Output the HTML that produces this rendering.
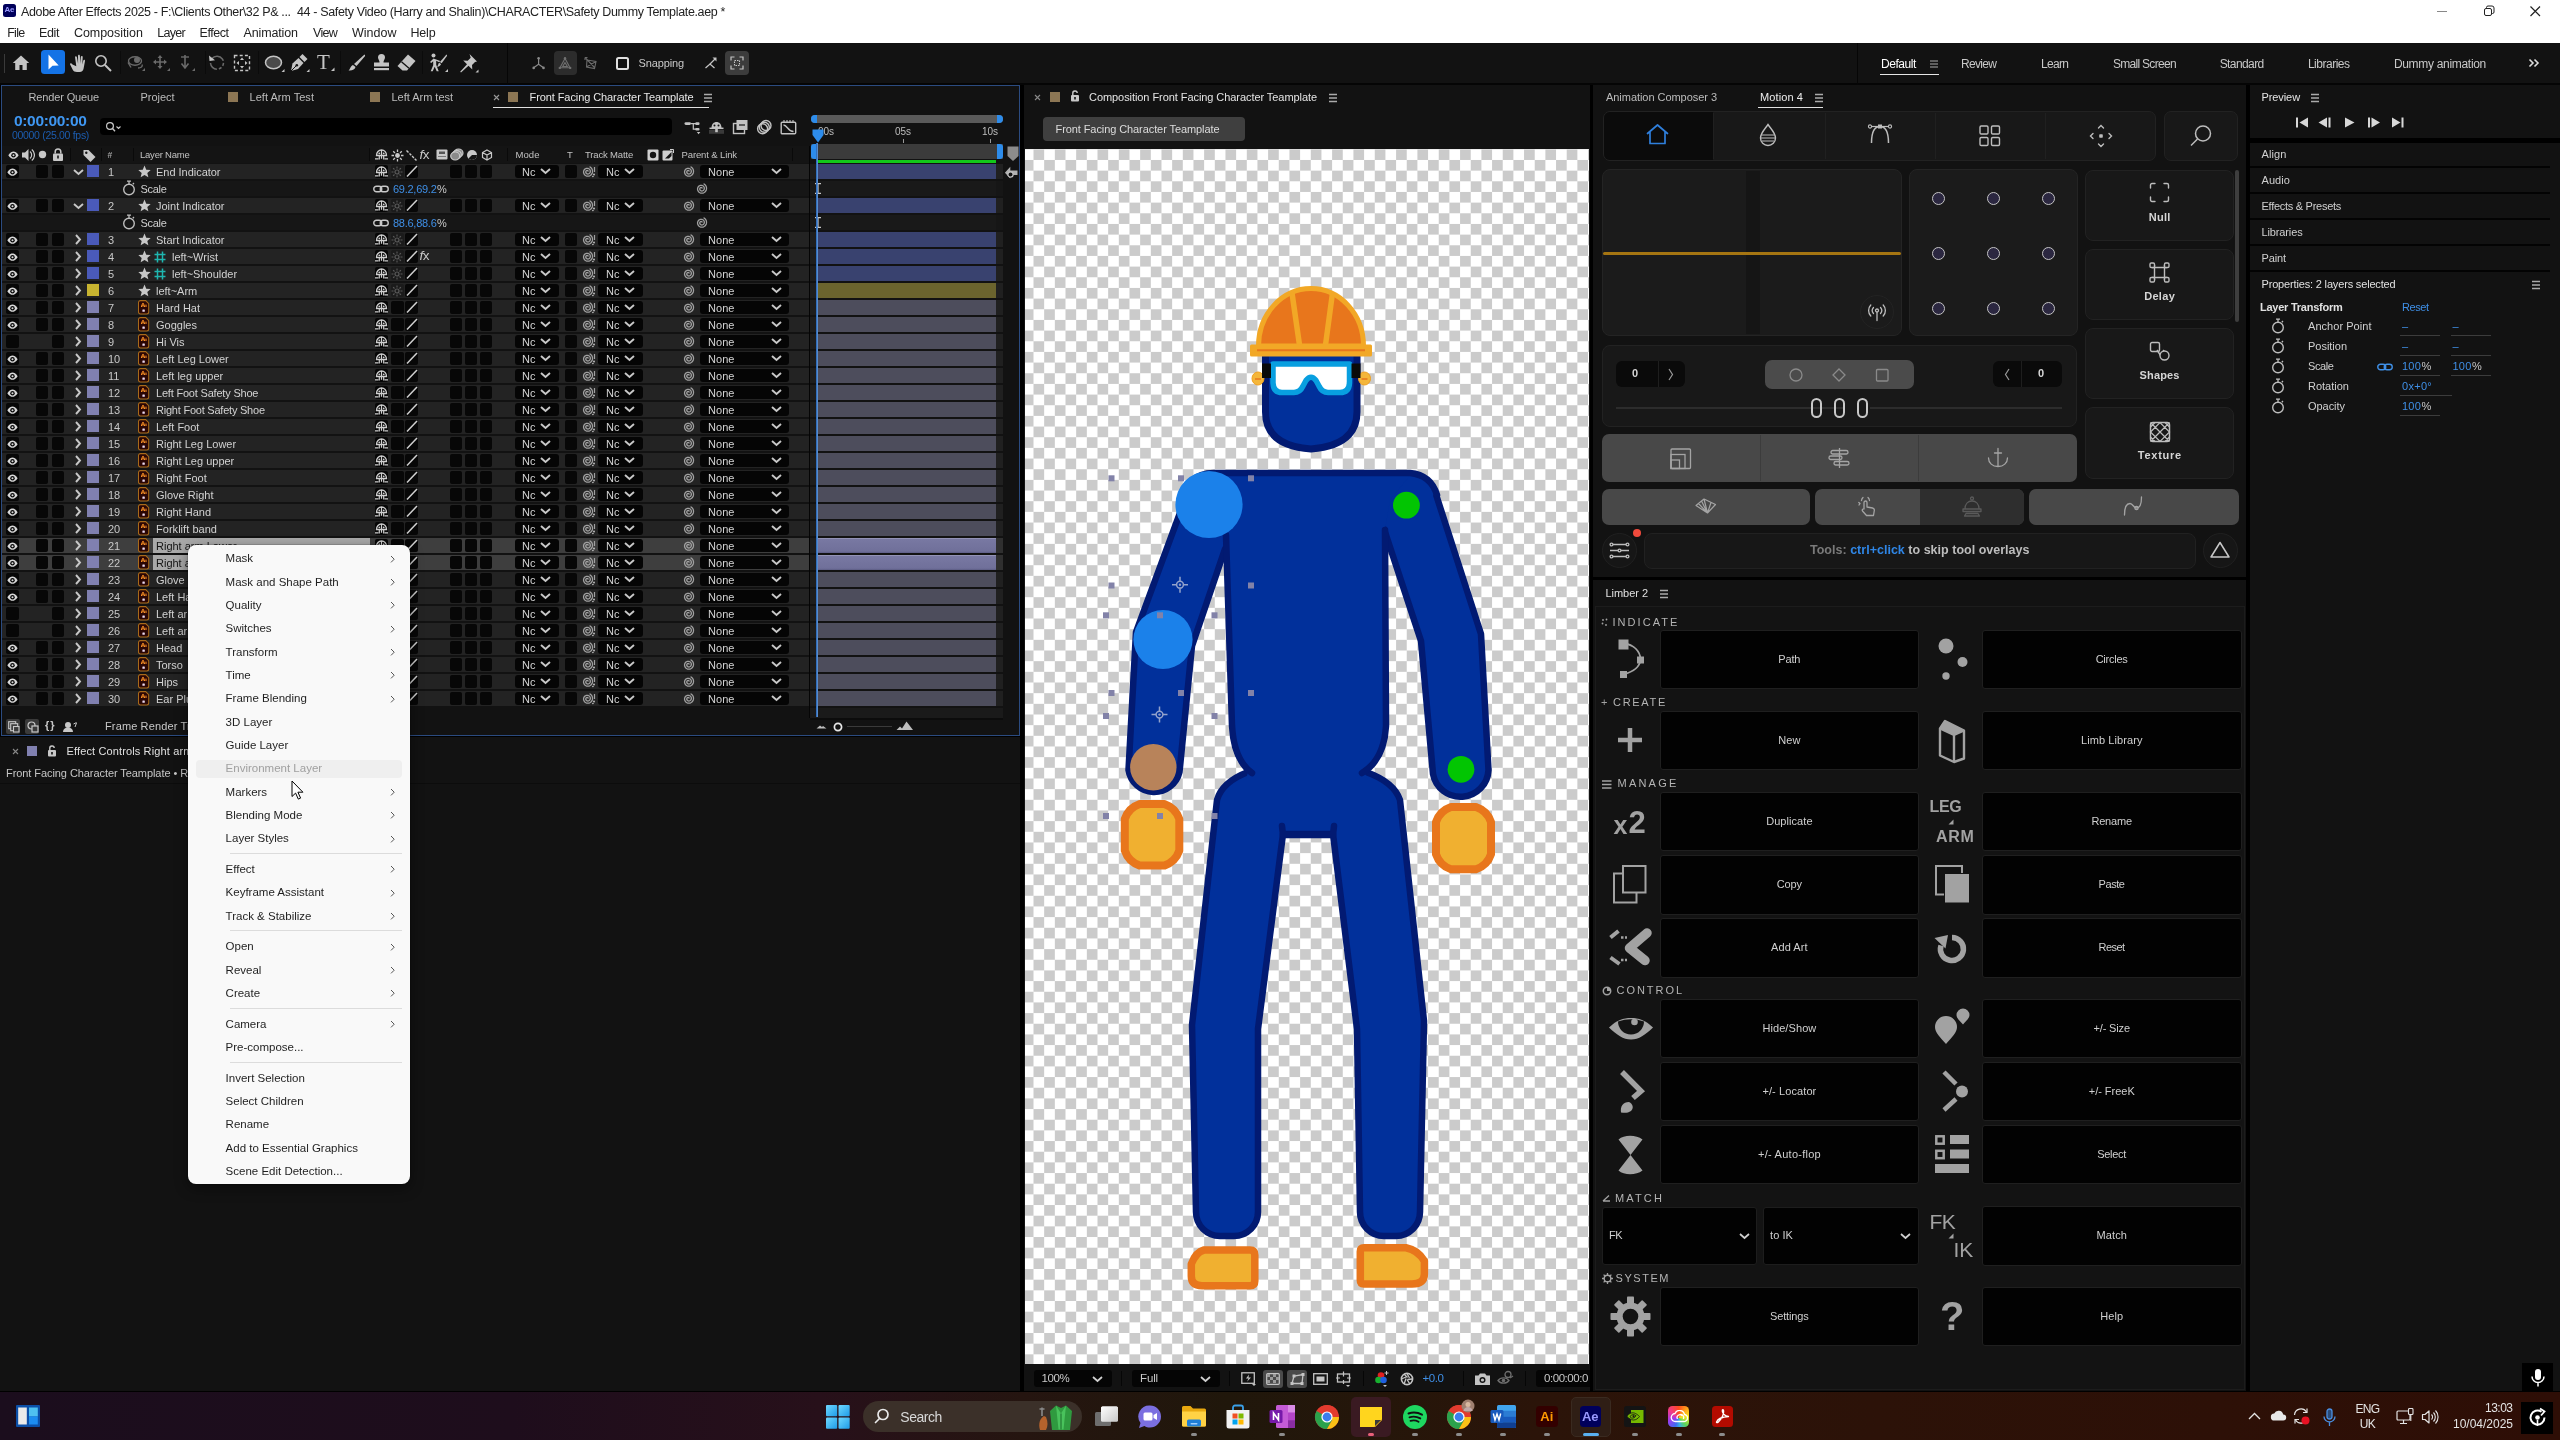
<!DOCTYPE html><html><head><meta charset="utf-8"><title>After Effects</title><style>html,body{margin:0;padding:0;background:#000;overflow:hidden}body{width:2560px;height:1440px;position:relative;font-family:"Liberation Sans",sans-serif}.t{position:absolute;white-space:pre;font-family:"Liberation Sans",sans-serif}.b{position:absolute;display:block}</style></head><body><div id="root" style="position:absolute;left:0;top:0;width:2560px;height:1440px;will-change:transform"><!-- sec_top --><div class="b" style="left:0.00px;top:0.00px;width:2560.00px;height:43.00px;background:#ffffff;"></div><div class="b" style="left:3.00px;top:4.00px;width:13.00px;height:13.00px;background:#00005b;border-radius:2.5px;"><span style="position:absolute;left:1.6px;top:2.2px;font:700 8px/8px 'Liberation Sans',sans-serif;color:#9999ff;letter-spacing:-0.3px">Ae</span></div><span class="t" style="top:5.74px;font-size:12.5px;line-height:12.5px;color:#222;letter-spacing:-0.348px;left:21.00px;">Adobe After Effects 2025 - F:\Clients Other\32 P&amp; ...  44 - Safety Video (Harry and Shalin)\CHARACTER\Safety Dummy Template.aep *</span><span class="t" style="top:26.74px;font-size:12.5px;line-height:12.5px;color:#222;letter-spacing:-0.700px;left:7.20px;">File</span><span class="t" style="top:26.74px;font-size:12.5px;line-height:12.5px;color:#222;letter-spacing:-0.387px;left:39.00px;">Edit</span><span class="t" style="top:26.74px;font-size:12.5px;line-height:12.5px;color:#222;letter-spacing:-0.062px;left:74.00px;">Composition</span><span class="t" style="top:26.74px;font-size:12.5px;line-height:12.5px;color:#222;letter-spacing:-0.700px;left:157.30px;">Layer</span><span class="t" style="top:26.74px;font-size:12.5px;line-height:12.5px;color:#222;letter-spacing:-0.456px;left:199.60px;">Effect</span><span class="t" style="top:26.74px;font-size:12.5px;line-height:12.5px;color:#222;letter-spacing:-0.144px;left:243.50px;">Animation</span><span class="t" style="top:26.74px;font-size:12.5px;line-height:12.5px;color:#222;letter-spacing:-0.700px;left:313.00px;">View</span><span class="t" style="top:26.74px;font-size:12.5px;line-height:12.5px;color:#222;letter-spacing:-0.011px;left:352.00px;">Window</span><span class="t" style="top:26.74px;font-size:12.5px;line-height:12.5px;color:#222;letter-spacing:-0.205px;left:410.50px;">Help</span><svg class="b" style="left:2432.00px;top:0.00px;" width="120" height="22" viewBox="0 0 120 22"><path d="M5 11.5h10" stroke="#888" stroke-width="1"/><rect x="52.5" y="8.5" width="7" height="7" rx="1.5" fill="none" stroke="#222" stroke-width="1"/><path d="M54.5 8.5v-1a1.5 1.5 0 0 1 1.5-1.5h4a2 2 0 0 1 2 2v4a1.5 1.5 0 0 1-1.5 1.5h-1" fill="none" stroke="#222" stroke-width="1"/><path d="M98.5 6.5l9.5 9.5m0-9.5l-9.5 9.5" stroke="#222" stroke-width="1.2"/></svg><div class="b" style="left:0.00px;top:43.00px;width:2560.00px;height:40.00px;background:#121212;"></div><div class="b" style="left:0.00px;top:83.00px;width:2560.00px;height:2.00px;background:#050505;"></div><div class="b" style="left:507.00px;top:43.00px;width:1.00px;height:42.00px;background:#060606;"></div><div class="b" style="left:1857.00px;top:43.00px;width:1.00px;height:42.00px;background:#060606;"></div><div class="b" style="left:3.50px;top:54.00px;width:1.50px;height:19.00px;background:#3a3a3a;"></div><svg class="b" style="left:12.00px;top:54.00px;" width="18" height="18" viewBox="0 0 18 18"><path d="M9 1.5L0.8 9h2.4v7h4.3v-5h3v5h4.3V9h2.4z" fill="#c4c4c4"/></svg><div class="b" style="left:40.90px;top:50.40px;width:24.00px;height:24.00px;background:#1473e6;border-radius:3.5px;"></div><svg class="b" style="left:40.90px;top:50.40px;" width="24" height="24" viewBox="0 0 24 24"><path d="M7.5 4.5v15l4-3.8 6.2-.3z" fill="#fff"/></svg><svg class="b" style="left:69.00px;top:54.00px;" width="18" height="18" viewBox="0 0 18 18"><path d="M3.5 10.5c-1-1.5-2.6-1.6-2.5-.2l2.6 5.2c1 1.8 2.2 2.5 4.4 2.5h2.6c2.4 0 3.6-1.4 4-3.4l1.4-7.7c.2-1.3-1.3-1.6-1.7-.3l-1 3.8.4-7.4c0-1.4-1.8-1.4-1.9 0l-.5 6.8-.4-8c0-1.5-1.9-1.5-1.9 0l.1 8-1.2-6.6c-.3-1.4-2-1.1-1.8.3l1.2 8.800z" fill="#c4c4c4"/></svg><svg class="b" style="left:94.00px;top:54.00px;" width="18" height="18" viewBox="0 0 18 18"><circle cx="7" cy="7" r="5.2" fill="none" stroke="#c4c4c4" stroke-width="1.6"/><path d="M11 11l6 6" stroke="#c4c4c4" stroke-width="2"/></svg><div class="b" style="left:119.50px;top:51.00px;width:1.00px;height:23.00px;background:#0b0b0b;"></div><div class="b" style="left:205.00px;top:51.00px;width:1.00px;height:23.00px;background:#0b0b0b;"></div><div class="b" style="left:258.00px;top:51.00px;width:1.00px;height:23.00px;background:#0b0b0b;"></div><div class="b" style="left:340.00px;top:51.00px;width:1.00px;height:23.00px;background:#0b0b0b;"></div><div class="b" style="left:422.00px;top:51.00px;width:1.00px;height:23.00px;background:#0b0b0b;"></div><svg class="b" style="left:126.00px;top:54.00px;" width="20" height="20" viewBox="0 0 20 20"><ellipse cx="9" cy="7" rx="6.5" ry="4.2" fill="none" stroke="#6a6a6a" stroke-width="1.4"/><circle cx="11" cy="6" r="3" fill="#6a6a6a"/><path d="M2 8.500l3 5M12 14c3 0 5-1.500 4-3.500" fill="none" stroke="#6a6a6a" stroke-width="1.4"/><path d="M16 17l3-3v3z" fill="#6a6a6a"/></svg><svg class="b" style="left:151.00px;top:54.00px;" width="20" height="20" viewBox="0 0 20 20"><path d="M9 1l2.500 3h-1.700v3.200h3.200V5.500l3 2.500-3 2.500V8.800H9.800v3.200h1.700L9 15l-2.500-3h1.700V8.800H5v1.700L2 8l3-2.500v1.700h3.200V4H6.500z" fill="#6a6a6a"/><path d="M16 17l3-3v3z" fill="#6a6a6a"/></svg><svg class="b" style="left:176.00px;top:54.00px;" width="20" height="20" viewBox="0 0 20 20"><path d="M9 1v12M5.500 9.500L9 14l3.500-4.500" fill="none" stroke="#6a6a6a" stroke-width="1.6"/><path d="M5 3h8" stroke="#6a6a6a" stroke-width="1.4"/><path d="M16 17l3-3v3z" fill="#6a6a6a"/></svg><svg class="b" style="left:208.00px;top:54.00px;" width="18" height="18" viewBox="0 0 18 18"><path d="M4 4.500A6.500 6.500 0 1 1 2.500 9" fill="none" stroke="#6a6a6a" stroke-width="1.5" stroke-dasharray="14 2 3 2 3 2 20"/><path d="M1 1.500l.5 5.500 5.500-.8z" fill="#c4c4c4"/></svg><svg class="b" style="left:233.00px;top:54.00px;" width="18" height="18" viewBox="0 0 18 18"><rect x="1.500" y="1.500" width="15" height="15" fill="none" stroke="#c4c4c4" stroke-width="1.400" stroke-dasharray="3 2.200"/><path d="M9 3.500l2 2.500H7zM9 14.500l2-2.500H7zM3.500 9l2.500-2v4zM14.500 9l-2.500-2v4z" fill="#c4c4c4"/></svg><svg class="b" style="left:264.00px;top:54.00px;" width="22" height="20" viewBox="0 0 22 20"><ellipse cx="9.500" cy="8.500" rx="8" ry="6.300" fill="#4a4a4a" stroke="#c4c4c4" stroke-width="1.500"/><path d="M17.500 18l3-3v3z" fill="#c4c4c4"/></svg><svg class="b" style="left:289.00px;top:53.00px;" width="22" height="21" viewBox="0 0 22 21"><path d="M2 18l1.500-7.500 6-5.500 5 5-5.500 6z" fill="#c4c4c4"/><path d="M10.500 4l3-3 5 5-3 3z" fill="#c4c4c4"/><path d="M2 18l5-5" stroke="#121212" stroke-width="1"/><circle cx="7.800" cy="12.200" r="1.300" fill="#121212"/><path d="M17.500 19l3-3v3z" fill="#c4c4c4"/></svg><span class="t" style="top:52.35px;font-size:21px;line-height:21px;color:#c4c4c4;font-family:'Liberation Serif',serif;left:317.00px;">T</span><svg class="b" style="left:330.00px;top:66.00px;" width="6" height="6" viewBox="0 0 6 6"><path d="M1 5l3.500-3.500v3.500z" fill="#c4c4c4"/></svg><svg class="b" style="left:347.00px;top:53.00px;" width="20" height="20" viewBox="0 0 20 20"><path d="M17.500 1.500c.8.600.7 1.300.2 2L9.500 13 7 11z" fill="#c4c4c4"/><path d="M6 12l2.500 2c-.5 2.500-3.500 4-7 3.500 2-1 1.500-4.500 4.500-5.500z" fill="#c4c4c4"/></svg><svg class="b" style="left:372.00px;top:53.00px;" width="20" height="20" viewBox="0 0 20 20"><path d="M7.500 9.500c.3-2-1.500-3-1.500-5a3.500 3.500 0 0 1 7 0c0 2-1.800 3-1.500 5h5.500v4H2v-4z" fill="#c4c4c4"/><rect x="2" y="15" width="15" height="2.200" fill="#c4c4c4"/></svg><svg class="b" style="left:396.00px;top:53.00px;" width="21" height="20" viewBox="0 0 21 20"><path d="M12 1.500l7.500 6.500-8.500 9.500H6.500L1.500 13z" fill="#c4c4c4"/><path d="M5.500 8.800l7.500 6.500" stroke="#121212" stroke-width="1.300"/></svg><svg class="b" style="left:427.00px;top:52.00px;" width="22" height="22" viewBox="0 0 22 22"><circle cx="6.500" cy="3.500" r="2" fill="#c4c4c4"/><path d="M6.500 6.500l-3.500 3.500 1.200 1 2-1.800v4l-2.500 6h2l2-4.500 2 4.500h2l-2.500-6.500v-4l3 1.500 1-1.300z" fill="#c4c4c4"/><path d="M19.500 2.500c.8.500.600 1.200.2 1.800l-5 7-1.800-1.300z" fill="#c4c4c4"/><path d="M12.200 10.800l1.800 1.300c-.300 1.800-2 2.800-4 2.500 1.300-.800 1-3 2.200-3.800z" fill="#c4c4c4"/><path d="M18 20l3-3v3z" fill="#c4c4c4"/></svg><svg class="b" style="left:458.00px;top:53.00px;" width="22" height="21" viewBox="0 0 22 21"><path d="M11.500 1l7.500 7.500-2 .5-3 3 .3 4.500-3.800-3.800L3 19.500l-.8-.8 6.800-7.500L5.200 7.400l4.500.300 3-3z" fill="#c4c4c4"/><path d="M17.500 19.500l3-3v3z" fill="#c4c4c4"/></svg><svg class="b" style="left:530.00px;top:54.00px;" width="18" height="18" viewBox="0 0 18 18"><path d="M8.600 4.500v5.800l-4.600 3.300M8.600 10.300l4.600 3.300" fill="none" stroke="#8a8a8a" stroke-width="1.200"/><circle cx="8.600" cy="4.300" r="1.300" fill="#8a8a8a"/><circle cx="3.700" cy="13.900" r="1.300" fill="#8a8a8a"/><circle cx="13.500" cy="13.900" r="1.300" fill="#8a8a8a"/></svg><div class="b" style="left:554.00px;top:50.50px;width:23.00px;height:24.00px;background:#2c2c2c;border-radius:4px;"></div><svg class="b" style="left:556.00px;top:54.00px;" width="18" height="18" viewBox="0 0 18 18"><path d="M9 4.500L4 13.700h10zM9 8.500l-2.300 4h4.600z" fill="none" stroke="#707070" stroke-width="1.100"/><circle cx="9" cy="4.300" r="1.200" fill="#707070"/><circle cx="3.800" cy="13.900" r="1.200" fill="#707070"/><circle cx="14.200" cy="13.900" r="1.200" fill="#707070"/></svg><svg class="b" style="left:582.00px;top:54.00px;" width="18" height="18" viewBox="0 0 18 18"><path d="M5 6l9 1.500-1.500 7-8-1.500zM3.500 4l9.500 10M14 7.500l-9.500 5.500" fill="none" stroke="#6a6a6a" stroke-width="1.100"/><path d="M3 3.500h2.500M3 3.500v2.500" stroke="#6a6a6a" stroke-width="1.100"/></svg><div class="b" style="left:616.00px;top:56.50px;width:13.00px;height:13.00px;border-radius:2.5px;border:2px solid #e0e0e0;box-sizing:border-box;"></div><span class="t" style="top:57.52px;font-size:11.0px;line-height:11.0px;color:#c8c8c8;letter-spacing:-0.125px;left:638.60px;">Snapping</span><svg class="b" style="left:702.00px;top:54.00px;" width="18" height="18" viewBox="0 0 18 18"><path d="M3.500 14l4.500-4 4.500 4" fill="none" stroke="#c4c4c4" stroke-width="1.300"/><path d="M8 10l5.500-5.500" stroke="#c4c4c4" stroke-width="1.300"/><path d="M10.500 3.500h4v4z" fill="#c4c4c4"/></svg><div class="b" style="left:725.00px;top:50.50px;width:24.00px;height:24.00px;background:#3c3c3c;border-radius:4px;"></div><svg class="b" style="left:728.00px;top:53.50px;" width="18" height="18" viewBox="0 0 18 18"><path d="M3 6.500V3h3.500M11.500 3H15v3.500M15 11.500V15h-3.500M6.500 15H3v-3.500" fill="none" stroke="#c4c4c4" stroke-width="1.200"/><rect x="6.500" y="6.500" width="5" height="5" fill="none" stroke="#c4c4c4" stroke-width="1.100" stroke-dasharray="1.500 1"/></svg><span class="t" style="top:57.60px;font-size:12.0px;line-height:12.0px;color:#fff;letter-spacing:-0.433px;left:1881.00px;">Default</span><span class="t" style="top:57.60px;font-size:12.0px;line-height:12.0px;color:#c8c8c8;letter-spacing:-0.700px;left:1961.00px;">Review</span><span class="t" style="top:57.60px;font-size:12.0px;line-height:12.0px;color:#c8c8c8;letter-spacing:-0.700px;left:2041.00px;">Learn</span><span class="t" style="top:57.60px;font-size:12.0px;line-height:12.0px;color:#c8c8c8;letter-spacing:-0.700px;left:2112.90px;">Small Screen</span><span class="t" style="top:57.60px;font-size:12.0px;line-height:12.0px;color:#c8c8c8;letter-spacing:-0.588px;left:2219.70px;">Standard</span><span class="t" style="top:57.60px;font-size:12.0px;line-height:12.0px;color:#c8c8c8;letter-spacing:-0.481px;left:2307.90px;">Libraries</span><span class="t" style="top:57.60px;font-size:12.0px;line-height:12.0px;color:#c8c8c8;letter-spacing:-0.307px;left:2393.90px;">Dummy animation</span><svg class="b" style="left:1929.00px;top:59.00px;" width="10" height="10" viewBox="0 0 10 10"><path d="M1 2h8M1 5h8M1 8h8" stroke="#aaa" stroke-width="1.200"/></svg><div class="b" style="left:1880.00px;top:73.50px;width:59.00px;height:1.50px;background:#e6e6e6;"></div><svg class="b" style="left:2528.00px;top:58.00px;" width="12" height="10" viewBox="0 0 12 10"><path d="M1.500 1.500l3.500 3.500-3.500 3.500M6.500 1.500l3.500 3.500-3.500 3.500" fill="none" stroke="#ddd" stroke-width="1.600"/></svg>
<!-- sec_timeline --><div class="b" style="left:1.00px;top:85.00px;width:1019.00px;height:651.00px;background:#121212;border:1px solid #2b4b80;box-sizing:border-box;"></div><span class="t" style="top:91.62px;font-size:11.0px;line-height:11.0px;color:#bcbcbc;letter-spacing:-0.139px;left:28.50px;">Render Queue</span><span class="t" style="top:91.62px;font-size:11.0px;line-height:11.0px;color:#bcbcbc;letter-spacing:-0.036px;left:140.50px;">Project</span><div class="b" style="left:228.00px;top:91.50px;width:10.00px;height:10.00px;background:#8c7654;"></div><span class="t" style="top:91.62px;font-size:11.0px;line-height:11.0px;color:#bcbcbc;letter-spacing:0.038px;left:249.50px;">Left Arm Test</span><div class="b" style="left:370.00px;top:91.50px;width:10.00px;height:10.00px;background:#8c7654;"></div><span class="t" style="top:91.62px;font-size:11.0px;line-height:11.0px;color:#bcbcbc;letter-spacing:-0.019px;left:391.50px;">Left Arm test</span><svg class="b" style="left:493.00px;top:94.00px;" width="7" height="7" viewBox="0 0 7 7"><path d="M1 1l5 5M6 1L1 6" stroke="#999" stroke-width="1.100"/></svg><div class="b" style="left:508.00px;top:91.50px;width:10.00px;height:10.00px;background:#8c7654;"></div><span class="t" style="top:91.62px;font-size:11.0px;line-height:11.0px;color:#e8e8e8;letter-spacing:-0.085px;left:529.50px;">Front Facing Character Teamplate</span><svg class="b" style="left:703.00px;top:92.50px;" width="10" height="10" viewBox="0 0 10 10"><path d="M1 1.500h8M1 5h8M1 8.500h8" stroke="#aaa" stroke-width="1.300"/></svg><div class="b" style="left:493.00px;top:106.50px;width:216.00px;height:1.50px;background:#e0e0e0;"></div><span class="t" style="top:112.99px;font-size:15.5px;line-height:15.5px;color:#3f97f2;font-weight:700;letter-spacing:-0.333px;left:14.00px;">0:00:00:00</span><span class="t" style="top:129.88px;font-size:10.5px;line-height:10.5px;color:#1c5cae;letter-spacing:-0.312px;left:12.00px;">00000 (25.00 fps)</span><div class="b" style="left:100.00px;top:117.50px;width:572.00px;height:17.00px;background:#000;border-radius:4px;"></div><svg class="b" style="left:105.00px;top:120.50px;" width="18" height="12" viewBox="0 0 18 12"><circle cx="5" cy="5" r="3.400" fill="none" stroke="#c8c8c8" stroke-width="1.200"/><path d="M7.500 7.500l2.500 2.800" stroke="#c8c8c8" stroke-width="1.300"/><path d="M11.500 5.500l2 2 2-2" fill="none" stroke="#c8c8c8" stroke-width="1.100"/></svg><svg class="b" style="left:684.00px;top:119.50px;" width="17" height="16" viewBox="0 0 17 16"><rect x="0.500" y="2.300" width="6.500" height="2.600" rx="1.300" fill="#c2c2c2"/><path d="M7 3.600h5M9.300 3.600v5.600h3" fill="none" stroke="#c2c2c2" stroke-width="1.200"/><rect x="11.300" y="2.300" width="4.200" height="2.600" rx="1" fill="#c2c2c2"/><rect x="11.300" y="7.900" width="4.200" height="2.600" rx="1" fill="#c2c2c2"/><path d="M12.800 12h3.600l-1.800 2.200z" fill="#c2c2c2"/></svg><svg class="b" style="left:708.00px;top:119.50px;" width="17" height="15" viewBox="0 0 17 15"><rect x="1" y="9.800" width="15" height="4" fill="#3a3a3a"/><path d="M3.500 8C3.500 4 5.800 2 8.500 2S13.500 4 13.500 8z" fill="#c2c2c2"/><circle cx="6.500" cy="5.600" r="1" fill="#121212"/><circle cx="10.500" cy="5.600" r="1" fill="#121212"/><path d="M1.500 8.300h14" stroke="#c2c2c2" stroke-width="1.500"/><rect x="7.200" y="8" width="2.600" height="4.200" fill="#c2c2c2"/></svg><svg class="b" style="left:732.00px;top:119.00px;" width="17" height="16" viewBox="0 0 17 16"><rect x="4.500" y="1" width="11" height="10" fill="#c2c2c2"/><rect x="1.500" y="4.500" width="11" height="10" fill="none" stroke="#c2c2c2" stroke-width="1.400"/><path d="M7 6h6" stroke="#222" stroke-width="1.300"/></svg><svg class="b" style="left:756.00px;top:119.00px;" width="17" height="16" viewBox="0 0 17 16"><circle cx="10" cy="6.500" r="5" fill="none" stroke="#c2c2c2" stroke-width="1.400"/><circle cx="8.300" cy="8.200" r="5" fill="none" stroke="#c2c2c2" stroke-width="1.400"/><circle cx="6.600" cy="9.800" r="5" fill="none" stroke="#c2c2c2" stroke-width="1.400"/></svg><svg class="b" style="left:780.00px;top:118.50px;" width="17" height="16" viewBox="0 0 17 16"><rect x="1.200" y="3.200" width="14.500" height="11.500" rx="1" fill="none" stroke="#c2c2c2" stroke-width="1.400"/><path d="M3.500 6c4 0 4 6.500 10 6.500" fill="none" stroke="#c2c2c2" stroke-width="1.300"/><path d="M4 1v2M7 1v2M10 1v2M13 1v2" stroke="#c2c2c2" stroke-width="1.100"/></svg><div class="b" style="left:811.00px;top:114.80px;width:191.50px;height:8.00px;background:#5a5a5a;border-radius:4px;"></div><div class="b" style="left:811.00px;top:114.80px;width:6.00px;height:8.00px;background:#2d8ceb;border-radius:4px 0 0 4px;"></div><div class="b" style="left:996.50px;top:114.80px;width:6.00px;height:8.00px;background:#2d8ceb;border-radius:0 4px 4px 0;"></div><span class="t" style="top:127.03px;font-size:10px;line-height:10px;color:#bdbdbd;left:826.00px;transform:translateX(-50%);">00s</span><span class="t" style="top:127.03px;font-size:10px;line-height:10px;color:#bdbdbd;left:903.00px;transform:translateX(-50%);">05s</span><span class="t" style="top:127.03px;font-size:10px;line-height:10px;color:#bdbdbd;left:990.00px;transform:translateX(-50%);">10s</span><div class="b" style="left:903.00px;top:139.00px;width:1.00px;height:4.00px;background:#999;"></div><div class="b" style="left:990.00px;top:139.00px;width:1.00px;height:4.00px;background:#999;"></div><div class="b" style="left:2.00px;top:146.00px;width:807.00px;height:17.00px;background:#141414;"></div><svg class="b" style="left:6.50px;top:149.70px;" width="13" height="10"><g transform="translate(0.9 0.9) scale(0.86)"><path d="M0.500 5C2.500 1.800 4.800 0.800 6.500 0.800S10.500 1.800 12.500 5C10.500 8.200 8.200 9.200 6.500 9.200S2.500 8.200 0.500 5z" fill="#d8d8d8"/><circle cx="6.500" cy="5" r="2.600" fill="#070707"/><circle cx="6.500" cy="5" r="1.200" fill="#d8d8d8"/></g></svg><svg class="b" style="left:21.00px;top:148.00px;" width="14" height="14" viewBox="0 0 14 14"><path d="M1 4.500h3l3.500-3.500v12L4 9.500H1z" fill="#c8c8c8"/><path d="M9 3.500a4.500 4.500 0 0 1 0 7M10.800 1.500a7 7 0 0 1 0 11" fill="none" stroke="#c8c8c8" stroke-width="1.200"/></svg><svg class="b" style="left:38.00px;top:150.00px;" width="9" height="9" viewBox="0 0 9 9"><circle cx="4.500" cy="4.500" r="3.700" fill="#c8c8c8"/></svg><svg class="b" style="left:52.00px;top:147.50px;" width="12" height="14" viewBox="0 0 12 14"><rect x="1" y="5.500" width="10" height="7.500" rx="1" fill="#c8c8c8"/><path d="M3.200 5.500V3.800a2.800 2.800 0 0 1 5.600 0v1.700" fill="none" stroke="#c8c8c8" stroke-width="1.500"/><rect x="5.200" y="7.500" width="1.600" height="3" fill="#141414"/></svg><div class="b" style="left:70.00px;top:148.00px;width:1.00px;height:13.00px;background:#0a0a0a;"></div><svg class="b" style="left:82.00px;top:147.50px;" width="15" height="15" viewBox="0 0 15 15"><path d="M1.500 2v5l7 7 5-5-7-7z" fill="#c8c8c8"/><circle cx="4.300" cy="4.800" r="1.200" fill="#141414"/></svg><div class="b" style="left:101.00px;top:148.00px;width:1.00px;height:13.00px;background:#0a0a0a;"></div><span class="t" style="top:150.91px;font-size:8.5px;line-height:8.5px;color:#a0a0a0;font-weight:700;left:107.50px;">#</span><div class="b" style="left:133.00px;top:148.00px;width:1.00px;height:13.00px;background:#0a0a0a;"></div><span class="t" style="top:150.49px;font-size:9.5px;line-height:9.5px;color:#c2c2c2;letter-spacing:-0.225px;left:140.00px;">Layer Name</span><div class="b" style="left:369.00px;top:148.00px;width:1.00px;height:13.00px;background:#0a0a0a;"></div><svg class="b" style="left:374.50px;top:149.00px;" width="13" height="11"><g><path d="M1.500 6.500C1.500 3 3.800 1 6.500 1s5 2 5 5.500z" fill="none" stroke="#d0d0d0" stroke-width="1.300"/><path d="M0 9.800h3M10 9.800h3M4.300 6.500v3.300h-1M8.700 6.500v3.300h1M6.500 1v8.800" stroke="#d0d0d0" stroke-width="1.200" fill="none"/><circle cx="4.300" cy="4.300" r="0.900" fill="#d0d0d0"/><circle cx="8.700" cy="4.300" r="0.900" fill="#d0d0d0"/></g></svg><svg class="b" style="left:390.50px;top:148.50px;" width="13" height="13" viewBox="0 0 13 13"><circle cx="6.500" cy="6.500" r="2.400" fill="#c8c8c8"/><path d="M6.500 0.500v2.500M6.500 10v2.500M0.500 6.500H3M10 6.500h2.500M2.200 2.200l1.800 1.800M9 9l1.800 1.800M10.800 2.200L9 4M4 9l-1.800 1.800" stroke="#c8c8c8" stroke-width="1.300"/></svg><svg class="b" style="left:405.00px;top:148.50px;" width="13" height="13" viewBox="0 0 13 13"><path d="M1.500 1.500l2 2" stroke="#c8c8c8" stroke-width="1.500"/><path d="M4.500 4.500l7 7" stroke="#c8c8c8" stroke-width="1.400" stroke-dasharray="2.500 1.200"/></svg><span class="t" style="top:147.53px;font-size:13.5px;line-height:13.5px;color:#c8c8c8;letter-spacing:-0.500px;left:419.50px;"><i>f</i>x</span><svg class="b" style="left:435.50px;top:149.00px;" width="12" height="11" viewBox="0 0 12 11"><rect x="0.500" y="0.500" width="11" height="10" rx="1" fill="#c8c8c8"/><rect x="3" y="2.500" width="6" height="2.500" fill="#555"/><path d="M2 7.500h8" stroke="#777" stroke-width="1"/></svg><svg class="b" style="left:450.00px;top:148.00px;" width="14" height="13" viewBox="0 0 14 13"><ellipse cx="8.500" cy="5" rx="4.500" ry="4" fill="#8a8a8a" stroke="#c8c8c8" stroke-width="1.200"/><ellipse cx="6.800" cy="6.600" rx="4.500" ry="4" fill="#8a8a8a" stroke="#c8c8c8" stroke-width="1.200"/><ellipse cx="5.200" cy="8" rx="4.500" ry="4" fill="#8a8a8a" stroke="#c8c8c8" stroke-width="1.200"/></svg><svg class="b" style="left:466.00px;top:148.50px;" width="12" height="12" viewBox="0 0 12 12"><circle cx="6" cy="6" r="5" fill="#c8c8c8"/><path d="M6 6L9.500 2.500A5 5 0 0 1 6 11z" fill="#141414" transform="rotate(45 6 6)"/></svg><svg class="b" style="left:481.00px;top:148.50px;" width="12" height="12" viewBox="0 0 12 12"><path d="M6 1l4.500 2.500v5L6 11 1.500 8.500v-5z M1.500 3.500L6 6l4.500-2.500M6 6v5" fill="none" stroke="#c8c8c8" stroke-width="1.200"/></svg><div class="b" style="left:507.00px;top:148.00px;width:1.00px;height:13.00px;background:#0a0a0a;"></div><span class="t" style="top:149.89px;font-size:9.5px;line-height:9.5px;color:#c2c2c2;letter-spacing:0.059px;left:515.50px;">Mode</span><span class="t" style="top:149.89px;font-size:9.5px;line-height:9.5px;color:#c2c2c2;left:567.00px;">T</span><span class="t" style="top:149.89px;font-size:9.5px;line-height:9.5px;color:#c2c2c2;letter-spacing:-0.163px;left:585.00px;">Track Matte</span><svg class="b" style="left:647.00px;top:148.50px;" width="12" height="12" viewBox="0 0 12 12"><rect x="0.500" y="0.500" width="11" height="11" rx="1" fill="#d0d0d0"/><circle cx="6" cy="6" r="3.200" fill="#141414"/></svg><svg class="b" style="left:662.00px;top:148.50px;" width="12" height="12" viewBox="0 0 12 12"><rect x="0.500" y="1.500" width="10" height="10" rx="1" fill="#d0d0d0"/><path d="M3 9.500L9.500 3v4l-2.500 2.500z" fill="#141414"/><path d="M8 0.500h3.500v3.500" fill="none" stroke="#d0d0d0" stroke-width="1"/></svg><span class="t" style="top:149.89px;font-size:9.5px;line-height:9.5px;color:#c2c2c2;letter-spacing:-0.119px;left:681.50px;">Parent &amp; Link</span><div class="b" style="left:792.00px;top:148.00px;width:1.00px;height:13.00px;background:#0a0a0a;"></div><div class="b" style="left:2.00px;top:164.10px;width:807.00px;height:14.70px;background:#232323;"></div><div class="b" style="left:810.00px;top:164.10px;width:8.00px;height:14.70px;background:#1e1e1e;"></div><div class="b" style="left:6.00px;top:165.20px;width:13.00px;height:12.40px;background:#070707;border-radius:2px;"></div><svg class="b" style="left:6.00px;top:166.50px;" width="13" height="10"><g transform="translate(0.9 0.9) scale(0.86)"><path d="M0.500 5C2.500 1.800 4.800 0.800 6.500 0.800S10.500 1.800 12.500 5C10.500 8.200 8.200 9.200 6.500 9.200S2.500 8.200 0.500 5z" fill="#d8d8d8"/><circle cx="6.500" cy="5" r="2.600" fill="#070707"/><circle cx="6.500" cy="5" r="1.200" fill="#d8d8d8"/></g></svg><div class="b" style="left:36.40px;top:165.20px;width:11.80px;height:12.40px;background:#070707;border-radius:2px;"></div><div class="b" style="left:51.60px;top:165.20px;width:12.20px;height:12.40px;background:#070707;border-radius:2px;"></div><svg class="b" style="left:72.50px;top:168.50px;" width="11" height="7"><g><path d="M1 1l4.500 4L10 1" fill="none" stroke="#c8c8c8" stroke-width="1.900"/></g></svg><div class="b" style="left:87.00px;top:165.40px;width:12.00px;height:12.00px;background:#4a5ab9;"></div><span class="t" style="top:166.72px;font-size:11px;line-height:11px;color:#c8c8c8;left:108.00px;">1</span><svg class="b" style="left:137.50px;top:164.50px;" width="13" height="13"><g><path d="M6.500 0.500l1.750 4.200 4.450.35-3.400 2.900 1.050 4.350L6.500 9.950 2.650 12.300 3.700 7.950.3 5.050l4.450-.35z" fill="#c8c8c8"/></g></svg><span class="t" style="top:166.72px;font-size:11.0px;line-height:11.0px;color:#d2d2d2;letter-spacing:-0.025px;left:156.00px;">End Indicator</span><div class="b" style="left:374.50px;top:165.20px;width:13.00px;height:12.40px;background:#070707;border-radius:2px;"></div><svg class="b" style="left:374.50px;top:165.50px;" width="13" height="11"><g><path d="M1.500 6.500C1.500 3 3.800 1 6.500 1s5 2 5 5.500z" fill="none" stroke="#d0d0d0" stroke-width="1.300"/><path d="M0 9.800h3M10 9.800h3M4.300 6.500v3.300h-1M8.700 6.500v3.300h1M6.500 1v8.800" stroke="#d0d0d0" stroke-width="1.200" fill="none"/><circle cx="4.300" cy="4.300" r="0.900" fill="#d0d0d0"/><circle cx="8.700" cy="4.300" r="0.900" fill="#d0d0d0"/></g></svg><div class="b" style="left:390.50px;top:165.20px;width:13.00px;height:12.40px;background:#1b1b1b;border-radius:2px;"></div><svg class="b" style="left:391.00px;top:165.50px;" width="12" height="12"><g><circle cx="6" cy="6" r="2" fill="none" stroke="#5a5a5a" stroke-width="1.200"/><path d="M6 0.500v2M6 9.500v2M0.500 6h2M9.500 6h2M2.100 2.100l1.400 1.400M8.500 8.500l1.400 1.400M9.900 2.100L8.500 3.500M3.500 8.500L2.100 9.900" stroke="#5a5a5a" stroke-width="1.100"/></g></svg><div class="b" style="left:405.00px;top:165.20px;width:13.00px;height:12.40px;background:#070707;border-radius:2px;"></div><svg class="b" style="left:405.50px;top:165.00px;" width="12" height="13"><g><path d="M1 11.500L11 1" stroke="#d0d0d0" stroke-width="1.500"/></g></svg><div class="b" style="left:450.00px;top:165.20px;width:12.20px;height:12.40px;background:#070707;border-radius:2px;"></div><div class="b" style="left:465.00px;top:165.20px;width:12.20px;height:12.40px;background:#070707;border-radius:2px;"></div><div class="b" style="left:480.00px;top:165.20px;width:12.20px;height:12.40px;background:#070707;border-radius:2px;"></div><div class="b" style="left:514.50px;top:165.20px;width:44.00px;height:12.40px;background:#050505;border-radius:3px;"></div><span class="t" style="top:166.72px;font-size:11px;line-height:11px;color:#d4d4d4;left:522.00px;">Nc</span><svg class="b" style="left:540.00px;top:168.30px;" width="11" height="7"><g><path d="M1 1l4.500 4L10 1" fill="none" stroke="#c8c8c8" stroke-width="1.900"/></g></svg><div class="b" style="left:564.50px;top:165.20px;width:12.20px;height:12.40px;background:#070707;border-radius:2px;"></div><svg class="b" style="left:580.50px;top:164.80px;" width="13" height="13"><g><path d="M7.15 6.07 L7.04 5.89 L6.88 5.72 L6.68 5.59 L6.43 5.50 L6.16 5.47 L5.87 5.51 L5.58 5.61 L5.31 5.78 L5.08 6.03 L4.89 6.33 L4.78 6.68 L4.74 7.06 L4.79 7.46 L4.93 7.85 L5.16 8.22 L5.48 8.53 L5.87 8.78 L6.32 8.94 L6.81 9.00 L7.32 8.96 L7.82 8.79 L8.29 8.52 L8.70 8.13 L9.02 7.66 L9.24 7.11 L9.34 6.51 L9.31 5.89 L9.14 5.27 L8.83 4.69 L8.40 4.18 L7.85 3.77 L7.21 3.48 L6.51 3.33 L5.77 3.33 L5.04 3.49 L4.34 3.82 L3.72 4.29 L3.21 4.90 L2.83 5.63 L2.61 6.43 L2.57 7.27 L2.71 8.12 L3.04 8.94 L3.54 9.68 L4.20 10.31 L5.00 10.78 L5.89 11.08 L6.85 11.19 L7.81 11.08 L8.75 10.77 L9.62 10.25 L10.36 9.55 L10.95 8.69 L11.35 7.71 L11.52 6.66 L11.47 5.57 L11.19 4.50 L10.67 3.51 L9.94 2.64 L9.04 1.93" fill="none" stroke="#a0a0a0" stroke-width="1.300" stroke-linecap="round" stroke-linejoin="round"/></g></svg><svg class="b" style="left:592.00px;top:165.50px;" width="5" height="13" viewBox="0 0 5 13"><path d="M2.500 1v5" stroke="#a0a0a0" stroke-width="1.200"/><circle cx="2" cy="8.500" r="0.900" fill="#c8c8c8"/><circle cx="0.900" cy="10.500" r="0.800" fill="#c8c8c8"/></svg><div class="b" style="left:598.00px;top:165.20px;width:44.50px;height:12.40px;background:#050505;border-radius:3px;"></div><span class="t" style="top:166.72px;font-size:11px;line-height:11px;color:#d4d4d4;left:606.00px;">Nc</span><svg class="b" style="left:624.00px;top:168.30px;" width="11" height="7"><g><path d="M1 1l4.500 4L10 1" fill="none" stroke="#c8c8c8" stroke-width="1.900"/></g></svg><svg class="b" style="left:681.50px;top:165.00px;" width="13" height="13"><g><path d="M7.15 6.07 L7.04 5.89 L6.88 5.72 L6.68 5.59 L6.43 5.50 L6.16 5.47 L5.87 5.51 L5.58 5.61 L5.31 5.78 L5.08 6.03 L4.89 6.33 L4.78 6.68 L4.74 7.06 L4.79 7.46 L4.93 7.85 L5.16 8.22 L5.48 8.53 L5.87 8.78 L6.32 8.94 L6.81 9.00 L7.32 8.96 L7.82 8.79 L8.29 8.52 L8.70 8.13 L9.02 7.66 L9.24 7.11 L9.34 6.51 L9.31 5.89 L9.14 5.27 L8.83 4.69 L8.40 4.18 L7.85 3.77 L7.21 3.48 L6.51 3.33 L5.77 3.33 L5.04 3.49 L4.34 3.82 L3.72 4.29 L3.21 4.90 L2.83 5.63 L2.61 6.43 L2.57 7.27 L2.71 8.12 L3.04 8.94 L3.54 9.68 L4.20 10.31 L5.00 10.78 L5.89 11.08 L6.85 11.19 L7.81 11.08 L8.75 10.77 L9.62 10.25 L10.36 9.55 L10.95 8.69 L11.35 7.71 L11.52 6.66 L11.47 5.57 L11.19 4.50 L10.67 3.51 L9.94 2.64 L9.04 1.93" fill="none" stroke="#a0a0a0" stroke-width="1.300" stroke-linecap="round" stroke-linejoin="round"/></g></svg><div class="b" style="left:700.00px;top:165.20px;width:88.50px;height:12.40px;background:#050505;border-radius:3px;"></div><span class="t" style="top:166.72px;font-size:11.0px;line-height:11.0px;color:#d4d4d4;letter-spacing:0.051px;left:708.00px;">None</span><svg class="b" style="left:770.50px;top:168.30px;" width="11" height="7"><g><path d="M1 1l4.500 4L10 1" fill="none" stroke="#c8c8c8" stroke-width="1.900"/></g></svg><div class="b" style="left:818.00px;top:164.10px;width:178.00px;height:14.70px;background:#39426f;"></div><div class="b" style="left:996.00px;top:164.10px;width:7.00px;height:14.70px;background:#202020;"></div><div class="b" style="left:2.00px;top:181.10px;width:807.00px;height:14.70px;background:#161616;"></div><div class="b" style="left:810.00px;top:181.10px;width:186.00px;height:14.70px;background:#191919;"></div><div class="b" style="left:996.00px;top:181.10px;width:7.00px;height:14.70px;background:#161616;"></div><svg class="b" style="left:121.50px;top:180.30px;" width="14" height="16" viewBox="0 0 14 16"><circle cx="7" cy="9.500" r="5.300" fill="none" stroke="#bdbdbd" stroke-width="1.400"/><path d="M5 1.200h4M7 1.200v2.800M10.800 4.200l1.200-1.200" stroke="#bdbdbd" stroke-width="1.300" fill="none"/></svg><span class="t" style="top:184.22px;font-size:11.0px;line-height:11.0px;color:#cfcfcf;letter-spacing:-0.306px;left:140.50px;">Scale</span><svg class="b" style="left:373.00px;top:184.80px;" width="16" height="8" viewBox="0 0 16 8"><rect x="0.750" y="1.250" width="8" height="5.500" rx="2.750" fill="none" stroke="#c8c8c8" stroke-width="1.400"/><rect x="7.250" y="1.250" width="8" height="5.500" rx="2.750" fill="none" stroke="#c8c8c8" stroke-width="1.400"/></svg><span class="t" style="top:184.02px;font-size:11.0px;line-height:11.0px;color:#3f8fe6;letter-spacing:-0.264px;left:393.00px;">69.2,69.2</span><span class="t" style="top:184.02px;font-size:11px;line-height:11px;color:#c8c8c8;left:437.00px;">%</span><svg class="b" style="left:694.50px;top:182.00px;" width="13" height="13"><g><path d="M7.15 6.07 L7.04 5.89 L6.88 5.72 L6.68 5.59 L6.43 5.50 L6.16 5.47 L5.87 5.51 L5.58 5.61 L5.31 5.78 L5.08 6.03 L4.89 6.33 L4.78 6.68 L4.74 7.06 L4.79 7.46 L4.93 7.85 L5.16 8.22 L5.48 8.53 L5.87 8.78 L6.32 8.94 L6.81 9.00 L7.32 8.96 L7.82 8.79 L8.29 8.52 L8.70 8.13 L9.02 7.66 L9.24 7.11 L9.34 6.51 L9.31 5.89 L9.14 5.27 L8.83 4.69 L8.40 4.18 L7.85 3.77 L7.21 3.48 L6.51 3.33 L5.77 3.33 L5.04 3.49 L4.34 3.82 L3.72 4.29 L3.21 4.90 L2.83 5.63 L2.61 6.43 L2.57 7.27 L2.71 8.12 L3.04 8.94 L3.54 9.68 L4.20 10.31 L5.00 10.78 L5.89 11.08 L6.85 11.19 L7.81 11.08 L8.75 10.77 L9.62 10.25 L10.36 9.55 L10.95 8.69 L11.35 7.71 L11.52 6.66 L11.47 5.57 L11.19 4.50 L10.67 3.51 L9.94 2.64 L9.04 1.93" fill="none" stroke="#a0a0a0" stroke-width="1.300" stroke-linecap="round" stroke-linejoin="round"/></g></svg><svg class="b" style="left:813.50px;top:183.00px;" width="8" height="11" viewBox="0 0 8 11"><path d="M1 0.700h6M1 10.300h6M4 0.700v9.600" stroke="#c8c8c8" stroke-width="1.200"/></svg><div class="b" style="left:2.00px;top:198.10px;width:807.00px;height:14.70px;background:#232323;"></div><div class="b" style="left:810.00px;top:198.10px;width:8.00px;height:14.70px;background:#1e1e1e;"></div><div class="b" style="left:6.00px;top:199.20px;width:13.00px;height:12.40px;background:#070707;border-radius:2px;"></div><svg class="b" style="left:6.00px;top:200.50px;" width="13" height="10"><g transform="translate(0.9 0.9) scale(0.86)"><path d="M0.500 5C2.500 1.800 4.800 0.800 6.500 0.800S10.500 1.800 12.500 5C10.500 8.200 8.200 9.200 6.500 9.200S2.500 8.200 0.500 5z" fill="#d8d8d8"/><circle cx="6.500" cy="5" r="2.600" fill="#070707"/><circle cx="6.500" cy="5" r="1.200" fill="#d8d8d8"/></g></svg><div class="b" style="left:36.40px;top:199.20px;width:11.80px;height:12.40px;background:#070707;border-radius:2px;"></div><div class="b" style="left:51.60px;top:199.20px;width:12.20px;height:12.40px;background:#070707;border-radius:2px;"></div><svg class="b" style="left:72.50px;top:202.50px;" width="11" height="7"><g><path d="M1 1l4.500 4L10 1" fill="none" stroke="#c8c8c8" stroke-width="1.900"/></g></svg><div class="b" style="left:87.00px;top:199.40px;width:12.00px;height:12.00px;background:#4a5ab9;"></div><span class="t" style="top:200.72px;font-size:11px;line-height:11px;color:#c8c8c8;left:108.00px;">2</span><svg class="b" style="left:137.50px;top:198.50px;" width="13" height="13"><g><path d="M6.500 0.500l1.750 4.200 4.450.35-3.400 2.900 1.050 4.350L6.500 9.950 2.650 12.300 3.700 7.950.3 5.050l4.450-.35z" fill="#c8c8c8"/></g></svg><span class="t" style="top:200.72px;font-size:11px;line-height:11px;color:#d2d2d2;left:156.00px;">Joint Indicator</span><div class="b" style="left:374.50px;top:199.20px;width:13.00px;height:12.40px;background:#070707;border-radius:2px;"></div><svg class="b" style="left:374.50px;top:199.50px;" width="13" height="11"><g><path d="M1.500 6.500C1.500 3 3.800 1 6.500 1s5 2 5 5.500z" fill="none" stroke="#d0d0d0" stroke-width="1.300"/><path d="M0 9.800h3M10 9.800h3M4.300 6.500v3.300h-1M8.700 6.500v3.300h1M6.500 1v8.800" stroke="#d0d0d0" stroke-width="1.200" fill="none"/><circle cx="4.300" cy="4.300" r="0.900" fill="#d0d0d0"/><circle cx="8.700" cy="4.300" r="0.900" fill="#d0d0d0"/></g></svg><div class="b" style="left:390.50px;top:199.20px;width:13.00px;height:12.40px;background:#1b1b1b;border-radius:2px;"></div><svg class="b" style="left:391.00px;top:199.50px;" width="12" height="12"><g><circle cx="6" cy="6" r="2" fill="none" stroke="#5a5a5a" stroke-width="1.200"/><path d="M6 0.500v2M6 9.500v2M0.500 6h2M9.500 6h2M2.100 2.100l1.400 1.400M8.500 8.500l1.400 1.400M9.900 2.100L8.500 3.500M3.500 8.500L2.100 9.900" stroke="#5a5a5a" stroke-width="1.100"/></g></svg><div class="b" style="left:405.00px;top:199.20px;width:13.00px;height:12.40px;background:#070707;border-radius:2px;"></div><svg class="b" style="left:405.50px;top:199.00px;" width="12" height="13"><g><path d="M1 11.500L11 1" stroke="#d0d0d0" stroke-width="1.500"/></g></svg><div class="b" style="left:450.00px;top:199.20px;width:12.20px;height:12.40px;background:#070707;border-radius:2px;"></div><div class="b" style="left:465.00px;top:199.20px;width:12.20px;height:12.40px;background:#070707;border-radius:2px;"></div><div class="b" style="left:480.00px;top:199.20px;width:12.20px;height:12.40px;background:#070707;border-radius:2px;"></div><div class="b" style="left:514.50px;top:199.20px;width:44.00px;height:12.40px;background:#050505;border-radius:3px;"></div><span class="t" style="top:200.72px;font-size:11px;line-height:11px;color:#d4d4d4;left:522.00px;">Nc</span><svg class="b" style="left:540.00px;top:202.30px;" width="11" height="7"><g><path d="M1 1l4.500 4L10 1" fill="none" stroke="#c8c8c8" stroke-width="1.900"/></g></svg><div class="b" style="left:564.50px;top:199.20px;width:12.20px;height:12.40px;background:#070707;border-radius:2px;"></div><svg class="b" style="left:580.50px;top:198.80px;" width="13" height="13"><g><path d="M7.15 6.07 L7.04 5.89 L6.88 5.72 L6.68 5.59 L6.43 5.50 L6.16 5.47 L5.87 5.51 L5.58 5.61 L5.31 5.78 L5.08 6.03 L4.89 6.33 L4.78 6.68 L4.74 7.06 L4.79 7.46 L4.93 7.85 L5.16 8.22 L5.48 8.53 L5.87 8.78 L6.32 8.94 L6.81 9.00 L7.32 8.96 L7.82 8.79 L8.29 8.52 L8.70 8.13 L9.02 7.66 L9.24 7.11 L9.34 6.51 L9.31 5.89 L9.14 5.27 L8.83 4.69 L8.40 4.18 L7.85 3.77 L7.21 3.48 L6.51 3.33 L5.77 3.33 L5.04 3.49 L4.34 3.82 L3.72 4.29 L3.21 4.90 L2.83 5.63 L2.61 6.43 L2.57 7.27 L2.71 8.12 L3.04 8.94 L3.54 9.68 L4.20 10.31 L5.00 10.78 L5.89 11.08 L6.85 11.19 L7.81 11.08 L8.75 10.77 L9.62 10.25 L10.36 9.55 L10.95 8.69 L11.35 7.71 L11.52 6.66 L11.47 5.57 L11.19 4.50 L10.67 3.51 L9.94 2.64 L9.04 1.93" fill="none" stroke="#a0a0a0" stroke-width="1.300" stroke-linecap="round" stroke-linejoin="round"/></g></svg><svg class="b" style="left:592.00px;top:199.50px;" width="5" height="13" viewBox="0 0 5 13"><path d="M2.500 1v5" stroke="#a0a0a0" stroke-width="1.200"/><circle cx="2" cy="8.500" r="0.900" fill="#c8c8c8"/><circle cx="0.900" cy="10.500" r="0.800" fill="#c8c8c8"/></svg><div class="b" style="left:598.00px;top:199.20px;width:44.50px;height:12.40px;background:#050505;border-radius:3px;"></div><span class="t" style="top:200.72px;font-size:11px;line-height:11px;color:#d4d4d4;left:606.00px;">Nc</span><svg class="b" style="left:624.00px;top:202.30px;" width="11" height="7"><g><path d="M1 1l4.500 4L10 1" fill="none" stroke="#c8c8c8" stroke-width="1.900"/></g></svg><svg class="b" style="left:681.50px;top:199.00px;" width="13" height="13"><g><path d="M7.15 6.07 L7.04 5.89 L6.88 5.72 L6.68 5.59 L6.43 5.50 L6.16 5.47 L5.87 5.51 L5.58 5.61 L5.31 5.78 L5.08 6.03 L4.89 6.33 L4.78 6.68 L4.74 7.06 L4.79 7.46 L4.93 7.85 L5.16 8.22 L5.48 8.53 L5.87 8.78 L6.32 8.94 L6.81 9.00 L7.32 8.96 L7.82 8.79 L8.29 8.52 L8.70 8.13 L9.02 7.66 L9.24 7.11 L9.34 6.51 L9.31 5.89 L9.14 5.27 L8.83 4.69 L8.40 4.18 L7.85 3.77 L7.21 3.48 L6.51 3.33 L5.77 3.33 L5.04 3.49 L4.34 3.82 L3.72 4.29 L3.21 4.90 L2.83 5.63 L2.61 6.43 L2.57 7.27 L2.71 8.12 L3.04 8.94 L3.54 9.68 L4.20 10.31 L5.00 10.78 L5.89 11.08 L6.85 11.19 L7.81 11.08 L8.75 10.77 L9.62 10.25 L10.36 9.55 L10.95 8.69 L11.35 7.71 L11.52 6.66 L11.47 5.57 L11.19 4.50 L10.67 3.51 L9.94 2.64 L9.04 1.93" fill="none" stroke="#a0a0a0" stroke-width="1.300" stroke-linecap="round" stroke-linejoin="round"/></g></svg><div class="b" style="left:700.00px;top:199.20px;width:88.50px;height:12.40px;background:#050505;border-radius:3px;"></div><span class="t" style="top:200.72px;font-size:11.0px;line-height:11.0px;color:#d4d4d4;letter-spacing:0.051px;left:708.00px;">None</span><svg class="b" style="left:770.50px;top:202.30px;" width="11" height="7"><g><path d="M1 1l4.500 4L10 1" fill="none" stroke="#c8c8c8" stroke-width="1.900"/></g></svg><div class="b" style="left:818.00px;top:198.10px;width:178.00px;height:14.70px;background:#39426f;"></div><div class="b" style="left:996.00px;top:198.10px;width:7.00px;height:14.70px;background:#202020;"></div><div class="b" style="left:2.00px;top:215.10px;width:807.00px;height:14.70px;background:#161616;"></div><div class="b" style="left:810.00px;top:215.10px;width:186.00px;height:14.70px;background:#191919;"></div><div class="b" style="left:996.00px;top:215.10px;width:7.00px;height:14.70px;background:#161616;"></div><svg class="b" style="left:121.50px;top:214.30px;" width="14" height="16" viewBox="0 0 14 16"><circle cx="7" cy="9.500" r="5.300" fill="none" stroke="#bdbdbd" stroke-width="1.400"/><path d="M5 1.200h4M7 1.200v2.800M10.800 4.200l1.200-1.200" stroke="#bdbdbd" stroke-width="1.300" fill="none"/></svg><span class="t" style="top:218.22px;font-size:11.0px;line-height:11.0px;color:#cfcfcf;letter-spacing:-0.306px;left:140.50px;">Scale</span><svg class="b" style="left:373.00px;top:218.80px;" width="16" height="8" viewBox="0 0 16 8"><rect x="0.750" y="1.250" width="8" height="5.500" rx="2.750" fill="none" stroke="#c8c8c8" stroke-width="1.400"/><rect x="7.250" y="1.250" width="8" height="5.500" rx="2.750" fill="none" stroke="#c8c8c8" stroke-width="1.400"/></svg><span class="t" style="top:218.02px;font-size:11.0px;line-height:11.0px;color:#3f8fe6;letter-spacing:-0.264px;left:393.00px;">88.6,88.6</span><span class="t" style="top:218.02px;font-size:11px;line-height:11px;color:#c8c8c8;left:437.00px;">%</span><svg class="b" style="left:694.50px;top:216.00px;" width="13" height="13"><g><path d="M7.15 6.07 L7.04 5.89 L6.88 5.72 L6.68 5.59 L6.43 5.50 L6.16 5.47 L5.87 5.51 L5.58 5.61 L5.31 5.78 L5.08 6.03 L4.89 6.33 L4.78 6.68 L4.74 7.06 L4.79 7.46 L4.93 7.85 L5.16 8.22 L5.48 8.53 L5.87 8.78 L6.32 8.94 L6.81 9.00 L7.32 8.96 L7.82 8.79 L8.29 8.52 L8.70 8.13 L9.02 7.66 L9.24 7.11 L9.34 6.51 L9.31 5.89 L9.14 5.27 L8.83 4.69 L8.40 4.18 L7.85 3.77 L7.21 3.48 L6.51 3.33 L5.77 3.33 L5.04 3.49 L4.34 3.82 L3.72 4.29 L3.21 4.90 L2.83 5.63 L2.61 6.43 L2.57 7.27 L2.71 8.12 L3.04 8.94 L3.54 9.68 L4.20 10.31 L5.00 10.78 L5.89 11.08 L6.85 11.19 L7.81 11.08 L8.75 10.77 L9.62 10.25 L10.36 9.55 L10.95 8.69 L11.35 7.71 L11.52 6.66 L11.47 5.57 L11.19 4.50 L10.67 3.51 L9.94 2.64 L9.04 1.93" fill="none" stroke="#a0a0a0" stroke-width="1.300" stroke-linecap="round" stroke-linejoin="round"/></g></svg><svg class="b" style="left:813.50px;top:217.00px;" width="8" height="11" viewBox="0 0 8 11"><path d="M1 0.700h6M1 10.300h6M4 0.700v9.600" stroke="#c8c8c8" stroke-width="1.200"/></svg><div class="b" style="left:2.00px;top:232.10px;width:807.00px;height:14.70px;background:#232323;"></div><div class="b" style="left:810.00px;top:232.10px;width:8.00px;height:14.70px;background:#1e1e1e;"></div><div class="b" style="left:6.00px;top:233.20px;width:13.00px;height:12.40px;background:#070707;border-radius:2px;"></div><svg class="b" style="left:6.00px;top:234.50px;" width="13" height="10"><g transform="translate(0.9 0.9) scale(0.86)"><path d="M0.500 5C2.500 1.800 4.800 0.800 6.500 0.800S10.500 1.800 12.500 5C10.500 8.200 8.200 9.200 6.500 9.200S2.500 8.200 0.500 5z" fill="#d8d8d8"/><circle cx="6.500" cy="5" r="2.600" fill="#070707"/><circle cx="6.500" cy="5" r="1.200" fill="#d8d8d8"/></g></svg><div class="b" style="left:36.40px;top:233.20px;width:11.80px;height:12.40px;background:#070707;border-radius:2px;"></div><div class="b" style="left:51.60px;top:233.20px;width:12.20px;height:12.40px;background:#070707;border-radius:2px;"></div><svg class="b" style="left:75.00px;top:234.00px;" width="7" height="11"><g><path d="M1 1l4 4.500L1 10" fill="none" stroke="#c8c8c8" stroke-width="1.900"/></g></svg><div class="b" style="left:87.00px;top:233.40px;width:12.00px;height:12.00px;background:#4a5ab9;"></div><span class="t" style="top:234.72px;font-size:11px;line-height:11px;color:#c8c8c8;left:108.00px;">3</span><svg class="b" style="left:137.50px;top:232.50px;" width="13" height="13"><g><path d="M6.500 0.500l1.750 4.200 4.450.35-3.400 2.900 1.050 4.350L6.500 9.950 2.650 12.300 3.700 7.950.3 5.050l4.450-.35z" fill="#c8c8c8"/></g></svg><span class="t" style="top:234.72px;font-size:11px;line-height:11px;color:#d2d2d2;left:156.00px;">Start Indicator</span><div class="b" style="left:374.50px;top:233.20px;width:13.00px;height:12.40px;background:#070707;border-radius:2px;"></div><svg class="b" style="left:374.50px;top:233.50px;" width="13" height="11"><g><path d="M1.500 6.500C1.500 3 3.800 1 6.500 1s5 2 5 5.500z" fill="none" stroke="#d0d0d0" stroke-width="1.300"/><path d="M0 9.800h3M10 9.800h3M4.300 6.500v3.300h-1M8.700 6.500v3.300h1M6.500 1v8.800" stroke="#d0d0d0" stroke-width="1.200" fill="none"/><circle cx="4.300" cy="4.300" r="0.900" fill="#d0d0d0"/><circle cx="8.700" cy="4.300" r="0.900" fill="#d0d0d0"/></g></svg><div class="b" style="left:390.50px;top:233.20px;width:13.00px;height:12.40px;background:#1b1b1b;border-radius:2px;"></div><svg class="b" style="left:391.00px;top:233.50px;" width="12" height="12"><g><circle cx="6" cy="6" r="2" fill="none" stroke="#5a5a5a" stroke-width="1.200"/><path d="M6 0.500v2M6 9.500v2M0.500 6h2M9.500 6h2M2.100 2.100l1.400 1.400M8.500 8.500l1.400 1.400M9.900 2.100L8.500 3.500M3.500 8.500L2.100 9.900" stroke="#5a5a5a" stroke-width="1.100"/></g></svg><div class="b" style="left:405.00px;top:233.20px;width:13.00px;height:12.40px;background:#070707;border-radius:2px;"></div><svg class="b" style="left:405.50px;top:233.00px;" width="12" height="13"><g><path d="M1 11.500L11 1" stroke="#d0d0d0" stroke-width="1.500"/></g></svg><div class="b" style="left:450.00px;top:233.20px;width:12.20px;height:12.40px;background:#070707;border-radius:2px;"></div><div class="b" style="left:465.00px;top:233.20px;width:12.20px;height:12.40px;background:#070707;border-radius:2px;"></div><div class="b" style="left:480.00px;top:233.20px;width:12.20px;height:12.40px;background:#070707;border-radius:2px;"></div><div class="b" style="left:514.50px;top:233.20px;width:44.00px;height:12.40px;background:#050505;border-radius:3px;"></div><span class="t" style="top:234.72px;font-size:11px;line-height:11px;color:#d4d4d4;left:522.00px;">Nc</span><svg class="b" style="left:540.00px;top:236.30px;" width="11" height="7"><g><path d="M1 1l4.500 4L10 1" fill="none" stroke="#c8c8c8" stroke-width="1.900"/></g></svg><div class="b" style="left:564.50px;top:233.20px;width:12.20px;height:12.40px;background:#070707;border-radius:2px;"></div><svg class="b" style="left:580.50px;top:232.80px;" width="13" height="13"><g><path d="M7.15 6.07 L7.04 5.89 L6.88 5.72 L6.68 5.59 L6.43 5.50 L6.16 5.47 L5.87 5.51 L5.58 5.61 L5.31 5.78 L5.08 6.03 L4.89 6.33 L4.78 6.68 L4.74 7.06 L4.79 7.46 L4.93 7.85 L5.16 8.22 L5.48 8.53 L5.87 8.78 L6.32 8.94 L6.81 9.00 L7.32 8.96 L7.82 8.79 L8.29 8.52 L8.70 8.13 L9.02 7.66 L9.24 7.11 L9.34 6.51 L9.31 5.89 L9.14 5.27 L8.83 4.69 L8.40 4.18 L7.85 3.77 L7.21 3.48 L6.51 3.33 L5.77 3.33 L5.04 3.49 L4.34 3.82 L3.72 4.29 L3.21 4.90 L2.83 5.63 L2.61 6.43 L2.57 7.27 L2.71 8.12 L3.04 8.94 L3.54 9.68 L4.20 10.31 L5.00 10.78 L5.89 11.08 L6.85 11.19 L7.81 11.08 L8.75 10.77 L9.62 10.25 L10.36 9.55 L10.95 8.69 L11.35 7.71 L11.52 6.66 L11.47 5.57 L11.19 4.50 L10.67 3.51 L9.94 2.64 L9.04 1.93" fill="none" stroke="#a0a0a0" stroke-width="1.300" stroke-linecap="round" stroke-linejoin="round"/></g></svg><svg class="b" style="left:592.00px;top:233.50px;" width="5" height="13" viewBox="0 0 5 13"><path d="M2.500 1v5" stroke="#a0a0a0" stroke-width="1.200"/><circle cx="2" cy="8.500" r="0.900" fill="#c8c8c8"/><circle cx="0.900" cy="10.500" r="0.800" fill="#c8c8c8"/></svg><div class="b" style="left:598.00px;top:233.20px;width:44.50px;height:12.40px;background:#050505;border-radius:3px;"></div><span class="t" style="top:234.72px;font-size:11px;line-height:11px;color:#d4d4d4;left:606.00px;">Nc</span><svg class="b" style="left:624.00px;top:236.30px;" width="11" height="7"><g><path d="M1 1l4.500 4L10 1" fill="none" stroke="#c8c8c8" stroke-width="1.900"/></g></svg><svg class="b" style="left:681.50px;top:233.00px;" width="13" height="13"><g><path d="M7.15 6.07 L7.04 5.89 L6.88 5.72 L6.68 5.59 L6.43 5.50 L6.16 5.47 L5.87 5.51 L5.58 5.61 L5.31 5.78 L5.08 6.03 L4.89 6.33 L4.78 6.68 L4.74 7.06 L4.79 7.46 L4.93 7.85 L5.16 8.22 L5.48 8.53 L5.87 8.78 L6.32 8.94 L6.81 9.00 L7.32 8.96 L7.82 8.79 L8.29 8.52 L8.70 8.13 L9.02 7.66 L9.24 7.11 L9.34 6.51 L9.31 5.89 L9.14 5.27 L8.83 4.69 L8.40 4.18 L7.85 3.77 L7.21 3.48 L6.51 3.33 L5.77 3.33 L5.04 3.49 L4.34 3.82 L3.72 4.29 L3.21 4.90 L2.83 5.63 L2.61 6.43 L2.57 7.27 L2.71 8.12 L3.04 8.94 L3.54 9.68 L4.20 10.31 L5.00 10.78 L5.89 11.08 L6.85 11.19 L7.81 11.08 L8.75 10.77 L9.62 10.25 L10.36 9.55 L10.95 8.69 L11.35 7.71 L11.52 6.66 L11.47 5.57 L11.19 4.50 L10.67 3.51 L9.94 2.64 L9.04 1.93" fill="none" stroke="#a0a0a0" stroke-width="1.300" stroke-linecap="round" stroke-linejoin="round"/></g></svg><div class="b" style="left:700.00px;top:233.20px;width:88.50px;height:12.40px;background:#050505;border-radius:3px;"></div><span class="t" style="top:234.72px;font-size:11.0px;line-height:11.0px;color:#d4d4d4;letter-spacing:0.051px;left:708.00px;">None</span><svg class="b" style="left:770.50px;top:236.30px;" width="11" height="7"><g><path d="M1 1l4.500 4L10 1" fill="none" stroke="#c8c8c8" stroke-width="1.900"/></g></svg><div class="b" style="left:818.00px;top:232.10px;width:178.00px;height:14.70px;background:#39426f;"></div><div class="b" style="left:996.00px;top:232.10px;width:7.00px;height:14.70px;background:#202020;"></div><div class="b" style="left:2.00px;top:249.10px;width:807.00px;height:14.70px;background:#232323;"></div><div class="b" style="left:810.00px;top:249.10px;width:8.00px;height:14.70px;background:#1e1e1e;"></div><div class="b" style="left:6.00px;top:250.20px;width:13.00px;height:12.40px;background:#070707;border-radius:2px;"></div><svg class="b" style="left:6.00px;top:251.50px;" width="13" height="10"><g transform="translate(0.9 0.9) scale(0.86)"><path d="M0.500 5C2.500 1.800 4.800 0.800 6.500 0.800S10.500 1.800 12.500 5C10.500 8.200 8.200 9.200 6.500 9.200S2.500 8.200 0.500 5z" fill="#d8d8d8"/><circle cx="6.500" cy="5" r="2.600" fill="#070707"/><circle cx="6.500" cy="5" r="1.200" fill="#d8d8d8"/></g></svg><div class="b" style="left:36.40px;top:250.20px;width:11.80px;height:12.40px;background:#070707;border-radius:2px;"></div><div class="b" style="left:51.60px;top:250.20px;width:12.20px;height:12.40px;background:#070707;border-radius:2px;"></div><svg class="b" style="left:75.00px;top:251.00px;" width="7" height="11"><g><path d="M1 1l4 4.500L1 10" fill="none" stroke="#c8c8c8" stroke-width="1.900"/></g></svg><div class="b" style="left:87.00px;top:250.40px;width:12.00px;height:12.00px;background:#4a5ab9;"></div><span class="t" style="top:251.72px;font-size:11px;line-height:11px;color:#c8c8c8;left:108.00px;">4</span><svg class="b" style="left:137.50px;top:249.50px;" width="13" height="13"><g><path d="M6.500 0.500l1.750 4.200 4.450.35-3.400 2.900 1.050 4.350L6.500 9.950 2.650 12.300 3.700 7.950.3 5.050l4.450-.35z" fill="#c8c8c8"/></g></svg><svg class="b" style="left:154.00px;top:250.50px;" width="12" height="12"><g><path d="M3.500 0.500v11M8.500 0.500v11M0.500 3.500h11M0.500 8.500h11" stroke="#1fb6b0" stroke-width="1.500" fill="none"/></g></svg><span class="t" style="top:251.72px;font-size:11px;line-height:11px;color:#d2d2d2;left:172.00px;">left~Wrist</span><div class="b" style="left:374.50px;top:250.20px;width:13.00px;height:12.40px;background:#070707;border-radius:2px;"></div><svg class="b" style="left:374.50px;top:250.50px;" width="13" height="11"><g><path d="M1.500 6.500C1.500 3 3.800 1 6.500 1s5 2 5 5.500z" fill="none" stroke="#d0d0d0" stroke-width="1.300"/><path d="M0 9.800h3M10 9.800h3M4.300 6.500v3.300h-1M8.700 6.500v3.300h1M6.500 1v8.800" stroke="#d0d0d0" stroke-width="1.200" fill="none"/><circle cx="4.300" cy="4.300" r="0.900" fill="#d0d0d0"/><circle cx="8.700" cy="4.300" r="0.900" fill="#d0d0d0"/></g></svg><div class="b" style="left:390.50px;top:250.20px;width:13.00px;height:12.40px;background:#1b1b1b;border-radius:2px;"></div><svg class="b" style="left:391.00px;top:250.50px;" width="12" height="12"><g><circle cx="6" cy="6" r="2" fill="none" stroke="#5a5a5a" stroke-width="1.200"/><path d="M6 0.500v2M6 9.500v2M0.500 6h2M9.500 6h2M2.100 2.100l1.400 1.400M8.500 8.500l1.400 1.400M9.900 2.100L8.500 3.500M3.500 8.500L2.100 9.900" stroke="#5a5a5a" stroke-width="1.100"/></g></svg><div class="b" style="left:405.00px;top:250.20px;width:13.00px;height:12.40px;background:#070707;border-radius:2px;"></div><svg class="b" style="left:405.50px;top:250.00px;" width="12" height="13"><g><path d="M1 11.500L11 1" stroke="#d0d0d0" stroke-width="1.500"/></g></svg><span class="t" style="top:249.03px;font-size:13.5px;line-height:13.5px;color:#c8c8c8;letter-spacing:-0.500px;left:419.50px;"><i>f</i>x</span><div class="b" style="left:450.00px;top:250.20px;width:12.20px;height:12.40px;background:#070707;border-radius:2px;"></div><div class="b" style="left:465.00px;top:250.20px;width:12.20px;height:12.40px;background:#070707;border-radius:2px;"></div><div class="b" style="left:480.00px;top:250.20px;width:12.20px;height:12.40px;background:#070707;border-radius:2px;"></div><div class="b" style="left:514.50px;top:250.20px;width:44.00px;height:12.40px;background:#050505;border-radius:3px;"></div><span class="t" style="top:251.72px;font-size:11px;line-height:11px;color:#d4d4d4;left:522.00px;">Nc</span><svg class="b" style="left:540.00px;top:253.30px;" width="11" height="7"><g><path d="M1 1l4.500 4L10 1" fill="none" stroke="#c8c8c8" stroke-width="1.900"/></g></svg><div class="b" style="left:564.50px;top:250.20px;width:12.20px;height:12.40px;background:#070707;border-radius:2px;"></div><svg class="b" style="left:580.50px;top:249.80px;" width="13" height="13"><g><path d="M7.15 6.07 L7.04 5.89 L6.88 5.72 L6.68 5.59 L6.43 5.50 L6.16 5.47 L5.87 5.51 L5.58 5.61 L5.31 5.78 L5.08 6.03 L4.89 6.33 L4.78 6.68 L4.74 7.06 L4.79 7.46 L4.93 7.85 L5.16 8.22 L5.48 8.53 L5.87 8.78 L6.32 8.94 L6.81 9.00 L7.32 8.96 L7.82 8.79 L8.29 8.52 L8.70 8.13 L9.02 7.66 L9.24 7.11 L9.34 6.51 L9.31 5.89 L9.14 5.27 L8.83 4.69 L8.40 4.18 L7.85 3.77 L7.21 3.48 L6.51 3.33 L5.77 3.33 L5.04 3.49 L4.34 3.82 L3.72 4.29 L3.21 4.90 L2.83 5.63 L2.61 6.43 L2.57 7.27 L2.71 8.12 L3.04 8.94 L3.54 9.68 L4.20 10.31 L5.00 10.78 L5.89 11.08 L6.85 11.19 L7.81 11.08 L8.75 10.77 L9.62 10.25 L10.36 9.55 L10.95 8.69 L11.35 7.71 L11.52 6.66 L11.47 5.57 L11.19 4.50 L10.67 3.51 L9.94 2.64 L9.04 1.93" fill="none" stroke="#a0a0a0" stroke-width="1.300" stroke-linecap="round" stroke-linejoin="round"/></g></svg><svg class="b" style="left:592.00px;top:250.50px;" width="5" height="13" viewBox="0 0 5 13"><path d="M2.500 1v5" stroke="#a0a0a0" stroke-width="1.200"/><circle cx="2" cy="8.500" r="0.900" fill="#c8c8c8"/><circle cx="0.900" cy="10.500" r="0.800" fill="#c8c8c8"/></svg><div class="b" style="left:598.00px;top:250.20px;width:44.50px;height:12.40px;background:#050505;border-radius:3px;"></div><span class="t" style="top:251.72px;font-size:11px;line-height:11px;color:#d4d4d4;left:606.00px;">Nc</span><svg class="b" style="left:624.00px;top:253.30px;" width="11" height="7"><g><path d="M1 1l4.500 4L10 1" fill="none" stroke="#c8c8c8" stroke-width="1.900"/></g></svg><svg class="b" style="left:681.50px;top:250.00px;" width="13" height="13"><g><path d="M7.15 6.07 L7.04 5.89 L6.88 5.72 L6.68 5.59 L6.43 5.50 L6.16 5.47 L5.87 5.51 L5.58 5.61 L5.31 5.78 L5.08 6.03 L4.89 6.33 L4.78 6.68 L4.74 7.06 L4.79 7.46 L4.93 7.85 L5.16 8.22 L5.48 8.53 L5.87 8.78 L6.32 8.94 L6.81 9.00 L7.32 8.96 L7.82 8.79 L8.29 8.52 L8.70 8.13 L9.02 7.66 L9.24 7.11 L9.34 6.51 L9.31 5.89 L9.14 5.27 L8.83 4.69 L8.40 4.18 L7.85 3.77 L7.21 3.48 L6.51 3.33 L5.77 3.33 L5.04 3.49 L4.34 3.82 L3.72 4.29 L3.21 4.90 L2.83 5.63 L2.61 6.43 L2.57 7.27 L2.71 8.12 L3.04 8.94 L3.54 9.68 L4.20 10.31 L5.00 10.78 L5.89 11.08 L6.85 11.19 L7.81 11.08 L8.75 10.77 L9.62 10.25 L10.36 9.55 L10.95 8.69 L11.35 7.71 L11.52 6.66 L11.47 5.57 L11.19 4.50 L10.67 3.51 L9.94 2.64 L9.04 1.93" fill="none" stroke="#a0a0a0" stroke-width="1.300" stroke-linecap="round" stroke-linejoin="round"/></g></svg><div class="b" style="left:700.00px;top:250.20px;width:88.50px;height:12.40px;background:#050505;border-radius:3px;"></div><span class="t" style="top:251.72px;font-size:11.0px;line-height:11.0px;color:#d4d4d4;letter-spacing:0.051px;left:708.00px;">None</span><svg class="b" style="left:770.50px;top:253.30px;" width="11" height="7"><g><path d="M1 1l4.500 4L10 1" fill="none" stroke="#c8c8c8" stroke-width="1.900"/></g></svg><div class="b" style="left:818.00px;top:249.10px;width:178.00px;height:14.70px;background:#39426f;"></div><div class="b" style="left:996.00px;top:249.10px;width:7.00px;height:14.70px;background:#202020;"></div><div class="b" style="left:2.00px;top:266.10px;width:807.00px;height:14.70px;background:#232323;"></div><div class="b" style="left:810.00px;top:266.10px;width:8.00px;height:14.70px;background:#1e1e1e;"></div><div class="b" style="left:6.00px;top:267.20px;width:13.00px;height:12.40px;background:#070707;border-radius:2px;"></div><svg class="b" style="left:6.00px;top:268.50px;" width="13" height="10"><g transform="translate(0.9 0.9) scale(0.86)"><path d="M0.500 5C2.500 1.800 4.800 0.800 6.500 0.800S10.500 1.800 12.500 5C10.500 8.200 8.200 9.200 6.500 9.200S2.500 8.200 0.500 5z" fill="#d8d8d8"/><circle cx="6.500" cy="5" r="2.600" fill="#070707"/><circle cx="6.500" cy="5" r="1.200" fill="#d8d8d8"/></g></svg><div class="b" style="left:36.40px;top:267.20px;width:11.80px;height:12.40px;background:#070707;border-radius:2px;"></div><div class="b" style="left:51.60px;top:267.20px;width:12.20px;height:12.40px;background:#070707;border-radius:2px;"></div><svg class="b" style="left:75.00px;top:268.00px;" width="7" height="11"><g><path d="M1 1l4 4.500L1 10" fill="none" stroke="#c8c8c8" stroke-width="1.900"/></g></svg><div class="b" style="left:87.00px;top:267.40px;width:12.00px;height:12.00px;background:#4a5ab9;"></div><span class="t" style="top:268.72px;font-size:11px;line-height:11px;color:#c8c8c8;left:108.00px;">5</span><svg class="b" style="left:137.50px;top:266.50px;" width="13" height="13"><g><path d="M6.500 0.500l1.750 4.200 4.450.35-3.400 2.900 1.050 4.350L6.500 9.950 2.650 12.300 3.700 7.950.3 5.050l4.450-.35z" fill="#c8c8c8"/></g></svg><svg class="b" style="left:154.00px;top:267.50px;" width="12" height="12"><g><path d="M3.500 0.500v11M8.500 0.500v11M0.500 3.500h11M0.500 8.500h11" stroke="#1fb6b0" stroke-width="1.500" fill="none"/></g></svg><span class="t" style="top:268.72px;font-size:11px;line-height:11px;color:#d2d2d2;left:172.00px;">left~Shoulder</span><div class="b" style="left:374.50px;top:267.20px;width:13.00px;height:12.40px;background:#070707;border-radius:2px;"></div><svg class="b" style="left:374.50px;top:267.50px;" width="13" height="11"><g><path d="M1.500 6.500C1.500 3 3.800 1 6.500 1s5 2 5 5.500z" fill="none" stroke="#d0d0d0" stroke-width="1.300"/><path d="M0 9.800h3M10 9.800h3M4.300 6.500v3.300h-1M8.700 6.500v3.300h1M6.500 1v8.800" stroke="#d0d0d0" stroke-width="1.200" fill="none"/><circle cx="4.300" cy="4.300" r="0.900" fill="#d0d0d0"/><circle cx="8.700" cy="4.300" r="0.900" fill="#d0d0d0"/></g></svg><div class="b" style="left:390.50px;top:267.20px;width:13.00px;height:12.40px;background:#1b1b1b;border-radius:2px;"></div><svg class="b" style="left:391.00px;top:267.50px;" width="12" height="12"><g><circle cx="6" cy="6" r="2" fill="none" stroke="#5a5a5a" stroke-width="1.200"/><path d="M6 0.500v2M6 9.500v2M0.500 6h2M9.500 6h2M2.100 2.100l1.400 1.400M8.500 8.500l1.400 1.400M9.900 2.100L8.500 3.500M3.500 8.500L2.100 9.900" stroke="#5a5a5a" stroke-width="1.100"/></g></svg><div class="b" style="left:405.00px;top:267.20px;width:13.00px;height:12.40px;background:#070707;border-radius:2px;"></div><svg class="b" style="left:405.50px;top:267.00px;" width="12" height="13"><g><path d="M1 11.500L11 1" stroke="#d0d0d0" stroke-width="1.500"/></g></svg><div class="b" style="left:450.00px;top:267.20px;width:12.20px;height:12.40px;background:#070707;border-radius:2px;"></div><div class="b" style="left:465.00px;top:267.20px;width:12.20px;height:12.40px;background:#070707;border-radius:2px;"></div><div class="b" style="left:480.00px;top:267.20px;width:12.20px;height:12.40px;background:#070707;border-radius:2px;"></div><div class="b" style="left:514.50px;top:267.20px;width:44.00px;height:12.40px;background:#050505;border-radius:3px;"></div><span class="t" style="top:268.72px;font-size:11px;line-height:11px;color:#d4d4d4;left:522.00px;">Nc</span><svg class="b" style="left:540.00px;top:270.30px;" width="11" height="7"><g><path d="M1 1l4.500 4L10 1" fill="none" stroke="#c8c8c8" stroke-width="1.900"/></g></svg><div class="b" style="left:564.50px;top:267.20px;width:12.20px;height:12.40px;background:#070707;border-radius:2px;"></div><svg class="b" style="left:580.50px;top:266.80px;" width="13" height="13"><g><path d="M7.15 6.07 L7.04 5.89 L6.88 5.72 L6.68 5.59 L6.43 5.50 L6.16 5.47 L5.87 5.51 L5.58 5.61 L5.31 5.78 L5.08 6.03 L4.89 6.33 L4.78 6.68 L4.74 7.06 L4.79 7.46 L4.93 7.85 L5.16 8.22 L5.48 8.53 L5.87 8.78 L6.32 8.94 L6.81 9.00 L7.32 8.96 L7.82 8.79 L8.29 8.52 L8.70 8.13 L9.02 7.66 L9.24 7.11 L9.34 6.51 L9.31 5.89 L9.14 5.27 L8.83 4.69 L8.40 4.18 L7.85 3.77 L7.21 3.48 L6.51 3.33 L5.77 3.33 L5.04 3.49 L4.34 3.82 L3.72 4.29 L3.21 4.90 L2.83 5.63 L2.61 6.43 L2.57 7.27 L2.71 8.12 L3.04 8.94 L3.54 9.68 L4.20 10.31 L5.00 10.78 L5.89 11.08 L6.85 11.19 L7.81 11.08 L8.75 10.77 L9.62 10.25 L10.36 9.55 L10.95 8.69 L11.35 7.71 L11.52 6.66 L11.47 5.57 L11.19 4.50 L10.67 3.51 L9.94 2.64 L9.04 1.93" fill="none" stroke="#a0a0a0" stroke-width="1.300" stroke-linecap="round" stroke-linejoin="round"/></g></svg><svg class="b" style="left:592.00px;top:267.50px;" width="5" height="13" viewBox="0 0 5 13"><path d="M2.500 1v5" stroke="#a0a0a0" stroke-width="1.200"/><circle cx="2" cy="8.500" r="0.900" fill="#c8c8c8"/><circle cx="0.900" cy="10.500" r="0.800" fill="#c8c8c8"/></svg><div class="b" style="left:598.00px;top:267.20px;width:44.50px;height:12.40px;background:#050505;border-radius:3px;"></div><span class="t" style="top:268.72px;font-size:11px;line-height:11px;color:#d4d4d4;left:606.00px;">Nc</span><svg class="b" style="left:624.00px;top:270.30px;" width="11" height="7"><g><path d="M1 1l4.500 4L10 1" fill="none" stroke="#c8c8c8" stroke-width="1.900"/></g></svg><svg class="b" style="left:681.50px;top:267.00px;" width="13" height="13"><g><path d="M7.15 6.07 L7.04 5.89 L6.88 5.72 L6.68 5.59 L6.43 5.50 L6.16 5.47 L5.87 5.51 L5.58 5.61 L5.31 5.78 L5.08 6.03 L4.89 6.33 L4.78 6.68 L4.74 7.06 L4.79 7.46 L4.93 7.85 L5.16 8.22 L5.48 8.53 L5.87 8.78 L6.32 8.94 L6.81 9.00 L7.32 8.96 L7.82 8.79 L8.29 8.52 L8.70 8.13 L9.02 7.66 L9.24 7.11 L9.34 6.51 L9.31 5.89 L9.14 5.27 L8.83 4.69 L8.40 4.18 L7.85 3.77 L7.21 3.48 L6.51 3.33 L5.77 3.33 L5.04 3.49 L4.34 3.82 L3.72 4.29 L3.21 4.90 L2.83 5.63 L2.61 6.43 L2.57 7.27 L2.71 8.12 L3.04 8.94 L3.54 9.68 L4.20 10.31 L5.00 10.78 L5.89 11.08 L6.85 11.19 L7.81 11.08 L8.75 10.77 L9.62 10.25 L10.36 9.55 L10.95 8.69 L11.35 7.71 L11.52 6.66 L11.47 5.57 L11.19 4.50 L10.67 3.51 L9.94 2.64 L9.04 1.93" fill="none" stroke="#a0a0a0" stroke-width="1.300" stroke-linecap="round" stroke-linejoin="round"/></g></svg><div class="b" style="left:700.00px;top:267.20px;width:88.50px;height:12.40px;background:#050505;border-radius:3px;"></div><span class="t" style="top:268.72px;font-size:11.0px;line-height:11.0px;color:#d4d4d4;letter-spacing:0.051px;left:708.00px;">None</span><svg class="b" style="left:770.50px;top:270.30px;" width="11" height="7"><g><path d="M1 1l4.500 4L10 1" fill="none" stroke="#c8c8c8" stroke-width="1.900"/></g></svg><div class="b" style="left:818.00px;top:266.10px;width:178.00px;height:14.70px;background:#39426f;"></div><div class="b" style="left:996.00px;top:266.10px;width:7.00px;height:14.70px;background:#202020;"></div><div class="b" style="left:2.00px;top:283.10px;width:807.00px;height:14.70px;background:#232323;"></div><div class="b" style="left:810.00px;top:283.10px;width:8.00px;height:14.70px;background:#1e1e1e;"></div><div class="b" style="left:6.00px;top:284.20px;width:13.00px;height:12.40px;background:#070707;border-radius:2px;"></div><svg class="b" style="left:6.00px;top:285.50px;" width="13" height="10"><g transform="translate(0.9 0.9) scale(0.86)"><path d="M0.500 5C2.500 1.800 4.800 0.800 6.500 0.800S10.500 1.800 12.500 5C10.500 8.200 8.200 9.200 6.500 9.200S2.500 8.200 0.500 5z" fill="#d8d8d8"/><circle cx="6.500" cy="5" r="2.600" fill="#070707"/><circle cx="6.500" cy="5" r="1.200" fill="#d8d8d8"/></g></svg><div class="b" style="left:36.40px;top:284.20px;width:11.80px;height:12.40px;background:#070707;border-radius:2px;"></div><div class="b" style="left:51.60px;top:284.20px;width:12.20px;height:12.40px;background:#070707;border-radius:2px;"></div><svg class="b" style="left:75.00px;top:285.00px;" width="7" height="11"><g><path d="M1 1l4 4.500L1 10" fill="none" stroke="#c8c8c8" stroke-width="1.900"/></g></svg><div class="b" style="left:87.00px;top:284.40px;width:12.00px;height:12.00px;background:#c8b430;"></div><span class="t" style="top:285.72px;font-size:11px;line-height:11px;color:#c8c8c8;left:108.00px;">6</span><svg class="b" style="left:137.50px;top:283.50px;" width="13" height="13"><g><path d="M6.500 0.500l1.750 4.200 4.450.35-3.400 2.900 1.050 4.350L6.500 9.950 2.650 12.300 3.700 7.950.3 5.050l4.450-.35z" fill="#c8c8c8"/></g></svg><span class="t" style="top:285.72px;font-size:11px;line-height:11px;color:#d2d2d2;left:156.00px;">left~Arm</span><div class="b" style="left:374.50px;top:284.20px;width:13.00px;height:12.40px;background:#070707;border-radius:2px;"></div><svg class="b" style="left:374.50px;top:284.50px;" width="13" height="11"><g><path d="M1.500 6.500C1.500 3 3.800 1 6.500 1s5 2 5 5.500z" fill="none" stroke="#d0d0d0" stroke-width="1.300"/><path d="M0 9.800h3M10 9.800h3M4.300 6.500v3.300h-1M8.700 6.500v3.300h1M6.500 1v8.800" stroke="#d0d0d0" stroke-width="1.200" fill="none"/><circle cx="4.300" cy="4.300" r="0.900" fill="#d0d0d0"/><circle cx="8.700" cy="4.300" r="0.900" fill="#d0d0d0"/></g></svg><div class="b" style="left:390.50px;top:284.20px;width:13.00px;height:12.40px;background:#1b1b1b;border-radius:2px;"></div><svg class="b" style="left:391.00px;top:284.50px;" width="12" height="12"><g><circle cx="6" cy="6" r="2" fill="none" stroke="#5a5a5a" stroke-width="1.200"/><path d="M6 0.500v2M6 9.500v2M0.500 6h2M9.500 6h2M2.100 2.100l1.400 1.400M8.500 8.500l1.400 1.400M9.900 2.100L8.500 3.500M3.500 8.500L2.100 9.900" stroke="#5a5a5a" stroke-width="1.100"/></g></svg><div class="b" style="left:405.00px;top:284.20px;width:13.00px;height:12.40px;background:#070707;border-radius:2px;"></div><svg class="b" style="left:405.50px;top:284.00px;" width="12" height="13"><g><path d="M1 11.500L11 1" stroke="#d0d0d0" stroke-width="1.500"/></g></svg><div class="b" style="left:450.00px;top:284.20px;width:12.20px;height:12.40px;background:#070707;border-radius:2px;"></div><div class="b" style="left:465.00px;top:284.20px;width:12.20px;height:12.40px;background:#070707;border-radius:2px;"></div><div class="b" style="left:480.00px;top:284.20px;width:12.20px;height:12.40px;background:#070707;border-radius:2px;"></div><div class="b" style="left:514.50px;top:284.20px;width:44.00px;height:12.40px;background:#050505;border-radius:3px;"></div><span class="t" style="top:285.72px;font-size:11px;line-height:11px;color:#d4d4d4;left:522.00px;">Nc</span><svg class="b" style="left:540.00px;top:287.30px;" width="11" height="7"><g><path d="M1 1l4.500 4L10 1" fill="none" stroke="#c8c8c8" stroke-width="1.900"/></g></svg><div class="b" style="left:564.50px;top:284.20px;width:12.20px;height:12.40px;background:#070707;border-radius:2px;"></div><svg class="b" style="left:580.50px;top:283.80px;" width="13" height="13"><g><path d="M7.15 6.07 L7.04 5.89 L6.88 5.72 L6.68 5.59 L6.43 5.50 L6.16 5.47 L5.87 5.51 L5.58 5.61 L5.31 5.78 L5.08 6.03 L4.89 6.33 L4.78 6.68 L4.74 7.06 L4.79 7.46 L4.93 7.85 L5.16 8.22 L5.48 8.53 L5.87 8.78 L6.32 8.94 L6.81 9.00 L7.32 8.96 L7.82 8.79 L8.29 8.52 L8.70 8.13 L9.02 7.66 L9.24 7.11 L9.34 6.51 L9.31 5.89 L9.14 5.27 L8.83 4.69 L8.40 4.18 L7.85 3.77 L7.21 3.48 L6.51 3.33 L5.77 3.33 L5.04 3.49 L4.34 3.82 L3.72 4.29 L3.21 4.90 L2.83 5.63 L2.61 6.43 L2.57 7.27 L2.71 8.12 L3.04 8.94 L3.54 9.68 L4.20 10.31 L5.00 10.78 L5.89 11.08 L6.85 11.19 L7.81 11.08 L8.75 10.77 L9.62 10.25 L10.36 9.55 L10.95 8.69 L11.35 7.71 L11.52 6.66 L11.47 5.57 L11.19 4.50 L10.67 3.51 L9.94 2.64 L9.04 1.93" fill="none" stroke="#a0a0a0" stroke-width="1.300" stroke-linecap="round" stroke-linejoin="round"/></g></svg><svg class="b" style="left:592.00px;top:284.50px;" width="5" height="13" viewBox="0 0 5 13"><path d="M2.500 1v5" stroke="#a0a0a0" stroke-width="1.200"/><circle cx="2" cy="8.500" r="0.900" fill="#c8c8c8"/><circle cx="0.900" cy="10.500" r="0.800" fill="#c8c8c8"/></svg><div class="b" style="left:598.00px;top:284.20px;width:44.50px;height:12.40px;background:#050505;border-radius:3px;"></div><span class="t" style="top:285.72px;font-size:11px;line-height:11px;color:#d4d4d4;left:606.00px;">Nc</span><svg class="b" style="left:624.00px;top:287.30px;" width="11" height="7"><g><path d="M1 1l4.500 4L10 1" fill="none" stroke="#c8c8c8" stroke-width="1.900"/></g></svg><svg class="b" style="left:681.50px;top:284.00px;" width="13" height="13"><g><path d="M7.15 6.07 L7.04 5.89 L6.88 5.72 L6.68 5.59 L6.43 5.50 L6.16 5.47 L5.87 5.51 L5.58 5.61 L5.31 5.78 L5.08 6.03 L4.89 6.33 L4.78 6.68 L4.74 7.06 L4.79 7.46 L4.93 7.85 L5.16 8.22 L5.48 8.53 L5.87 8.78 L6.32 8.94 L6.81 9.00 L7.32 8.96 L7.82 8.79 L8.29 8.52 L8.70 8.13 L9.02 7.66 L9.24 7.11 L9.34 6.51 L9.31 5.89 L9.14 5.27 L8.83 4.69 L8.40 4.18 L7.85 3.77 L7.21 3.48 L6.51 3.33 L5.77 3.33 L5.04 3.49 L4.34 3.82 L3.72 4.29 L3.21 4.90 L2.83 5.63 L2.61 6.43 L2.57 7.27 L2.71 8.12 L3.04 8.94 L3.54 9.68 L4.20 10.31 L5.00 10.78 L5.89 11.08 L6.85 11.19 L7.81 11.08 L8.75 10.77 L9.62 10.25 L10.36 9.55 L10.95 8.69 L11.35 7.71 L11.52 6.66 L11.47 5.57 L11.19 4.50 L10.67 3.51 L9.94 2.64 L9.04 1.93" fill="none" stroke="#a0a0a0" stroke-width="1.300" stroke-linecap="round" stroke-linejoin="round"/></g></svg><div class="b" style="left:700.00px;top:284.20px;width:88.50px;height:12.40px;background:#050505;border-radius:3px;"></div><span class="t" style="top:285.72px;font-size:11.0px;line-height:11.0px;color:#d4d4d4;letter-spacing:0.051px;left:708.00px;">None</span><svg class="b" style="left:770.50px;top:287.30px;" width="11" height="7"><g><path d="M1 1l4.500 4L10 1" fill="none" stroke="#c8c8c8" stroke-width="1.900"/></g></svg><div class="b" style="left:818.00px;top:283.10px;width:178.00px;height:14.70px;background:#6b642e;"></div><div class="b" style="left:996.00px;top:283.10px;width:7.00px;height:14.70px;background:#202020;"></div><div class="b" style="left:2.00px;top:300.10px;width:807.00px;height:14.70px;background:#232323;"></div><div class="b" style="left:810.00px;top:300.10px;width:8.00px;height:14.70px;background:#1e1e1e;"></div><div class="b" style="left:6.00px;top:301.20px;width:13.00px;height:12.40px;background:#070707;border-radius:2px;"></div><svg class="b" style="left:6.00px;top:302.50px;" width="13" height="10"><g transform="translate(0.9 0.9) scale(0.86)"><path d="M0.500 5C2.500 1.800 4.800 0.800 6.500 0.800S10.500 1.800 12.500 5C10.500 8.200 8.200 9.200 6.500 9.200S2.500 8.200 0.500 5z" fill="#d8d8d8"/><circle cx="6.500" cy="5" r="2.600" fill="#070707"/><circle cx="6.500" cy="5" r="1.200" fill="#d8d8d8"/></g></svg><div class="b" style="left:36.40px;top:301.20px;width:11.80px;height:12.40px;background:#070707;border-radius:2px;"></div><div class="b" style="left:51.60px;top:301.20px;width:12.20px;height:12.40px;background:#070707;border-radius:2px;"></div><svg class="b" style="left:75.00px;top:302.00px;" width="7" height="11"><g><path d="M1 1l4 4.500L1 10" fill="none" stroke="#c8c8c8" stroke-width="1.900"/></g></svg><div class="b" style="left:87.00px;top:301.40px;width:12.00px;height:12.00px;background:#8080b0;"></div><span class="t" style="top:302.72px;font-size:11px;line-height:11px;color:#c8c8c8;left:108.00px;">7</span><svg class="b" style="left:138.20px;top:300.20px;" width="12" height="15"><g><path d="M2.500 0.600h5.200l3 3v8.400a2 2 0 0 1-2 2H2.500a2 2 0 0 1-2-2V2.600a2 2 0 0 1 2-2z" fill="#2a0604" stroke="#a86a1a" stroke-width="1.050"/><path d="M3.300 7l1.300-3.600h.8L6.700 7M3.800 5.900h2.400M8 4.600V7" stroke="#ff9426" stroke-width="1" fill="none"/><rect x="4.400" y="9.600" width="2.400" height="2.200" rx="0.500" fill="#ead8ee"/></g></svg><span class="t" style="top:302.72px;font-size:11px;line-height:11px;color:#d2d2d2;left:156.00px;">Hard Hat</span><div class="b" style="left:374.50px;top:301.20px;width:13.00px;height:12.40px;background:#070707;border-radius:2px;"></div><svg class="b" style="left:374.50px;top:301.50px;" width="13" height="11"><g><path d="M1.500 6.500C1.500 3 3.800 1 6.500 1s5 2 5 5.500z" fill="none" stroke="#d0d0d0" stroke-width="1.300"/><path d="M0 9.800h3M10 9.800h3M4.300 6.500v3.300h-1M8.700 6.500v3.300h1M6.500 1v8.800" stroke="#d0d0d0" stroke-width="1.200" fill="none"/><circle cx="4.300" cy="4.300" r="0.900" fill="#d0d0d0"/><circle cx="8.700" cy="4.300" r="0.900" fill="#d0d0d0"/></g></svg><div class="b" style="left:390.50px;top:301.20px;width:13.00px;height:12.40px;background:#070707;border-radius:2px;"></div><div class="b" style="left:405.00px;top:301.20px;width:13.00px;height:12.40px;background:#070707;border-radius:2px;"></div><svg class="b" style="left:405.50px;top:301.00px;" width="12" height="13"><g><path d="M1 11.500L11 1" stroke="#d0d0d0" stroke-width="1.500"/></g></svg><div class="b" style="left:450.00px;top:301.20px;width:12.20px;height:12.40px;background:#070707;border-radius:2px;"></div><div class="b" style="left:465.00px;top:301.20px;width:12.20px;height:12.40px;background:#070707;border-radius:2px;"></div><div class="b" style="left:480.00px;top:301.20px;width:12.20px;height:12.40px;background:#070707;border-radius:2px;"></div><div class="b" style="left:514.50px;top:301.20px;width:44.00px;height:12.40px;background:#050505;border-radius:3px;"></div><span class="t" style="top:302.72px;font-size:11px;line-height:11px;color:#d4d4d4;left:522.00px;">Nc</span><svg class="b" style="left:540.00px;top:304.30px;" width="11" height="7"><g><path d="M1 1l4.500 4L10 1" fill="none" stroke="#c8c8c8" stroke-width="1.900"/></g></svg><div class="b" style="left:564.50px;top:301.20px;width:12.20px;height:12.40px;background:#070707;border-radius:2px;"></div><svg class="b" style="left:580.50px;top:300.80px;" width="13" height="13"><g><path d="M7.15 6.07 L7.04 5.89 L6.88 5.72 L6.68 5.59 L6.43 5.50 L6.16 5.47 L5.87 5.51 L5.58 5.61 L5.31 5.78 L5.08 6.03 L4.89 6.33 L4.78 6.68 L4.74 7.06 L4.79 7.46 L4.93 7.85 L5.16 8.22 L5.48 8.53 L5.87 8.78 L6.32 8.94 L6.81 9.00 L7.32 8.96 L7.82 8.79 L8.29 8.52 L8.70 8.13 L9.02 7.66 L9.24 7.11 L9.34 6.51 L9.31 5.89 L9.14 5.27 L8.83 4.69 L8.40 4.18 L7.85 3.77 L7.21 3.48 L6.51 3.33 L5.77 3.33 L5.04 3.49 L4.34 3.82 L3.72 4.29 L3.21 4.90 L2.83 5.63 L2.61 6.43 L2.57 7.27 L2.71 8.12 L3.04 8.94 L3.54 9.68 L4.20 10.31 L5.00 10.78 L5.89 11.08 L6.85 11.19 L7.81 11.08 L8.75 10.77 L9.62 10.25 L10.36 9.55 L10.95 8.69 L11.35 7.71 L11.52 6.66 L11.47 5.57 L11.19 4.50 L10.67 3.51 L9.94 2.64 L9.04 1.93" fill="none" stroke="#a0a0a0" stroke-width="1.300" stroke-linecap="round" stroke-linejoin="round"/></g></svg><svg class="b" style="left:592.00px;top:301.50px;" width="5" height="13" viewBox="0 0 5 13"><path d="M2.500 1v5" stroke="#a0a0a0" stroke-width="1.200"/><circle cx="2" cy="8.500" r="0.900" fill="#c8c8c8"/><circle cx="0.900" cy="10.500" r="0.800" fill="#c8c8c8"/></svg><div class="b" style="left:598.00px;top:301.20px;width:44.50px;height:12.40px;background:#050505;border-radius:3px;"></div><span class="t" style="top:302.72px;font-size:11px;line-height:11px;color:#d4d4d4;left:606.00px;">Nc</span><svg class="b" style="left:624.00px;top:304.30px;" width="11" height="7"><g><path d="M1 1l4.500 4L10 1" fill="none" stroke="#c8c8c8" stroke-width="1.900"/></g></svg><svg class="b" style="left:681.50px;top:301.00px;" width="13" height="13"><g><path d="M7.15 6.07 L7.04 5.89 L6.88 5.72 L6.68 5.59 L6.43 5.50 L6.16 5.47 L5.87 5.51 L5.58 5.61 L5.31 5.78 L5.08 6.03 L4.89 6.33 L4.78 6.68 L4.74 7.06 L4.79 7.46 L4.93 7.85 L5.16 8.22 L5.48 8.53 L5.87 8.78 L6.32 8.94 L6.81 9.00 L7.32 8.96 L7.82 8.79 L8.29 8.52 L8.70 8.13 L9.02 7.66 L9.24 7.11 L9.34 6.51 L9.31 5.89 L9.14 5.27 L8.83 4.69 L8.40 4.18 L7.85 3.77 L7.21 3.48 L6.51 3.33 L5.77 3.33 L5.04 3.49 L4.34 3.82 L3.72 4.29 L3.21 4.90 L2.83 5.63 L2.61 6.43 L2.57 7.27 L2.71 8.12 L3.04 8.94 L3.54 9.68 L4.20 10.31 L5.00 10.78 L5.89 11.08 L6.85 11.19 L7.81 11.08 L8.75 10.77 L9.62 10.25 L10.36 9.55 L10.95 8.69 L11.35 7.71 L11.52 6.66 L11.47 5.57 L11.19 4.50 L10.67 3.51 L9.94 2.64 L9.04 1.93" fill="none" stroke="#a0a0a0" stroke-width="1.300" stroke-linecap="round" stroke-linejoin="round"/></g></svg><div class="b" style="left:700.00px;top:301.20px;width:88.50px;height:12.40px;background:#050505;border-radius:3px;"></div><span class="t" style="top:302.72px;font-size:11.0px;line-height:11.0px;color:#d4d4d4;letter-spacing:0.051px;left:708.00px;">None</span><svg class="b" style="left:770.50px;top:304.30px;" width="11" height="7"><g><path d="M1 1l4.500 4L10 1" fill="none" stroke="#c8c8c8" stroke-width="1.900"/></g></svg><div class="b" style="left:818.00px;top:300.10px;width:178.00px;height:14.70px;background:#4d4d5c;"></div><div class="b" style="left:996.00px;top:300.10px;width:7.00px;height:14.70px;background:#202020;"></div><div class="b" style="left:2.00px;top:317.10px;width:807.00px;height:14.70px;background:#232323;"></div><div class="b" style="left:810.00px;top:317.10px;width:8.00px;height:14.70px;background:#1e1e1e;"></div><div class="b" style="left:6.00px;top:318.20px;width:13.00px;height:12.40px;background:#070707;border-radius:2px;"></div><svg class="b" style="left:6.00px;top:319.50px;" width="13" height="10"><g transform="translate(0.9 0.9) scale(0.86)"><path d="M0.500 5C2.500 1.800 4.800 0.800 6.500 0.800S10.500 1.800 12.500 5C10.500 8.200 8.200 9.200 6.500 9.200S2.500 8.200 0.500 5z" fill="#d8d8d8"/><circle cx="6.500" cy="5" r="2.600" fill="#070707"/><circle cx="6.500" cy="5" r="1.200" fill="#d8d8d8"/></g></svg><div class="b" style="left:36.40px;top:318.20px;width:11.80px;height:12.40px;background:#070707;border-radius:2px;"></div><div class="b" style="left:51.60px;top:318.20px;width:12.20px;height:12.40px;background:#070707;border-radius:2px;"></div><svg class="b" style="left:75.00px;top:319.00px;" width="7" height="11"><g><path d="M1 1l4 4.500L1 10" fill="none" stroke="#c8c8c8" stroke-width="1.900"/></g></svg><div class="b" style="left:87.00px;top:318.40px;width:12.00px;height:12.00px;background:#8080b0;"></div><span class="t" style="top:319.72px;font-size:11px;line-height:11px;color:#c8c8c8;left:108.00px;">8</span><svg class="b" style="left:138.20px;top:317.20px;" width="12" height="15"><g><path d="M2.500 0.600h5.200l3 3v8.400a2 2 0 0 1-2 2H2.500a2 2 0 0 1-2-2V2.600a2 2 0 0 1 2-2z" fill="#2a0604" stroke="#a86a1a" stroke-width="1.050"/><path d="M3.300 7l1.300-3.600h.8L6.700 7M3.800 5.900h2.400M8 4.600V7" stroke="#ff9426" stroke-width="1" fill="none"/><rect x="4.400" y="9.600" width="2.400" height="2.200" rx="0.500" fill="#ead8ee"/></g></svg><span class="t" style="top:319.72px;font-size:11px;line-height:11px;color:#d2d2d2;left:156.00px;">Goggles</span><div class="b" style="left:374.50px;top:318.20px;width:13.00px;height:12.40px;background:#070707;border-radius:2px;"></div><svg class="b" style="left:374.50px;top:318.50px;" width="13" height="11"><g><path d="M1.500 6.500C1.500 3 3.800 1 6.500 1s5 2 5 5.500z" fill="none" stroke="#d0d0d0" stroke-width="1.300"/><path d="M0 9.800h3M10 9.800h3M4.300 6.500v3.300h-1M8.700 6.500v3.300h1M6.500 1v8.800" stroke="#d0d0d0" stroke-width="1.200" fill="none"/><circle cx="4.300" cy="4.300" r="0.900" fill="#d0d0d0"/><circle cx="8.700" cy="4.300" r="0.900" fill="#d0d0d0"/></g></svg><div class="b" style="left:390.50px;top:318.20px;width:13.00px;height:12.40px;background:#070707;border-radius:2px;"></div><div class="b" style="left:405.00px;top:318.20px;width:13.00px;height:12.40px;background:#070707;border-radius:2px;"></div><svg class="b" style="left:405.50px;top:318.00px;" width="12" height="13"><g><path d="M1 11.500L11 1" stroke="#d0d0d0" stroke-width="1.500"/></g></svg><div class="b" style="left:450.00px;top:318.20px;width:12.20px;height:12.40px;background:#070707;border-radius:2px;"></div><div class="b" style="left:465.00px;top:318.20px;width:12.20px;height:12.40px;background:#070707;border-radius:2px;"></div><div class="b" style="left:480.00px;top:318.20px;width:12.20px;height:12.40px;background:#070707;border-radius:2px;"></div><div class="b" style="left:514.50px;top:318.20px;width:44.00px;height:12.40px;background:#050505;border-radius:3px;"></div><span class="t" style="top:319.72px;font-size:11px;line-height:11px;color:#d4d4d4;left:522.00px;">Nc</span><svg class="b" style="left:540.00px;top:321.30px;" width="11" height="7"><g><path d="M1 1l4.500 4L10 1" fill="none" stroke="#c8c8c8" stroke-width="1.900"/></g></svg><div class="b" style="left:564.50px;top:318.20px;width:12.20px;height:12.40px;background:#070707;border-radius:2px;"></div><svg class="b" style="left:580.50px;top:317.80px;" width="13" height="13"><g><path d="M7.15 6.07 L7.04 5.89 L6.88 5.72 L6.68 5.59 L6.43 5.50 L6.16 5.47 L5.87 5.51 L5.58 5.61 L5.31 5.78 L5.08 6.03 L4.89 6.33 L4.78 6.68 L4.74 7.06 L4.79 7.46 L4.93 7.85 L5.16 8.22 L5.48 8.53 L5.87 8.78 L6.32 8.94 L6.81 9.00 L7.32 8.96 L7.82 8.79 L8.29 8.52 L8.70 8.13 L9.02 7.66 L9.24 7.11 L9.34 6.51 L9.31 5.89 L9.14 5.27 L8.83 4.69 L8.40 4.18 L7.85 3.77 L7.21 3.48 L6.51 3.33 L5.77 3.33 L5.04 3.49 L4.34 3.82 L3.72 4.29 L3.21 4.90 L2.83 5.63 L2.61 6.43 L2.57 7.27 L2.71 8.12 L3.04 8.94 L3.54 9.68 L4.20 10.31 L5.00 10.78 L5.89 11.08 L6.85 11.19 L7.81 11.08 L8.75 10.77 L9.62 10.25 L10.36 9.55 L10.95 8.69 L11.35 7.71 L11.52 6.66 L11.47 5.57 L11.19 4.50 L10.67 3.51 L9.94 2.64 L9.04 1.93" fill="none" stroke="#a0a0a0" stroke-width="1.300" stroke-linecap="round" stroke-linejoin="round"/></g></svg><svg class="b" style="left:592.00px;top:318.50px;" width="5" height="13" viewBox="0 0 5 13"><path d="M2.500 1v5" stroke="#a0a0a0" stroke-width="1.200"/><circle cx="2" cy="8.500" r="0.900" fill="#c8c8c8"/><circle cx="0.900" cy="10.500" r="0.800" fill="#c8c8c8"/></svg><div class="b" style="left:598.00px;top:318.20px;width:44.50px;height:12.40px;background:#050505;border-radius:3px;"></div><span class="t" style="top:319.72px;font-size:11px;line-height:11px;color:#d4d4d4;left:606.00px;">Nc</span><svg class="b" style="left:624.00px;top:321.30px;" width="11" height="7"><g><path d="M1 1l4.500 4L10 1" fill="none" stroke="#c8c8c8" stroke-width="1.900"/></g></svg><svg class="b" style="left:681.50px;top:318.00px;" width="13" height="13"><g><path d="M7.15 6.07 L7.04 5.89 L6.88 5.72 L6.68 5.59 L6.43 5.50 L6.16 5.47 L5.87 5.51 L5.58 5.61 L5.31 5.78 L5.08 6.03 L4.89 6.33 L4.78 6.68 L4.74 7.06 L4.79 7.46 L4.93 7.85 L5.16 8.22 L5.48 8.53 L5.87 8.78 L6.32 8.94 L6.81 9.00 L7.32 8.96 L7.82 8.79 L8.29 8.52 L8.70 8.13 L9.02 7.66 L9.24 7.11 L9.34 6.51 L9.31 5.89 L9.14 5.27 L8.83 4.69 L8.40 4.18 L7.85 3.77 L7.21 3.48 L6.51 3.33 L5.77 3.33 L5.04 3.49 L4.34 3.82 L3.72 4.29 L3.21 4.90 L2.83 5.63 L2.61 6.43 L2.57 7.27 L2.71 8.12 L3.04 8.94 L3.54 9.68 L4.20 10.31 L5.00 10.78 L5.89 11.08 L6.85 11.19 L7.81 11.08 L8.75 10.77 L9.62 10.25 L10.36 9.55 L10.95 8.69 L11.35 7.71 L11.52 6.66 L11.47 5.57 L11.19 4.50 L10.67 3.51 L9.94 2.64 L9.04 1.93" fill="none" stroke="#a0a0a0" stroke-width="1.300" stroke-linecap="round" stroke-linejoin="round"/></g></svg><div class="b" style="left:700.00px;top:318.20px;width:88.50px;height:12.40px;background:#050505;border-radius:3px;"></div><span class="t" style="top:319.72px;font-size:11.0px;line-height:11.0px;color:#d4d4d4;letter-spacing:0.051px;left:708.00px;">None</span><svg class="b" style="left:770.50px;top:321.30px;" width="11" height="7"><g><path d="M1 1l4.500 4L10 1" fill="none" stroke="#c8c8c8" stroke-width="1.900"/></g></svg><div class="b" style="left:818.00px;top:317.10px;width:178.00px;height:14.70px;background:#4d4d5c;"></div><div class="b" style="left:996.00px;top:317.10px;width:7.00px;height:14.70px;background:#202020;"></div><div class="b" style="left:2.00px;top:334.10px;width:807.00px;height:14.70px;background:#232323;"></div><div class="b" style="left:810.00px;top:334.10px;width:8.00px;height:14.70px;background:#1e1e1e;"></div><div class="b" style="left:6.00px;top:335.20px;width:13.00px;height:12.40px;background:#070707;border-radius:2px;"></div><div class="b" style="left:51.60px;top:335.20px;width:12.20px;height:12.40px;background:#070707;border-radius:2px;"></div><svg class="b" style="left:75.00px;top:336.00px;" width="7" height="11"><g><path d="M1 1l4 4.500L1 10" fill="none" stroke="#c8c8c8" stroke-width="1.900"/></g></svg><div class="b" style="left:87.00px;top:335.40px;width:12.00px;height:12.00px;background:#8080b0;"></div><span class="t" style="top:336.72px;font-size:11px;line-height:11px;color:#c8c8c8;left:108.00px;">9</span><svg class="b" style="left:138.20px;top:334.20px;" width="12" height="15"><g><path d="M2.500 0.600h5.200l3 3v8.400a2 2 0 0 1-2 2H2.500a2 2 0 0 1-2-2V2.600a2 2 0 0 1 2-2z" fill="#2a0604" stroke="#a86a1a" stroke-width="1.050"/><path d="M3.300 7l1.300-3.600h.8L6.700 7M3.800 5.900h2.400M8 4.600V7" stroke="#ff9426" stroke-width="1" fill="none"/><rect x="4.400" y="9.600" width="2.400" height="2.200" rx="0.500" fill="#ead8ee"/></g></svg><span class="t" style="top:336.72px;font-size:11px;line-height:11px;color:#d2d2d2;left:156.00px;">Hi Vis</span><div class="b" style="left:374.50px;top:335.20px;width:13.00px;height:12.40px;background:#070707;border-radius:2px;"></div><svg class="b" style="left:374.50px;top:335.50px;" width="13" height="11"><g><path d="M1.500 6.500C1.500 3 3.800 1 6.500 1s5 2 5 5.500z" fill="none" stroke="#d0d0d0" stroke-width="1.300"/><path d="M0 9.800h3M10 9.800h3M4.300 6.500v3.300h-1M8.700 6.500v3.300h1M6.500 1v8.800" stroke="#d0d0d0" stroke-width="1.200" fill="none"/><circle cx="4.300" cy="4.300" r="0.900" fill="#d0d0d0"/><circle cx="8.700" cy="4.300" r="0.900" fill="#d0d0d0"/></g></svg><div class="b" style="left:390.50px;top:335.20px;width:13.00px;height:12.40px;background:#070707;border-radius:2px;"></div><div class="b" style="left:405.00px;top:335.20px;width:13.00px;height:12.40px;background:#070707;border-radius:2px;"></div><svg class="b" style="left:405.50px;top:335.00px;" width="12" height="13"><g><path d="M1 11.500L11 1" stroke="#d0d0d0" stroke-width="1.500"/></g></svg><div class="b" style="left:450.00px;top:335.20px;width:12.20px;height:12.40px;background:#070707;border-radius:2px;"></div><div class="b" style="left:465.00px;top:335.20px;width:12.20px;height:12.40px;background:#070707;border-radius:2px;"></div><div class="b" style="left:480.00px;top:335.20px;width:12.20px;height:12.40px;background:#070707;border-radius:2px;"></div><div class="b" style="left:514.50px;top:335.20px;width:44.00px;height:12.40px;background:#050505;border-radius:3px;"></div><span class="t" style="top:336.72px;font-size:11px;line-height:11px;color:#d4d4d4;left:522.00px;">Nc</span><svg class="b" style="left:540.00px;top:338.30px;" width="11" height="7"><g><path d="M1 1l4.500 4L10 1" fill="none" stroke="#c8c8c8" stroke-width="1.900"/></g></svg><div class="b" style="left:564.50px;top:335.20px;width:12.20px;height:12.40px;background:#070707;border-radius:2px;"></div><svg class="b" style="left:580.50px;top:334.80px;" width="13" height="13"><g><path d="M7.15 6.07 L7.04 5.89 L6.88 5.72 L6.68 5.59 L6.43 5.50 L6.16 5.47 L5.87 5.51 L5.58 5.61 L5.31 5.78 L5.08 6.03 L4.89 6.33 L4.78 6.68 L4.74 7.06 L4.79 7.46 L4.93 7.85 L5.16 8.22 L5.48 8.53 L5.87 8.78 L6.32 8.94 L6.81 9.00 L7.32 8.96 L7.82 8.79 L8.29 8.52 L8.70 8.13 L9.02 7.66 L9.24 7.11 L9.34 6.51 L9.31 5.89 L9.14 5.27 L8.83 4.69 L8.40 4.18 L7.85 3.77 L7.21 3.48 L6.51 3.33 L5.77 3.33 L5.04 3.49 L4.34 3.82 L3.72 4.29 L3.21 4.90 L2.83 5.63 L2.61 6.43 L2.57 7.27 L2.71 8.12 L3.04 8.94 L3.54 9.68 L4.20 10.31 L5.00 10.78 L5.89 11.08 L6.85 11.19 L7.81 11.08 L8.75 10.77 L9.62 10.25 L10.36 9.55 L10.95 8.69 L11.35 7.71 L11.52 6.66 L11.47 5.57 L11.19 4.50 L10.67 3.51 L9.94 2.64 L9.04 1.93" fill="none" stroke="#a0a0a0" stroke-width="1.300" stroke-linecap="round" stroke-linejoin="round"/></g></svg><svg class="b" style="left:592.00px;top:335.50px;" width="5" height="13" viewBox="0 0 5 13"><path d="M2.500 1v5" stroke="#a0a0a0" stroke-width="1.200"/><circle cx="2" cy="8.500" r="0.900" fill="#c8c8c8"/><circle cx="0.900" cy="10.500" r="0.800" fill="#c8c8c8"/></svg><div class="b" style="left:598.00px;top:335.20px;width:44.50px;height:12.40px;background:#050505;border-radius:3px;"></div><span class="t" style="top:336.72px;font-size:11px;line-height:11px;color:#d4d4d4;left:606.00px;">Nc</span><svg class="b" style="left:624.00px;top:338.30px;" width="11" height="7"><g><path d="M1 1l4.500 4L10 1" fill="none" stroke="#c8c8c8" stroke-width="1.900"/></g></svg><svg class="b" style="left:681.50px;top:335.00px;" width="13" height="13"><g><path d="M7.15 6.07 L7.04 5.89 L6.88 5.72 L6.68 5.59 L6.43 5.50 L6.16 5.47 L5.87 5.51 L5.58 5.61 L5.31 5.78 L5.08 6.03 L4.89 6.33 L4.78 6.68 L4.74 7.06 L4.79 7.46 L4.93 7.85 L5.16 8.22 L5.48 8.53 L5.87 8.78 L6.32 8.94 L6.81 9.00 L7.32 8.96 L7.82 8.79 L8.29 8.52 L8.70 8.13 L9.02 7.66 L9.24 7.11 L9.34 6.51 L9.31 5.89 L9.14 5.27 L8.83 4.69 L8.40 4.18 L7.85 3.77 L7.21 3.48 L6.51 3.33 L5.77 3.33 L5.04 3.49 L4.34 3.82 L3.72 4.29 L3.21 4.90 L2.83 5.63 L2.61 6.43 L2.57 7.27 L2.71 8.12 L3.04 8.94 L3.54 9.68 L4.20 10.31 L5.00 10.78 L5.89 11.08 L6.85 11.19 L7.81 11.08 L8.75 10.77 L9.62 10.25 L10.36 9.55 L10.95 8.69 L11.35 7.71 L11.52 6.66 L11.47 5.57 L11.19 4.50 L10.67 3.51 L9.94 2.64 L9.04 1.93" fill="none" stroke="#a0a0a0" stroke-width="1.300" stroke-linecap="round" stroke-linejoin="round"/></g></svg><div class="b" style="left:700.00px;top:335.20px;width:88.50px;height:12.40px;background:#050505;border-radius:3px;"></div><span class="t" style="top:336.72px;font-size:11.0px;line-height:11.0px;color:#d4d4d4;letter-spacing:0.051px;left:708.00px;">None</span><svg class="b" style="left:770.50px;top:338.30px;" width="11" height="7"><g><path d="M1 1l4.500 4L10 1" fill="none" stroke="#c8c8c8" stroke-width="1.900"/></g></svg><div class="b" style="left:818.00px;top:334.10px;width:178.00px;height:14.70px;background:#4d4d5c;"></div><div class="b" style="left:996.00px;top:334.10px;width:7.00px;height:14.70px;background:#202020;"></div><div class="b" style="left:2.00px;top:351.10px;width:807.00px;height:14.70px;background:#232323;"></div><div class="b" style="left:810.00px;top:351.10px;width:8.00px;height:14.70px;background:#1e1e1e;"></div><div class="b" style="left:6.00px;top:352.20px;width:13.00px;height:12.40px;background:#070707;border-radius:2px;"></div><svg class="b" style="left:6.00px;top:353.50px;" width="13" height="10"><g transform="translate(0.9 0.9) scale(0.86)"><path d="M0.500 5C2.500 1.800 4.800 0.800 6.500 0.800S10.500 1.800 12.500 5C10.500 8.200 8.200 9.200 6.500 9.200S2.500 8.200 0.500 5z" fill="#d8d8d8"/><circle cx="6.500" cy="5" r="2.600" fill="#070707"/><circle cx="6.500" cy="5" r="1.200" fill="#d8d8d8"/></g></svg><div class="b" style="left:36.40px;top:352.20px;width:11.80px;height:12.40px;background:#070707;border-radius:2px;"></div><div class="b" style="left:51.60px;top:352.20px;width:12.20px;height:12.40px;background:#070707;border-radius:2px;"></div><svg class="b" style="left:75.00px;top:353.00px;" width="7" height="11"><g><path d="M1 1l4 4.500L1 10" fill="none" stroke="#c8c8c8" stroke-width="1.900"/></g></svg><div class="b" style="left:87.00px;top:352.40px;width:12.00px;height:12.00px;background:#8080b0;"></div><span class="t" style="top:353.72px;font-size:11px;line-height:11px;color:#c8c8c8;left:108.00px;">10</span><svg class="b" style="left:138.20px;top:351.20px;" width="12" height="15"><g><path d="M2.500 0.600h5.200l3 3v8.400a2 2 0 0 1-2 2H2.500a2 2 0 0 1-2-2V2.600a2 2 0 0 1 2-2z" fill="#2a0604" stroke="#a86a1a" stroke-width="1.050"/><path d="M3.300 7l1.300-3.600h.8L6.700 7M3.800 5.900h2.400M8 4.600V7" stroke="#ff9426" stroke-width="1" fill="none"/><rect x="4.400" y="9.600" width="2.400" height="2.200" rx="0.500" fill="#ead8ee"/></g></svg><span class="t" style="top:353.72px;font-size:11px;line-height:11px;color:#d2d2d2;left:156.00px;">Left Leg Lower</span><div class="b" style="left:374.50px;top:352.20px;width:13.00px;height:12.40px;background:#070707;border-radius:2px;"></div><svg class="b" style="left:374.50px;top:352.50px;" width="13" height="11"><g><path d="M1.500 6.500C1.500 3 3.800 1 6.500 1s5 2 5 5.500z" fill="none" stroke="#d0d0d0" stroke-width="1.300"/><path d="M0 9.800h3M10 9.800h3M4.300 6.500v3.300h-1M8.700 6.500v3.300h1M6.500 1v8.800" stroke="#d0d0d0" stroke-width="1.200" fill="none"/><circle cx="4.300" cy="4.300" r="0.900" fill="#d0d0d0"/><circle cx="8.700" cy="4.300" r="0.900" fill="#d0d0d0"/></g></svg><div class="b" style="left:390.50px;top:352.20px;width:13.00px;height:12.40px;background:#070707;border-radius:2px;"></div><div class="b" style="left:405.00px;top:352.20px;width:13.00px;height:12.40px;background:#070707;border-radius:2px;"></div><svg class="b" style="left:405.50px;top:352.00px;" width="12" height="13"><g><path d="M1 11.500L11 1" stroke="#d0d0d0" stroke-width="1.500"/></g></svg><div class="b" style="left:450.00px;top:352.20px;width:12.20px;height:12.40px;background:#070707;border-radius:2px;"></div><div class="b" style="left:465.00px;top:352.20px;width:12.20px;height:12.40px;background:#070707;border-radius:2px;"></div><div class="b" style="left:480.00px;top:352.20px;width:12.20px;height:12.40px;background:#070707;border-radius:2px;"></div><div class="b" style="left:514.50px;top:352.20px;width:44.00px;height:12.40px;background:#050505;border-radius:3px;"></div><span class="t" style="top:353.72px;font-size:11px;line-height:11px;color:#d4d4d4;left:522.00px;">Nc</span><svg class="b" style="left:540.00px;top:355.30px;" width="11" height="7"><g><path d="M1 1l4.500 4L10 1" fill="none" stroke="#c8c8c8" stroke-width="1.900"/></g></svg><div class="b" style="left:564.50px;top:352.20px;width:12.20px;height:12.40px;background:#070707;border-radius:2px;"></div><svg class="b" style="left:580.50px;top:351.80px;" width="13" height="13"><g><path d="M7.15 6.07 L7.04 5.89 L6.88 5.72 L6.68 5.59 L6.43 5.50 L6.16 5.47 L5.87 5.51 L5.58 5.61 L5.31 5.78 L5.08 6.03 L4.89 6.33 L4.78 6.68 L4.74 7.06 L4.79 7.46 L4.93 7.85 L5.16 8.22 L5.48 8.53 L5.87 8.78 L6.32 8.94 L6.81 9.00 L7.32 8.96 L7.82 8.79 L8.29 8.52 L8.70 8.13 L9.02 7.66 L9.24 7.11 L9.34 6.51 L9.31 5.89 L9.14 5.27 L8.83 4.69 L8.40 4.18 L7.85 3.77 L7.21 3.48 L6.51 3.33 L5.77 3.33 L5.04 3.49 L4.34 3.82 L3.72 4.29 L3.21 4.90 L2.83 5.63 L2.61 6.43 L2.57 7.27 L2.71 8.12 L3.04 8.94 L3.54 9.68 L4.20 10.31 L5.00 10.78 L5.89 11.08 L6.85 11.19 L7.81 11.08 L8.75 10.77 L9.62 10.25 L10.36 9.55 L10.95 8.69 L11.35 7.71 L11.52 6.66 L11.47 5.57 L11.19 4.50 L10.67 3.51 L9.94 2.64 L9.04 1.93" fill="none" stroke="#a0a0a0" stroke-width="1.300" stroke-linecap="round" stroke-linejoin="round"/></g></svg><svg class="b" style="left:592.00px;top:352.50px;" width="5" height="13" viewBox="0 0 5 13"><path d="M2.500 1v5" stroke="#a0a0a0" stroke-width="1.200"/><circle cx="2" cy="8.500" r="0.900" fill="#c8c8c8"/><circle cx="0.900" cy="10.500" r="0.800" fill="#c8c8c8"/></svg><div class="b" style="left:598.00px;top:352.20px;width:44.50px;height:12.40px;background:#050505;border-radius:3px;"></div><span class="t" style="top:353.72px;font-size:11px;line-height:11px;color:#d4d4d4;left:606.00px;">Nc</span><svg class="b" style="left:624.00px;top:355.30px;" width="11" height="7"><g><path d="M1 1l4.500 4L10 1" fill="none" stroke="#c8c8c8" stroke-width="1.900"/></g></svg><svg class="b" style="left:681.50px;top:352.00px;" width="13" height="13"><g><path d="M7.15 6.07 L7.04 5.89 L6.88 5.72 L6.68 5.59 L6.43 5.50 L6.16 5.47 L5.87 5.51 L5.58 5.61 L5.31 5.78 L5.08 6.03 L4.89 6.33 L4.78 6.68 L4.74 7.06 L4.79 7.46 L4.93 7.85 L5.16 8.22 L5.48 8.53 L5.87 8.78 L6.32 8.94 L6.81 9.00 L7.32 8.96 L7.82 8.79 L8.29 8.52 L8.70 8.13 L9.02 7.66 L9.24 7.11 L9.34 6.51 L9.31 5.89 L9.14 5.27 L8.83 4.69 L8.40 4.18 L7.85 3.77 L7.21 3.48 L6.51 3.33 L5.77 3.33 L5.04 3.49 L4.34 3.82 L3.72 4.29 L3.21 4.90 L2.83 5.63 L2.61 6.43 L2.57 7.27 L2.71 8.12 L3.04 8.94 L3.54 9.68 L4.20 10.31 L5.00 10.78 L5.89 11.08 L6.85 11.19 L7.81 11.08 L8.75 10.77 L9.62 10.25 L10.36 9.55 L10.95 8.69 L11.35 7.71 L11.52 6.66 L11.47 5.57 L11.19 4.50 L10.67 3.51 L9.94 2.64 L9.04 1.93" fill="none" stroke="#a0a0a0" stroke-width="1.300" stroke-linecap="round" stroke-linejoin="round"/></g></svg><div class="b" style="left:700.00px;top:352.20px;width:88.50px;height:12.40px;background:#050505;border-radius:3px;"></div><span class="t" style="top:353.72px;font-size:11.0px;line-height:11.0px;color:#d4d4d4;letter-spacing:0.051px;left:708.00px;">None</span><svg class="b" style="left:770.50px;top:355.30px;" width="11" height="7"><g><path d="M1 1l4.500 4L10 1" fill="none" stroke="#c8c8c8" stroke-width="1.900"/></g></svg><div class="b" style="left:818.00px;top:351.10px;width:178.00px;height:14.70px;background:#4d4d5c;"></div><div class="b" style="left:996.00px;top:351.10px;width:7.00px;height:14.70px;background:#202020;"></div><div class="b" style="left:2.00px;top:368.10px;width:807.00px;height:14.70px;background:#232323;"></div><div class="b" style="left:810.00px;top:368.10px;width:8.00px;height:14.70px;background:#1e1e1e;"></div><div class="b" style="left:6.00px;top:369.20px;width:13.00px;height:12.40px;background:#070707;border-radius:2px;"></div><svg class="b" style="left:6.00px;top:370.50px;" width="13" height="10"><g transform="translate(0.9 0.9) scale(0.86)"><path d="M0.500 5C2.500 1.800 4.800 0.800 6.500 0.800S10.500 1.800 12.500 5C10.500 8.200 8.200 9.200 6.500 9.200S2.500 8.200 0.500 5z" fill="#d8d8d8"/><circle cx="6.500" cy="5" r="2.600" fill="#070707"/><circle cx="6.500" cy="5" r="1.200" fill="#d8d8d8"/></g></svg><div class="b" style="left:36.40px;top:369.20px;width:11.80px;height:12.40px;background:#070707;border-radius:2px;"></div><div class="b" style="left:51.60px;top:369.20px;width:12.20px;height:12.40px;background:#070707;border-radius:2px;"></div><svg class="b" style="left:75.00px;top:370.00px;" width="7" height="11"><g><path d="M1 1l4 4.500L1 10" fill="none" stroke="#c8c8c8" stroke-width="1.900"/></g></svg><div class="b" style="left:87.00px;top:369.40px;width:12.00px;height:12.00px;background:#8080b0;"></div><span class="t" style="top:370.72px;font-size:11px;line-height:11px;color:#c8c8c8;left:108.00px;">11</span><svg class="b" style="left:138.20px;top:368.20px;" width="12" height="15"><g><path d="M2.500 0.600h5.200l3 3v8.400a2 2 0 0 1-2 2H2.500a2 2 0 0 1-2-2V2.600a2 2 0 0 1 2-2z" fill="#2a0604" stroke="#a86a1a" stroke-width="1.050"/><path d="M3.300 7l1.300-3.600h.8L6.700 7M3.800 5.900h2.400M8 4.600V7" stroke="#ff9426" stroke-width="1" fill="none"/><rect x="4.400" y="9.600" width="2.400" height="2.200" rx="0.500" fill="#ead8ee"/></g></svg><span class="t" style="top:370.72px;font-size:11px;line-height:11px;color:#d2d2d2;left:156.00px;">Left leg upper</span><div class="b" style="left:374.50px;top:369.20px;width:13.00px;height:12.40px;background:#070707;border-radius:2px;"></div><svg class="b" style="left:374.50px;top:369.50px;" width="13" height="11"><g><path d="M1.500 6.500C1.500 3 3.800 1 6.500 1s5 2 5 5.500z" fill="none" stroke="#d0d0d0" stroke-width="1.300"/><path d="M0 9.800h3M10 9.800h3M4.300 6.500v3.300h-1M8.700 6.500v3.300h1M6.500 1v8.800" stroke="#d0d0d0" stroke-width="1.200" fill="none"/><circle cx="4.300" cy="4.300" r="0.900" fill="#d0d0d0"/><circle cx="8.700" cy="4.300" r="0.900" fill="#d0d0d0"/></g></svg><div class="b" style="left:390.50px;top:369.20px;width:13.00px;height:12.40px;background:#070707;border-radius:2px;"></div><div class="b" style="left:405.00px;top:369.20px;width:13.00px;height:12.40px;background:#070707;border-radius:2px;"></div><svg class="b" style="left:405.50px;top:369.00px;" width="12" height="13"><g><path d="M1 11.500L11 1" stroke="#d0d0d0" stroke-width="1.500"/></g></svg><div class="b" style="left:450.00px;top:369.20px;width:12.20px;height:12.40px;background:#070707;border-radius:2px;"></div><div class="b" style="left:465.00px;top:369.20px;width:12.20px;height:12.40px;background:#070707;border-radius:2px;"></div><div class="b" style="left:480.00px;top:369.20px;width:12.20px;height:12.40px;background:#070707;border-radius:2px;"></div><div class="b" style="left:514.50px;top:369.20px;width:44.00px;height:12.40px;background:#050505;border-radius:3px;"></div><span class="t" style="top:370.72px;font-size:11px;line-height:11px;color:#d4d4d4;left:522.00px;">Nc</span><svg class="b" style="left:540.00px;top:372.30px;" width="11" height="7"><g><path d="M1 1l4.500 4L10 1" fill="none" stroke="#c8c8c8" stroke-width="1.900"/></g></svg><div class="b" style="left:564.50px;top:369.20px;width:12.20px;height:12.40px;background:#070707;border-radius:2px;"></div><svg class="b" style="left:580.50px;top:368.80px;" width="13" height="13"><g><path d="M7.15 6.07 L7.04 5.89 L6.88 5.72 L6.68 5.59 L6.43 5.50 L6.16 5.47 L5.87 5.51 L5.58 5.61 L5.31 5.78 L5.08 6.03 L4.89 6.33 L4.78 6.68 L4.74 7.06 L4.79 7.46 L4.93 7.85 L5.16 8.22 L5.48 8.53 L5.87 8.78 L6.32 8.94 L6.81 9.00 L7.32 8.96 L7.82 8.79 L8.29 8.52 L8.70 8.13 L9.02 7.66 L9.24 7.11 L9.34 6.51 L9.31 5.89 L9.14 5.27 L8.83 4.69 L8.40 4.18 L7.85 3.77 L7.21 3.48 L6.51 3.33 L5.77 3.33 L5.04 3.49 L4.34 3.82 L3.72 4.29 L3.21 4.90 L2.83 5.63 L2.61 6.43 L2.57 7.27 L2.71 8.12 L3.04 8.94 L3.54 9.68 L4.20 10.31 L5.00 10.78 L5.89 11.08 L6.85 11.19 L7.81 11.08 L8.75 10.77 L9.62 10.25 L10.36 9.55 L10.95 8.69 L11.35 7.71 L11.52 6.66 L11.47 5.57 L11.19 4.50 L10.67 3.51 L9.94 2.64 L9.04 1.93" fill="none" stroke="#a0a0a0" stroke-width="1.300" stroke-linecap="round" stroke-linejoin="round"/></g></svg><svg class="b" style="left:592.00px;top:369.50px;" width="5" height="13" viewBox="0 0 5 13"><path d="M2.500 1v5" stroke="#a0a0a0" stroke-width="1.200"/><circle cx="2" cy="8.500" r="0.900" fill="#c8c8c8"/><circle cx="0.900" cy="10.500" r="0.800" fill="#c8c8c8"/></svg><div class="b" style="left:598.00px;top:369.20px;width:44.50px;height:12.40px;background:#050505;border-radius:3px;"></div><span class="t" style="top:370.72px;font-size:11px;line-height:11px;color:#d4d4d4;left:606.00px;">Nc</span><svg class="b" style="left:624.00px;top:372.30px;" width="11" height="7"><g><path d="M1 1l4.500 4L10 1" fill="none" stroke="#c8c8c8" stroke-width="1.900"/></g></svg><svg class="b" style="left:681.50px;top:369.00px;" width="13" height="13"><g><path d="M7.15 6.07 L7.04 5.89 L6.88 5.72 L6.68 5.59 L6.43 5.50 L6.16 5.47 L5.87 5.51 L5.58 5.61 L5.31 5.78 L5.08 6.03 L4.89 6.33 L4.78 6.68 L4.74 7.06 L4.79 7.46 L4.93 7.85 L5.16 8.22 L5.48 8.53 L5.87 8.78 L6.32 8.94 L6.81 9.00 L7.32 8.96 L7.82 8.79 L8.29 8.52 L8.70 8.13 L9.02 7.66 L9.24 7.11 L9.34 6.51 L9.31 5.89 L9.14 5.27 L8.83 4.69 L8.40 4.18 L7.85 3.77 L7.21 3.48 L6.51 3.33 L5.77 3.33 L5.04 3.49 L4.34 3.82 L3.72 4.29 L3.21 4.90 L2.83 5.63 L2.61 6.43 L2.57 7.27 L2.71 8.12 L3.04 8.94 L3.54 9.68 L4.20 10.31 L5.00 10.78 L5.89 11.08 L6.85 11.19 L7.81 11.08 L8.75 10.77 L9.62 10.25 L10.36 9.55 L10.95 8.69 L11.35 7.71 L11.52 6.66 L11.47 5.57 L11.19 4.50 L10.67 3.51 L9.94 2.64 L9.04 1.93" fill="none" stroke="#a0a0a0" stroke-width="1.300" stroke-linecap="round" stroke-linejoin="round"/></g></svg><div class="b" style="left:700.00px;top:369.20px;width:88.50px;height:12.40px;background:#050505;border-radius:3px;"></div><span class="t" style="top:370.72px;font-size:11.0px;line-height:11.0px;color:#d4d4d4;letter-spacing:0.051px;left:708.00px;">None</span><svg class="b" style="left:770.50px;top:372.30px;" width="11" height="7"><g><path d="M1 1l4.500 4L10 1" fill="none" stroke="#c8c8c8" stroke-width="1.900"/></g></svg><div class="b" style="left:818.00px;top:368.10px;width:178.00px;height:14.70px;background:#4d4d5c;"></div><div class="b" style="left:996.00px;top:368.10px;width:7.00px;height:14.70px;background:#202020;"></div><div class="b" style="left:2.00px;top:385.10px;width:807.00px;height:14.70px;background:#232323;"></div><div class="b" style="left:810.00px;top:385.10px;width:8.00px;height:14.70px;background:#1e1e1e;"></div><div class="b" style="left:6.00px;top:386.20px;width:13.00px;height:12.40px;background:#070707;border-radius:2px;"></div><svg class="b" style="left:6.00px;top:387.50px;" width="13" height="10"><g transform="translate(0.9 0.9) scale(0.86)"><path d="M0.500 5C2.500 1.800 4.800 0.800 6.500 0.800S10.500 1.800 12.500 5C10.500 8.200 8.200 9.200 6.500 9.200S2.500 8.200 0.500 5z" fill="#d8d8d8"/><circle cx="6.500" cy="5" r="2.600" fill="#070707"/><circle cx="6.500" cy="5" r="1.200" fill="#d8d8d8"/></g></svg><div class="b" style="left:36.40px;top:386.20px;width:11.80px;height:12.40px;background:#070707;border-radius:2px;"></div><div class="b" style="left:51.60px;top:386.20px;width:12.20px;height:12.40px;background:#070707;border-radius:2px;"></div><svg class="b" style="left:75.00px;top:387.00px;" width="7" height="11"><g><path d="M1 1l4 4.500L1 10" fill="none" stroke="#c8c8c8" stroke-width="1.900"/></g></svg><div class="b" style="left:87.00px;top:386.40px;width:12.00px;height:12.00px;background:#8080b0;"></div><span class="t" style="top:387.72px;font-size:11px;line-height:11px;color:#c8c8c8;left:108.00px;">12</span><svg class="b" style="left:138.20px;top:385.20px;" width="12" height="15"><g><path d="M2.500 0.600h5.200l3 3v8.400a2 2 0 0 1-2 2H2.500a2 2 0 0 1-2-2V2.600a2 2 0 0 1 2-2z" fill="#2a0604" stroke="#a86a1a" stroke-width="1.050"/><path d="M3.300 7l1.300-3.600h.8L6.700 7M3.800 5.900h2.400M8 4.600V7" stroke="#ff9426" stroke-width="1" fill="none"/><rect x="4.400" y="9.600" width="2.400" height="2.200" rx="0.500" fill="#ead8ee"/></g></svg><span class="t" style="top:387.72px;font-size:11.0px;line-height:11.0px;color:#d2d2d2;letter-spacing:-0.196px;left:156.00px;">Left Foot Safety Shoe</span><div class="b" style="left:374.50px;top:386.20px;width:13.00px;height:12.40px;background:#070707;border-radius:2px;"></div><svg class="b" style="left:374.50px;top:386.50px;" width="13" height="11"><g><path d="M1.500 6.500C1.500 3 3.800 1 6.500 1s5 2 5 5.500z" fill="none" stroke="#d0d0d0" stroke-width="1.300"/><path d="M0 9.800h3M10 9.800h3M4.300 6.500v3.300h-1M8.700 6.500v3.300h1M6.500 1v8.800" stroke="#d0d0d0" stroke-width="1.200" fill="none"/><circle cx="4.300" cy="4.300" r="0.900" fill="#d0d0d0"/><circle cx="8.700" cy="4.300" r="0.900" fill="#d0d0d0"/></g></svg><div class="b" style="left:390.50px;top:386.20px;width:13.00px;height:12.40px;background:#070707;border-radius:2px;"></div><div class="b" style="left:405.00px;top:386.20px;width:13.00px;height:12.40px;background:#070707;border-radius:2px;"></div><svg class="b" style="left:405.50px;top:386.00px;" width="12" height="13"><g><path d="M1 11.500L11 1" stroke="#d0d0d0" stroke-width="1.500"/></g></svg><div class="b" style="left:450.00px;top:386.20px;width:12.20px;height:12.40px;background:#070707;border-radius:2px;"></div><div class="b" style="left:465.00px;top:386.20px;width:12.20px;height:12.40px;background:#070707;border-radius:2px;"></div><div class="b" style="left:480.00px;top:386.20px;width:12.20px;height:12.40px;background:#070707;border-radius:2px;"></div><div class="b" style="left:514.50px;top:386.20px;width:44.00px;height:12.40px;background:#050505;border-radius:3px;"></div><span class="t" style="top:387.72px;font-size:11px;line-height:11px;color:#d4d4d4;left:522.00px;">Nc</span><svg class="b" style="left:540.00px;top:389.30px;" width="11" height="7"><g><path d="M1 1l4.500 4L10 1" fill="none" stroke="#c8c8c8" stroke-width="1.900"/></g></svg><div class="b" style="left:564.50px;top:386.20px;width:12.20px;height:12.40px;background:#070707;border-radius:2px;"></div><svg class="b" style="left:580.50px;top:385.80px;" width="13" height="13"><g><path d="M7.15 6.07 L7.04 5.89 L6.88 5.72 L6.68 5.59 L6.43 5.50 L6.16 5.47 L5.87 5.51 L5.58 5.61 L5.31 5.78 L5.08 6.03 L4.89 6.33 L4.78 6.68 L4.74 7.06 L4.79 7.46 L4.93 7.85 L5.16 8.22 L5.48 8.53 L5.87 8.78 L6.32 8.94 L6.81 9.00 L7.32 8.96 L7.82 8.79 L8.29 8.52 L8.70 8.13 L9.02 7.66 L9.24 7.11 L9.34 6.51 L9.31 5.89 L9.14 5.27 L8.83 4.69 L8.40 4.18 L7.85 3.77 L7.21 3.48 L6.51 3.33 L5.77 3.33 L5.04 3.49 L4.34 3.82 L3.72 4.29 L3.21 4.90 L2.83 5.63 L2.61 6.43 L2.57 7.27 L2.71 8.12 L3.04 8.94 L3.54 9.68 L4.20 10.31 L5.00 10.78 L5.89 11.08 L6.85 11.19 L7.81 11.08 L8.75 10.77 L9.62 10.25 L10.36 9.55 L10.95 8.69 L11.35 7.71 L11.52 6.66 L11.47 5.57 L11.19 4.50 L10.67 3.51 L9.94 2.64 L9.04 1.93" fill="none" stroke="#a0a0a0" stroke-width="1.300" stroke-linecap="round" stroke-linejoin="round"/></g></svg><svg class="b" style="left:592.00px;top:386.50px;" width="5" height="13" viewBox="0 0 5 13"><path d="M2.500 1v5" stroke="#a0a0a0" stroke-width="1.200"/><circle cx="2" cy="8.500" r="0.900" fill="#c8c8c8"/><circle cx="0.900" cy="10.500" r="0.800" fill="#c8c8c8"/></svg><div class="b" style="left:598.00px;top:386.20px;width:44.50px;height:12.40px;background:#050505;border-radius:3px;"></div><span class="t" style="top:387.72px;font-size:11px;line-height:11px;color:#d4d4d4;left:606.00px;">Nc</span><svg class="b" style="left:624.00px;top:389.30px;" width="11" height="7"><g><path d="M1 1l4.500 4L10 1" fill="none" stroke="#c8c8c8" stroke-width="1.900"/></g></svg><svg class="b" style="left:681.50px;top:386.00px;" width="13" height="13"><g><path d="M7.15 6.07 L7.04 5.89 L6.88 5.72 L6.68 5.59 L6.43 5.50 L6.16 5.47 L5.87 5.51 L5.58 5.61 L5.31 5.78 L5.08 6.03 L4.89 6.33 L4.78 6.68 L4.74 7.06 L4.79 7.46 L4.93 7.85 L5.16 8.22 L5.48 8.53 L5.87 8.78 L6.32 8.94 L6.81 9.00 L7.32 8.96 L7.82 8.79 L8.29 8.52 L8.70 8.13 L9.02 7.66 L9.24 7.11 L9.34 6.51 L9.31 5.89 L9.14 5.27 L8.83 4.69 L8.40 4.18 L7.85 3.77 L7.21 3.48 L6.51 3.33 L5.77 3.33 L5.04 3.49 L4.34 3.82 L3.72 4.29 L3.21 4.90 L2.83 5.63 L2.61 6.43 L2.57 7.27 L2.71 8.12 L3.04 8.94 L3.54 9.68 L4.20 10.31 L5.00 10.78 L5.89 11.08 L6.85 11.19 L7.81 11.08 L8.75 10.77 L9.62 10.25 L10.36 9.55 L10.95 8.69 L11.35 7.71 L11.52 6.66 L11.47 5.57 L11.19 4.50 L10.67 3.51 L9.94 2.64 L9.04 1.93" fill="none" stroke="#a0a0a0" stroke-width="1.300" stroke-linecap="round" stroke-linejoin="round"/></g></svg><div class="b" style="left:700.00px;top:386.20px;width:88.50px;height:12.40px;background:#050505;border-radius:3px;"></div><span class="t" style="top:387.72px;font-size:11.0px;line-height:11.0px;color:#d4d4d4;letter-spacing:0.051px;left:708.00px;">None</span><svg class="b" style="left:770.50px;top:389.30px;" width="11" height="7"><g><path d="M1 1l4.500 4L10 1" fill="none" stroke="#c8c8c8" stroke-width="1.900"/></g></svg><div class="b" style="left:818.00px;top:385.10px;width:178.00px;height:14.70px;background:#4d4d5c;"></div><div class="b" style="left:996.00px;top:385.10px;width:7.00px;height:14.70px;background:#202020;"></div><div class="b" style="left:2.00px;top:402.10px;width:807.00px;height:14.70px;background:#232323;"></div><div class="b" style="left:810.00px;top:402.10px;width:8.00px;height:14.70px;background:#1e1e1e;"></div><div class="b" style="left:6.00px;top:403.20px;width:13.00px;height:12.40px;background:#070707;border-radius:2px;"></div><svg class="b" style="left:6.00px;top:404.50px;" width="13" height="10"><g transform="translate(0.9 0.9) scale(0.86)"><path d="M0.500 5C2.500 1.800 4.800 0.800 6.500 0.800S10.500 1.800 12.500 5C10.500 8.200 8.200 9.200 6.500 9.200S2.500 8.200 0.500 5z" fill="#d8d8d8"/><circle cx="6.500" cy="5" r="2.600" fill="#070707"/><circle cx="6.500" cy="5" r="1.200" fill="#d8d8d8"/></g></svg><div class="b" style="left:36.40px;top:403.20px;width:11.80px;height:12.40px;background:#070707;border-radius:2px;"></div><div class="b" style="left:51.60px;top:403.20px;width:12.20px;height:12.40px;background:#070707;border-radius:2px;"></div><svg class="b" style="left:75.00px;top:404.00px;" width="7" height="11"><g><path d="M1 1l4 4.500L1 10" fill="none" stroke="#c8c8c8" stroke-width="1.900"/></g></svg><div class="b" style="left:87.00px;top:403.40px;width:12.00px;height:12.00px;background:#8080b0;"></div><span class="t" style="top:404.72px;font-size:11px;line-height:11px;color:#c8c8c8;left:108.00px;">13</span><svg class="b" style="left:138.20px;top:402.20px;" width="12" height="15"><g><path d="M2.500 0.600h5.200l3 3v8.400a2 2 0 0 1-2 2H2.500a2 2 0 0 1-2-2V2.600a2 2 0 0 1 2-2z" fill="#2a0604" stroke="#a86a1a" stroke-width="1.050"/><path d="M3.300 7l1.300-3.600h.8L6.700 7M3.800 5.900h2.400M8 4.600V7" stroke="#ff9426" stroke-width="1" fill="none"/><rect x="4.400" y="9.600" width="2.400" height="2.200" rx="0.500" fill="#ead8ee"/></g></svg><span class="t" style="top:404.72px;font-size:11.0px;line-height:11.0px;color:#d2d2d2;letter-spacing:-0.224px;left:156.00px;">Right Foot Safety Shoe</span><div class="b" style="left:374.50px;top:403.20px;width:13.00px;height:12.40px;background:#070707;border-radius:2px;"></div><svg class="b" style="left:374.50px;top:403.50px;" width="13" height="11"><g><path d="M1.500 6.500C1.500 3 3.800 1 6.500 1s5 2 5 5.500z" fill="none" stroke="#d0d0d0" stroke-width="1.300"/><path d="M0 9.800h3M10 9.800h3M4.300 6.500v3.300h-1M8.700 6.500v3.300h1M6.500 1v8.800" stroke="#d0d0d0" stroke-width="1.200" fill="none"/><circle cx="4.300" cy="4.300" r="0.900" fill="#d0d0d0"/><circle cx="8.700" cy="4.300" r="0.900" fill="#d0d0d0"/></g></svg><div class="b" style="left:390.50px;top:403.20px;width:13.00px;height:12.40px;background:#070707;border-radius:2px;"></div><div class="b" style="left:405.00px;top:403.20px;width:13.00px;height:12.40px;background:#070707;border-radius:2px;"></div><svg class="b" style="left:405.50px;top:403.00px;" width="12" height="13"><g><path d="M1 11.500L11 1" stroke="#d0d0d0" stroke-width="1.500"/></g></svg><div class="b" style="left:450.00px;top:403.20px;width:12.20px;height:12.40px;background:#070707;border-radius:2px;"></div><div class="b" style="left:465.00px;top:403.20px;width:12.20px;height:12.40px;background:#070707;border-radius:2px;"></div><div class="b" style="left:480.00px;top:403.20px;width:12.20px;height:12.40px;background:#070707;border-radius:2px;"></div><div class="b" style="left:514.50px;top:403.20px;width:44.00px;height:12.40px;background:#050505;border-radius:3px;"></div><span class="t" style="top:404.72px;font-size:11px;line-height:11px;color:#d4d4d4;left:522.00px;">Nc</span><svg class="b" style="left:540.00px;top:406.30px;" width="11" height="7"><g><path d="M1 1l4.500 4L10 1" fill="none" stroke="#c8c8c8" stroke-width="1.900"/></g></svg><div class="b" style="left:564.50px;top:403.20px;width:12.20px;height:12.40px;background:#070707;border-radius:2px;"></div><svg class="b" style="left:580.50px;top:402.80px;" width="13" height="13"><g><path d="M7.15 6.07 L7.04 5.89 L6.88 5.72 L6.68 5.59 L6.43 5.50 L6.16 5.47 L5.87 5.51 L5.58 5.61 L5.31 5.78 L5.08 6.03 L4.89 6.33 L4.78 6.68 L4.74 7.06 L4.79 7.46 L4.93 7.85 L5.16 8.22 L5.48 8.53 L5.87 8.78 L6.32 8.94 L6.81 9.00 L7.32 8.96 L7.82 8.79 L8.29 8.52 L8.70 8.13 L9.02 7.66 L9.24 7.11 L9.34 6.51 L9.31 5.89 L9.14 5.27 L8.83 4.69 L8.40 4.18 L7.85 3.77 L7.21 3.48 L6.51 3.33 L5.77 3.33 L5.04 3.49 L4.34 3.82 L3.72 4.29 L3.21 4.90 L2.83 5.63 L2.61 6.43 L2.57 7.27 L2.71 8.12 L3.04 8.94 L3.54 9.68 L4.20 10.31 L5.00 10.78 L5.89 11.08 L6.85 11.19 L7.81 11.08 L8.75 10.77 L9.62 10.25 L10.36 9.55 L10.95 8.69 L11.35 7.71 L11.52 6.66 L11.47 5.57 L11.19 4.50 L10.67 3.51 L9.94 2.64 L9.04 1.93" fill="none" stroke="#a0a0a0" stroke-width="1.300" stroke-linecap="round" stroke-linejoin="round"/></g></svg><svg class="b" style="left:592.00px;top:403.50px;" width="5" height="13" viewBox="0 0 5 13"><path d="M2.500 1v5" stroke="#a0a0a0" stroke-width="1.200"/><circle cx="2" cy="8.500" r="0.900" fill="#c8c8c8"/><circle cx="0.900" cy="10.500" r="0.800" fill="#c8c8c8"/></svg><div class="b" style="left:598.00px;top:403.20px;width:44.50px;height:12.40px;background:#050505;border-radius:3px;"></div><span class="t" style="top:404.72px;font-size:11px;line-height:11px;color:#d4d4d4;left:606.00px;">Nc</span><svg class="b" style="left:624.00px;top:406.30px;" width="11" height="7"><g><path d="M1 1l4.500 4L10 1" fill="none" stroke="#c8c8c8" stroke-width="1.900"/></g></svg><svg class="b" style="left:681.50px;top:403.00px;" width="13" height="13"><g><path d="M7.15 6.07 L7.04 5.89 L6.88 5.72 L6.68 5.59 L6.43 5.50 L6.16 5.47 L5.87 5.51 L5.58 5.61 L5.31 5.78 L5.08 6.03 L4.89 6.33 L4.78 6.68 L4.74 7.06 L4.79 7.46 L4.93 7.85 L5.16 8.22 L5.48 8.53 L5.87 8.78 L6.32 8.94 L6.81 9.00 L7.32 8.96 L7.82 8.79 L8.29 8.52 L8.70 8.13 L9.02 7.66 L9.24 7.11 L9.34 6.51 L9.31 5.89 L9.14 5.27 L8.83 4.69 L8.40 4.18 L7.85 3.77 L7.21 3.48 L6.51 3.33 L5.77 3.33 L5.04 3.49 L4.34 3.82 L3.72 4.29 L3.21 4.90 L2.83 5.63 L2.61 6.43 L2.57 7.27 L2.71 8.12 L3.04 8.94 L3.54 9.68 L4.20 10.31 L5.00 10.78 L5.89 11.08 L6.85 11.19 L7.81 11.08 L8.75 10.77 L9.62 10.25 L10.36 9.55 L10.95 8.69 L11.35 7.71 L11.52 6.66 L11.47 5.57 L11.19 4.50 L10.67 3.51 L9.94 2.64 L9.04 1.93" fill="none" stroke="#a0a0a0" stroke-width="1.300" stroke-linecap="round" stroke-linejoin="round"/></g></svg><div class="b" style="left:700.00px;top:403.20px;width:88.50px;height:12.40px;background:#050505;border-radius:3px;"></div><span class="t" style="top:404.72px;font-size:11.0px;line-height:11.0px;color:#d4d4d4;letter-spacing:0.051px;left:708.00px;">None</span><svg class="b" style="left:770.50px;top:406.30px;" width="11" height="7"><g><path d="M1 1l4.500 4L10 1" fill="none" stroke="#c8c8c8" stroke-width="1.900"/></g></svg><div class="b" style="left:818.00px;top:402.10px;width:178.00px;height:14.70px;background:#4d4d5c;"></div><div class="b" style="left:996.00px;top:402.10px;width:7.00px;height:14.70px;background:#202020;"></div><div class="b" style="left:2.00px;top:419.10px;width:807.00px;height:14.70px;background:#232323;"></div><div class="b" style="left:810.00px;top:419.10px;width:8.00px;height:14.70px;background:#1e1e1e;"></div><div class="b" style="left:6.00px;top:420.20px;width:13.00px;height:12.40px;background:#070707;border-radius:2px;"></div><svg class="b" style="left:6.00px;top:421.50px;" width="13" height="10"><g transform="translate(0.9 0.9) scale(0.86)"><path d="M0.500 5C2.500 1.800 4.800 0.800 6.500 0.800S10.500 1.800 12.500 5C10.500 8.200 8.200 9.200 6.500 9.200S2.500 8.200 0.500 5z" fill="#d8d8d8"/><circle cx="6.500" cy="5" r="2.600" fill="#070707"/><circle cx="6.500" cy="5" r="1.200" fill="#d8d8d8"/></g></svg><div class="b" style="left:36.40px;top:420.20px;width:11.80px;height:12.40px;background:#070707;border-radius:2px;"></div><div class="b" style="left:51.60px;top:420.20px;width:12.20px;height:12.40px;background:#070707;border-radius:2px;"></div><svg class="b" style="left:75.00px;top:421.00px;" width="7" height="11"><g><path d="M1 1l4 4.500L1 10" fill="none" stroke="#c8c8c8" stroke-width="1.900"/></g></svg><div class="b" style="left:87.00px;top:420.40px;width:12.00px;height:12.00px;background:#8080b0;"></div><span class="t" style="top:421.72px;font-size:11px;line-height:11px;color:#c8c8c8;left:108.00px;">14</span><svg class="b" style="left:138.20px;top:419.20px;" width="12" height="15"><g><path d="M2.500 0.600h5.200l3 3v8.400a2 2 0 0 1-2 2H2.500a2 2 0 0 1-2-2V2.600a2 2 0 0 1 2-2z" fill="#2a0604" stroke="#a86a1a" stroke-width="1.050"/><path d="M3.300 7l1.300-3.600h.8L6.700 7M3.800 5.900h2.400M8 4.600V7" stroke="#ff9426" stroke-width="1" fill="none"/><rect x="4.400" y="9.600" width="2.400" height="2.200" rx="0.500" fill="#ead8ee"/></g></svg><span class="t" style="top:421.72px;font-size:11px;line-height:11px;color:#d2d2d2;left:156.00px;">Left Foot</span><div class="b" style="left:374.50px;top:420.20px;width:13.00px;height:12.40px;background:#070707;border-radius:2px;"></div><svg class="b" style="left:374.50px;top:420.50px;" width="13" height="11"><g><path d="M1.500 6.500C1.500 3 3.800 1 6.500 1s5 2 5 5.500z" fill="none" stroke="#d0d0d0" stroke-width="1.300"/><path d="M0 9.800h3M10 9.800h3M4.300 6.500v3.300h-1M8.700 6.500v3.300h1M6.500 1v8.800" stroke="#d0d0d0" stroke-width="1.200" fill="none"/><circle cx="4.300" cy="4.300" r="0.900" fill="#d0d0d0"/><circle cx="8.700" cy="4.300" r="0.900" fill="#d0d0d0"/></g></svg><div class="b" style="left:390.50px;top:420.20px;width:13.00px;height:12.40px;background:#070707;border-radius:2px;"></div><div class="b" style="left:405.00px;top:420.20px;width:13.00px;height:12.40px;background:#070707;border-radius:2px;"></div><svg class="b" style="left:405.50px;top:420.00px;" width="12" height="13"><g><path d="M1 11.500L11 1" stroke="#d0d0d0" stroke-width="1.500"/></g></svg><div class="b" style="left:450.00px;top:420.20px;width:12.20px;height:12.40px;background:#070707;border-radius:2px;"></div><div class="b" style="left:465.00px;top:420.20px;width:12.20px;height:12.40px;background:#070707;border-radius:2px;"></div><div class="b" style="left:480.00px;top:420.20px;width:12.20px;height:12.40px;background:#070707;border-radius:2px;"></div><div class="b" style="left:514.50px;top:420.20px;width:44.00px;height:12.40px;background:#050505;border-radius:3px;"></div><span class="t" style="top:421.72px;font-size:11px;line-height:11px;color:#d4d4d4;left:522.00px;">Nc</span><svg class="b" style="left:540.00px;top:423.30px;" width="11" height="7"><g><path d="M1 1l4.500 4L10 1" fill="none" stroke="#c8c8c8" stroke-width="1.900"/></g></svg><div class="b" style="left:564.50px;top:420.20px;width:12.20px;height:12.40px;background:#070707;border-radius:2px;"></div><svg class="b" style="left:580.50px;top:419.80px;" width="13" height="13"><g><path d="M7.15 6.07 L7.04 5.89 L6.88 5.72 L6.68 5.59 L6.43 5.50 L6.16 5.47 L5.87 5.51 L5.58 5.61 L5.31 5.78 L5.08 6.03 L4.89 6.33 L4.78 6.68 L4.74 7.06 L4.79 7.46 L4.93 7.85 L5.16 8.22 L5.48 8.53 L5.87 8.78 L6.32 8.94 L6.81 9.00 L7.32 8.96 L7.82 8.79 L8.29 8.52 L8.70 8.13 L9.02 7.66 L9.24 7.11 L9.34 6.51 L9.31 5.89 L9.14 5.27 L8.83 4.69 L8.40 4.18 L7.85 3.77 L7.21 3.48 L6.51 3.33 L5.77 3.33 L5.04 3.49 L4.34 3.82 L3.72 4.29 L3.21 4.90 L2.83 5.63 L2.61 6.43 L2.57 7.27 L2.71 8.12 L3.04 8.94 L3.54 9.68 L4.20 10.31 L5.00 10.78 L5.89 11.08 L6.85 11.19 L7.81 11.08 L8.75 10.77 L9.62 10.25 L10.36 9.55 L10.95 8.69 L11.35 7.71 L11.52 6.66 L11.47 5.57 L11.19 4.50 L10.67 3.51 L9.94 2.64 L9.04 1.93" fill="none" stroke="#a0a0a0" stroke-width="1.300" stroke-linecap="round" stroke-linejoin="round"/></g></svg><svg class="b" style="left:592.00px;top:420.50px;" width="5" height="13" viewBox="0 0 5 13"><path d="M2.500 1v5" stroke="#a0a0a0" stroke-width="1.200"/><circle cx="2" cy="8.500" r="0.900" fill="#c8c8c8"/><circle cx="0.900" cy="10.500" r="0.800" fill="#c8c8c8"/></svg><div class="b" style="left:598.00px;top:420.20px;width:44.50px;height:12.40px;background:#050505;border-radius:3px;"></div><span class="t" style="top:421.72px;font-size:11px;line-height:11px;color:#d4d4d4;left:606.00px;">Nc</span><svg class="b" style="left:624.00px;top:423.30px;" width="11" height="7"><g><path d="M1 1l4.500 4L10 1" fill="none" stroke="#c8c8c8" stroke-width="1.900"/></g></svg><svg class="b" style="left:681.50px;top:420.00px;" width="13" height="13"><g><path d="M7.15 6.07 L7.04 5.89 L6.88 5.72 L6.68 5.59 L6.43 5.50 L6.16 5.47 L5.87 5.51 L5.58 5.61 L5.31 5.78 L5.08 6.03 L4.89 6.33 L4.78 6.68 L4.74 7.06 L4.79 7.46 L4.93 7.85 L5.16 8.22 L5.48 8.53 L5.87 8.78 L6.32 8.94 L6.81 9.00 L7.32 8.96 L7.82 8.79 L8.29 8.52 L8.70 8.13 L9.02 7.66 L9.24 7.11 L9.34 6.51 L9.31 5.89 L9.14 5.27 L8.83 4.69 L8.40 4.18 L7.85 3.77 L7.21 3.48 L6.51 3.33 L5.77 3.33 L5.04 3.49 L4.34 3.82 L3.72 4.29 L3.21 4.90 L2.83 5.63 L2.61 6.43 L2.57 7.27 L2.71 8.12 L3.04 8.94 L3.54 9.68 L4.20 10.31 L5.00 10.78 L5.89 11.08 L6.85 11.19 L7.81 11.08 L8.75 10.77 L9.62 10.25 L10.36 9.55 L10.95 8.69 L11.35 7.71 L11.52 6.66 L11.47 5.57 L11.19 4.50 L10.67 3.51 L9.94 2.64 L9.04 1.93" fill="none" stroke="#a0a0a0" stroke-width="1.300" stroke-linecap="round" stroke-linejoin="round"/></g></svg><div class="b" style="left:700.00px;top:420.20px;width:88.50px;height:12.40px;background:#050505;border-radius:3px;"></div><span class="t" style="top:421.72px;font-size:11.0px;line-height:11.0px;color:#d4d4d4;letter-spacing:0.051px;left:708.00px;">None</span><svg class="b" style="left:770.50px;top:423.30px;" width="11" height="7"><g><path d="M1 1l4.500 4L10 1" fill="none" stroke="#c8c8c8" stroke-width="1.900"/></g></svg><div class="b" style="left:818.00px;top:419.10px;width:178.00px;height:14.70px;background:#4d4d5c;"></div><div class="b" style="left:996.00px;top:419.10px;width:7.00px;height:14.70px;background:#202020;"></div><div class="b" style="left:2.00px;top:436.10px;width:807.00px;height:14.70px;background:#232323;"></div><div class="b" style="left:810.00px;top:436.10px;width:8.00px;height:14.70px;background:#1e1e1e;"></div><div class="b" style="left:6.00px;top:437.20px;width:13.00px;height:12.40px;background:#070707;border-radius:2px;"></div><svg class="b" style="left:6.00px;top:438.50px;" width="13" height="10"><g transform="translate(0.9 0.9) scale(0.86)"><path d="M0.500 5C2.500 1.800 4.800 0.800 6.500 0.800S10.500 1.800 12.500 5C10.500 8.200 8.200 9.200 6.500 9.200S2.500 8.200 0.500 5z" fill="#d8d8d8"/><circle cx="6.500" cy="5" r="2.600" fill="#070707"/><circle cx="6.500" cy="5" r="1.200" fill="#d8d8d8"/></g></svg><div class="b" style="left:36.40px;top:437.20px;width:11.80px;height:12.40px;background:#070707;border-radius:2px;"></div><div class="b" style="left:51.60px;top:437.20px;width:12.20px;height:12.40px;background:#070707;border-radius:2px;"></div><svg class="b" style="left:75.00px;top:438.00px;" width="7" height="11"><g><path d="M1 1l4 4.500L1 10" fill="none" stroke="#c8c8c8" stroke-width="1.900"/></g></svg><div class="b" style="left:87.00px;top:437.40px;width:12.00px;height:12.00px;background:#8080b0;"></div><span class="t" style="top:438.72px;font-size:11px;line-height:11px;color:#c8c8c8;left:108.00px;">15</span><svg class="b" style="left:138.20px;top:436.20px;" width="12" height="15"><g><path d="M2.500 0.600h5.200l3 3v8.400a2 2 0 0 1-2 2H2.500a2 2 0 0 1-2-2V2.600a2 2 0 0 1 2-2z" fill="#2a0604" stroke="#a86a1a" stroke-width="1.050"/><path d="M3.300 7l1.300-3.600h.8L6.700 7M3.800 5.900h2.400M8 4.600V7" stroke="#ff9426" stroke-width="1" fill="none"/><rect x="4.400" y="9.600" width="2.400" height="2.200" rx="0.500" fill="#ead8ee"/></g></svg><span class="t" style="top:438.72px;font-size:11px;line-height:11px;color:#d2d2d2;left:156.00px;">Right Leg Lower</span><div class="b" style="left:374.50px;top:437.20px;width:13.00px;height:12.40px;background:#070707;border-radius:2px;"></div><svg class="b" style="left:374.50px;top:437.50px;" width="13" height="11"><g><path d="M1.500 6.500C1.500 3 3.800 1 6.500 1s5 2 5 5.500z" fill="none" stroke="#d0d0d0" stroke-width="1.300"/><path d="M0 9.800h3M10 9.800h3M4.300 6.500v3.300h-1M8.700 6.500v3.300h1M6.500 1v8.800" stroke="#d0d0d0" stroke-width="1.200" fill="none"/><circle cx="4.300" cy="4.300" r="0.900" fill="#d0d0d0"/><circle cx="8.700" cy="4.300" r="0.900" fill="#d0d0d0"/></g></svg><div class="b" style="left:390.50px;top:437.20px;width:13.00px;height:12.40px;background:#070707;border-radius:2px;"></div><div class="b" style="left:405.00px;top:437.20px;width:13.00px;height:12.40px;background:#070707;border-radius:2px;"></div><svg class="b" style="left:405.50px;top:437.00px;" width="12" height="13"><g><path d="M1 11.500L11 1" stroke="#d0d0d0" stroke-width="1.500"/></g></svg><div class="b" style="left:450.00px;top:437.20px;width:12.20px;height:12.40px;background:#070707;border-radius:2px;"></div><div class="b" style="left:465.00px;top:437.20px;width:12.20px;height:12.40px;background:#070707;border-radius:2px;"></div><div class="b" style="left:480.00px;top:437.20px;width:12.20px;height:12.40px;background:#070707;border-radius:2px;"></div><div class="b" style="left:514.50px;top:437.20px;width:44.00px;height:12.40px;background:#050505;border-radius:3px;"></div><span class="t" style="top:438.72px;font-size:11px;line-height:11px;color:#d4d4d4;left:522.00px;">Nc</span><svg class="b" style="left:540.00px;top:440.30px;" width="11" height="7"><g><path d="M1 1l4.500 4L10 1" fill="none" stroke="#c8c8c8" stroke-width="1.900"/></g></svg><div class="b" style="left:564.50px;top:437.20px;width:12.20px;height:12.40px;background:#070707;border-radius:2px;"></div><svg class="b" style="left:580.50px;top:436.80px;" width="13" height="13"><g><path d="M7.15 6.07 L7.04 5.89 L6.88 5.72 L6.68 5.59 L6.43 5.50 L6.16 5.47 L5.87 5.51 L5.58 5.61 L5.31 5.78 L5.08 6.03 L4.89 6.33 L4.78 6.68 L4.74 7.06 L4.79 7.46 L4.93 7.85 L5.16 8.22 L5.48 8.53 L5.87 8.78 L6.32 8.94 L6.81 9.00 L7.32 8.96 L7.82 8.79 L8.29 8.52 L8.70 8.13 L9.02 7.66 L9.24 7.11 L9.34 6.51 L9.31 5.89 L9.14 5.27 L8.83 4.69 L8.40 4.18 L7.85 3.77 L7.21 3.48 L6.51 3.33 L5.77 3.33 L5.04 3.49 L4.34 3.82 L3.72 4.29 L3.21 4.90 L2.83 5.63 L2.61 6.43 L2.57 7.27 L2.71 8.12 L3.04 8.94 L3.54 9.68 L4.20 10.31 L5.00 10.78 L5.89 11.08 L6.85 11.19 L7.81 11.08 L8.75 10.77 L9.62 10.25 L10.36 9.55 L10.95 8.69 L11.35 7.71 L11.52 6.66 L11.47 5.57 L11.19 4.50 L10.67 3.51 L9.94 2.64 L9.04 1.93" fill="none" stroke="#a0a0a0" stroke-width="1.300" stroke-linecap="round" stroke-linejoin="round"/></g></svg><svg class="b" style="left:592.00px;top:437.50px;" width="5" height="13" viewBox="0 0 5 13"><path d="M2.500 1v5" stroke="#a0a0a0" stroke-width="1.200"/><circle cx="2" cy="8.500" r="0.900" fill="#c8c8c8"/><circle cx="0.900" cy="10.500" r="0.800" fill="#c8c8c8"/></svg><div class="b" style="left:598.00px;top:437.20px;width:44.50px;height:12.40px;background:#050505;border-radius:3px;"></div><span class="t" style="top:438.72px;font-size:11px;line-height:11px;color:#d4d4d4;left:606.00px;">Nc</span><svg class="b" style="left:624.00px;top:440.30px;" width="11" height="7"><g><path d="M1 1l4.500 4L10 1" fill="none" stroke="#c8c8c8" stroke-width="1.900"/></g></svg><svg class="b" style="left:681.50px;top:437.00px;" width="13" height="13"><g><path d="M7.15 6.07 L7.04 5.89 L6.88 5.72 L6.68 5.59 L6.43 5.50 L6.16 5.47 L5.87 5.51 L5.58 5.61 L5.31 5.78 L5.08 6.03 L4.89 6.33 L4.78 6.68 L4.74 7.06 L4.79 7.46 L4.93 7.85 L5.16 8.22 L5.48 8.53 L5.87 8.78 L6.32 8.94 L6.81 9.00 L7.32 8.96 L7.82 8.79 L8.29 8.52 L8.70 8.13 L9.02 7.66 L9.24 7.11 L9.34 6.51 L9.31 5.89 L9.14 5.27 L8.83 4.69 L8.40 4.18 L7.85 3.77 L7.21 3.48 L6.51 3.33 L5.77 3.33 L5.04 3.49 L4.34 3.82 L3.72 4.29 L3.21 4.90 L2.83 5.63 L2.61 6.43 L2.57 7.27 L2.71 8.12 L3.04 8.94 L3.54 9.68 L4.20 10.31 L5.00 10.78 L5.89 11.08 L6.85 11.19 L7.81 11.08 L8.75 10.77 L9.62 10.25 L10.36 9.55 L10.95 8.69 L11.35 7.71 L11.52 6.66 L11.47 5.57 L11.19 4.50 L10.67 3.51 L9.94 2.64 L9.04 1.93" fill="none" stroke="#a0a0a0" stroke-width="1.300" stroke-linecap="round" stroke-linejoin="round"/></g></svg><div class="b" style="left:700.00px;top:437.20px;width:88.50px;height:12.40px;background:#050505;border-radius:3px;"></div><span class="t" style="top:438.72px;font-size:11.0px;line-height:11.0px;color:#d4d4d4;letter-spacing:0.051px;left:708.00px;">None</span><svg class="b" style="left:770.50px;top:440.30px;" width="11" height="7"><g><path d="M1 1l4.500 4L10 1" fill="none" stroke="#c8c8c8" stroke-width="1.900"/></g></svg><div class="b" style="left:818.00px;top:436.10px;width:178.00px;height:14.70px;background:#4d4d5c;"></div><div class="b" style="left:996.00px;top:436.10px;width:7.00px;height:14.70px;background:#202020;"></div><div class="b" style="left:2.00px;top:453.10px;width:807.00px;height:14.70px;background:#232323;"></div><div class="b" style="left:810.00px;top:453.10px;width:8.00px;height:14.70px;background:#1e1e1e;"></div><div class="b" style="left:6.00px;top:454.20px;width:13.00px;height:12.40px;background:#070707;border-radius:2px;"></div><svg class="b" style="left:6.00px;top:455.50px;" width="13" height="10"><g transform="translate(0.9 0.9) scale(0.86)"><path d="M0.500 5C2.500 1.800 4.800 0.800 6.500 0.800S10.500 1.800 12.500 5C10.500 8.200 8.200 9.200 6.500 9.200S2.500 8.200 0.500 5z" fill="#d8d8d8"/><circle cx="6.500" cy="5" r="2.600" fill="#070707"/><circle cx="6.500" cy="5" r="1.200" fill="#d8d8d8"/></g></svg><div class="b" style="left:36.40px;top:454.20px;width:11.80px;height:12.40px;background:#070707;border-radius:2px;"></div><div class="b" style="left:51.60px;top:454.20px;width:12.20px;height:12.40px;background:#070707;border-radius:2px;"></div><svg class="b" style="left:75.00px;top:455.00px;" width="7" height="11"><g><path d="M1 1l4 4.500L1 10" fill="none" stroke="#c8c8c8" stroke-width="1.900"/></g></svg><div class="b" style="left:87.00px;top:454.40px;width:12.00px;height:12.00px;background:#8080b0;"></div><span class="t" style="top:455.72px;font-size:11px;line-height:11px;color:#c8c8c8;left:108.00px;">16</span><svg class="b" style="left:138.20px;top:453.20px;" width="12" height="15"><g><path d="M2.500 0.600h5.200l3 3v8.400a2 2 0 0 1-2 2H2.500a2 2 0 0 1-2-2V2.600a2 2 0 0 1 2-2z" fill="#2a0604" stroke="#a86a1a" stroke-width="1.050"/><path d="M3.300 7l1.300-3.600h.8L6.700 7M3.800 5.900h2.400M8 4.600V7" stroke="#ff9426" stroke-width="1" fill="none"/><rect x="4.400" y="9.600" width="2.400" height="2.200" rx="0.500" fill="#ead8ee"/></g></svg><span class="t" style="top:455.72px;font-size:11px;line-height:11px;color:#d2d2d2;left:156.00px;">Right Leg upper</span><div class="b" style="left:374.50px;top:454.20px;width:13.00px;height:12.40px;background:#070707;border-radius:2px;"></div><svg class="b" style="left:374.50px;top:454.50px;" width="13" height="11"><g><path d="M1.500 6.500C1.500 3 3.800 1 6.500 1s5 2 5 5.500z" fill="none" stroke="#d0d0d0" stroke-width="1.300"/><path d="M0 9.800h3M10 9.800h3M4.300 6.500v3.300h-1M8.700 6.500v3.300h1M6.500 1v8.800" stroke="#d0d0d0" stroke-width="1.200" fill="none"/><circle cx="4.300" cy="4.300" r="0.900" fill="#d0d0d0"/><circle cx="8.700" cy="4.300" r="0.900" fill="#d0d0d0"/></g></svg><div class="b" style="left:390.50px;top:454.20px;width:13.00px;height:12.40px;background:#070707;border-radius:2px;"></div><div class="b" style="left:405.00px;top:454.20px;width:13.00px;height:12.40px;background:#070707;border-radius:2px;"></div><svg class="b" style="left:405.50px;top:454.00px;" width="12" height="13"><g><path d="M1 11.500L11 1" stroke="#d0d0d0" stroke-width="1.500"/></g></svg><div class="b" style="left:450.00px;top:454.20px;width:12.20px;height:12.40px;background:#070707;border-radius:2px;"></div><div class="b" style="left:465.00px;top:454.20px;width:12.20px;height:12.40px;background:#070707;border-radius:2px;"></div><div class="b" style="left:480.00px;top:454.20px;width:12.20px;height:12.40px;background:#070707;border-radius:2px;"></div><div class="b" style="left:514.50px;top:454.20px;width:44.00px;height:12.40px;background:#050505;border-radius:3px;"></div><span class="t" style="top:455.72px;font-size:11px;line-height:11px;color:#d4d4d4;left:522.00px;">Nc</span><svg class="b" style="left:540.00px;top:457.30px;" width="11" height="7"><g><path d="M1 1l4.500 4L10 1" fill="none" stroke="#c8c8c8" stroke-width="1.900"/></g></svg><div class="b" style="left:564.50px;top:454.20px;width:12.20px;height:12.40px;background:#070707;border-radius:2px;"></div><svg class="b" style="left:580.50px;top:453.80px;" width="13" height="13"><g><path d="M7.15 6.07 L7.04 5.89 L6.88 5.72 L6.68 5.59 L6.43 5.50 L6.16 5.47 L5.87 5.51 L5.58 5.61 L5.31 5.78 L5.08 6.03 L4.89 6.33 L4.78 6.68 L4.74 7.06 L4.79 7.46 L4.93 7.85 L5.16 8.22 L5.48 8.53 L5.87 8.78 L6.32 8.94 L6.81 9.00 L7.32 8.96 L7.82 8.79 L8.29 8.52 L8.70 8.13 L9.02 7.66 L9.24 7.11 L9.34 6.51 L9.31 5.89 L9.14 5.27 L8.83 4.69 L8.40 4.18 L7.85 3.77 L7.21 3.48 L6.51 3.33 L5.77 3.33 L5.04 3.49 L4.34 3.82 L3.72 4.29 L3.21 4.90 L2.83 5.63 L2.61 6.43 L2.57 7.27 L2.71 8.12 L3.04 8.94 L3.54 9.68 L4.20 10.31 L5.00 10.78 L5.89 11.08 L6.85 11.19 L7.81 11.08 L8.75 10.77 L9.62 10.25 L10.36 9.55 L10.95 8.69 L11.35 7.71 L11.52 6.66 L11.47 5.57 L11.19 4.50 L10.67 3.51 L9.94 2.64 L9.04 1.93" fill="none" stroke="#a0a0a0" stroke-width="1.300" stroke-linecap="round" stroke-linejoin="round"/></g></svg><svg class="b" style="left:592.00px;top:454.50px;" width="5" height="13" viewBox="0 0 5 13"><path d="M2.500 1v5" stroke="#a0a0a0" stroke-width="1.200"/><circle cx="2" cy="8.500" r="0.900" fill="#c8c8c8"/><circle cx="0.900" cy="10.500" r="0.800" fill="#c8c8c8"/></svg><div class="b" style="left:598.00px;top:454.20px;width:44.50px;height:12.40px;background:#050505;border-radius:3px;"></div><span class="t" style="top:455.72px;font-size:11px;line-height:11px;color:#d4d4d4;left:606.00px;">Nc</span><svg class="b" style="left:624.00px;top:457.30px;" width="11" height="7"><g><path d="M1 1l4.500 4L10 1" fill="none" stroke="#c8c8c8" stroke-width="1.900"/></g></svg><svg class="b" style="left:681.50px;top:454.00px;" width="13" height="13"><g><path d="M7.15 6.07 L7.04 5.89 L6.88 5.72 L6.68 5.59 L6.43 5.50 L6.16 5.47 L5.87 5.51 L5.58 5.61 L5.31 5.78 L5.08 6.03 L4.89 6.33 L4.78 6.68 L4.74 7.06 L4.79 7.46 L4.93 7.85 L5.16 8.22 L5.48 8.53 L5.87 8.78 L6.32 8.94 L6.81 9.00 L7.32 8.96 L7.82 8.79 L8.29 8.52 L8.70 8.13 L9.02 7.66 L9.24 7.11 L9.34 6.51 L9.31 5.89 L9.14 5.27 L8.83 4.69 L8.40 4.18 L7.85 3.77 L7.21 3.48 L6.51 3.33 L5.77 3.33 L5.04 3.49 L4.34 3.82 L3.72 4.29 L3.21 4.90 L2.83 5.63 L2.61 6.43 L2.57 7.27 L2.71 8.12 L3.04 8.94 L3.54 9.68 L4.20 10.31 L5.00 10.78 L5.89 11.08 L6.85 11.19 L7.81 11.08 L8.75 10.77 L9.62 10.25 L10.36 9.55 L10.95 8.69 L11.35 7.71 L11.52 6.66 L11.47 5.57 L11.19 4.50 L10.67 3.51 L9.94 2.64 L9.04 1.93" fill="none" stroke="#a0a0a0" stroke-width="1.300" stroke-linecap="round" stroke-linejoin="round"/></g></svg><div class="b" style="left:700.00px;top:454.20px;width:88.50px;height:12.40px;background:#050505;border-radius:3px;"></div><span class="t" style="top:455.72px;font-size:11.0px;line-height:11.0px;color:#d4d4d4;letter-spacing:0.051px;left:708.00px;">None</span><svg class="b" style="left:770.50px;top:457.30px;" width="11" height="7"><g><path d="M1 1l4.500 4L10 1" fill="none" stroke="#c8c8c8" stroke-width="1.900"/></g></svg><div class="b" style="left:818.00px;top:453.10px;width:178.00px;height:14.70px;background:#4d4d5c;"></div><div class="b" style="left:996.00px;top:453.10px;width:7.00px;height:14.70px;background:#202020;"></div><div class="b" style="left:2.00px;top:470.10px;width:807.00px;height:14.70px;background:#232323;"></div><div class="b" style="left:810.00px;top:470.10px;width:8.00px;height:14.70px;background:#1e1e1e;"></div><div class="b" style="left:6.00px;top:471.20px;width:13.00px;height:12.40px;background:#070707;border-radius:2px;"></div><svg class="b" style="left:6.00px;top:472.50px;" width="13" height="10"><g transform="translate(0.9 0.9) scale(0.86)"><path d="M0.500 5C2.500 1.800 4.800 0.800 6.500 0.800S10.500 1.800 12.500 5C10.500 8.200 8.200 9.200 6.500 9.200S2.500 8.200 0.500 5z" fill="#d8d8d8"/><circle cx="6.500" cy="5" r="2.600" fill="#070707"/><circle cx="6.500" cy="5" r="1.200" fill="#d8d8d8"/></g></svg><div class="b" style="left:36.40px;top:471.20px;width:11.80px;height:12.40px;background:#070707;border-radius:2px;"></div><div class="b" style="left:51.60px;top:471.20px;width:12.20px;height:12.40px;background:#070707;border-radius:2px;"></div><svg class="b" style="left:75.00px;top:472.00px;" width="7" height="11"><g><path d="M1 1l4 4.500L1 10" fill="none" stroke="#c8c8c8" stroke-width="1.900"/></g></svg><div class="b" style="left:87.00px;top:471.40px;width:12.00px;height:12.00px;background:#8080b0;"></div><span class="t" style="top:472.72px;font-size:11px;line-height:11px;color:#c8c8c8;left:108.00px;">17</span><svg class="b" style="left:138.20px;top:470.20px;" width="12" height="15"><g><path d="M2.500 0.600h5.200l3 3v8.400a2 2 0 0 1-2 2H2.500a2 2 0 0 1-2-2V2.600a2 2 0 0 1 2-2z" fill="#2a0604" stroke="#a86a1a" stroke-width="1.050"/><path d="M3.300 7l1.300-3.600h.8L6.700 7M3.800 5.900h2.400M8 4.600V7" stroke="#ff9426" stroke-width="1" fill="none"/><rect x="4.400" y="9.600" width="2.400" height="2.200" rx="0.500" fill="#ead8ee"/></g></svg><span class="t" style="top:472.72px;font-size:11px;line-height:11px;color:#d2d2d2;left:156.00px;">Right Foot</span><div class="b" style="left:374.50px;top:471.20px;width:13.00px;height:12.40px;background:#070707;border-radius:2px;"></div><svg class="b" style="left:374.50px;top:471.50px;" width="13" height="11"><g><path d="M1.500 6.500C1.500 3 3.800 1 6.500 1s5 2 5 5.500z" fill="none" stroke="#d0d0d0" stroke-width="1.300"/><path d="M0 9.800h3M10 9.800h3M4.300 6.500v3.300h-1M8.700 6.500v3.300h1M6.500 1v8.800" stroke="#d0d0d0" stroke-width="1.200" fill="none"/><circle cx="4.300" cy="4.300" r="0.900" fill="#d0d0d0"/><circle cx="8.700" cy="4.300" r="0.900" fill="#d0d0d0"/></g></svg><div class="b" style="left:390.50px;top:471.20px;width:13.00px;height:12.40px;background:#070707;border-radius:2px;"></div><div class="b" style="left:405.00px;top:471.20px;width:13.00px;height:12.40px;background:#070707;border-radius:2px;"></div><svg class="b" style="left:405.50px;top:471.00px;" width="12" height="13"><g><path d="M1 11.500L11 1" stroke="#d0d0d0" stroke-width="1.500"/></g></svg><div class="b" style="left:450.00px;top:471.20px;width:12.20px;height:12.40px;background:#070707;border-radius:2px;"></div><div class="b" style="left:465.00px;top:471.20px;width:12.20px;height:12.40px;background:#070707;border-radius:2px;"></div><div class="b" style="left:480.00px;top:471.20px;width:12.20px;height:12.40px;background:#070707;border-radius:2px;"></div><div class="b" style="left:514.50px;top:471.20px;width:44.00px;height:12.40px;background:#050505;border-radius:3px;"></div><span class="t" style="top:472.72px;font-size:11px;line-height:11px;color:#d4d4d4;left:522.00px;">Nc</span><svg class="b" style="left:540.00px;top:474.30px;" width="11" height="7"><g><path d="M1 1l4.500 4L10 1" fill="none" stroke="#c8c8c8" stroke-width="1.900"/></g></svg><div class="b" style="left:564.50px;top:471.20px;width:12.20px;height:12.40px;background:#070707;border-radius:2px;"></div><svg class="b" style="left:580.50px;top:470.80px;" width="13" height="13"><g><path d="M7.15 6.07 L7.04 5.89 L6.88 5.72 L6.68 5.59 L6.43 5.50 L6.16 5.47 L5.87 5.51 L5.58 5.61 L5.31 5.78 L5.08 6.03 L4.89 6.33 L4.78 6.68 L4.74 7.06 L4.79 7.46 L4.93 7.85 L5.16 8.22 L5.48 8.53 L5.87 8.78 L6.32 8.94 L6.81 9.00 L7.32 8.96 L7.82 8.79 L8.29 8.52 L8.70 8.13 L9.02 7.66 L9.24 7.11 L9.34 6.51 L9.31 5.89 L9.14 5.27 L8.83 4.69 L8.40 4.18 L7.85 3.77 L7.21 3.48 L6.51 3.33 L5.77 3.33 L5.04 3.49 L4.34 3.82 L3.72 4.29 L3.21 4.90 L2.83 5.63 L2.61 6.43 L2.57 7.27 L2.71 8.12 L3.04 8.94 L3.54 9.68 L4.20 10.31 L5.00 10.78 L5.89 11.08 L6.85 11.19 L7.81 11.08 L8.75 10.77 L9.62 10.25 L10.36 9.55 L10.95 8.69 L11.35 7.71 L11.52 6.66 L11.47 5.57 L11.19 4.50 L10.67 3.51 L9.94 2.64 L9.04 1.93" fill="none" stroke="#a0a0a0" stroke-width="1.300" stroke-linecap="round" stroke-linejoin="round"/></g></svg><svg class="b" style="left:592.00px;top:471.50px;" width="5" height="13" viewBox="0 0 5 13"><path d="M2.500 1v5" stroke="#a0a0a0" stroke-width="1.200"/><circle cx="2" cy="8.500" r="0.900" fill="#c8c8c8"/><circle cx="0.900" cy="10.500" r="0.800" fill="#c8c8c8"/></svg><div class="b" style="left:598.00px;top:471.20px;width:44.50px;height:12.40px;background:#050505;border-radius:3px;"></div><span class="t" style="top:472.72px;font-size:11px;line-height:11px;color:#d4d4d4;left:606.00px;">Nc</span><svg class="b" style="left:624.00px;top:474.30px;" width="11" height="7"><g><path d="M1 1l4.500 4L10 1" fill="none" stroke="#c8c8c8" stroke-width="1.900"/></g></svg><svg class="b" style="left:681.50px;top:471.00px;" width="13" height="13"><g><path d="M7.15 6.07 L7.04 5.89 L6.88 5.72 L6.68 5.59 L6.43 5.50 L6.16 5.47 L5.87 5.51 L5.58 5.61 L5.31 5.78 L5.08 6.03 L4.89 6.33 L4.78 6.68 L4.74 7.06 L4.79 7.46 L4.93 7.85 L5.16 8.22 L5.48 8.53 L5.87 8.78 L6.32 8.94 L6.81 9.00 L7.32 8.96 L7.82 8.79 L8.29 8.52 L8.70 8.13 L9.02 7.66 L9.24 7.11 L9.34 6.51 L9.31 5.89 L9.14 5.27 L8.83 4.69 L8.40 4.18 L7.85 3.77 L7.21 3.48 L6.51 3.33 L5.77 3.33 L5.04 3.49 L4.34 3.82 L3.72 4.29 L3.21 4.90 L2.83 5.63 L2.61 6.43 L2.57 7.27 L2.71 8.12 L3.04 8.94 L3.54 9.68 L4.20 10.31 L5.00 10.78 L5.89 11.08 L6.85 11.19 L7.81 11.08 L8.75 10.77 L9.62 10.25 L10.36 9.55 L10.95 8.69 L11.35 7.71 L11.52 6.66 L11.47 5.57 L11.19 4.50 L10.67 3.51 L9.94 2.64 L9.04 1.93" fill="none" stroke="#a0a0a0" stroke-width="1.300" stroke-linecap="round" stroke-linejoin="round"/></g></svg><div class="b" style="left:700.00px;top:471.20px;width:88.50px;height:12.40px;background:#050505;border-radius:3px;"></div><span class="t" style="top:472.72px;font-size:11.0px;line-height:11.0px;color:#d4d4d4;letter-spacing:0.051px;left:708.00px;">None</span><svg class="b" style="left:770.50px;top:474.30px;" width="11" height="7"><g><path d="M1 1l4.500 4L10 1" fill="none" stroke="#c8c8c8" stroke-width="1.900"/></g></svg><div class="b" style="left:818.00px;top:470.10px;width:178.00px;height:14.70px;background:#4d4d5c;"></div><div class="b" style="left:996.00px;top:470.10px;width:7.00px;height:14.70px;background:#202020;"></div><div class="b" style="left:2.00px;top:487.10px;width:807.00px;height:14.70px;background:#232323;"></div><div class="b" style="left:810.00px;top:487.10px;width:8.00px;height:14.70px;background:#1e1e1e;"></div><div class="b" style="left:6.00px;top:488.20px;width:13.00px;height:12.40px;background:#070707;border-radius:2px;"></div><svg class="b" style="left:6.00px;top:489.50px;" width="13" height="10"><g transform="translate(0.9 0.9) scale(0.86)"><path d="M0.500 5C2.500 1.800 4.800 0.800 6.500 0.800S10.500 1.800 12.500 5C10.500 8.200 8.200 9.200 6.500 9.200S2.500 8.200 0.500 5z" fill="#d8d8d8"/><circle cx="6.500" cy="5" r="2.600" fill="#070707"/><circle cx="6.500" cy="5" r="1.200" fill="#d8d8d8"/></g></svg><div class="b" style="left:36.40px;top:488.20px;width:11.80px;height:12.40px;background:#070707;border-radius:2px;"></div><div class="b" style="left:51.60px;top:488.20px;width:12.20px;height:12.40px;background:#070707;border-radius:2px;"></div><svg class="b" style="left:75.00px;top:489.00px;" width="7" height="11"><g><path d="M1 1l4 4.500L1 10" fill="none" stroke="#c8c8c8" stroke-width="1.900"/></g></svg><div class="b" style="left:87.00px;top:488.40px;width:12.00px;height:12.00px;background:#8080b0;"></div><span class="t" style="top:489.72px;font-size:11px;line-height:11px;color:#c8c8c8;left:108.00px;">18</span><svg class="b" style="left:138.20px;top:487.20px;" width="12" height="15"><g><path d="M2.500 0.600h5.200l3 3v8.400a2 2 0 0 1-2 2H2.500a2 2 0 0 1-2-2V2.600a2 2 0 0 1 2-2z" fill="#2a0604" stroke="#a86a1a" stroke-width="1.050"/><path d="M3.300 7l1.300-3.600h.8L6.700 7M3.800 5.900h2.400M8 4.600V7" stroke="#ff9426" stroke-width="1" fill="none"/><rect x="4.400" y="9.600" width="2.400" height="2.200" rx="0.500" fill="#ead8ee"/></g></svg><span class="t" style="top:489.72px;font-size:11px;line-height:11px;color:#d2d2d2;left:156.00px;">Glove Right</span><div class="b" style="left:374.50px;top:488.20px;width:13.00px;height:12.40px;background:#070707;border-radius:2px;"></div><svg class="b" style="left:374.50px;top:488.50px;" width="13" height="11"><g><path d="M1.500 6.500C1.500 3 3.800 1 6.500 1s5 2 5 5.500z" fill="none" stroke="#d0d0d0" stroke-width="1.300"/><path d="M0 9.800h3M10 9.800h3M4.300 6.500v3.300h-1M8.700 6.500v3.300h1M6.500 1v8.800" stroke="#d0d0d0" stroke-width="1.200" fill="none"/><circle cx="4.300" cy="4.300" r="0.900" fill="#d0d0d0"/><circle cx="8.700" cy="4.300" r="0.900" fill="#d0d0d0"/></g></svg><div class="b" style="left:390.50px;top:488.20px;width:13.00px;height:12.40px;background:#070707;border-radius:2px;"></div><div class="b" style="left:405.00px;top:488.20px;width:13.00px;height:12.40px;background:#070707;border-radius:2px;"></div><svg class="b" style="left:405.50px;top:488.00px;" width="12" height="13"><g><path d="M1 11.500L11 1" stroke="#d0d0d0" stroke-width="1.500"/></g></svg><div class="b" style="left:450.00px;top:488.20px;width:12.20px;height:12.40px;background:#070707;border-radius:2px;"></div><div class="b" style="left:465.00px;top:488.20px;width:12.20px;height:12.40px;background:#070707;border-radius:2px;"></div><div class="b" style="left:480.00px;top:488.20px;width:12.20px;height:12.40px;background:#070707;border-radius:2px;"></div><div class="b" style="left:514.50px;top:488.20px;width:44.00px;height:12.40px;background:#050505;border-radius:3px;"></div><span class="t" style="top:489.72px;font-size:11px;line-height:11px;color:#d4d4d4;left:522.00px;">Nc</span><svg class="b" style="left:540.00px;top:491.30px;" width="11" height="7"><g><path d="M1 1l4.500 4L10 1" fill="none" stroke="#c8c8c8" stroke-width="1.900"/></g></svg><div class="b" style="left:564.50px;top:488.20px;width:12.20px;height:12.40px;background:#070707;border-radius:2px;"></div><svg class="b" style="left:580.50px;top:487.80px;" width="13" height="13"><g><path d="M7.15 6.07 L7.04 5.89 L6.88 5.72 L6.68 5.59 L6.43 5.50 L6.16 5.47 L5.87 5.51 L5.58 5.61 L5.31 5.78 L5.08 6.03 L4.89 6.33 L4.78 6.68 L4.74 7.06 L4.79 7.46 L4.93 7.85 L5.16 8.22 L5.48 8.53 L5.87 8.78 L6.32 8.94 L6.81 9.00 L7.32 8.96 L7.82 8.79 L8.29 8.52 L8.70 8.13 L9.02 7.66 L9.24 7.11 L9.34 6.51 L9.31 5.89 L9.14 5.27 L8.83 4.69 L8.40 4.18 L7.85 3.77 L7.21 3.48 L6.51 3.33 L5.77 3.33 L5.04 3.49 L4.34 3.82 L3.72 4.29 L3.21 4.90 L2.83 5.63 L2.61 6.43 L2.57 7.27 L2.71 8.12 L3.04 8.94 L3.54 9.68 L4.20 10.31 L5.00 10.78 L5.89 11.08 L6.85 11.19 L7.81 11.08 L8.75 10.77 L9.62 10.25 L10.36 9.55 L10.95 8.69 L11.35 7.71 L11.52 6.66 L11.47 5.57 L11.19 4.50 L10.67 3.51 L9.94 2.64 L9.04 1.93" fill="none" stroke="#a0a0a0" stroke-width="1.300" stroke-linecap="round" stroke-linejoin="round"/></g></svg><svg class="b" style="left:592.00px;top:488.50px;" width="5" height="13" viewBox="0 0 5 13"><path d="M2.500 1v5" stroke="#a0a0a0" stroke-width="1.200"/><circle cx="2" cy="8.500" r="0.900" fill="#c8c8c8"/><circle cx="0.900" cy="10.500" r="0.800" fill="#c8c8c8"/></svg><div class="b" style="left:598.00px;top:488.20px;width:44.50px;height:12.40px;background:#050505;border-radius:3px;"></div><span class="t" style="top:489.72px;font-size:11px;line-height:11px;color:#d4d4d4;left:606.00px;">Nc</span><svg class="b" style="left:624.00px;top:491.30px;" width="11" height="7"><g><path d="M1 1l4.500 4L10 1" fill="none" stroke="#c8c8c8" stroke-width="1.900"/></g></svg><svg class="b" style="left:681.50px;top:488.00px;" width="13" height="13"><g><path d="M7.15 6.07 L7.04 5.89 L6.88 5.72 L6.68 5.59 L6.43 5.50 L6.16 5.47 L5.87 5.51 L5.58 5.61 L5.31 5.78 L5.08 6.03 L4.89 6.33 L4.78 6.68 L4.74 7.06 L4.79 7.46 L4.93 7.85 L5.16 8.22 L5.48 8.53 L5.87 8.78 L6.32 8.94 L6.81 9.00 L7.32 8.96 L7.82 8.79 L8.29 8.52 L8.70 8.13 L9.02 7.66 L9.24 7.11 L9.34 6.51 L9.31 5.89 L9.14 5.27 L8.83 4.69 L8.40 4.18 L7.85 3.77 L7.21 3.48 L6.51 3.33 L5.77 3.33 L5.04 3.49 L4.34 3.82 L3.72 4.29 L3.21 4.90 L2.83 5.63 L2.61 6.43 L2.57 7.27 L2.71 8.12 L3.04 8.94 L3.54 9.68 L4.20 10.31 L5.00 10.78 L5.89 11.08 L6.85 11.19 L7.81 11.08 L8.75 10.77 L9.62 10.25 L10.36 9.55 L10.95 8.69 L11.35 7.71 L11.52 6.66 L11.47 5.57 L11.19 4.50 L10.67 3.51 L9.94 2.64 L9.04 1.93" fill="none" stroke="#a0a0a0" stroke-width="1.300" stroke-linecap="round" stroke-linejoin="round"/></g></svg><div class="b" style="left:700.00px;top:488.20px;width:88.50px;height:12.40px;background:#050505;border-radius:3px;"></div><span class="t" style="top:489.72px;font-size:11.0px;line-height:11.0px;color:#d4d4d4;letter-spacing:0.051px;left:708.00px;">None</span><svg class="b" style="left:770.50px;top:491.30px;" width="11" height="7"><g><path d="M1 1l4.500 4L10 1" fill="none" stroke="#c8c8c8" stroke-width="1.900"/></g></svg><div class="b" style="left:818.00px;top:487.10px;width:178.00px;height:14.70px;background:#4d4d5c;"></div><div class="b" style="left:996.00px;top:487.10px;width:7.00px;height:14.70px;background:#202020;"></div><div class="b" style="left:2.00px;top:504.10px;width:807.00px;height:14.70px;background:#232323;"></div><div class="b" style="left:810.00px;top:504.10px;width:8.00px;height:14.70px;background:#1e1e1e;"></div><div class="b" style="left:6.00px;top:505.20px;width:13.00px;height:12.40px;background:#070707;border-radius:2px;"></div><svg class="b" style="left:6.00px;top:506.50px;" width="13" height="10"><g transform="translate(0.9 0.9) scale(0.86)"><path d="M0.500 5C2.500 1.800 4.800 0.800 6.500 0.800S10.500 1.800 12.500 5C10.500 8.200 8.200 9.200 6.500 9.200S2.500 8.200 0.500 5z" fill="#d8d8d8"/><circle cx="6.500" cy="5" r="2.600" fill="#070707"/><circle cx="6.500" cy="5" r="1.200" fill="#d8d8d8"/></g></svg><div class="b" style="left:36.40px;top:505.20px;width:11.80px;height:12.40px;background:#070707;border-radius:2px;"></div><div class="b" style="left:51.60px;top:505.20px;width:12.20px;height:12.40px;background:#070707;border-radius:2px;"></div><svg class="b" style="left:75.00px;top:506.00px;" width="7" height="11"><g><path d="M1 1l4 4.500L1 10" fill="none" stroke="#c8c8c8" stroke-width="1.900"/></g></svg><div class="b" style="left:87.00px;top:505.40px;width:12.00px;height:12.00px;background:#8080b0;"></div><span class="t" style="top:506.72px;font-size:11px;line-height:11px;color:#c8c8c8;left:108.00px;">19</span><svg class="b" style="left:138.20px;top:504.20px;" width="12" height="15"><g><path d="M2.500 0.600h5.200l3 3v8.400a2 2 0 0 1-2 2H2.500a2 2 0 0 1-2-2V2.600a2 2 0 0 1 2-2z" fill="#2a0604" stroke="#a86a1a" stroke-width="1.050"/><path d="M3.300 7l1.300-3.600h.8L6.700 7M3.800 5.900h2.400M8 4.600V7" stroke="#ff9426" stroke-width="1" fill="none"/><rect x="4.400" y="9.600" width="2.400" height="2.200" rx="0.500" fill="#ead8ee"/></g></svg><span class="t" style="top:506.72px;font-size:11px;line-height:11px;color:#d2d2d2;left:156.00px;">Right Hand</span><div class="b" style="left:374.50px;top:505.20px;width:13.00px;height:12.40px;background:#070707;border-radius:2px;"></div><svg class="b" style="left:374.50px;top:505.50px;" width="13" height="11"><g><path d="M1.500 6.500C1.500 3 3.800 1 6.500 1s5 2 5 5.500z" fill="none" stroke="#d0d0d0" stroke-width="1.300"/><path d="M0 9.800h3M10 9.800h3M4.300 6.500v3.300h-1M8.700 6.500v3.300h1M6.500 1v8.800" stroke="#d0d0d0" stroke-width="1.200" fill="none"/><circle cx="4.300" cy="4.300" r="0.900" fill="#d0d0d0"/><circle cx="8.700" cy="4.300" r="0.900" fill="#d0d0d0"/></g></svg><div class="b" style="left:390.50px;top:505.20px;width:13.00px;height:12.40px;background:#070707;border-radius:2px;"></div><div class="b" style="left:405.00px;top:505.20px;width:13.00px;height:12.40px;background:#070707;border-radius:2px;"></div><svg class="b" style="left:405.50px;top:505.00px;" width="12" height="13"><g><path d="M1 11.500L11 1" stroke="#d0d0d0" stroke-width="1.500"/></g></svg><div class="b" style="left:450.00px;top:505.20px;width:12.20px;height:12.40px;background:#070707;border-radius:2px;"></div><div class="b" style="left:465.00px;top:505.20px;width:12.20px;height:12.40px;background:#070707;border-radius:2px;"></div><div class="b" style="left:480.00px;top:505.20px;width:12.20px;height:12.40px;background:#070707;border-radius:2px;"></div><div class="b" style="left:514.50px;top:505.20px;width:44.00px;height:12.40px;background:#050505;border-radius:3px;"></div><span class="t" style="top:506.72px;font-size:11px;line-height:11px;color:#d4d4d4;left:522.00px;">Nc</span><svg class="b" style="left:540.00px;top:508.30px;" width="11" height="7"><g><path d="M1 1l4.500 4L10 1" fill="none" stroke="#c8c8c8" stroke-width="1.900"/></g></svg><div class="b" style="left:564.50px;top:505.20px;width:12.20px;height:12.40px;background:#070707;border-radius:2px;"></div><svg class="b" style="left:580.50px;top:504.80px;" width="13" height="13"><g><path d="M7.15 6.07 L7.04 5.89 L6.88 5.72 L6.68 5.59 L6.43 5.50 L6.16 5.47 L5.87 5.51 L5.58 5.61 L5.31 5.78 L5.08 6.03 L4.89 6.33 L4.78 6.68 L4.74 7.06 L4.79 7.46 L4.93 7.85 L5.16 8.22 L5.48 8.53 L5.87 8.78 L6.32 8.94 L6.81 9.00 L7.32 8.96 L7.82 8.79 L8.29 8.52 L8.70 8.13 L9.02 7.66 L9.24 7.11 L9.34 6.51 L9.31 5.89 L9.14 5.27 L8.83 4.69 L8.40 4.18 L7.85 3.77 L7.21 3.48 L6.51 3.33 L5.77 3.33 L5.04 3.49 L4.34 3.82 L3.72 4.29 L3.21 4.90 L2.83 5.63 L2.61 6.43 L2.57 7.27 L2.71 8.12 L3.04 8.94 L3.54 9.68 L4.20 10.31 L5.00 10.78 L5.89 11.08 L6.85 11.19 L7.81 11.08 L8.75 10.77 L9.62 10.25 L10.36 9.55 L10.95 8.69 L11.35 7.71 L11.52 6.66 L11.47 5.57 L11.19 4.50 L10.67 3.51 L9.94 2.64 L9.04 1.93" fill="none" stroke="#a0a0a0" stroke-width="1.300" stroke-linecap="round" stroke-linejoin="round"/></g></svg><svg class="b" style="left:592.00px;top:505.50px;" width="5" height="13" viewBox="0 0 5 13"><path d="M2.500 1v5" stroke="#a0a0a0" stroke-width="1.200"/><circle cx="2" cy="8.500" r="0.900" fill="#c8c8c8"/><circle cx="0.900" cy="10.500" r="0.800" fill="#c8c8c8"/></svg><div class="b" style="left:598.00px;top:505.20px;width:44.50px;height:12.40px;background:#050505;border-radius:3px;"></div><span class="t" style="top:506.72px;font-size:11px;line-height:11px;color:#d4d4d4;left:606.00px;">Nc</span><svg class="b" style="left:624.00px;top:508.30px;" width="11" height="7"><g><path d="M1 1l4.500 4L10 1" fill="none" stroke="#c8c8c8" stroke-width="1.900"/></g></svg><svg class="b" style="left:681.50px;top:505.00px;" width="13" height="13"><g><path d="M7.15 6.07 L7.04 5.89 L6.88 5.72 L6.68 5.59 L6.43 5.50 L6.16 5.47 L5.87 5.51 L5.58 5.61 L5.31 5.78 L5.08 6.03 L4.89 6.33 L4.78 6.68 L4.74 7.06 L4.79 7.46 L4.93 7.85 L5.16 8.22 L5.48 8.53 L5.87 8.78 L6.32 8.94 L6.81 9.00 L7.32 8.96 L7.82 8.79 L8.29 8.52 L8.70 8.13 L9.02 7.66 L9.24 7.11 L9.34 6.51 L9.31 5.89 L9.14 5.27 L8.83 4.69 L8.40 4.18 L7.85 3.77 L7.21 3.48 L6.51 3.33 L5.77 3.33 L5.04 3.49 L4.34 3.82 L3.72 4.29 L3.21 4.90 L2.83 5.63 L2.61 6.43 L2.57 7.27 L2.71 8.12 L3.04 8.94 L3.54 9.68 L4.20 10.31 L5.00 10.78 L5.89 11.08 L6.85 11.19 L7.81 11.08 L8.75 10.77 L9.62 10.25 L10.36 9.55 L10.95 8.69 L11.35 7.71 L11.52 6.66 L11.47 5.57 L11.19 4.50 L10.67 3.51 L9.94 2.64 L9.04 1.93" fill="none" stroke="#a0a0a0" stroke-width="1.300" stroke-linecap="round" stroke-linejoin="round"/></g></svg><div class="b" style="left:700.00px;top:505.20px;width:88.50px;height:12.40px;background:#050505;border-radius:3px;"></div><span class="t" style="top:506.72px;font-size:11.0px;line-height:11.0px;color:#d4d4d4;letter-spacing:0.051px;left:708.00px;">None</span><svg class="b" style="left:770.50px;top:508.30px;" width="11" height="7"><g><path d="M1 1l4.500 4L10 1" fill="none" stroke="#c8c8c8" stroke-width="1.900"/></g></svg><div class="b" style="left:818.00px;top:504.10px;width:178.00px;height:14.70px;background:#4d4d5c;"></div><div class="b" style="left:996.00px;top:504.10px;width:7.00px;height:14.70px;background:#202020;"></div><div class="b" style="left:2.00px;top:521.10px;width:807.00px;height:14.70px;background:#232323;"></div><div class="b" style="left:810.00px;top:521.10px;width:8.00px;height:14.70px;background:#1e1e1e;"></div><div class="b" style="left:6.00px;top:522.20px;width:13.00px;height:12.40px;background:#070707;border-radius:2px;"></div><svg class="b" style="left:6.00px;top:523.50px;" width="13" height="10"><g transform="translate(0.9 0.9) scale(0.86)"><path d="M0.500 5C2.500 1.800 4.800 0.800 6.500 0.800S10.500 1.800 12.500 5C10.500 8.200 8.200 9.200 6.500 9.200S2.500 8.200 0.500 5z" fill="#d8d8d8"/><circle cx="6.500" cy="5" r="2.600" fill="#070707"/><circle cx="6.500" cy="5" r="1.200" fill="#d8d8d8"/></g></svg><div class="b" style="left:36.40px;top:522.20px;width:11.80px;height:12.40px;background:#070707;border-radius:2px;"></div><div class="b" style="left:51.60px;top:522.20px;width:12.20px;height:12.40px;background:#070707;border-radius:2px;"></div><svg class="b" style="left:75.00px;top:523.00px;" width="7" height="11"><g><path d="M1 1l4 4.500L1 10" fill="none" stroke="#c8c8c8" stroke-width="1.900"/></g></svg><div class="b" style="left:87.00px;top:522.40px;width:12.00px;height:12.00px;background:#8080b0;"></div><span class="t" style="top:523.72px;font-size:11px;line-height:11px;color:#c8c8c8;left:108.00px;">20</span><svg class="b" style="left:138.20px;top:521.20px;" width="12" height="15"><g><path d="M2.500 0.600h5.200l3 3v8.400a2 2 0 0 1-2 2H2.500a2 2 0 0 1-2-2V2.600a2 2 0 0 1 2-2z" fill="#2a0604" stroke="#a86a1a" stroke-width="1.050"/><path d="M3.300 7l1.300-3.600h.8L6.700 7M3.800 5.900h2.400M8 4.600V7" stroke="#ff9426" stroke-width="1" fill="none"/><rect x="4.400" y="9.600" width="2.400" height="2.200" rx="0.500" fill="#ead8ee"/></g></svg><span class="t" style="top:523.72px;font-size:11.0px;line-height:11.0px;color:#d2d2d2;letter-spacing:0.036px;left:156.00px;">Forklift band</span><div class="b" style="left:374.50px;top:522.20px;width:13.00px;height:12.40px;background:#070707;border-radius:2px;"></div><svg class="b" style="left:374.50px;top:522.50px;" width="13" height="11"><g><path d="M1.500 6.500C1.500 3 3.800 1 6.500 1s5 2 5 5.500z" fill="none" stroke="#d0d0d0" stroke-width="1.300"/><path d="M0 9.800h3M10 9.800h3M4.300 6.500v3.300h-1M8.700 6.500v3.300h1M6.500 1v8.800" stroke="#d0d0d0" stroke-width="1.200" fill="none"/><circle cx="4.300" cy="4.300" r="0.900" fill="#d0d0d0"/><circle cx="8.700" cy="4.300" r="0.900" fill="#d0d0d0"/></g></svg><div class="b" style="left:390.50px;top:522.20px;width:13.00px;height:12.40px;background:#070707;border-radius:2px;"></div><div class="b" style="left:405.00px;top:522.20px;width:13.00px;height:12.40px;background:#070707;border-radius:2px;"></div><svg class="b" style="left:405.50px;top:522.00px;" width="12" height="13"><g><path d="M1 11.500L11 1" stroke="#d0d0d0" stroke-width="1.500"/></g></svg><div class="b" style="left:450.00px;top:522.20px;width:12.20px;height:12.40px;background:#070707;border-radius:2px;"></div><div class="b" style="left:465.00px;top:522.20px;width:12.20px;height:12.40px;background:#070707;border-radius:2px;"></div><div class="b" style="left:480.00px;top:522.20px;width:12.20px;height:12.40px;background:#070707;border-radius:2px;"></div><div class="b" style="left:514.50px;top:522.20px;width:44.00px;height:12.40px;background:#050505;border-radius:3px;"></div><span class="t" style="top:523.72px;font-size:11px;line-height:11px;color:#d4d4d4;left:522.00px;">Nc</span><svg class="b" style="left:540.00px;top:525.30px;" width="11" height="7"><g><path d="M1 1l4.500 4L10 1" fill="none" stroke="#c8c8c8" stroke-width="1.900"/></g></svg><div class="b" style="left:564.50px;top:522.20px;width:12.20px;height:12.40px;background:#070707;border-radius:2px;"></div><svg class="b" style="left:580.50px;top:521.80px;" width="13" height="13"><g><path d="M7.15 6.07 L7.04 5.89 L6.88 5.72 L6.68 5.59 L6.43 5.50 L6.16 5.47 L5.87 5.51 L5.58 5.61 L5.31 5.78 L5.08 6.03 L4.89 6.33 L4.78 6.68 L4.74 7.06 L4.79 7.46 L4.93 7.85 L5.16 8.22 L5.48 8.53 L5.87 8.78 L6.32 8.94 L6.81 9.00 L7.32 8.96 L7.82 8.79 L8.29 8.52 L8.70 8.13 L9.02 7.66 L9.24 7.11 L9.34 6.51 L9.31 5.89 L9.14 5.27 L8.83 4.69 L8.40 4.18 L7.85 3.77 L7.21 3.48 L6.51 3.33 L5.77 3.33 L5.04 3.49 L4.34 3.82 L3.72 4.29 L3.21 4.90 L2.83 5.63 L2.61 6.43 L2.57 7.27 L2.71 8.12 L3.04 8.94 L3.54 9.68 L4.20 10.31 L5.00 10.78 L5.89 11.08 L6.85 11.19 L7.81 11.08 L8.75 10.77 L9.62 10.25 L10.36 9.55 L10.95 8.69 L11.35 7.71 L11.52 6.66 L11.47 5.57 L11.19 4.50 L10.67 3.51 L9.94 2.64 L9.04 1.93" fill="none" stroke="#a0a0a0" stroke-width="1.300" stroke-linecap="round" stroke-linejoin="round"/></g></svg><svg class="b" style="left:592.00px;top:522.50px;" width="5" height="13" viewBox="0 0 5 13"><path d="M2.500 1v5" stroke="#a0a0a0" stroke-width="1.200"/><circle cx="2" cy="8.500" r="0.900" fill="#c8c8c8"/><circle cx="0.900" cy="10.500" r="0.800" fill="#c8c8c8"/></svg><div class="b" style="left:598.00px;top:522.20px;width:44.50px;height:12.40px;background:#050505;border-radius:3px;"></div><span class="t" style="top:523.72px;font-size:11px;line-height:11px;color:#d4d4d4;left:606.00px;">Nc</span><svg class="b" style="left:624.00px;top:525.30px;" width="11" height="7"><g><path d="M1 1l4.500 4L10 1" fill="none" stroke="#c8c8c8" stroke-width="1.900"/></g></svg><svg class="b" style="left:681.50px;top:522.00px;" width="13" height="13"><g><path d="M7.15 6.07 L7.04 5.89 L6.88 5.72 L6.68 5.59 L6.43 5.50 L6.16 5.47 L5.87 5.51 L5.58 5.61 L5.31 5.78 L5.08 6.03 L4.89 6.33 L4.78 6.68 L4.74 7.06 L4.79 7.46 L4.93 7.85 L5.16 8.22 L5.48 8.53 L5.87 8.78 L6.32 8.94 L6.81 9.00 L7.32 8.96 L7.82 8.79 L8.29 8.52 L8.70 8.13 L9.02 7.66 L9.24 7.11 L9.34 6.51 L9.31 5.89 L9.14 5.27 L8.83 4.69 L8.40 4.18 L7.85 3.77 L7.21 3.48 L6.51 3.33 L5.77 3.33 L5.04 3.49 L4.34 3.82 L3.72 4.29 L3.21 4.90 L2.83 5.63 L2.61 6.43 L2.57 7.27 L2.71 8.12 L3.04 8.94 L3.54 9.68 L4.20 10.31 L5.00 10.78 L5.89 11.08 L6.85 11.19 L7.81 11.08 L8.75 10.77 L9.62 10.25 L10.36 9.55 L10.95 8.69 L11.35 7.71 L11.52 6.66 L11.47 5.57 L11.19 4.50 L10.67 3.51 L9.94 2.64 L9.04 1.93" fill="none" stroke="#a0a0a0" stroke-width="1.300" stroke-linecap="round" stroke-linejoin="round"/></g></svg><div class="b" style="left:700.00px;top:522.20px;width:88.50px;height:12.40px;background:#050505;border-radius:3px;"></div><span class="t" style="top:523.72px;font-size:11.0px;line-height:11.0px;color:#d4d4d4;letter-spacing:0.051px;left:708.00px;">None</span><svg class="b" style="left:770.50px;top:525.30px;" width="11" height="7"><g><path d="M1 1l4.500 4L10 1" fill="none" stroke="#c8c8c8" stroke-width="1.900"/></g></svg><div class="b" style="left:818.00px;top:521.10px;width:178.00px;height:14.70px;background:#4d4d5c;"></div><div class="b" style="left:996.00px;top:521.10px;width:7.00px;height:14.70px;background:#202020;"></div><div class="b" style="left:2.00px;top:538.10px;width:807.00px;height:14.70px;background:#464646;"></div><div class="b" style="left:810.00px;top:538.10px;width:8.00px;height:14.70px;background:#1e1e1e;"></div><div class="b" style="left:2.00px;top:538.10px;width:807.00px;height:14.70px;background:#3e3e3e;"></div><div class="b" style="left:6.00px;top:539.20px;width:13.00px;height:12.40px;background:#070707;border-radius:2px;"></div><svg class="b" style="left:6.00px;top:540.50px;" width="13" height="10"><g transform="translate(0.9 0.9) scale(0.86)"><path d="M0.500 5C2.500 1.800 4.800 0.800 6.500 0.800S10.500 1.800 12.500 5C10.500 8.200 8.200 9.200 6.500 9.200S2.500 8.200 0.500 5z" fill="#d8d8d8"/><circle cx="6.500" cy="5" r="2.600" fill="#070707"/><circle cx="6.500" cy="5" r="1.200" fill="#d8d8d8"/></g></svg><div class="b" style="left:36.40px;top:539.20px;width:11.80px;height:12.40px;background:#070707;border-radius:2px;"></div><div class="b" style="left:51.60px;top:539.20px;width:12.20px;height:12.40px;background:#070707;border-radius:2px;"></div><svg class="b" style="left:75.00px;top:540.00px;" width="7" height="11"><g><path d="M1 1l4 4.500L1 10" fill="none" stroke="#c8c8c8" stroke-width="1.900"/></g></svg><div class="b" style="left:87.00px;top:539.40px;width:12.00px;height:12.00px;background:#8080b0;"></div><span class="t" style="top:540.72px;font-size:11px;line-height:11px;color:#c8c8c8;left:108.00px;">21</span><svg class="b" style="left:138.20px;top:538.20px;" width="12" height="15"><g><path d="M2.500 0.600h5.200l3 3v8.400a2 2 0 0 1-2 2H2.500a2 2 0 0 1-2-2V2.600a2 2 0 0 1 2-2z" fill="#2a0604" stroke="#a86a1a" stroke-width="1.050"/><path d="M3.300 7l1.300-3.600h.8L6.700 7M3.800 5.900h2.400M8 4.600V7" stroke="#ff9426" stroke-width="1" fill="none"/><rect x="4.400" y="9.600" width="2.400" height="2.200" rx="0.500" fill="#ead8ee"/></g></svg><div class="b" style="left:152.50px;top:538.10px;width:217.50px;height:14.70px;background:#a9a9a9;"></div><span class="t" style="top:540.72px;font-size:11px;line-height:11px;color:#141414;left:156.00px;">Right arm Lower</span><div class="b" style="left:374.50px;top:539.20px;width:13.00px;height:12.40px;background:#070707;border-radius:2px;"></div><svg class="b" style="left:374.50px;top:539.50px;" width="13" height="11"><g><path d="M1.500 6.500C1.500 3 3.800 1 6.500 1s5 2 5 5.500z" fill="none" stroke="#d0d0d0" stroke-width="1.300"/><path d="M0 9.800h3M10 9.800h3M4.300 6.500v3.300h-1M8.700 6.500v3.300h1M6.500 1v8.800" stroke="#d0d0d0" stroke-width="1.200" fill="none"/><circle cx="4.300" cy="4.300" r="0.900" fill="#d0d0d0"/><circle cx="8.700" cy="4.300" r="0.900" fill="#d0d0d0"/></g></svg><div class="b" style="left:390.50px;top:539.20px;width:13.00px;height:12.40px;background:#070707;border-radius:2px;"></div><div class="b" style="left:405.00px;top:539.20px;width:13.00px;height:12.40px;background:#070707;border-radius:2px;"></div><svg class="b" style="left:405.50px;top:539.00px;" width="12" height="13"><g><path d="M1 11.500L11 1" stroke="#d0d0d0" stroke-width="1.500"/></g></svg><div class="b" style="left:450.00px;top:539.20px;width:12.20px;height:12.40px;background:#070707;border-radius:2px;"></div><div class="b" style="left:465.00px;top:539.20px;width:12.20px;height:12.40px;background:#070707;border-radius:2px;"></div><div class="b" style="left:480.00px;top:539.20px;width:12.20px;height:12.40px;background:#070707;border-radius:2px;"></div><div class="b" style="left:514.50px;top:539.20px;width:44.00px;height:12.40px;background:#050505;border-radius:3px;"></div><span class="t" style="top:540.72px;font-size:11px;line-height:11px;color:#d4d4d4;left:522.00px;">Nc</span><svg class="b" style="left:540.00px;top:542.30px;" width="11" height="7"><g><path d="M1 1l4.500 4L10 1" fill="none" stroke="#c8c8c8" stroke-width="1.900"/></g></svg><div class="b" style="left:564.50px;top:539.20px;width:12.20px;height:12.40px;background:#070707;border-radius:2px;"></div><svg class="b" style="left:580.50px;top:538.80px;" width="13" height="13"><g><path d="M7.15 6.07 L7.04 5.89 L6.88 5.72 L6.68 5.59 L6.43 5.50 L6.16 5.47 L5.87 5.51 L5.58 5.61 L5.31 5.78 L5.08 6.03 L4.89 6.33 L4.78 6.68 L4.74 7.06 L4.79 7.46 L4.93 7.85 L5.16 8.22 L5.48 8.53 L5.87 8.78 L6.32 8.94 L6.81 9.00 L7.32 8.96 L7.82 8.79 L8.29 8.52 L8.70 8.13 L9.02 7.66 L9.24 7.11 L9.34 6.51 L9.31 5.89 L9.14 5.27 L8.83 4.69 L8.40 4.18 L7.85 3.77 L7.21 3.48 L6.51 3.33 L5.77 3.33 L5.04 3.49 L4.34 3.82 L3.72 4.29 L3.21 4.90 L2.83 5.63 L2.61 6.43 L2.57 7.27 L2.71 8.12 L3.04 8.94 L3.54 9.68 L4.20 10.31 L5.00 10.78 L5.89 11.08 L6.85 11.19 L7.81 11.08 L8.75 10.77 L9.62 10.25 L10.36 9.55 L10.95 8.69 L11.35 7.71 L11.52 6.66 L11.47 5.57 L11.19 4.50 L10.67 3.51 L9.94 2.64 L9.04 1.93" fill="none" stroke="#a0a0a0" stroke-width="1.300" stroke-linecap="round" stroke-linejoin="round"/></g></svg><svg class="b" style="left:592.00px;top:539.50px;" width="5" height="13" viewBox="0 0 5 13"><path d="M2.500 1v5" stroke="#a0a0a0" stroke-width="1.200"/><circle cx="2" cy="8.500" r="0.900" fill="#c8c8c8"/><circle cx="0.900" cy="10.500" r="0.800" fill="#c8c8c8"/></svg><div class="b" style="left:598.00px;top:539.20px;width:44.50px;height:12.40px;background:#050505;border-radius:3px;"></div><span class="t" style="top:540.72px;font-size:11px;line-height:11px;color:#d4d4d4;left:606.00px;">Nc</span><svg class="b" style="left:624.00px;top:542.30px;" width="11" height="7"><g><path d="M1 1l4.500 4L10 1" fill="none" stroke="#c8c8c8" stroke-width="1.900"/></g></svg><svg class="b" style="left:681.50px;top:539.00px;" width="13" height="13"><g><path d="M7.15 6.07 L7.04 5.89 L6.88 5.72 L6.68 5.59 L6.43 5.50 L6.16 5.47 L5.87 5.51 L5.58 5.61 L5.31 5.78 L5.08 6.03 L4.89 6.33 L4.78 6.68 L4.74 7.06 L4.79 7.46 L4.93 7.85 L5.16 8.22 L5.48 8.53 L5.87 8.78 L6.32 8.94 L6.81 9.00 L7.32 8.96 L7.82 8.79 L8.29 8.52 L8.70 8.13 L9.02 7.66 L9.24 7.11 L9.34 6.51 L9.31 5.89 L9.14 5.27 L8.83 4.69 L8.40 4.18 L7.85 3.77 L7.21 3.48 L6.51 3.33 L5.77 3.33 L5.04 3.49 L4.34 3.82 L3.72 4.29 L3.21 4.90 L2.83 5.63 L2.61 6.43 L2.57 7.27 L2.71 8.12 L3.04 8.94 L3.54 9.68 L4.20 10.31 L5.00 10.78 L5.89 11.08 L6.85 11.19 L7.81 11.08 L8.75 10.77 L9.62 10.25 L10.36 9.55 L10.95 8.69 L11.35 7.71 L11.52 6.66 L11.47 5.57 L11.19 4.50 L10.67 3.51 L9.94 2.64 L9.04 1.93" fill="none" stroke="#a0a0a0" stroke-width="1.300" stroke-linecap="round" stroke-linejoin="round"/></g></svg><div class="b" style="left:700.00px;top:539.20px;width:88.50px;height:12.40px;background:#050505;border-radius:3px;"></div><span class="t" style="top:540.72px;font-size:11.0px;line-height:11.0px;color:#d4d4d4;letter-spacing:0.051px;left:708.00px;">None</span><svg class="b" style="left:770.50px;top:542.30px;" width="11" height="7"><g><path d="M1 1l4.500 4L10 1" fill="none" stroke="#c8c8c8" stroke-width="1.900"/></g></svg><div class="b" style="left:818.00px;top:538.10px;width:178.00px;height:14.70px;background:linear-gradient(#a0a0c0 0,#7878a2 10%,#70709a 88%,#5c5c84 100%);"></div><div class="b" style="left:996.00px;top:538.10px;width:7.00px;height:14.70px;background:#2f2f2f;"></div><div class="b" style="left:2.00px;top:555.10px;width:807.00px;height:14.70px;background:#464646;"></div><div class="b" style="left:810.00px;top:555.10px;width:8.00px;height:14.70px;background:#1e1e1e;"></div><div class="b" style="left:2.00px;top:555.10px;width:807.00px;height:14.70px;background:#3e3e3e;"></div><div class="b" style="left:6.00px;top:556.20px;width:13.00px;height:12.40px;background:#070707;border-radius:2px;"></div><svg class="b" style="left:6.00px;top:557.50px;" width="13" height="10"><g transform="translate(0.9 0.9) scale(0.86)"><path d="M0.500 5C2.500 1.800 4.800 0.800 6.500 0.800S10.500 1.800 12.500 5C10.500 8.200 8.200 9.200 6.500 9.200S2.500 8.200 0.500 5z" fill="#d8d8d8"/><circle cx="6.500" cy="5" r="2.600" fill="#070707"/><circle cx="6.500" cy="5" r="1.200" fill="#d8d8d8"/></g></svg><div class="b" style="left:36.40px;top:556.20px;width:11.80px;height:12.40px;background:#070707;border-radius:2px;"></div><div class="b" style="left:51.60px;top:556.20px;width:12.20px;height:12.40px;background:#070707;border-radius:2px;"></div><svg class="b" style="left:75.00px;top:557.00px;" width="7" height="11"><g><path d="M1 1l4 4.500L1 10" fill="none" stroke="#c8c8c8" stroke-width="1.900"/></g></svg><div class="b" style="left:87.00px;top:556.40px;width:12.00px;height:12.00px;background:#8080b0;"></div><span class="t" style="top:557.72px;font-size:11px;line-height:11px;color:#c8c8c8;left:108.00px;">22</span><svg class="b" style="left:138.20px;top:555.20px;" width="12" height="15"><g><path d="M2.500 0.600h5.200l3 3v8.400a2 2 0 0 1-2 2H2.500a2 2 0 0 1-2-2V2.600a2 2 0 0 1 2-2z" fill="#2a0604" stroke="#a86a1a" stroke-width="1.050"/><path d="M3.300 7l1.300-3.600h.8L6.700 7M3.800 5.900h2.400M8 4.600V7" stroke="#ff9426" stroke-width="1" fill="none"/><rect x="4.400" y="9.600" width="2.400" height="2.200" rx="0.500" fill="#ead8ee"/></g></svg><div class="b" style="left:152.50px;top:555.10px;width:217.50px;height:14.70px;background:#a9a9a9;"></div><span class="t" style="top:557.72px;font-size:11px;line-height:11px;color:#141414;left:156.00px;">Right arm upper</span><div class="b" style="left:374.50px;top:556.20px;width:13.00px;height:12.40px;background:#070707;border-radius:2px;"></div><svg class="b" style="left:374.50px;top:556.50px;" width="13" height="11"><g><path d="M1.500 6.500C1.500 3 3.800 1 6.500 1s5 2 5 5.500z" fill="none" stroke="#d0d0d0" stroke-width="1.300"/><path d="M0 9.800h3M10 9.800h3M4.300 6.500v3.300h-1M8.700 6.500v3.300h1M6.500 1v8.800" stroke="#d0d0d0" stroke-width="1.200" fill="none"/><circle cx="4.300" cy="4.300" r="0.900" fill="#d0d0d0"/><circle cx="8.700" cy="4.300" r="0.900" fill="#d0d0d0"/></g></svg><div class="b" style="left:390.50px;top:556.20px;width:13.00px;height:12.40px;background:#070707;border-radius:2px;"></div><div class="b" style="left:405.00px;top:556.20px;width:13.00px;height:12.40px;background:#070707;border-radius:2px;"></div><svg class="b" style="left:405.50px;top:556.00px;" width="12" height="13"><g><path d="M1 11.500L11 1" stroke="#d0d0d0" stroke-width="1.500"/></g></svg><div class="b" style="left:450.00px;top:556.20px;width:12.20px;height:12.40px;background:#070707;border-radius:2px;"></div><div class="b" style="left:465.00px;top:556.20px;width:12.20px;height:12.40px;background:#070707;border-radius:2px;"></div><div class="b" style="left:480.00px;top:556.20px;width:12.20px;height:12.40px;background:#070707;border-radius:2px;"></div><div class="b" style="left:514.50px;top:556.20px;width:44.00px;height:12.40px;background:#050505;border-radius:3px;"></div><span class="t" style="top:557.72px;font-size:11px;line-height:11px;color:#d4d4d4;left:522.00px;">Nc</span><svg class="b" style="left:540.00px;top:559.30px;" width="11" height="7"><g><path d="M1 1l4.500 4L10 1" fill="none" stroke="#c8c8c8" stroke-width="1.900"/></g></svg><div class="b" style="left:564.50px;top:556.20px;width:12.20px;height:12.40px;background:#070707;border-radius:2px;"></div><svg class="b" style="left:580.50px;top:555.80px;" width="13" height="13"><g><path d="M7.15 6.07 L7.04 5.89 L6.88 5.72 L6.68 5.59 L6.43 5.50 L6.16 5.47 L5.87 5.51 L5.58 5.61 L5.31 5.78 L5.08 6.03 L4.89 6.33 L4.78 6.68 L4.74 7.06 L4.79 7.46 L4.93 7.85 L5.16 8.22 L5.48 8.53 L5.87 8.78 L6.32 8.94 L6.81 9.00 L7.32 8.96 L7.82 8.79 L8.29 8.52 L8.70 8.13 L9.02 7.66 L9.24 7.11 L9.34 6.51 L9.31 5.89 L9.14 5.27 L8.83 4.69 L8.40 4.18 L7.85 3.77 L7.21 3.48 L6.51 3.33 L5.77 3.33 L5.04 3.49 L4.34 3.82 L3.72 4.29 L3.21 4.90 L2.83 5.63 L2.61 6.43 L2.57 7.27 L2.71 8.12 L3.04 8.94 L3.54 9.68 L4.20 10.31 L5.00 10.78 L5.89 11.08 L6.85 11.19 L7.81 11.08 L8.75 10.77 L9.62 10.25 L10.36 9.55 L10.95 8.69 L11.35 7.71 L11.52 6.66 L11.47 5.57 L11.19 4.50 L10.67 3.51 L9.94 2.64 L9.04 1.93" fill="none" stroke="#a0a0a0" stroke-width="1.300" stroke-linecap="round" stroke-linejoin="round"/></g></svg><svg class="b" style="left:592.00px;top:556.50px;" width="5" height="13" viewBox="0 0 5 13"><path d="M2.500 1v5" stroke="#a0a0a0" stroke-width="1.200"/><circle cx="2" cy="8.500" r="0.900" fill="#c8c8c8"/><circle cx="0.900" cy="10.500" r="0.800" fill="#c8c8c8"/></svg><div class="b" style="left:598.00px;top:556.20px;width:44.50px;height:12.40px;background:#050505;border-radius:3px;"></div><span class="t" style="top:557.72px;font-size:11px;line-height:11px;color:#d4d4d4;left:606.00px;">Nc</span><svg class="b" style="left:624.00px;top:559.30px;" width="11" height="7"><g><path d="M1 1l4.500 4L10 1" fill="none" stroke="#c8c8c8" stroke-width="1.900"/></g></svg><svg class="b" style="left:681.50px;top:556.00px;" width="13" height="13"><g><path d="M7.15 6.07 L7.04 5.89 L6.88 5.72 L6.68 5.59 L6.43 5.50 L6.16 5.47 L5.87 5.51 L5.58 5.61 L5.31 5.78 L5.08 6.03 L4.89 6.33 L4.78 6.68 L4.74 7.06 L4.79 7.46 L4.93 7.85 L5.16 8.22 L5.48 8.53 L5.87 8.78 L6.32 8.94 L6.81 9.00 L7.32 8.96 L7.82 8.79 L8.29 8.52 L8.70 8.13 L9.02 7.66 L9.24 7.11 L9.34 6.51 L9.31 5.89 L9.14 5.27 L8.83 4.69 L8.40 4.18 L7.85 3.77 L7.21 3.48 L6.51 3.33 L5.77 3.33 L5.04 3.49 L4.34 3.82 L3.72 4.29 L3.21 4.90 L2.83 5.63 L2.61 6.43 L2.57 7.27 L2.71 8.12 L3.04 8.94 L3.54 9.68 L4.20 10.31 L5.00 10.78 L5.89 11.08 L6.85 11.19 L7.81 11.08 L8.75 10.77 L9.62 10.25 L10.36 9.55 L10.95 8.69 L11.35 7.71 L11.52 6.66 L11.47 5.57 L11.19 4.50 L10.67 3.51 L9.94 2.64 L9.04 1.93" fill="none" stroke="#a0a0a0" stroke-width="1.300" stroke-linecap="round" stroke-linejoin="round"/></g></svg><div class="b" style="left:700.00px;top:556.20px;width:88.50px;height:12.40px;background:#050505;border-radius:3px;"></div><span class="t" style="top:557.72px;font-size:11.0px;line-height:11.0px;color:#d4d4d4;letter-spacing:0.051px;left:708.00px;">None</span><svg class="b" style="left:770.50px;top:559.30px;" width="11" height="7"><g><path d="M1 1l4.500 4L10 1" fill="none" stroke="#c8c8c8" stroke-width="1.900"/></g></svg><div class="b" style="left:818.00px;top:555.10px;width:178.00px;height:14.70px;background:linear-gradient(#a0a0c0 0,#7878a2 10%,#70709a 88%,#5c5c84 100%);"></div><div class="b" style="left:996.00px;top:555.10px;width:7.00px;height:14.70px;background:#2f2f2f;"></div><div class="b" style="left:2.00px;top:572.10px;width:807.00px;height:14.70px;background:#232323;"></div><div class="b" style="left:810.00px;top:572.10px;width:8.00px;height:14.70px;background:#1e1e1e;"></div><div class="b" style="left:6.00px;top:573.20px;width:13.00px;height:12.40px;background:#070707;border-radius:2px;"></div><svg class="b" style="left:6.00px;top:574.50px;" width="13" height="10"><g transform="translate(0.9 0.9) scale(0.86)"><path d="M0.500 5C2.500 1.800 4.800 0.800 6.500 0.800S10.500 1.800 12.500 5C10.500 8.200 8.200 9.200 6.500 9.200S2.500 8.200 0.500 5z" fill="#d8d8d8"/><circle cx="6.500" cy="5" r="2.600" fill="#070707"/><circle cx="6.500" cy="5" r="1.200" fill="#d8d8d8"/></g></svg><div class="b" style="left:36.40px;top:573.20px;width:11.80px;height:12.40px;background:#070707;border-radius:2px;"></div><div class="b" style="left:51.60px;top:573.20px;width:12.20px;height:12.40px;background:#070707;border-radius:2px;"></div><svg class="b" style="left:75.00px;top:574.00px;" width="7" height="11"><g><path d="M1 1l4 4.500L1 10" fill="none" stroke="#c8c8c8" stroke-width="1.900"/></g></svg><div class="b" style="left:87.00px;top:573.40px;width:12.00px;height:12.00px;background:#8080b0;"></div><span class="t" style="top:574.72px;font-size:11px;line-height:11px;color:#c8c8c8;left:108.00px;">23</span><svg class="b" style="left:138.20px;top:572.20px;" width="12" height="15"><g><path d="M2.500 0.600h5.200l3 3v8.400a2 2 0 0 1-2 2H2.500a2 2 0 0 1-2-2V2.600a2 2 0 0 1 2-2z" fill="#2a0604" stroke="#a86a1a" stroke-width="1.050"/><path d="M3.300 7l1.300-3.600h.8L6.700 7M3.800 5.900h2.400M8 4.600V7" stroke="#ff9426" stroke-width="1" fill="none"/><rect x="4.400" y="9.600" width="2.400" height="2.200" rx="0.500" fill="#ead8ee"/></g></svg><span class="t" style="top:574.72px;font-size:11px;line-height:11px;color:#d2d2d2;left:156.00px;">Glove Left</span><div class="b" style="left:374.50px;top:573.20px;width:13.00px;height:12.40px;background:#070707;border-radius:2px;"></div><svg class="b" style="left:374.50px;top:573.50px;" width="13" height="11"><g><path d="M1.500 6.500C1.500 3 3.800 1 6.500 1s5 2 5 5.500z" fill="none" stroke="#d0d0d0" stroke-width="1.300"/><path d="M0 9.800h3M10 9.800h3M4.300 6.500v3.300h-1M8.700 6.500v3.300h1M6.500 1v8.800" stroke="#d0d0d0" stroke-width="1.200" fill="none"/><circle cx="4.300" cy="4.300" r="0.900" fill="#d0d0d0"/><circle cx="8.700" cy="4.300" r="0.900" fill="#d0d0d0"/></g></svg><div class="b" style="left:390.50px;top:573.20px;width:13.00px;height:12.40px;background:#070707;border-radius:2px;"></div><div class="b" style="left:405.00px;top:573.20px;width:13.00px;height:12.40px;background:#070707;border-radius:2px;"></div><svg class="b" style="left:405.50px;top:573.00px;" width="12" height="13"><g><path d="M1 11.500L11 1" stroke="#d0d0d0" stroke-width="1.500"/></g></svg><div class="b" style="left:450.00px;top:573.20px;width:12.20px;height:12.40px;background:#070707;border-radius:2px;"></div><div class="b" style="left:465.00px;top:573.20px;width:12.20px;height:12.40px;background:#070707;border-radius:2px;"></div><div class="b" style="left:480.00px;top:573.20px;width:12.20px;height:12.40px;background:#070707;border-radius:2px;"></div><div class="b" style="left:514.50px;top:573.20px;width:44.00px;height:12.40px;background:#050505;border-radius:3px;"></div><span class="t" style="top:574.72px;font-size:11px;line-height:11px;color:#d4d4d4;left:522.00px;">Nc</span><svg class="b" style="left:540.00px;top:576.30px;" width="11" height="7"><g><path d="M1 1l4.500 4L10 1" fill="none" stroke="#c8c8c8" stroke-width="1.900"/></g></svg><div class="b" style="left:564.50px;top:573.20px;width:12.20px;height:12.40px;background:#070707;border-radius:2px;"></div><svg class="b" style="left:580.50px;top:572.80px;" width="13" height="13"><g><path d="M7.15 6.07 L7.04 5.89 L6.88 5.72 L6.68 5.59 L6.43 5.50 L6.16 5.47 L5.87 5.51 L5.58 5.61 L5.31 5.78 L5.08 6.03 L4.89 6.33 L4.78 6.68 L4.74 7.06 L4.79 7.46 L4.93 7.85 L5.16 8.22 L5.48 8.53 L5.87 8.78 L6.32 8.94 L6.81 9.00 L7.32 8.96 L7.82 8.79 L8.29 8.52 L8.70 8.13 L9.02 7.66 L9.24 7.11 L9.34 6.51 L9.31 5.89 L9.14 5.27 L8.83 4.69 L8.40 4.18 L7.85 3.77 L7.21 3.48 L6.51 3.33 L5.77 3.33 L5.04 3.49 L4.34 3.82 L3.72 4.29 L3.21 4.90 L2.83 5.63 L2.61 6.43 L2.57 7.27 L2.71 8.12 L3.04 8.94 L3.54 9.68 L4.20 10.31 L5.00 10.78 L5.89 11.08 L6.85 11.19 L7.81 11.08 L8.75 10.77 L9.62 10.25 L10.36 9.55 L10.95 8.69 L11.35 7.71 L11.52 6.66 L11.47 5.57 L11.19 4.50 L10.67 3.51 L9.94 2.64 L9.04 1.93" fill="none" stroke="#a0a0a0" stroke-width="1.300" stroke-linecap="round" stroke-linejoin="round"/></g></svg><svg class="b" style="left:592.00px;top:573.50px;" width="5" height="13" viewBox="0 0 5 13"><path d="M2.500 1v5" stroke="#a0a0a0" stroke-width="1.200"/><circle cx="2" cy="8.500" r="0.900" fill="#c8c8c8"/><circle cx="0.900" cy="10.500" r="0.800" fill="#c8c8c8"/></svg><div class="b" style="left:598.00px;top:573.20px;width:44.50px;height:12.40px;background:#050505;border-radius:3px;"></div><span class="t" style="top:574.72px;font-size:11px;line-height:11px;color:#d4d4d4;left:606.00px;">Nc</span><svg class="b" style="left:624.00px;top:576.30px;" width="11" height="7"><g><path d="M1 1l4.500 4L10 1" fill="none" stroke="#c8c8c8" stroke-width="1.900"/></g></svg><svg class="b" style="left:681.50px;top:573.00px;" width="13" height="13"><g><path d="M7.15 6.07 L7.04 5.89 L6.88 5.72 L6.68 5.59 L6.43 5.50 L6.16 5.47 L5.87 5.51 L5.58 5.61 L5.31 5.78 L5.08 6.03 L4.89 6.33 L4.78 6.68 L4.74 7.06 L4.79 7.46 L4.93 7.85 L5.16 8.22 L5.48 8.53 L5.87 8.78 L6.32 8.94 L6.81 9.00 L7.32 8.96 L7.82 8.79 L8.29 8.52 L8.70 8.13 L9.02 7.66 L9.24 7.11 L9.34 6.51 L9.31 5.89 L9.14 5.27 L8.83 4.69 L8.40 4.18 L7.85 3.77 L7.21 3.48 L6.51 3.33 L5.77 3.33 L5.04 3.49 L4.34 3.82 L3.72 4.29 L3.21 4.90 L2.83 5.63 L2.61 6.43 L2.57 7.27 L2.71 8.12 L3.04 8.94 L3.54 9.68 L4.20 10.31 L5.00 10.78 L5.89 11.08 L6.85 11.19 L7.81 11.08 L8.75 10.77 L9.62 10.25 L10.36 9.55 L10.95 8.69 L11.35 7.71 L11.52 6.66 L11.47 5.57 L11.19 4.50 L10.67 3.51 L9.94 2.64 L9.04 1.93" fill="none" stroke="#a0a0a0" stroke-width="1.300" stroke-linecap="round" stroke-linejoin="round"/></g></svg><div class="b" style="left:700.00px;top:573.20px;width:88.50px;height:12.40px;background:#050505;border-radius:3px;"></div><span class="t" style="top:574.72px;font-size:11.0px;line-height:11.0px;color:#d4d4d4;letter-spacing:0.051px;left:708.00px;">None</span><svg class="b" style="left:770.50px;top:576.30px;" width="11" height="7"><g><path d="M1 1l4.500 4L10 1" fill="none" stroke="#c8c8c8" stroke-width="1.900"/></g></svg><div class="b" style="left:818.00px;top:572.10px;width:178.00px;height:14.70px;background:#4d4d5c;"></div><div class="b" style="left:996.00px;top:572.10px;width:7.00px;height:14.70px;background:#202020;"></div><div class="b" style="left:2.00px;top:589.10px;width:807.00px;height:14.70px;background:#232323;"></div><div class="b" style="left:810.00px;top:589.10px;width:8.00px;height:14.70px;background:#1e1e1e;"></div><div class="b" style="left:6.00px;top:590.20px;width:13.00px;height:12.40px;background:#070707;border-radius:2px;"></div><svg class="b" style="left:6.00px;top:591.50px;" width="13" height="10"><g transform="translate(0.9 0.9) scale(0.86)"><path d="M0.500 5C2.500 1.800 4.800 0.800 6.500 0.800S10.500 1.800 12.500 5C10.500 8.200 8.200 9.200 6.500 9.200S2.500 8.200 0.500 5z" fill="#d8d8d8"/><circle cx="6.500" cy="5" r="2.600" fill="#070707"/><circle cx="6.500" cy="5" r="1.200" fill="#d8d8d8"/></g></svg><div class="b" style="left:36.40px;top:590.20px;width:11.80px;height:12.40px;background:#070707;border-radius:2px;"></div><div class="b" style="left:51.60px;top:590.20px;width:12.20px;height:12.40px;background:#070707;border-radius:2px;"></div><svg class="b" style="left:75.00px;top:591.00px;" width="7" height="11"><g><path d="M1 1l4 4.500L1 10" fill="none" stroke="#c8c8c8" stroke-width="1.900"/></g></svg><div class="b" style="left:87.00px;top:590.40px;width:12.00px;height:12.00px;background:#8080b0;"></div><span class="t" style="top:591.72px;font-size:11px;line-height:11px;color:#c8c8c8;left:108.00px;">24</span><svg class="b" style="left:138.20px;top:589.20px;" width="12" height="15"><g><path d="M2.500 0.600h5.200l3 3v8.400a2 2 0 0 1-2 2H2.500a2 2 0 0 1-2-2V2.600a2 2 0 0 1 2-2z" fill="#2a0604" stroke="#a86a1a" stroke-width="1.050"/><path d="M3.300 7l1.300-3.600h.8L6.700 7M3.800 5.900h2.400M8 4.600V7" stroke="#ff9426" stroke-width="1" fill="none"/><rect x="4.400" y="9.600" width="2.400" height="2.200" rx="0.500" fill="#ead8ee"/></g></svg><span class="t" style="top:591.72px;font-size:11px;line-height:11px;color:#d2d2d2;left:156.00px;">Left Hand</span><div class="b" style="left:374.50px;top:590.20px;width:13.00px;height:12.40px;background:#070707;border-radius:2px;"></div><svg class="b" style="left:374.50px;top:590.50px;" width="13" height="11"><g><path d="M1.500 6.500C1.500 3 3.800 1 6.500 1s5 2 5 5.500z" fill="none" stroke="#d0d0d0" stroke-width="1.300"/><path d="M0 9.800h3M10 9.800h3M4.300 6.500v3.300h-1M8.700 6.500v3.300h1M6.500 1v8.800" stroke="#d0d0d0" stroke-width="1.200" fill="none"/><circle cx="4.300" cy="4.300" r="0.900" fill="#d0d0d0"/><circle cx="8.700" cy="4.300" r="0.900" fill="#d0d0d0"/></g></svg><div class="b" style="left:390.50px;top:590.20px;width:13.00px;height:12.40px;background:#070707;border-radius:2px;"></div><div class="b" style="left:405.00px;top:590.20px;width:13.00px;height:12.40px;background:#070707;border-radius:2px;"></div><svg class="b" style="left:405.50px;top:590.00px;" width="12" height="13"><g><path d="M1 11.500L11 1" stroke="#d0d0d0" stroke-width="1.500"/></g></svg><div class="b" style="left:450.00px;top:590.20px;width:12.20px;height:12.40px;background:#070707;border-radius:2px;"></div><div class="b" style="left:465.00px;top:590.20px;width:12.20px;height:12.40px;background:#070707;border-radius:2px;"></div><div class="b" style="left:480.00px;top:590.20px;width:12.20px;height:12.40px;background:#070707;border-radius:2px;"></div><div class="b" style="left:514.50px;top:590.20px;width:44.00px;height:12.40px;background:#050505;border-radius:3px;"></div><span class="t" style="top:591.72px;font-size:11px;line-height:11px;color:#d4d4d4;left:522.00px;">Nc</span><svg class="b" style="left:540.00px;top:593.30px;" width="11" height="7"><g><path d="M1 1l4.500 4L10 1" fill="none" stroke="#c8c8c8" stroke-width="1.900"/></g></svg><div class="b" style="left:564.50px;top:590.20px;width:12.20px;height:12.40px;background:#070707;border-radius:2px;"></div><svg class="b" style="left:580.50px;top:589.80px;" width="13" height="13"><g><path d="M7.15 6.07 L7.04 5.89 L6.88 5.72 L6.68 5.59 L6.43 5.50 L6.16 5.47 L5.87 5.51 L5.58 5.61 L5.31 5.78 L5.08 6.03 L4.89 6.33 L4.78 6.68 L4.74 7.06 L4.79 7.46 L4.93 7.85 L5.16 8.22 L5.48 8.53 L5.87 8.78 L6.32 8.94 L6.81 9.00 L7.32 8.96 L7.82 8.79 L8.29 8.52 L8.70 8.13 L9.02 7.66 L9.24 7.11 L9.34 6.51 L9.31 5.89 L9.14 5.27 L8.83 4.69 L8.40 4.18 L7.85 3.77 L7.21 3.48 L6.51 3.33 L5.77 3.33 L5.04 3.49 L4.34 3.82 L3.72 4.29 L3.21 4.90 L2.83 5.63 L2.61 6.43 L2.57 7.27 L2.71 8.12 L3.04 8.94 L3.54 9.68 L4.20 10.31 L5.00 10.78 L5.89 11.08 L6.85 11.19 L7.81 11.08 L8.75 10.77 L9.62 10.25 L10.36 9.55 L10.95 8.69 L11.35 7.71 L11.52 6.66 L11.47 5.57 L11.19 4.50 L10.67 3.51 L9.94 2.64 L9.04 1.93" fill="none" stroke="#a0a0a0" stroke-width="1.300" stroke-linecap="round" stroke-linejoin="round"/></g></svg><svg class="b" style="left:592.00px;top:590.50px;" width="5" height="13" viewBox="0 0 5 13"><path d="M2.500 1v5" stroke="#a0a0a0" stroke-width="1.200"/><circle cx="2" cy="8.500" r="0.900" fill="#c8c8c8"/><circle cx="0.900" cy="10.500" r="0.800" fill="#c8c8c8"/></svg><div class="b" style="left:598.00px;top:590.20px;width:44.50px;height:12.40px;background:#050505;border-radius:3px;"></div><span class="t" style="top:591.72px;font-size:11px;line-height:11px;color:#d4d4d4;left:606.00px;">Nc</span><svg class="b" style="left:624.00px;top:593.30px;" width="11" height="7"><g><path d="M1 1l4.500 4L10 1" fill="none" stroke="#c8c8c8" stroke-width="1.900"/></g></svg><svg class="b" style="left:681.50px;top:590.00px;" width="13" height="13"><g><path d="M7.15 6.07 L7.04 5.89 L6.88 5.72 L6.68 5.59 L6.43 5.50 L6.16 5.47 L5.87 5.51 L5.58 5.61 L5.31 5.78 L5.08 6.03 L4.89 6.33 L4.78 6.68 L4.74 7.06 L4.79 7.46 L4.93 7.85 L5.16 8.22 L5.48 8.53 L5.87 8.78 L6.32 8.94 L6.81 9.00 L7.32 8.96 L7.82 8.79 L8.29 8.52 L8.70 8.13 L9.02 7.66 L9.24 7.11 L9.34 6.51 L9.31 5.89 L9.14 5.27 L8.83 4.69 L8.40 4.18 L7.85 3.77 L7.21 3.48 L6.51 3.33 L5.77 3.33 L5.04 3.49 L4.34 3.82 L3.72 4.29 L3.21 4.90 L2.83 5.63 L2.61 6.43 L2.57 7.27 L2.71 8.12 L3.04 8.94 L3.54 9.68 L4.20 10.31 L5.00 10.78 L5.89 11.08 L6.85 11.19 L7.81 11.08 L8.75 10.77 L9.62 10.25 L10.36 9.55 L10.95 8.69 L11.35 7.71 L11.52 6.66 L11.47 5.57 L11.19 4.50 L10.67 3.51 L9.94 2.64 L9.04 1.93" fill="none" stroke="#a0a0a0" stroke-width="1.300" stroke-linecap="round" stroke-linejoin="round"/></g></svg><div class="b" style="left:700.00px;top:590.20px;width:88.50px;height:12.40px;background:#050505;border-radius:3px;"></div><span class="t" style="top:591.72px;font-size:11.0px;line-height:11.0px;color:#d4d4d4;letter-spacing:0.051px;left:708.00px;">None</span><svg class="b" style="left:770.50px;top:593.30px;" width="11" height="7"><g><path d="M1 1l4.500 4L10 1" fill="none" stroke="#c8c8c8" stroke-width="1.900"/></g></svg><div class="b" style="left:818.00px;top:589.10px;width:178.00px;height:14.70px;background:#4d4d5c;"></div><div class="b" style="left:996.00px;top:589.10px;width:7.00px;height:14.70px;background:#202020;"></div><div class="b" style="left:2.00px;top:606.10px;width:807.00px;height:14.70px;background:#232323;"></div><div class="b" style="left:810.00px;top:606.10px;width:8.00px;height:14.70px;background:#1e1e1e;"></div><div class="b" style="left:6.00px;top:607.20px;width:13.00px;height:12.40px;background:#070707;border-radius:2px;"></div><div class="b" style="left:51.60px;top:607.20px;width:12.20px;height:12.40px;background:#070707;border-radius:2px;"></div><svg class="b" style="left:75.00px;top:608.00px;" width="7" height="11"><g><path d="M1 1l4 4.500L1 10" fill="none" stroke="#c8c8c8" stroke-width="1.900"/></g></svg><div class="b" style="left:87.00px;top:607.40px;width:12.00px;height:12.00px;background:#8080b0;"></div><span class="t" style="top:608.72px;font-size:11px;line-height:11px;color:#c8c8c8;left:108.00px;">25</span><svg class="b" style="left:138.20px;top:606.20px;" width="12" height="15"><g><path d="M2.500 0.600h5.200l3 3v8.400a2 2 0 0 1-2 2H2.500a2 2 0 0 1-2-2V2.600a2 2 0 0 1 2-2z" fill="#2a0604" stroke="#a86a1a" stroke-width="1.050"/><path d="M3.300 7l1.300-3.600h.8L6.700 7M3.800 5.900h2.400M8 4.600V7" stroke="#ff9426" stroke-width="1" fill="none"/><rect x="4.400" y="9.600" width="2.400" height="2.200" rx="0.500" fill="#ead8ee"/></g></svg><span class="t" style="top:608.72px;font-size:11px;line-height:11px;color:#d2d2d2;left:156.00px;">Left arm lower</span><div class="b" style="left:374.50px;top:607.20px;width:13.00px;height:12.40px;background:#070707;border-radius:2px;"></div><svg class="b" style="left:374.50px;top:607.50px;" width="13" height="11"><g><path d="M1.500 6.500C1.500 3 3.800 1 6.500 1s5 2 5 5.500z" fill="none" stroke="#d0d0d0" stroke-width="1.300"/><path d="M0 9.800h3M10 9.800h3M4.300 6.500v3.300h-1M8.700 6.500v3.300h1M6.500 1v8.800" stroke="#d0d0d0" stroke-width="1.200" fill="none"/><circle cx="4.300" cy="4.300" r="0.900" fill="#d0d0d0"/><circle cx="8.700" cy="4.300" r="0.900" fill="#d0d0d0"/></g></svg><div class="b" style="left:390.50px;top:607.20px;width:13.00px;height:12.40px;background:#070707;border-radius:2px;"></div><div class="b" style="left:405.00px;top:607.20px;width:13.00px;height:12.40px;background:#070707;border-radius:2px;"></div><svg class="b" style="left:405.50px;top:607.00px;" width="12" height="13"><g><path d="M1 11.500L11 1" stroke="#d0d0d0" stroke-width="1.500"/></g></svg><div class="b" style="left:450.00px;top:607.20px;width:12.20px;height:12.40px;background:#070707;border-radius:2px;"></div><div class="b" style="left:465.00px;top:607.20px;width:12.20px;height:12.40px;background:#070707;border-radius:2px;"></div><div class="b" style="left:480.00px;top:607.20px;width:12.20px;height:12.40px;background:#070707;border-radius:2px;"></div><div class="b" style="left:514.50px;top:607.20px;width:44.00px;height:12.40px;background:#050505;border-radius:3px;"></div><span class="t" style="top:608.72px;font-size:11px;line-height:11px;color:#d4d4d4;left:522.00px;">Nc</span><svg class="b" style="left:540.00px;top:610.30px;" width="11" height="7"><g><path d="M1 1l4.500 4L10 1" fill="none" stroke="#c8c8c8" stroke-width="1.900"/></g></svg><div class="b" style="left:564.50px;top:607.20px;width:12.20px;height:12.40px;background:#070707;border-radius:2px;"></div><svg class="b" style="left:580.50px;top:606.80px;" width="13" height="13"><g><path d="M7.15 6.07 L7.04 5.89 L6.88 5.72 L6.68 5.59 L6.43 5.50 L6.16 5.47 L5.87 5.51 L5.58 5.61 L5.31 5.78 L5.08 6.03 L4.89 6.33 L4.78 6.68 L4.74 7.06 L4.79 7.46 L4.93 7.85 L5.16 8.22 L5.48 8.53 L5.87 8.78 L6.32 8.94 L6.81 9.00 L7.32 8.96 L7.82 8.79 L8.29 8.52 L8.70 8.13 L9.02 7.66 L9.24 7.11 L9.34 6.51 L9.31 5.89 L9.14 5.27 L8.83 4.69 L8.40 4.18 L7.85 3.77 L7.21 3.48 L6.51 3.33 L5.77 3.33 L5.04 3.49 L4.34 3.82 L3.72 4.29 L3.21 4.90 L2.83 5.63 L2.61 6.43 L2.57 7.27 L2.71 8.12 L3.04 8.94 L3.54 9.68 L4.20 10.31 L5.00 10.78 L5.89 11.08 L6.85 11.19 L7.81 11.08 L8.75 10.77 L9.62 10.25 L10.36 9.55 L10.95 8.69 L11.35 7.71 L11.52 6.66 L11.47 5.57 L11.19 4.50 L10.67 3.51 L9.94 2.64 L9.04 1.93" fill="none" stroke="#a0a0a0" stroke-width="1.300" stroke-linecap="round" stroke-linejoin="round"/></g></svg><svg class="b" style="left:592.00px;top:607.50px;" width="5" height="13" viewBox="0 0 5 13"><path d="M2.500 1v5" stroke="#a0a0a0" stroke-width="1.200"/><circle cx="2" cy="8.500" r="0.900" fill="#c8c8c8"/><circle cx="0.900" cy="10.500" r="0.800" fill="#c8c8c8"/></svg><div class="b" style="left:598.00px;top:607.20px;width:44.50px;height:12.40px;background:#050505;border-radius:3px;"></div><span class="t" style="top:608.72px;font-size:11px;line-height:11px;color:#d4d4d4;left:606.00px;">Nc</span><svg class="b" style="left:624.00px;top:610.30px;" width="11" height="7"><g><path d="M1 1l4.500 4L10 1" fill="none" stroke="#c8c8c8" stroke-width="1.900"/></g></svg><svg class="b" style="left:681.50px;top:607.00px;" width="13" height="13"><g><path d="M7.15 6.07 L7.04 5.89 L6.88 5.72 L6.68 5.59 L6.43 5.50 L6.16 5.47 L5.87 5.51 L5.58 5.61 L5.31 5.78 L5.08 6.03 L4.89 6.33 L4.78 6.68 L4.74 7.06 L4.79 7.46 L4.93 7.85 L5.16 8.22 L5.48 8.53 L5.87 8.78 L6.32 8.94 L6.81 9.00 L7.32 8.96 L7.82 8.79 L8.29 8.52 L8.70 8.13 L9.02 7.66 L9.24 7.11 L9.34 6.51 L9.31 5.89 L9.14 5.27 L8.83 4.69 L8.40 4.18 L7.85 3.77 L7.21 3.48 L6.51 3.33 L5.77 3.33 L5.04 3.49 L4.34 3.82 L3.72 4.29 L3.21 4.90 L2.83 5.63 L2.61 6.43 L2.57 7.27 L2.71 8.12 L3.04 8.94 L3.54 9.68 L4.20 10.31 L5.00 10.78 L5.89 11.08 L6.85 11.19 L7.81 11.08 L8.75 10.77 L9.62 10.25 L10.36 9.55 L10.95 8.69 L11.35 7.71 L11.52 6.66 L11.47 5.57 L11.19 4.50 L10.67 3.51 L9.94 2.64 L9.04 1.93" fill="none" stroke="#a0a0a0" stroke-width="1.300" stroke-linecap="round" stroke-linejoin="round"/></g></svg><div class="b" style="left:700.00px;top:607.20px;width:88.50px;height:12.40px;background:#050505;border-radius:3px;"></div><span class="t" style="top:608.72px;font-size:11.0px;line-height:11.0px;color:#d4d4d4;letter-spacing:0.051px;left:708.00px;">None</span><svg class="b" style="left:770.50px;top:610.30px;" width="11" height="7"><g><path d="M1 1l4.500 4L10 1" fill="none" stroke="#c8c8c8" stroke-width="1.900"/></g></svg><div class="b" style="left:818.00px;top:606.10px;width:178.00px;height:14.70px;background:#4d4d5c;"></div><div class="b" style="left:996.00px;top:606.10px;width:7.00px;height:14.70px;background:#202020;"></div><div class="b" style="left:2.00px;top:623.10px;width:807.00px;height:14.70px;background:#232323;"></div><div class="b" style="left:810.00px;top:623.10px;width:8.00px;height:14.70px;background:#1e1e1e;"></div><div class="b" style="left:6.00px;top:624.20px;width:13.00px;height:12.40px;background:#070707;border-radius:2px;"></div><div class="b" style="left:51.60px;top:624.20px;width:12.20px;height:12.40px;background:#070707;border-radius:2px;"></div><svg class="b" style="left:75.00px;top:625.00px;" width="7" height="11"><g><path d="M1 1l4 4.500L1 10" fill="none" stroke="#c8c8c8" stroke-width="1.900"/></g></svg><div class="b" style="left:87.00px;top:624.40px;width:12.00px;height:12.00px;background:#8080b0;"></div><span class="t" style="top:625.72px;font-size:11px;line-height:11px;color:#c8c8c8;left:108.00px;">26</span><svg class="b" style="left:138.20px;top:623.20px;" width="12" height="15"><g><path d="M2.500 0.600h5.200l3 3v8.400a2 2 0 0 1-2 2H2.500a2 2 0 0 1-2-2V2.600a2 2 0 0 1 2-2z" fill="#2a0604" stroke="#a86a1a" stroke-width="1.050"/><path d="M3.300 7l1.300-3.600h.8L6.700 7M3.800 5.900h2.400M8 4.600V7" stroke="#ff9426" stroke-width="1" fill="none"/><rect x="4.400" y="9.600" width="2.400" height="2.200" rx="0.500" fill="#ead8ee"/></g></svg><span class="t" style="top:625.72px;font-size:11px;line-height:11px;color:#d2d2d2;left:156.00px;">Left arm upper</span><div class="b" style="left:374.50px;top:624.20px;width:13.00px;height:12.40px;background:#070707;border-radius:2px;"></div><svg class="b" style="left:374.50px;top:624.50px;" width="13" height="11"><g><path d="M1.500 6.500C1.500 3 3.800 1 6.500 1s5 2 5 5.500z" fill="none" stroke="#d0d0d0" stroke-width="1.300"/><path d="M0 9.800h3M10 9.800h3M4.300 6.500v3.300h-1M8.700 6.500v3.300h1M6.500 1v8.800" stroke="#d0d0d0" stroke-width="1.200" fill="none"/><circle cx="4.300" cy="4.300" r="0.900" fill="#d0d0d0"/><circle cx="8.700" cy="4.300" r="0.900" fill="#d0d0d0"/></g></svg><div class="b" style="left:390.50px;top:624.20px;width:13.00px;height:12.40px;background:#070707;border-radius:2px;"></div><div class="b" style="left:405.00px;top:624.20px;width:13.00px;height:12.40px;background:#070707;border-radius:2px;"></div><svg class="b" style="left:405.50px;top:624.00px;" width="12" height="13"><g><path d="M1 11.500L11 1" stroke="#d0d0d0" stroke-width="1.500"/></g></svg><div class="b" style="left:450.00px;top:624.20px;width:12.20px;height:12.40px;background:#070707;border-radius:2px;"></div><div class="b" style="left:465.00px;top:624.20px;width:12.20px;height:12.40px;background:#070707;border-radius:2px;"></div><div class="b" style="left:480.00px;top:624.20px;width:12.20px;height:12.40px;background:#070707;border-radius:2px;"></div><div class="b" style="left:514.50px;top:624.20px;width:44.00px;height:12.40px;background:#050505;border-radius:3px;"></div><span class="t" style="top:625.72px;font-size:11px;line-height:11px;color:#d4d4d4;left:522.00px;">Nc</span><svg class="b" style="left:540.00px;top:627.30px;" width="11" height="7"><g><path d="M1 1l4.500 4L10 1" fill="none" stroke="#c8c8c8" stroke-width="1.900"/></g></svg><div class="b" style="left:564.50px;top:624.20px;width:12.20px;height:12.40px;background:#070707;border-radius:2px;"></div><svg class="b" style="left:580.50px;top:623.80px;" width="13" height="13"><g><path d="M7.15 6.07 L7.04 5.89 L6.88 5.72 L6.68 5.59 L6.43 5.50 L6.16 5.47 L5.87 5.51 L5.58 5.61 L5.31 5.78 L5.08 6.03 L4.89 6.33 L4.78 6.68 L4.74 7.06 L4.79 7.46 L4.93 7.85 L5.16 8.22 L5.48 8.53 L5.87 8.78 L6.32 8.94 L6.81 9.00 L7.32 8.96 L7.82 8.79 L8.29 8.52 L8.70 8.13 L9.02 7.66 L9.24 7.11 L9.34 6.51 L9.31 5.89 L9.14 5.27 L8.83 4.69 L8.40 4.18 L7.85 3.77 L7.21 3.48 L6.51 3.33 L5.77 3.33 L5.04 3.49 L4.34 3.82 L3.72 4.29 L3.21 4.90 L2.83 5.63 L2.61 6.43 L2.57 7.27 L2.71 8.12 L3.04 8.94 L3.54 9.68 L4.20 10.31 L5.00 10.78 L5.89 11.08 L6.85 11.19 L7.81 11.08 L8.75 10.77 L9.62 10.25 L10.36 9.55 L10.95 8.69 L11.35 7.71 L11.52 6.66 L11.47 5.57 L11.19 4.50 L10.67 3.51 L9.94 2.64 L9.04 1.93" fill="none" stroke="#a0a0a0" stroke-width="1.300" stroke-linecap="round" stroke-linejoin="round"/></g></svg><svg class="b" style="left:592.00px;top:624.50px;" width="5" height="13" viewBox="0 0 5 13"><path d="M2.500 1v5" stroke="#a0a0a0" stroke-width="1.200"/><circle cx="2" cy="8.500" r="0.900" fill="#c8c8c8"/><circle cx="0.900" cy="10.500" r="0.800" fill="#c8c8c8"/></svg><div class="b" style="left:598.00px;top:624.20px;width:44.50px;height:12.40px;background:#050505;border-radius:3px;"></div><span class="t" style="top:625.72px;font-size:11px;line-height:11px;color:#d4d4d4;left:606.00px;">Nc</span><svg class="b" style="left:624.00px;top:627.30px;" width="11" height="7"><g><path d="M1 1l4.500 4L10 1" fill="none" stroke="#c8c8c8" stroke-width="1.900"/></g></svg><svg class="b" style="left:681.50px;top:624.00px;" width="13" height="13"><g><path d="M7.15 6.07 L7.04 5.89 L6.88 5.72 L6.68 5.59 L6.43 5.50 L6.16 5.47 L5.87 5.51 L5.58 5.61 L5.31 5.78 L5.08 6.03 L4.89 6.33 L4.78 6.68 L4.74 7.06 L4.79 7.46 L4.93 7.85 L5.16 8.22 L5.48 8.53 L5.87 8.78 L6.32 8.94 L6.81 9.00 L7.32 8.96 L7.82 8.79 L8.29 8.52 L8.70 8.13 L9.02 7.66 L9.24 7.11 L9.34 6.51 L9.31 5.89 L9.14 5.27 L8.83 4.69 L8.40 4.18 L7.85 3.77 L7.21 3.48 L6.51 3.33 L5.77 3.33 L5.04 3.49 L4.34 3.82 L3.72 4.29 L3.21 4.90 L2.83 5.63 L2.61 6.43 L2.57 7.27 L2.71 8.12 L3.04 8.94 L3.54 9.68 L4.20 10.31 L5.00 10.78 L5.89 11.08 L6.85 11.19 L7.81 11.08 L8.75 10.77 L9.62 10.25 L10.36 9.55 L10.95 8.69 L11.35 7.71 L11.52 6.66 L11.47 5.57 L11.19 4.50 L10.67 3.51 L9.94 2.64 L9.04 1.93" fill="none" stroke="#a0a0a0" stroke-width="1.300" stroke-linecap="round" stroke-linejoin="round"/></g></svg><div class="b" style="left:700.00px;top:624.20px;width:88.50px;height:12.40px;background:#050505;border-radius:3px;"></div><span class="t" style="top:625.72px;font-size:11.0px;line-height:11.0px;color:#d4d4d4;letter-spacing:0.051px;left:708.00px;">None</span><svg class="b" style="left:770.50px;top:627.30px;" width="11" height="7"><g><path d="M1 1l4.500 4L10 1" fill="none" stroke="#c8c8c8" stroke-width="1.900"/></g></svg><div class="b" style="left:818.00px;top:623.10px;width:178.00px;height:14.70px;background:#4d4d5c;"></div><div class="b" style="left:996.00px;top:623.10px;width:7.00px;height:14.70px;background:#202020;"></div><div class="b" style="left:2.00px;top:640.10px;width:807.00px;height:14.70px;background:#232323;"></div><div class="b" style="left:810.00px;top:640.10px;width:8.00px;height:14.70px;background:#1e1e1e;"></div><div class="b" style="left:6.00px;top:641.20px;width:13.00px;height:12.40px;background:#070707;border-radius:2px;"></div><svg class="b" style="left:6.00px;top:642.50px;" width="13" height="10"><g transform="translate(0.9 0.9) scale(0.86)"><path d="M0.500 5C2.500 1.800 4.800 0.800 6.500 0.800S10.500 1.800 12.500 5C10.500 8.200 8.200 9.200 6.500 9.200S2.500 8.200 0.500 5z" fill="#d8d8d8"/><circle cx="6.500" cy="5" r="2.600" fill="#070707"/><circle cx="6.500" cy="5" r="1.200" fill="#d8d8d8"/></g></svg><div class="b" style="left:36.40px;top:641.20px;width:11.80px;height:12.40px;background:#070707;border-radius:2px;"></div><div class="b" style="left:51.60px;top:641.20px;width:12.20px;height:12.40px;background:#070707;border-radius:2px;"></div><svg class="b" style="left:75.00px;top:642.00px;" width="7" height="11"><g><path d="M1 1l4 4.500L1 10" fill="none" stroke="#c8c8c8" stroke-width="1.900"/></g></svg><div class="b" style="left:87.00px;top:641.40px;width:12.00px;height:12.00px;background:#8080b0;"></div><span class="t" style="top:642.72px;font-size:11px;line-height:11px;color:#c8c8c8;left:108.00px;">27</span><svg class="b" style="left:138.20px;top:640.20px;" width="12" height="15"><g><path d="M2.500 0.600h5.200l3 3v8.400a2 2 0 0 1-2 2H2.500a2 2 0 0 1-2-2V2.600a2 2 0 0 1 2-2z" fill="#2a0604" stroke="#a86a1a" stroke-width="1.050"/><path d="M3.300 7l1.300-3.600h.8L6.700 7M3.800 5.900h2.400M8 4.600V7" stroke="#ff9426" stroke-width="1" fill="none"/><rect x="4.400" y="9.600" width="2.400" height="2.200" rx="0.500" fill="#ead8ee"/></g></svg><span class="t" style="top:642.72px;font-size:11px;line-height:11px;color:#d2d2d2;left:156.00px;">Head</span><div class="b" style="left:374.50px;top:641.20px;width:13.00px;height:12.40px;background:#070707;border-radius:2px;"></div><svg class="b" style="left:374.50px;top:641.50px;" width="13" height="11"><g><path d="M1.500 6.500C1.500 3 3.800 1 6.500 1s5 2 5 5.500z" fill="none" stroke="#d0d0d0" stroke-width="1.300"/><path d="M0 9.800h3M10 9.800h3M4.300 6.500v3.300h-1M8.700 6.500v3.300h1M6.500 1v8.800" stroke="#d0d0d0" stroke-width="1.200" fill="none"/><circle cx="4.300" cy="4.300" r="0.900" fill="#d0d0d0"/><circle cx="8.700" cy="4.300" r="0.900" fill="#d0d0d0"/></g></svg><div class="b" style="left:390.50px;top:641.20px;width:13.00px;height:12.40px;background:#070707;border-radius:2px;"></div><div class="b" style="left:405.00px;top:641.20px;width:13.00px;height:12.40px;background:#070707;border-radius:2px;"></div><svg class="b" style="left:405.50px;top:641.00px;" width="12" height="13"><g><path d="M1 11.500L11 1" stroke="#d0d0d0" stroke-width="1.500"/></g></svg><div class="b" style="left:450.00px;top:641.20px;width:12.20px;height:12.40px;background:#070707;border-radius:2px;"></div><div class="b" style="left:465.00px;top:641.20px;width:12.20px;height:12.40px;background:#070707;border-radius:2px;"></div><div class="b" style="left:480.00px;top:641.20px;width:12.20px;height:12.40px;background:#070707;border-radius:2px;"></div><div class="b" style="left:514.50px;top:641.20px;width:44.00px;height:12.40px;background:#050505;border-radius:3px;"></div><span class="t" style="top:642.72px;font-size:11px;line-height:11px;color:#d4d4d4;left:522.00px;">Nc</span><svg class="b" style="left:540.00px;top:644.30px;" width="11" height="7"><g><path d="M1 1l4.500 4L10 1" fill="none" stroke="#c8c8c8" stroke-width="1.900"/></g></svg><div class="b" style="left:564.50px;top:641.20px;width:12.20px;height:12.40px;background:#070707;border-radius:2px;"></div><svg class="b" style="left:580.50px;top:640.80px;" width="13" height="13"><g><path d="M7.15 6.07 L7.04 5.89 L6.88 5.72 L6.68 5.59 L6.43 5.50 L6.16 5.47 L5.87 5.51 L5.58 5.61 L5.31 5.78 L5.08 6.03 L4.89 6.33 L4.78 6.68 L4.74 7.06 L4.79 7.46 L4.93 7.85 L5.16 8.22 L5.48 8.53 L5.87 8.78 L6.32 8.94 L6.81 9.00 L7.32 8.96 L7.82 8.79 L8.29 8.52 L8.70 8.13 L9.02 7.66 L9.24 7.11 L9.34 6.51 L9.31 5.89 L9.14 5.27 L8.83 4.69 L8.40 4.18 L7.85 3.77 L7.21 3.48 L6.51 3.33 L5.77 3.33 L5.04 3.49 L4.34 3.82 L3.72 4.29 L3.21 4.90 L2.83 5.63 L2.61 6.43 L2.57 7.27 L2.71 8.12 L3.04 8.94 L3.54 9.68 L4.20 10.31 L5.00 10.78 L5.89 11.08 L6.85 11.19 L7.81 11.08 L8.75 10.77 L9.62 10.25 L10.36 9.55 L10.95 8.69 L11.35 7.71 L11.52 6.66 L11.47 5.57 L11.19 4.50 L10.67 3.51 L9.94 2.64 L9.04 1.93" fill="none" stroke="#a0a0a0" stroke-width="1.300" stroke-linecap="round" stroke-linejoin="round"/></g></svg><svg class="b" style="left:592.00px;top:641.50px;" width="5" height="13" viewBox="0 0 5 13"><path d="M2.500 1v5" stroke="#a0a0a0" stroke-width="1.200"/><circle cx="2" cy="8.500" r="0.900" fill="#c8c8c8"/><circle cx="0.900" cy="10.500" r="0.800" fill="#c8c8c8"/></svg><div class="b" style="left:598.00px;top:641.20px;width:44.50px;height:12.40px;background:#050505;border-radius:3px;"></div><span class="t" style="top:642.72px;font-size:11px;line-height:11px;color:#d4d4d4;left:606.00px;">Nc</span><svg class="b" style="left:624.00px;top:644.30px;" width="11" height="7"><g><path d="M1 1l4.500 4L10 1" fill="none" stroke="#c8c8c8" stroke-width="1.900"/></g></svg><svg class="b" style="left:681.50px;top:641.00px;" width="13" height="13"><g><path d="M7.15 6.07 L7.04 5.89 L6.88 5.72 L6.68 5.59 L6.43 5.50 L6.16 5.47 L5.87 5.51 L5.58 5.61 L5.31 5.78 L5.08 6.03 L4.89 6.33 L4.78 6.68 L4.74 7.06 L4.79 7.46 L4.93 7.85 L5.16 8.22 L5.48 8.53 L5.87 8.78 L6.32 8.94 L6.81 9.00 L7.32 8.96 L7.82 8.79 L8.29 8.52 L8.70 8.13 L9.02 7.66 L9.24 7.11 L9.34 6.51 L9.31 5.89 L9.14 5.27 L8.83 4.69 L8.40 4.18 L7.85 3.77 L7.21 3.48 L6.51 3.33 L5.77 3.33 L5.04 3.49 L4.34 3.82 L3.72 4.29 L3.21 4.90 L2.83 5.63 L2.61 6.43 L2.57 7.27 L2.71 8.12 L3.04 8.94 L3.54 9.68 L4.20 10.31 L5.00 10.78 L5.89 11.08 L6.85 11.19 L7.81 11.08 L8.75 10.77 L9.62 10.25 L10.36 9.55 L10.95 8.69 L11.35 7.71 L11.52 6.66 L11.47 5.57 L11.19 4.50 L10.67 3.51 L9.94 2.64 L9.04 1.93" fill="none" stroke="#a0a0a0" stroke-width="1.300" stroke-linecap="round" stroke-linejoin="round"/></g></svg><div class="b" style="left:700.00px;top:641.20px;width:88.50px;height:12.40px;background:#050505;border-radius:3px;"></div><span class="t" style="top:642.72px;font-size:11.0px;line-height:11.0px;color:#d4d4d4;letter-spacing:0.051px;left:708.00px;">None</span><svg class="b" style="left:770.50px;top:644.30px;" width="11" height="7"><g><path d="M1 1l4.500 4L10 1" fill="none" stroke="#c8c8c8" stroke-width="1.900"/></g></svg><div class="b" style="left:818.00px;top:640.10px;width:178.00px;height:14.70px;background:#4d4d5c;"></div><div class="b" style="left:996.00px;top:640.10px;width:7.00px;height:14.70px;background:#202020;"></div><div class="b" style="left:2.00px;top:657.10px;width:807.00px;height:14.70px;background:#232323;"></div><div class="b" style="left:810.00px;top:657.10px;width:8.00px;height:14.70px;background:#1e1e1e;"></div><div class="b" style="left:6.00px;top:658.20px;width:13.00px;height:12.40px;background:#070707;border-radius:2px;"></div><svg class="b" style="left:6.00px;top:659.50px;" width="13" height="10"><g transform="translate(0.9 0.9) scale(0.86)"><path d="M0.500 5C2.500 1.800 4.800 0.800 6.500 0.800S10.500 1.800 12.500 5C10.500 8.200 8.200 9.200 6.500 9.200S2.500 8.200 0.500 5z" fill="#d8d8d8"/><circle cx="6.500" cy="5" r="2.600" fill="#070707"/><circle cx="6.500" cy="5" r="1.200" fill="#d8d8d8"/></g></svg><div class="b" style="left:36.40px;top:658.20px;width:11.80px;height:12.40px;background:#070707;border-radius:2px;"></div><div class="b" style="left:51.60px;top:658.20px;width:12.20px;height:12.40px;background:#070707;border-radius:2px;"></div><svg class="b" style="left:75.00px;top:659.00px;" width="7" height="11"><g><path d="M1 1l4 4.500L1 10" fill="none" stroke="#c8c8c8" stroke-width="1.900"/></g></svg><div class="b" style="left:87.00px;top:658.40px;width:12.00px;height:12.00px;background:#8080b0;"></div><span class="t" style="top:659.72px;font-size:11px;line-height:11px;color:#c8c8c8;left:108.00px;">28</span><svg class="b" style="left:138.20px;top:657.20px;" width="12" height="15"><g><path d="M2.500 0.600h5.200l3 3v8.400a2 2 0 0 1-2 2H2.500a2 2 0 0 1-2-2V2.600a2 2 0 0 1 2-2z" fill="#2a0604" stroke="#a86a1a" stroke-width="1.050"/><path d="M3.300 7l1.300-3.600h.8L6.700 7M3.800 5.900h2.400M8 4.600V7" stroke="#ff9426" stroke-width="1" fill="none"/><rect x="4.400" y="9.600" width="2.400" height="2.200" rx="0.500" fill="#ead8ee"/></g></svg><span class="t" style="top:659.72px;font-size:11px;line-height:11px;color:#d2d2d2;left:156.00px;">Torso</span><div class="b" style="left:374.50px;top:658.20px;width:13.00px;height:12.40px;background:#070707;border-radius:2px;"></div><svg class="b" style="left:374.50px;top:658.50px;" width="13" height="11"><g><path d="M1.500 6.500C1.500 3 3.800 1 6.500 1s5 2 5 5.500z" fill="none" stroke="#d0d0d0" stroke-width="1.300"/><path d="M0 9.800h3M10 9.800h3M4.300 6.500v3.300h-1M8.700 6.500v3.300h1M6.500 1v8.800" stroke="#d0d0d0" stroke-width="1.200" fill="none"/><circle cx="4.300" cy="4.300" r="0.900" fill="#d0d0d0"/><circle cx="8.700" cy="4.300" r="0.900" fill="#d0d0d0"/></g></svg><div class="b" style="left:390.50px;top:658.20px;width:13.00px;height:12.40px;background:#070707;border-radius:2px;"></div><div class="b" style="left:405.00px;top:658.20px;width:13.00px;height:12.40px;background:#070707;border-radius:2px;"></div><svg class="b" style="left:405.50px;top:658.00px;" width="12" height="13"><g><path d="M1 11.500L11 1" stroke="#d0d0d0" stroke-width="1.500"/></g></svg><div class="b" style="left:450.00px;top:658.20px;width:12.20px;height:12.40px;background:#070707;border-radius:2px;"></div><div class="b" style="left:465.00px;top:658.20px;width:12.20px;height:12.40px;background:#070707;border-radius:2px;"></div><div class="b" style="left:480.00px;top:658.20px;width:12.20px;height:12.40px;background:#070707;border-radius:2px;"></div><div class="b" style="left:514.50px;top:658.20px;width:44.00px;height:12.40px;background:#050505;border-radius:3px;"></div><span class="t" style="top:659.72px;font-size:11px;line-height:11px;color:#d4d4d4;left:522.00px;">Nc</span><svg class="b" style="left:540.00px;top:661.30px;" width="11" height="7"><g><path d="M1 1l4.500 4L10 1" fill="none" stroke="#c8c8c8" stroke-width="1.900"/></g></svg><div class="b" style="left:564.50px;top:658.20px;width:12.20px;height:12.40px;background:#070707;border-radius:2px;"></div><svg class="b" style="left:580.50px;top:657.80px;" width="13" height="13"><g><path d="M7.15 6.07 L7.04 5.89 L6.88 5.72 L6.68 5.59 L6.43 5.50 L6.16 5.47 L5.87 5.51 L5.58 5.61 L5.31 5.78 L5.08 6.03 L4.89 6.33 L4.78 6.68 L4.74 7.06 L4.79 7.46 L4.93 7.85 L5.16 8.22 L5.48 8.53 L5.87 8.78 L6.32 8.94 L6.81 9.00 L7.32 8.96 L7.82 8.79 L8.29 8.52 L8.70 8.13 L9.02 7.66 L9.24 7.11 L9.34 6.51 L9.31 5.89 L9.14 5.27 L8.83 4.69 L8.40 4.18 L7.85 3.77 L7.21 3.48 L6.51 3.33 L5.77 3.33 L5.04 3.49 L4.34 3.82 L3.72 4.29 L3.21 4.90 L2.83 5.63 L2.61 6.43 L2.57 7.27 L2.71 8.12 L3.04 8.94 L3.54 9.68 L4.20 10.31 L5.00 10.78 L5.89 11.08 L6.85 11.19 L7.81 11.08 L8.75 10.77 L9.62 10.25 L10.36 9.55 L10.95 8.69 L11.35 7.71 L11.52 6.66 L11.47 5.57 L11.19 4.50 L10.67 3.51 L9.94 2.64 L9.04 1.93" fill="none" stroke="#a0a0a0" stroke-width="1.300" stroke-linecap="round" stroke-linejoin="round"/></g></svg><svg class="b" style="left:592.00px;top:658.50px;" width="5" height="13" viewBox="0 0 5 13"><path d="M2.500 1v5" stroke="#a0a0a0" stroke-width="1.200"/><circle cx="2" cy="8.500" r="0.900" fill="#c8c8c8"/><circle cx="0.900" cy="10.500" r="0.800" fill="#c8c8c8"/></svg><div class="b" style="left:598.00px;top:658.20px;width:44.50px;height:12.40px;background:#050505;border-radius:3px;"></div><span class="t" style="top:659.72px;font-size:11px;line-height:11px;color:#d4d4d4;left:606.00px;">Nc</span><svg class="b" style="left:624.00px;top:661.30px;" width="11" height="7"><g><path d="M1 1l4.500 4L10 1" fill="none" stroke="#c8c8c8" stroke-width="1.900"/></g></svg><svg class="b" style="left:681.50px;top:658.00px;" width="13" height="13"><g><path d="M7.15 6.07 L7.04 5.89 L6.88 5.72 L6.68 5.59 L6.43 5.50 L6.16 5.47 L5.87 5.51 L5.58 5.61 L5.31 5.78 L5.08 6.03 L4.89 6.33 L4.78 6.68 L4.74 7.06 L4.79 7.46 L4.93 7.85 L5.16 8.22 L5.48 8.53 L5.87 8.78 L6.32 8.94 L6.81 9.00 L7.32 8.96 L7.82 8.79 L8.29 8.52 L8.70 8.13 L9.02 7.66 L9.24 7.11 L9.34 6.51 L9.31 5.89 L9.14 5.27 L8.83 4.69 L8.40 4.18 L7.85 3.77 L7.21 3.48 L6.51 3.33 L5.77 3.33 L5.04 3.49 L4.34 3.82 L3.72 4.29 L3.21 4.90 L2.83 5.63 L2.61 6.43 L2.57 7.27 L2.71 8.12 L3.04 8.94 L3.54 9.68 L4.20 10.31 L5.00 10.78 L5.89 11.08 L6.85 11.19 L7.81 11.08 L8.75 10.77 L9.62 10.25 L10.36 9.55 L10.95 8.69 L11.35 7.71 L11.52 6.66 L11.47 5.57 L11.19 4.50 L10.67 3.51 L9.94 2.64 L9.04 1.93" fill="none" stroke="#a0a0a0" stroke-width="1.300" stroke-linecap="round" stroke-linejoin="round"/></g></svg><div class="b" style="left:700.00px;top:658.20px;width:88.50px;height:12.40px;background:#050505;border-radius:3px;"></div><span class="t" style="top:659.72px;font-size:11.0px;line-height:11.0px;color:#d4d4d4;letter-spacing:0.051px;left:708.00px;">None</span><svg class="b" style="left:770.50px;top:661.30px;" width="11" height="7"><g><path d="M1 1l4.500 4L10 1" fill="none" stroke="#c8c8c8" stroke-width="1.900"/></g></svg><div class="b" style="left:818.00px;top:657.10px;width:178.00px;height:14.70px;background:#4d4d5c;"></div><div class="b" style="left:996.00px;top:657.10px;width:7.00px;height:14.70px;background:#202020;"></div><div class="b" style="left:2.00px;top:674.10px;width:807.00px;height:14.70px;background:#232323;"></div><div class="b" style="left:810.00px;top:674.10px;width:8.00px;height:14.70px;background:#1e1e1e;"></div><div class="b" style="left:6.00px;top:675.20px;width:13.00px;height:12.40px;background:#070707;border-radius:2px;"></div><svg class="b" style="left:6.00px;top:676.50px;" width="13" height="10"><g transform="translate(0.9 0.9) scale(0.86)"><path d="M0.500 5C2.500 1.800 4.800 0.800 6.500 0.800S10.500 1.800 12.500 5C10.500 8.200 8.200 9.200 6.500 9.200S2.500 8.200 0.500 5z" fill="#d8d8d8"/><circle cx="6.500" cy="5" r="2.600" fill="#070707"/><circle cx="6.500" cy="5" r="1.200" fill="#d8d8d8"/></g></svg><div class="b" style="left:36.40px;top:675.20px;width:11.80px;height:12.40px;background:#070707;border-radius:2px;"></div><div class="b" style="left:51.60px;top:675.20px;width:12.20px;height:12.40px;background:#070707;border-radius:2px;"></div><svg class="b" style="left:75.00px;top:676.00px;" width="7" height="11"><g><path d="M1 1l4 4.500L1 10" fill="none" stroke="#c8c8c8" stroke-width="1.900"/></g></svg><div class="b" style="left:87.00px;top:675.40px;width:12.00px;height:12.00px;background:#8080b0;"></div><span class="t" style="top:676.72px;font-size:11px;line-height:11px;color:#c8c8c8;left:108.00px;">29</span><svg class="b" style="left:138.20px;top:674.20px;" width="12" height="15"><g><path d="M2.500 0.600h5.200l3 3v8.400a2 2 0 0 1-2 2H2.500a2 2 0 0 1-2-2V2.600a2 2 0 0 1 2-2z" fill="#2a0604" stroke="#a86a1a" stroke-width="1.050"/><path d="M3.300 7l1.300-3.600h.8L6.700 7M3.800 5.900h2.400M8 4.600V7" stroke="#ff9426" stroke-width="1" fill="none"/><rect x="4.400" y="9.600" width="2.400" height="2.200" rx="0.500" fill="#ead8ee"/></g></svg><span class="t" style="top:676.72px;font-size:11px;line-height:11px;color:#d2d2d2;left:156.00px;">Hips</span><div class="b" style="left:374.50px;top:675.20px;width:13.00px;height:12.40px;background:#070707;border-radius:2px;"></div><svg class="b" style="left:374.50px;top:675.50px;" width="13" height="11"><g><path d="M1.500 6.500C1.500 3 3.800 1 6.500 1s5 2 5 5.500z" fill="none" stroke="#d0d0d0" stroke-width="1.300"/><path d="M0 9.800h3M10 9.800h3M4.300 6.500v3.300h-1M8.700 6.500v3.300h1M6.500 1v8.800" stroke="#d0d0d0" stroke-width="1.200" fill="none"/><circle cx="4.300" cy="4.300" r="0.900" fill="#d0d0d0"/><circle cx="8.700" cy="4.300" r="0.900" fill="#d0d0d0"/></g></svg><div class="b" style="left:390.50px;top:675.20px;width:13.00px;height:12.40px;background:#070707;border-radius:2px;"></div><div class="b" style="left:405.00px;top:675.20px;width:13.00px;height:12.40px;background:#070707;border-radius:2px;"></div><svg class="b" style="left:405.50px;top:675.00px;" width="12" height="13"><g><path d="M1 11.500L11 1" stroke="#d0d0d0" stroke-width="1.500"/></g></svg><div class="b" style="left:450.00px;top:675.20px;width:12.20px;height:12.40px;background:#070707;border-radius:2px;"></div><div class="b" style="left:465.00px;top:675.20px;width:12.20px;height:12.40px;background:#070707;border-radius:2px;"></div><div class="b" style="left:480.00px;top:675.20px;width:12.20px;height:12.40px;background:#070707;border-radius:2px;"></div><div class="b" style="left:514.50px;top:675.20px;width:44.00px;height:12.40px;background:#050505;border-radius:3px;"></div><span class="t" style="top:676.72px;font-size:11px;line-height:11px;color:#d4d4d4;left:522.00px;">Nc</span><svg class="b" style="left:540.00px;top:678.30px;" width="11" height="7"><g><path d="M1 1l4.500 4L10 1" fill="none" stroke="#c8c8c8" stroke-width="1.900"/></g></svg><div class="b" style="left:564.50px;top:675.20px;width:12.20px;height:12.40px;background:#070707;border-radius:2px;"></div><svg class="b" style="left:580.50px;top:674.80px;" width="13" height="13"><g><path d="M7.15 6.07 L7.04 5.89 L6.88 5.72 L6.68 5.59 L6.43 5.50 L6.16 5.47 L5.87 5.51 L5.58 5.61 L5.31 5.78 L5.08 6.03 L4.89 6.33 L4.78 6.68 L4.74 7.06 L4.79 7.46 L4.93 7.85 L5.16 8.22 L5.48 8.53 L5.87 8.78 L6.32 8.94 L6.81 9.00 L7.32 8.96 L7.82 8.79 L8.29 8.52 L8.70 8.13 L9.02 7.66 L9.24 7.11 L9.34 6.51 L9.31 5.89 L9.14 5.27 L8.83 4.69 L8.40 4.18 L7.85 3.77 L7.21 3.48 L6.51 3.33 L5.77 3.33 L5.04 3.49 L4.34 3.82 L3.72 4.29 L3.21 4.90 L2.83 5.63 L2.61 6.43 L2.57 7.27 L2.71 8.12 L3.04 8.94 L3.54 9.68 L4.20 10.31 L5.00 10.78 L5.89 11.08 L6.85 11.19 L7.81 11.08 L8.75 10.77 L9.62 10.25 L10.36 9.55 L10.95 8.69 L11.35 7.71 L11.52 6.66 L11.47 5.57 L11.19 4.50 L10.67 3.51 L9.94 2.64 L9.04 1.93" fill="none" stroke="#a0a0a0" stroke-width="1.300" stroke-linecap="round" stroke-linejoin="round"/></g></svg><svg class="b" style="left:592.00px;top:675.50px;" width="5" height="13" viewBox="0 0 5 13"><path d="M2.500 1v5" stroke="#a0a0a0" stroke-width="1.200"/><circle cx="2" cy="8.500" r="0.900" fill="#c8c8c8"/><circle cx="0.900" cy="10.500" r="0.800" fill="#c8c8c8"/></svg><div class="b" style="left:598.00px;top:675.20px;width:44.50px;height:12.40px;background:#050505;border-radius:3px;"></div><span class="t" style="top:676.72px;font-size:11px;line-height:11px;color:#d4d4d4;left:606.00px;">Nc</span><svg class="b" style="left:624.00px;top:678.30px;" width="11" height="7"><g><path d="M1 1l4.500 4L10 1" fill="none" stroke="#c8c8c8" stroke-width="1.900"/></g></svg><svg class="b" style="left:681.50px;top:675.00px;" width="13" height="13"><g><path d="M7.15 6.07 L7.04 5.89 L6.88 5.72 L6.68 5.59 L6.43 5.50 L6.16 5.47 L5.87 5.51 L5.58 5.61 L5.31 5.78 L5.08 6.03 L4.89 6.33 L4.78 6.68 L4.74 7.06 L4.79 7.46 L4.93 7.85 L5.16 8.22 L5.48 8.53 L5.87 8.78 L6.32 8.94 L6.81 9.00 L7.32 8.96 L7.82 8.79 L8.29 8.52 L8.70 8.13 L9.02 7.66 L9.24 7.11 L9.34 6.51 L9.31 5.89 L9.14 5.27 L8.83 4.69 L8.40 4.18 L7.85 3.77 L7.21 3.48 L6.51 3.33 L5.77 3.33 L5.04 3.49 L4.34 3.82 L3.72 4.29 L3.21 4.90 L2.83 5.63 L2.61 6.43 L2.57 7.27 L2.71 8.12 L3.04 8.94 L3.54 9.68 L4.20 10.31 L5.00 10.78 L5.89 11.08 L6.85 11.19 L7.81 11.08 L8.75 10.77 L9.62 10.25 L10.36 9.55 L10.95 8.69 L11.35 7.71 L11.52 6.66 L11.47 5.57 L11.19 4.50 L10.67 3.51 L9.94 2.64 L9.04 1.93" fill="none" stroke="#a0a0a0" stroke-width="1.300" stroke-linecap="round" stroke-linejoin="round"/></g></svg><div class="b" style="left:700.00px;top:675.20px;width:88.50px;height:12.40px;background:#050505;border-radius:3px;"></div><span class="t" style="top:676.72px;font-size:11.0px;line-height:11.0px;color:#d4d4d4;letter-spacing:0.051px;left:708.00px;">None</span><svg class="b" style="left:770.50px;top:678.30px;" width="11" height="7"><g><path d="M1 1l4.500 4L10 1" fill="none" stroke="#c8c8c8" stroke-width="1.900"/></g></svg><div class="b" style="left:818.00px;top:674.10px;width:178.00px;height:14.70px;background:#4d4d5c;"></div><div class="b" style="left:996.00px;top:674.10px;width:7.00px;height:14.70px;background:#202020;"></div><div class="b" style="left:2.00px;top:691.10px;width:807.00px;height:14.70px;background:#232323;"></div><div class="b" style="left:810.00px;top:691.10px;width:8.00px;height:14.70px;background:#1e1e1e;"></div><div class="b" style="left:6.00px;top:692.20px;width:13.00px;height:12.40px;background:#070707;border-radius:2px;"></div><svg class="b" style="left:6.00px;top:693.50px;" width="13" height="10"><g transform="translate(0.9 0.9) scale(0.86)"><path d="M0.500 5C2.500 1.800 4.800 0.800 6.500 0.800S10.500 1.800 12.500 5C10.500 8.200 8.200 9.200 6.500 9.200S2.500 8.200 0.500 5z" fill="#d8d8d8"/><circle cx="6.500" cy="5" r="2.600" fill="#070707"/><circle cx="6.500" cy="5" r="1.200" fill="#d8d8d8"/></g></svg><div class="b" style="left:36.40px;top:692.20px;width:11.80px;height:12.40px;background:#070707;border-radius:2px;"></div><div class="b" style="left:51.60px;top:692.20px;width:12.20px;height:12.40px;background:#070707;border-radius:2px;"></div><svg class="b" style="left:75.00px;top:693.00px;" width="7" height="11"><g><path d="M1 1l4 4.500L1 10" fill="none" stroke="#c8c8c8" stroke-width="1.900"/></g></svg><div class="b" style="left:87.00px;top:692.40px;width:12.00px;height:12.00px;background:#8080b0;"></div><span class="t" style="top:693.72px;font-size:11px;line-height:11px;color:#c8c8c8;left:108.00px;">30</span><svg class="b" style="left:138.20px;top:691.20px;" width="12" height="15"><g><path d="M2.500 0.600h5.200l3 3v8.400a2 2 0 0 1-2 2H2.500a2 2 0 0 1-2-2V2.600a2 2 0 0 1 2-2z" fill="#2a0604" stroke="#a86a1a" stroke-width="1.050"/><path d="M3.300 7l1.300-3.600h.8L6.700 7M3.800 5.900h2.400M8 4.600V7" stroke="#ff9426" stroke-width="1" fill="none"/><rect x="4.400" y="9.600" width="2.400" height="2.200" rx="0.500" fill="#ead8ee"/></g></svg><span class="t" style="top:693.72px;font-size:11px;line-height:11px;color:#d2d2d2;left:156.00px;">Ear Plugs</span><div class="b" style="left:374.50px;top:692.20px;width:13.00px;height:12.40px;background:#070707;border-radius:2px;"></div><svg class="b" style="left:374.50px;top:692.50px;" width="13" height="11"><g><path d="M1.500 6.500C1.500 3 3.800 1 6.500 1s5 2 5 5.500z" fill="none" stroke="#d0d0d0" stroke-width="1.300"/><path d="M0 9.800h3M10 9.800h3M4.300 6.500v3.300h-1M8.700 6.500v3.300h1M6.500 1v8.800" stroke="#d0d0d0" stroke-width="1.200" fill="none"/><circle cx="4.300" cy="4.300" r="0.900" fill="#d0d0d0"/><circle cx="8.700" cy="4.300" r="0.900" fill="#d0d0d0"/></g></svg><div class="b" style="left:390.50px;top:692.20px;width:13.00px;height:12.40px;background:#070707;border-radius:2px;"></div><div class="b" style="left:405.00px;top:692.20px;width:13.00px;height:12.40px;background:#070707;border-radius:2px;"></div><svg class="b" style="left:405.50px;top:692.00px;" width="12" height="13"><g><path d="M1 11.500L11 1" stroke="#d0d0d0" stroke-width="1.500"/></g></svg><div class="b" style="left:450.00px;top:692.20px;width:12.20px;height:12.40px;background:#070707;border-radius:2px;"></div><div class="b" style="left:465.00px;top:692.20px;width:12.20px;height:12.40px;background:#070707;border-radius:2px;"></div><div class="b" style="left:480.00px;top:692.20px;width:12.20px;height:12.40px;background:#070707;border-radius:2px;"></div><div class="b" style="left:514.50px;top:692.20px;width:44.00px;height:12.40px;background:#050505;border-radius:3px;"></div><span class="t" style="top:693.72px;font-size:11px;line-height:11px;color:#d4d4d4;left:522.00px;">Nc</span><svg class="b" style="left:540.00px;top:695.30px;" width="11" height="7"><g><path d="M1 1l4.500 4L10 1" fill="none" stroke="#c8c8c8" stroke-width="1.900"/></g></svg><div class="b" style="left:564.50px;top:692.20px;width:12.20px;height:12.40px;background:#070707;border-radius:2px;"></div><svg class="b" style="left:580.50px;top:691.80px;" width="13" height="13"><g><path d="M7.15 6.07 L7.04 5.89 L6.88 5.72 L6.68 5.59 L6.43 5.50 L6.16 5.47 L5.87 5.51 L5.58 5.61 L5.31 5.78 L5.08 6.03 L4.89 6.33 L4.78 6.68 L4.74 7.06 L4.79 7.46 L4.93 7.85 L5.16 8.22 L5.48 8.53 L5.87 8.78 L6.32 8.94 L6.81 9.00 L7.32 8.96 L7.82 8.79 L8.29 8.52 L8.70 8.13 L9.02 7.66 L9.24 7.11 L9.34 6.51 L9.31 5.89 L9.14 5.27 L8.83 4.69 L8.40 4.18 L7.85 3.77 L7.21 3.48 L6.51 3.33 L5.77 3.33 L5.04 3.49 L4.34 3.82 L3.72 4.29 L3.21 4.90 L2.83 5.63 L2.61 6.43 L2.57 7.27 L2.71 8.12 L3.04 8.94 L3.54 9.68 L4.20 10.31 L5.00 10.78 L5.89 11.08 L6.85 11.19 L7.81 11.08 L8.75 10.77 L9.62 10.25 L10.36 9.55 L10.95 8.69 L11.35 7.71 L11.52 6.66 L11.47 5.57 L11.19 4.50 L10.67 3.51 L9.94 2.64 L9.04 1.93" fill="none" stroke="#a0a0a0" stroke-width="1.300" stroke-linecap="round" stroke-linejoin="round"/></g></svg><svg class="b" style="left:592.00px;top:692.50px;" width="5" height="13" viewBox="0 0 5 13"><path d="M2.500 1v5" stroke="#a0a0a0" stroke-width="1.200"/><circle cx="2" cy="8.500" r="0.900" fill="#c8c8c8"/><circle cx="0.900" cy="10.500" r="0.800" fill="#c8c8c8"/></svg><div class="b" style="left:598.00px;top:692.20px;width:44.50px;height:12.40px;background:#050505;border-radius:3px;"></div><span class="t" style="top:693.72px;font-size:11px;line-height:11px;color:#d4d4d4;left:606.00px;">Nc</span><svg class="b" style="left:624.00px;top:695.30px;" width="11" height="7"><g><path d="M1 1l4.500 4L10 1" fill="none" stroke="#c8c8c8" stroke-width="1.900"/></g></svg><svg class="b" style="left:681.50px;top:692.00px;" width="13" height="13"><g><path d="M7.15 6.07 L7.04 5.89 L6.88 5.72 L6.68 5.59 L6.43 5.50 L6.16 5.47 L5.87 5.51 L5.58 5.61 L5.31 5.78 L5.08 6.03 L4.89 6.33 L4.78 6.68 L4.74 7.06 L4.79 7.46 L4.93 7.85 L5.16 8.22 L5.48 8.53 L5.87 8.78 L6.32 8.94 L6.81 9.00 L7.32 8.96 L7.82 8.79 L8.29 8.52 L8.70 8.13 L9.02 7.66 L9.24 7.11 L9.34 6.51 L9.31 5.89 L9.14 5.27 L8.83 4.69 L8.40 4.18 L7.85 3.77 L7.21 3.48 L6.51 3.33 L5.77 3.33 L5.04 3.49 L4.34 3.82 L3.72 4.29 L3.21 4.90 L2.83 5.63 L2.61 6.43 L2.57 7.27 L2.71 8.12 L3.04 8.94 L3.54 9.68 L4.20 10.31 L5.00 10.78 L5.89 11.08 L6.85 11.19 L7.81 11.08 L8.75 10.77 L9.62 10.25 L10.36 9.55 L10.95 8.69 L11.35 7.71 L11.52 6.66 L11.47 5.57 L11.19 4.50 L10.67 3.51 L9.94 2.64 L9.04 1.93" fill="none" stroke="#a0a0a0" stroke-width="1.300" stroke-linecap="round" stroke-linejoin="round"/></g></svg><div class="b" style="left:700.00px;top:692.20px;width:88.50px;height:12.40px;background:#050505;border-radius:3px;"></div><span class="t" style="top:693.72px;font-size:11.0px;line-height:11.0px;color:#d4d4d4;letter-spacing:0.051px;left:708.00px;">None</span><svg class="b" style="left:770.50px;top:695.30px;" width="11" height="7"><g><path d="M1 1l4.500 4L10 1" fill="none" stroke="#c8c8c8" stroke-width="1.900"/></g></svg><div class="b" style="left:818.00px;top:691.10px;width:178.00px;height:14.70px;background:#4d4d5c;"></div><div class="b" style="left:996.00px;top:691.10px;width:7.00px;height:14.70px;background:#202020;"></div><div class="b" style="left:810.00px;top:708.10px;width:193.00px;height:10.00px;background:#1a1a1a;"></div><div class="b" style="left:810.00px;top:718.10px;width:193.00px;height:1.50px;background:#0c0c0c;"></div><div class="b" style="left:809.00px;top:146.00px;width:1.00px;height:572.00px;background:#050505;"></div><div class="b" style="left:811.00px;top:143.80px;width:191.50px;height:15.20px;background:#3b3b3b;"></div><div class="b" style="left:811.00px;top:143.80px;width:6.00px;height:15.20px;background:#2d8ceb;border-radius:3px 0 0 3px;"></div><div class="b" style="left:996.50px;top:143.80px;width:6.00px;height:15.20px;background:#2d8ceb;border-radius:0 3px 3px 0;"></div><div class="b" style="left:817.50px;top:160.00px;width:178.50px;height:2.50px;background:#12c81a;"></div><svg class="b" style="left:811.50px;top:129.30px;" width="12" height="14" viewBox="0 0 12 14"><path d="M0.500 0.500h11v5.500l-5.500 7.500-5.500-7.500z" fill="#2d8ceb"/></svg><div class="b" style="left:815.90px;top:143.00px;width:2.20px;height:574.00px;background:linear-gradient(90deg,#1f5fb4,#6a9bd4);"></div><svg class="b" style="left:1006.50px;top:145.50px;" width="12" height="16" viewBox="0 0 12 16"><path d="M0.500 0.500h11v9.500l-5.500 5-5.500-5z" fill="#8c8c8c"/></svg><svg class="b" style="left:1003.50px;top:164.50px;" width="16" height="14" viewBox="0 0 16 14"><path d="M1 8.500l6-6.500v4h8v5H7v4z" fill="#b0b0b0" transform="scale(0.900)"/><circle cx="6.500" cy="9.500" r="2.600" fill="#121212" stroke="#c0c0c0" stroke-width="1.200"/></svg><div class="b" style="left:6.00px;top:719.00px;width:14.00px;height:14.50px;background:#3a3a3a;border-radius:2px;"></div><svg class="b" style="left:7.50px;top:720.50px;" width="12" height="12" viewBox="0 0 12 12"><rect x="0.700" y="0.700" width="7" height="7" fill="none" stroke="#c8c8c8" stroke-width="1.100"/><rect x="2.700" y="2.700" width="7" height="7" fill="#3a3a3a" stroke="#c8c8c8" stroke-width="1.100"/><rect x="5.500" y="5.500" width="5.500" height="5.500" fill="#3a3a3a" stroke="#c8c8c8" stroke-width="1.100"/></svg><div class="b" style="left:25.00px;top:719.00px;width:14.00px;height:14.50px;background:#3a3a3a;border-radius:2px;"></div><svg class="b" style="left:26.50px;top:720.50px;" width="12" height="12" viewBox="0 0 12 12"><circle cx="4.500" cy="4.500" r="3.500" fill="none" stroke="#c8c8c8" stroke-width="1.200"/><rect x="5" y="5" width="6" height="6" fill="#3a3a3a" stroke="#c8c8c8" stroke-width="1.200"/></svg><span class="t" style="top:720.32px;font-size:11px;line-height:11px;color:#c8c8c8;font-weight:700;letter-spacing:-1.000px;left:45.00px;">{ }</span><svg class="b" style="left:63.00px;top:720.50px;" width="16" height="12" viewBox="0 0 16 12"><circle cx="5" cy="4" r="3" fill="#c8c8c8"/><path d="M0 11c0-3 2-4.500 5-4.500s5 1.500 5 4.500z" fill="#c8c8c8"/><path d="M10.500 3l3-1.500M12 6l1.500-4" stroke="#c8c8c8" stroke-width="1"/></svg><span class="t" style="top:720.62px;font-size:11.0px;line-height:11.0px;color:#c8c8c8;letter-spacing:0.129px;left:105.00px;">Frame Render Time</span><svg class="b" style="left:816.00px;top:722.00px;" width="12" height="8" viewBox="0 0 12 8"><path d="M0.500 6.500L4 3.500l2 1.500 1-1L10.500 6.500z" fill="#bdbdbd"/></svg><svg class="b" style="left:832.50px;top:721.50px;" width="10" height="10" viewBox="0 0 10 10"><circle cx="5" cy="5" r="3.600" fill="#121212" stroke="#e6e6e6" stroke-width="1.700"/></svg><div class="b" style="left:847.00px;top:726.00px;width:45.00px;height:1.00px;background:#3a3a3a;"></div><svg class="b" style="left:896.00px;top:720.00px;" width="18" height="11" viewBox="0 0 18 11"><path d="M0.500 10L4 6.500 6 8.500 10.500 1.500 17 10z" fill="#bdbdbd"/></svg>
<!-- sec_comp --><div class="b" style="left:0.00px;top:737.00px;width:1020.00px;height:654.00px;background:#121212;"></div><svg class="b" style="left:11.50px;top:748.00px;" width="7" height="7" viewBox="0 0 7 7"><path d="M1 1l5 5M6 1L1 6" stroke="#888" stroke-width="1.100"/></svg><div class="b" style="left:27.00px;top:746.00px;width:10.00px;height:10.00px;background:#8080b0;"></div><svg class="b" style="left:47.00px;top:744.50px;" width="10" height="12" viewBox="0 0 10 12"><rect x="1" y="5" width="8" height="6.500" rx="1" fill="#c8c8c8"/><path d="M2.800 5V3.300a2.200 2.200 0 0 1 4.400-.300" fill="none" stroke="#c8c8c8" stroke-width="1.400"/><rect x="4.200" y="7" width="1.600" height="2.500" fill="#121212"/></svg><span class="t" style="top:745.82px;font-size:11.0px;line-height:11.0px;color:#e0e0e0;letter-spacing:0.133px;left:66.50px;">Effect Controls Right arm upper</span><span class="t" style="top:767.62px;font-size:11.0px;line-height:11.0px;color:#c6c6c6;letter-spacing:-0.071px;left:6.00px;">Front Facing Character Teamplate • Right arm upper</span><div class="b" style="left:0.00px;top:783.00px;width:1020.00px;height:1.00px;background:#0c0c0c;"></div><div class="b" style="left:1024.00px;top:85.00px;width:566.00px;height:1306.00px;background:#121212;"></div><svg class="b" style="left:1034.00px;top:94.00px;" width="7" height="7" viewBox="0 0 7 7"><path d="M1 1l5 5M6 1L1 6" stroke="#888" stroke-width="1.100"/></svg><div class="b" style="left:1050.00px;top:91.50px;width:10.00px;height:10.00px;background:#8c7654;"></div><svg class="b" style="left:1070.00px;top:90.00px;" width="10" height="12" viewBox="0 0 10 12"><rect x="1" y="5" width="8" height="6.500" rx="1" fill="#c8c8c8"/><path d="M2.800 5V3.300a2.200 2.200 0 0 1 4.400-.300" fill="none" stroke="#c8c8c8" stroke-width="1.400"/><rect x="4.200" y="7" width="1.600" height="2.500" fill="#121212"/></svg><span class="t" style="top:91.62px;font-size:11.0px;line-height:11.0px;color:#e4e4e4;letter-spacing:-0.066px;left:1089.00px;">Composition Front Facing Character Teamplate</span><svg class="b" style="left:1328.00px;top:92.50px;" width="10" height="10" viewBox="0 0 10 10"><path d="M1 1.500h8M1 5h8M1 8.500h8" stroke="#aaa" stroke-width="1.300"/></svg><div class="b" style="left:1043.00px;top:117.00px;width:201.50px;height:23.50px;background:#3f3f3f;border-radius:4px;"></div><span class="t" style="top:123.52px;font-size:11.0px;line-height:11.0px;color:#dcdcdc;letter-spacing:-0.085px;left:1055.50px;">Front Facing Character Teamplate</span><div class="b" style="left:1024.50px;top:149.00px;width:564.50px;height:1215.00px;background-color:#fff;background-image:conic-gradient(#cbcbcb 25%,#fff 0 50%,#cbcbcb 0 75%,#fff 0);background-size:21.333px 21.333px;background-position:-2.170px 0.300px;"></div><svg class="b" style="left:1024px;top:149px" width="565" height="1215" viewBox="1024 149 565 1215"><path d="M1181 510 L1136 632 L1128.500 770 A26 26 0 0 0 1179.500 772 L1192 646 L1227 545 L1232 500 Z" fill="#01309b"/><path d="M1181 510 L1136 632 L1128.500 770 A26 26 0 0 0 1179.500 772 L1192 646 L1225 549" fill="none" stroke="#021a72" stroke-width="6.5" stroke-linejoin="round" stroke-linecap="round"/><path d="M1380 480 L1384 529 L1421 641 L1433 774 A28 28 0 0 0 1488.500 770 L1481 634 L1436 495 Q1430 476 1412 473 Z" fill="#01309b"/><path d="M1384 529 L1421 641 L1433 774 A28 28 0 0 0 1488.500 770 L1481 634 L1436.500 496" fill="none" stroke="#021a72" stroke-width="6.5" stroke-linejoin="round" stroke-linecap="round"/><path d="M1248 772 Q1222 782 1217 800 L1192 1025 L1196 1212 A24 24 0 0 0 1220 1236 L1234 1236 A24 24 0 0 0 1258 1212 L1258 1029 L1283 834 L1333 834 L1357 1029 L1360 1212 A24 24 0 0 0 1384 1236 L1396 1236 A24 24 0 0 0 1420 1212 L1424 1021 L1400 800 Q1394 782 1366 772 Z" fill="#01309b" stroke="#021a72" stroke-width="6.5" stroke-linejoin="round"/><path d="M1205 473 L1412 473 L1390 500 L1385 530 L1386 726 Q1383 760 1364 772 L1368 780 L1246 780 L1248 772 Q1231 760 1230 726 L1226 540 L1190 490 Q1193 476 1205 473 Z" fill="#01309b"/><path d="M1183 505 Q1186 473 1214 473 L1410 473 Q1431 475 1437 495" fill="none" stroke="#021a72" stroke-width="6.5" stroke-linecap="round"/><path d="M1226 535 L1232 726 Q1234 760 1252 773" fill="none" stroke="#021a72" stroke-width="6.5" stroke-linecap="round"/><path d="M1385 530 L1386 726 Q1384 760 1362 773" fill="none" stroke="#021a72" stroke-width="6.5" stroke-linecap="round"/><path d="M1282 826 L1283 835 L1333 835 L1334 826" fill="none" stroke="#021a72" stroke-width="6.5" stroke-linecap="round" stroke-linejoin="round"/><circle cx="1209" cy="504.500" r="33.600" fill="#1b81ea"/><circle cx="1163" cy="639.500" r="29.600" fill="#1b81ea"/><circle cx="1153.300" cy="767.200" r="23.200" fill="#b8835a"/><circle cx="1406.400" cy="505.200" r="13.400" fill="#02c502"/><circle cx="1461" cy="769.300" r="13.400" fill="#02c502"/><path d="M1139.8 804 H1164.3 Q1175.5 807.8 1179.3 819 V850.6 Q1175.5 861.9 1164.3 865.6 H1139.8 Q1128.5 861.9 1124.8 850.6 V819 Q1128.5 807.8 1139.8 804 Z" fill="#f0b030" stroke="#e8761c" stroke-width="8" stroke-linejoin="round"/><path d="M1451 807 H1476 Q1487.2 810.8 1491 822 V854.2 Q1487.2 865.5 1476 869.2 H1451 Q1439.8 865.5 1436 854.2 V822 Q1439.8 810.8 1451 807 Z" fill="#f0b030" stroke="#e8761c" stroke-width="8" stroke-linejoin="round"/><path d="M1204 1250 H1250 Q1254.800 1250 1254.800 1255 V1281 Q1254.800 1285.700 1250 1285.700 H1202 Q1191.300 1285.700 1191.300 1276 V1264 Q1196 1252 1204 1250 Z" fill="#f0b030" stroke="#e8761c" stroke-width="7.500" stroke-linejoin="round"/><path d="M1364 1247.700 H1406 Q1418 1250 1424.400 1261 V1274 Q1424.400 1284 1412 1284 H1364 Q1360.300 1284 1360.300 1280 V1251.500 Q1360.300 1247.700 1364 1247.700 Z" fill="#f0b030" stroke="#e8761c" stroke-width="7.500" stroke-linejoin="round"/><path d="M1265.500 352 L1357 352 L1357 412 C1357 426 1351 446 1311 449 C1271 446 1265.500 426 1265.500 412 Z" fill="#01309b" stroke="#021a72" stroke-width="7" stroke-linejoin="round"/><ellipse cx="1258" cy="378.500" rx="6" ry="6.500" fill="#f4b63a" stroke="#f0a020" stroke-width="1"/><path d="M1255 379h6" stroke="#e8761c" stroke-width="1.500"/><ellipse cx="1364.500" cy="378.500" rx="6" ry="6.500" fill="#f4b63a" stroke="#f0a020" stroke-width="1"/><path d="M1361.500 379h6" stroke="#e8761c" stroke-width="1.500"/><path d="M1273 364 L1349.500 364 L1349.500 383 Q1349 392.500 1340 392.500 L1328 392.500 Q1322 392.500 1319 386 L1316 380.500 Q1311 374 1306 380.500 L1303 386 Q1300 392.500 1294 392.500 L1282 392.500 Q1273.500 392.500 1273 383 Z" fill="#ffffff" stroke="#089fe0" stroke-width="5.500" stroke-linejoin="round"/><rect x="1262" y="363.500" width="9" height="14.500" fill="#0a0a0a"/><rect x="1351.500" y="363.500" width="9" height="14.500" fill="#0a0a0a"/><path d="M1258.500 346 A52.500 57.500 0 0 1 1363.500 346 Z" fill="#e8761c" stroke="#f2a826" stroke-width="5" stroke-linejoin="round"/><path d="M1292 293 L1299.500 345 M1332.500 293 L1325.500 345" stroke="#f2a826" stroke-width="5.500" fill="none"/><rect x="1250" y="344.500" width="122" height="12" rx="1.500" fill="#f2a826"/><path d="M1257 350.300 H1365" stroke="#e8761c" stroke-width="2"/><rect x="1108.5" y="475.3" width="6" height="6" fill="#8282a8"/><rect x="1178" y="475.3" width="6" height="6" fill="#8282a8"/><rect x="1248" y="475.3" width="6" height="6" fill="#8282a8"/><rect x="1108.5" y="582.5" width="6" height="6" fill="#8282a8"/><rect x="1248" y="582.5" width="6" height="6" fill="#8282a8"/><rect x="1108.5" y="690" width="6" height="6" fill="#8282a8"/><rect x="1178" y="690" width="6" height="6" fill="#8282a8"/><rect x="1248" y="690" width="6" height="6" fill="#8282a8"/><rect x="1103" y="612.3" width="6" height="6" fill="#8282a8"/><rect x="1157" y="612.3" width="6" height="6" fill="#8282a8"/><rect x="1211.5" y="612.3" width="6" height="6" fill="#8282a8"/><rect x="1103" y="713" width="6" height="6" fill="#8282a8"/><rect x="1211.5" y="713" width="6" height="6" fill="#8282a8"/><rect x="1103" y="813" width="6" height="6" fill="#8282a8"/><rect x="1157" y="813" width="6" height="6" fill="#8282a8"/><rect x="1211.5" y="813" width="6" height="6" fill="#8282a8"/><g stroke="#93a2cc" stroke-width="1.500" fill="none"><circle cx="1180" cy="584.7" r="3.400"/><path d="M1180 576.7v4.500M1180 592.7v-4.500M1172 584.7h4.500M1188 584.7h-4.500"/></g><circle cx="1180" cy="584.7" r="1.200" fill="#8e9cc8"/><g stroke="#93a2cc" stroke-width="1.500" fill="none"><circle cx="1159.5" cy="714.6" r="3.400"/><path d="M1159.5 706.6v4.500M1159.5 722.6v-4.500M1151.5 714.6h4.500M1167.5 714.6h-4.500"/></g><circle cx="1159.5" cy="714.6" r="1.200" fill="#8e9cc8"/></svg><div class="b" style="left:1033.50px;top:1370.40px;width:78.50px;height:17.00px;background:#050505;border-radius:3px;"></div><span class="t" style="top:1373.26px;font-size:11.5px;line-height:11.5px;color:#c8c8c8;letter-spacing:-0.355px;left:1041.50px;">100%</span><svg class="b" style="left:1092.00px;top:1375.70px;" width="11" height="7" viewBox="0 0 11 7"><path d="M1 1l4.500 4L10 1" fill="none" stroke="#d0d0d0" stroke-width="1.700"/></svg><div class="b" style="left:1121.00px;top:1371.40px;width:1.00px;height:15.00px;background:#060606;"></div><div class="b" style="left:1132.00px;top:1370.40px;width:87.50px;height:17.00px;background:#050505;border-radius:3px;"></div><span class="t" style="top:1373.26px;font-size:11.5px;line-height:11.5px;color:#c8c8c8;letter-spacing:-0.133px;left:1140.00px;">Full</span><svg class="b" style="left:1200.00px;top:1375.70px;" width="11" height="7" viewBox="0 0 11 7"><path d="M1 1l4.500 4L10 1" fill="none" stroke="#d0d0d0" stroke-width="1.700"/></svg><div class="b" style="left:1229.00px;top:1371.40px;width:1.00px;height:15.00px;background:#060606;"></div><svg class="b" style="left:1241.00px;top:1371.90px;" width="16" height="14" viewBox="0 0 16 14"><rect x="0.800" y="0.800" width="12.500" height="10.500" fill="none" stroke="#c4c4c4" stroke-width="1.300"/><path d="M8 2.500L5 6.500h2.500L6 9.800l4-4.300H7.500z" fill="#c4c4c4"/><path d="M11 12l2 2 2-2z" fill="#c4c4c4"/></svg><div class="b" style="left:1263.00px;top:1369.90px;width:19.50px;height:18.50px;background:#4a4a4a;border-radius:3px;"></div><svg class="b" style="left:1266.00px;top:1373.40px;" width="14" height="12" viewBox="0 0 14 12"><rect x="0.700" y="0.700" width="12.600" height="10.600" rx="1" fill="none" stroke="#c4c4c4" stroke-width="1.200"/><path d="M1 1h3v3H1zM7 1h3v3H7zM4 4h3v3H4zM10 4h3v3h-3zM1 7h3v3H1zM7 7h3v3H7z" fill="#9a9a9a"/></svg><div class="b" style="left:1287.00px;top:1369.90px;width:19.50px;height:18.50px;background:#4a4a4a;border-radius:3px;"></div><svg class="b" style="left:1289.50px;top:1372.90px;" width="15" height="13" viewBox="0 0 15 13"><path d="M2 10.500L4 3l9-1.500-1 9z" fill="none" stroke="#c4c4c4" stroke-width="1.300"/><rect x="0.500" y="9" width="3" height="3" fill="#c4c4c4"/><rect x="2.500" y="1.500" width="3" height="3" fill="#c4c4c4"/><rect x="11.500" y="0" width="3" height="3" fill="#c4c4c4"/><rect x="10.500" y="9" width="3" height="3" fill="#c4c4c4"/></svg><svg class="b" style="left:1313.00px;top:1372.90px;" width="15" height="12" viewBox="0 0 15 12"><rect x="0.700" y="0.700" width="13.600" height="10.600" fill="none" stroke="#c4c4c4" stroke-width="1.300"/><rect x="3.500" y="3.500" width="8" height="5" fill="#c4c4c4"/></svg><svg class="b" style="left:1336.00px;top:1370.90px;" width="16" height="17" viewBox="0 0 16 17"><rect x="1.500" y="3" width="12" height="8" fill="none" stroke="#c4c4c4" stroke-width="1.300"/><path d="M7.500 0.500v5M0 7h4M11 7h4M7.500 9v4" stroke="#c4c4c4" stroke-width="1.200"/><path d="M10 14l2 2 2-2z" fill="#c4c4c4"/></svg><div class="b" style="left:1363.00px;top:1371.40px;width:1.00px;height:15.00px;background:#060606;"></div><svg class="b" style="left:1374.00px;top:1369.90px;" width="18" height="18" viewBox="0 0 18 18"><circle cx="7" cy="5.500" r="3.300" fill="#e02020"/><circle cx="4.500" cy="10" r="3.300" fill="#18b030"/><circle cx="9.500" cy="10" r="3.300" fill="#2060e0"/><path d="M12.500 1v4M10.500 3h4" stroke="#c4c4c4" stroke-width="1"/><path d="M9 15l2 2 2-2z" fill="#c4c4c4"/></svg><svg class="b" style="left:1399.50px;top:1372.40px;" width="14" height="14" viewBox="0 0 14 14"><circle cx="7" cy="7" r="5.600" fill="none" stroke="#c4c4c4" stroke-width="1.600"/><path d="M7 1.500l2.500 4.500M12.500 7l-5 .5M9.800 11.800L7 7.500M4.200 11.800L6 6.500M1.500 7l4.500-2M4.200 2.200l3.300 3.300" stroke="#c4c4c4" stroke-width="1.300"/></svg><span class="t" style="top:1373.26px;font-size:11.5px;line-height:11.5px;color:#3f8fe6;letter-spacing:-0.426px;left:1422.50px;">+0.0</span><div class="b" style="left:1463.00px;top:1371.40px;width:1.00px;height:15.00px;background:#060606;"></div><svg class="b" style="left:1474.00px;top:1372.40px;" width="17" height="14" viewBox="0 0 17 14"><path d="M1 3.500h3.500l1.500-2h5l1.500 2H16v9.500H1z" fill="#c4c4c4"/><circle cx="8.500" cy="8" r="3" fill="#121212"/><circle cx="8.500" cy="8" r="1.600" fill="#c4c4c4"/></svg><svg class="b" style="left:1497.00px;top:1370.40px;" width="18" height="16" viewBox="0 0 18 16"><circle cx="11" cy="4.500" r="3" fill="none" stroke="#6e6e6e" stroke-width="1.300"/><path d="M1 10.500c2.500-3.500 8.500-3.500 11 0-2.500 3.500-8.500 3.500-11 0z" fill="none" stroke="#6e6e6e" stroke-width="1.300"/><circle cx="6.500" cy="10.500" r="1.800" fill="#6e6e6e"/><path d="M13 8l3-2" stroke="#6e6e6e" stroke-width="1.200"/></svg><div class="b" style="left:1525.00px;top:1371.40px;width:1.00px;height:15.00px;background:#060606;"></div><div class="b" style="left:1536.00px;top:1370.40px;width:54.00px;height:17.00px;background:#050505;border-radius:3px;border-radius:3px 0 0 3px;"></div><span class="t" style="top:1373.26px;font-size:11.5px;line-height:11.5px;color:#c8c8c8;letter-spacing:-0.441px;left:1544.00px;clip-path:inset(0 0 0 0);">0:00:00:0</span>
<!-- sec_motion --><div class="b" style="left:1593.00px;top:85.00px;width:653.00px;height:492.00px;background:#121212;"></div><span class="t" style="top:91.62px;font-size:11.0px;line-height:11.0px;color:#bcbcbc;letter-spacing:-0.045px;left:1606.00px;">Animation Composer 3</span><span class="t" style="top:91.62px;font-size:11.0px;line-height:11.0px;color:#ececec;letter-spacing:0.100px;left:1760.00px;">Motion 4</span><svg class="b" style="left:1813.50px;top:92.50px;" width="10" height="10" viewBox="0 0 10 10"><path d="M1 1.500h8M1 5h8M1 8.500h8" stroke="#aaa" stroke-width="1.300"/></svg><div class="b" style="left:1758.00px;top:106.50px;width:65.00px;height:1.50px;background:#e0e0e0;"></div><div class="b" style="left:1602.50px;top:110.50px;width:553.50px;height:50.50px;background:#181818;border-radius:7px;border:1px solid #222222;box-sizing:border-box;"></div><div class="b" style="left:1603.50px;top:111.50px;width:109.00px;height:48.50px;background:#0b0b0b;border-radius:6px 0 0 6px;"></div><div class="b" style="left:1713.00px;top:113.00px;width:1.00px;height:46.00px;background:#202020;"></div><div class="b" style="left:1824.50px;top:113.00px;width:1.00px;height:46.00px;background:#202020;"></div><div class="b" style="left:1934.80px;top:113.00px;width:1.00px;height:46.00px;background:#202020;"></div><div class="b" style="left:2045.00px;top:113.00px;width:1.00px;height:46.00px;background:#202020;"></div><div class="b" style="left:2163.50px;top:110.50px;width:74.00px;height:50.50px;background:#181818;border-radius:7px;border:1px solid #222222;box-sizing:border-box;"></div><svg class="b" style="left:1645.00px;top:123.00px;" width="26" height="24" viewBox="0 0 26 24"><path d="M2.500 10.500L12.500 2l10 8.500M5 9v11.500h15V9" fill="none" stroke="#2f7fdc" stroke-width="1.700" stroke-linejoin="round" stroke-linecap="round"/></svg><svg class="b" style="left:1758.00px;top:123.00px;" width="20" height="24" viewBox="0 0 20 24"><path d="M10 1.500C7 6 2.500 10 2.500 15a7.500 7.500 0 0 0 15 0C17.500 10 13 6 10 1.500z" fill="none" stroke="#bdbdbd" stroke-width="1.400"/><path d="M3.500 12h13M2.800 15h14.400M4 18h12" stroke="#bdbdbd" stroke-width="1.200"/></svg><svg class="b" style="left:1867.00px;top:123.00px;" width="26" height="22" viewBox="0 0 26 22"><path d="M4.500 20C4.500 9 8 3.500 13 3.500S21.500 9 21.500 20" fill="none" stroke="#bdbdbd" stroke-width="1.500"/><path d="M3 3.500h20" stroke="#bdbdbd" stroke-width="1.200"/><circle cx="3" cy="3.500" r="1.600" fill="#181818" stroke="#bdbdbd" stroke-width="1.100"/><circle cx="23" cy="3.500" r="1.600" fill="#181818" stroke="#bdbdbd" stroke-width="1.100"/><rect x="11" y="1.500" width="4" height="4" fill="#bdbdbd"/></svg><svg class="b" style="left:1979.00px;top:125.00px;" width="22" height="22" viewBox="0 0 22 22"><g fill="none" stroke="#bdbdbd" stroke-width="1.400"><rect x="1" y="1" width="8" height="8" rx="1.200"/><rect x="12.500" y="1" width="8" height="8" rx="1.200"/><rect x="1" y="12.500" width="8" height="8" rx="1.200"/><rect x="12.500" y="12.500" width="8" height="8" rx="1.200"/></g></svg><svg class="b" style="left:2089.00px;top:124.00px;" width="24" height="24" viewBox="0 0 24 24"><g fill="none" stroke="#bdbdbd" stroke-width="1.400" stroke-linecap="round"><path d="M9.500 4l2.500-2.500L14.500 4M9.500 20l2.500 2.500 2.500-2.500M4 9.500L1.500 12 4 14.500M20 9.500l2.500 2.500-2.500 2.500"/></g><rect x="10.200" y="10.200" width="3.600" height="3.600" rx="0.800" fill="#bdbdbd"/></svg><svg class="b" style="left:2188.00px;top:124.00px;" width="26" height="24" viewBox="0 0 26 24"><circle cx="15" cy="9.500" r="7.500" fill="none" stroke="#bdbdbd" stroke-width="1.500"/><path d="M9.500 15L3 21.500" stroke="#bdbdbd" stroke-width="1.500"/></svg><div class="b" style="left:1601.50px;top:169.00px;width:300.50px;height:167.00px;background:#1b1b1b;border-radius:8px;border:1px solid #242424;box-sizing:border-box;"></div><div class="b" style="left:1746.00px;top:171.00px;width:13.50px;height:163.00px;background:#151515;"></div><div class="b" style="left:1603.00px;top:251.50px;width:298.00px;height:3.20px;background:#a57512;border-radius:1.5px;"></div><div class="b" style="left:1859.50px;top:295.00px;width:34.00px;height:34.00px;background:#1b1b1b;border-radius:17px;border:1px solid #232323;box-sizing:border-box;"></div><svg class="b" style="left:1865.50px;top:301.00px;" width="22" height="22" viewBox="0 0 22 22"><g fill="none" stroke="#bdbdbd" stroke-width="1.300" stroke-linecap="round"><path d="M7.500 6.500a4.500 4.500 0 0 0 0 6M14.500 6.500a4.500 4.500 0 0 1 0 6M4.800 4a8 8 0 0 0 0 11M17.200 4a8 8 0 0 1 0 11M11 11v8.500"/><circle cx="11" cy="9.500" r="1.500"/></g></svg><div class="b" style="left:1909.00px;top:169.00px;width:168.50px;height:167.00px;background:#1b1b1b;border-radius:8px;border:1px solid #242424;box-sizing:border-box;"></div><div class="b" style="left:1931.50px;top:191.50px;width:13.00px;height:13.00px;background:#2b2740;border-radius:6.5px;border:1.700px solid #c4c4c4;box-sizing:border-box;"></div><div class="b" style="left:1986.90px;top:191.50px;width:13.00px;height:13.00px;background:#2b2740;border-radius:6.5px;border:1.700px solid #c4c4c4;box-sizing:border-box;"></div><div class="b" style="left:2042.30px;top:191.50px;width:13.00px;height:13.00px;background:#2b2740;border-radius:6.5px;border:1.700px solid #c4c4c4;box-sizing:border-box;"></div><div class="b" style="left:1931.50px;top:246.70px;width:13.00px;height:13.00px;background:#2b2740;border-radius:6.5px;border:1.700px solid #c4c4c4;box-sizing:border-box;"></div><div class="b" style="left:1986.90px;top:246.70px;width:13.00px;height:13.00px;background:#2b2740;border-radius:6.5px;border:1.700px solid #c4c4c4;box-sizing:border-box;"></div><div class="b" style="left:2042.30px;top:246.70px;width:13.00px;height:13.00px;background:#2b2740;border-radius:6.5px;border:1.700px solid #c4c4c4;box-sizing:border-box;"></div><div class="b" style="left:1931.50px;top:302.10px;width:13.00px;height:13.00px;background:#2b2740;border-radius:6.5px;border:1.700px solid #c4c4c4;box-sizing:border-box;"></div><div class="b" style="left:1986.90px;top:302.10px;width:13.00px;height:13.00px;background:#2b2740;border-radius:6.5px;border:1.700px solid #c4c4c4;box-sizing:border-box;"></div><div class="b" style="left:2042.30px;top:302.10px;width:13.00px;height:13.00px;background:#2b2740;border-radius:6.5px;border:1.700px solid #c4c4c4;box-sizing:border-box;"></div><div class="b" style="left:2084.50px;top:169.50px;width:149.50px;height:71.50px;background:#181818;border-radius:8px;border:1px solid #222;box-sizing:border-box;"></div><span class="t" style="top:212.32px;font-size:11.0px;line-height:11.0px;color:#d6d6d6;font-weight:700;letter-spacing:0.305px;left:2159.50px;transform:translateX(-50%);margin-left:0.15px;">Null</span><div class="b" style="left:2084.50px;top:248.50px;width:149.50px;height:71.50px;background:#181818;border-radius:8px;border:1px solid #222;box-sizing:border-box;"></div><span class="t" style="top:291.32px;font-size:11.0px;line-height:11.0px;color:#d6d6d6;font-weight:700;letter-spacing:0.328px;left:2159.50px;transform:translateX(-50%);margin-left:0.16px;">Delay</span><div class="b" style="left:2084.50px;top:327.50px;width:149.50px;height:71.50px;background:#181818;border-radius:8px;border:1px solid #222;box-sizing:border-box;"></div><span class="t" style="top:370.32px;font-size:11.0px;line-height:11.0px;color:#d6d6d6;font-weight:700;letter-spacing:0.143px;left:2159.50px;transform:translateX(-50%);margin-left:0.07px;">Shapes</span><div class="b" style="left:2084.50px;top:407.00px;width:149.50px;height:71.50px;background:#181818;border-radius:8px;border:1px solid #222;box-sizing:border-box;"></div><span class="t" style="top:449.82px;font-size:11.0px;line-height:11.0px;color:#d6d6d6;font-weight:700;letter-spacing:0.725px;left:2159.50px;transform:translateX(-50%);margin-left:0.36px;">Texture</span><svg class="b" style="left:2149.00px;top:182.00px;" width="22" height="22" viewBox="0 0 22 22"><g fill="none" stroke="#bdbdbd" stroke-width="1.400" stroke-linecap="round"><path d="M1.500 6V3a1.500 1.500 0 0 1 1.500-1.500h3M15 1.500h3A1.500 1.500 0 0 1 19.500 3v3M19.500 15v3a1.500 1.500 0 0 1-1.500 1.500h-3M6 19.500H3A1.500 1.500 0 0 1 1.500 18v-3"/></g></svg><svg class="b" style="left:2149.00px;top:261.50px;" width="22" height="22" viewBox="0 0 22 22"><g fill="none" stroke="#bdbdbd" stroke-width="1.400"><path d="M5.500 3v15M15.500 3v15M3 5.500h15M3 15.500h15"/><rect x="1" y="1" width="4.500" height="4.500" rx="1.200" fill="#181818"/><rect x="15.500" y="1" width="4.500" height="4.500" rx="1.200" fill="#181818"/><rect x="1" y="15.500" width="4.500" height="4.500" rx="1.200" fill="#181818"/><rect x="15.500" y="15.500" width="4.500" height="4.500" rx="1.200" fill="#181818"/></g></svg><svg class="b" style="left:2149.00px;top:341.00px;" width="22" height="22" viewBox="0 0 22 22"><g fill="none" stroke="#bdbdbd" stroke-width="1.400"><rect x="1.500" y="1.500" width="9" height="9" rx="1.500"/><path d="M8 9l3.500 5.500 3.500-5.500"/><circle cx="15.500" cy="14.500" r="4.500" fill="#181818"/></g></svg><svg class="b" style="left:2149.00px;top:420.50px;" width="22" height="22" viewBox="0 0 22 22"><g fill="none" stroke="#bdbdbd" stroke-width="1.200"><rect x="1.500" y="1.500" width="19" height="19" rx="2.500" stroke-width="1.500"/><path d="M1.500 11L11 1.500 20.500 11 11 20.500zM1.500 1.500l19 19M20.500 1.500l-19 19M6 1.500L1.500 6M16 1.500L20.500 6M1.500 16L6 20.500M20.500 16L16 20.500"/></g></svg><div class="b" style="left:2235.00px;top:170.00px;width:4.00px;height:152.00px;background:#3e3e3e;border-radius:2px;"></div><div class="b" style="left:1601.50px;top:345.00px;width:475.50px;height:81.50px;background:#181818;border-radius:8px;border:1px solid #222;box-sizing:border-box;"></div><div class="b" style="left:1616.00px;top:361.00px;width:69.00px;height:26.00px;background:#0a0a0a;border-radius:6px;"></div><div class="b" style="left:1657.50px;top:361.00px;width:1.00px;height:26.00px;background:#1e1e1e;"></div><span class="t" style="top:368.32px;font-size:11px;line-height:11px;color:#d6d6d6;font-weight:700;left:1635.00px;transform:translateX(-50%);">0</span><svg class="b" style="left:1667.00px;top:367.50px;" width="8" height="13" viewBox="0 0 8 13"><path d="M2 1l3.500 5.500L2 12" fill="none" stroke="#999" stroke-width="1.200"/></svg><div class="b" style="left:1764.50px;top:360.00px;width:149.50px;height:29.00px;background:#4b4b4b;border-radius:7px;"></div><svg class="b" style="left:1788.00px;top:366.50px;" width="110" height="16" viewBox="0 0 110 16"><g fill="none" stroke="#8a8a8a" stroke-width="1.300"><circle cx="8" cy="8" r="6"/><path d="M51 2l6 6-6 6-6-6z"/><rect x="88.500" y="2.500" width="11.500" height="11.500" rx="1"/></g></svg><div class="b" style="left:1993.00px;top:361.00px;width:69.00px;height:26.00px;background:#0a0a0a;border-radius:6px;"></div><div class="b" style="left:2021.00px;top:361.00px;width:1.00px;height:26.00px;background:#1e1e1e;"></div><span class="t" style="top:368.32px;font-size:11px;line-height:11px;color:#d6d6d6;font-weight:700;left:2041.00px;transform:translateX(-50%);">0</span><svg class="b" style="left:2003.00px;top:367.50px;" width="8" height="13" viewBox="0 0 8 13"><path d="M6 1L2.500 6.500 6 12" fill="none" stroke="#999" stroke-width="1.200"/></svg><div class="b" style="left:1616.00px;top:407.00px;width:227.00px;height:1.50px;background:#2c2c2c;"></div><div class="b" style="left:1870.00px;top:407.00px;width:192.00px;height:1.50px;background:#2c2c2c;"></div><div class="b" style="left:1811.00px;top:397.50px;width:11.00px;height:20.00px;border-radius:5.5px;border:2px solid #c8c8c8;box-sizing:border-box;"></div><div class="b" style="left:1834.00px;top:397.50px;width:11.00px;height:20.00px;border-radius:5.5px;border:2px solid #c8c8c8;box-sizing:border-box;"></div><div class="b" style="left:1857.00px;top:397.50px;width:11.00px;height:20.00px;border-radius:5.5px;border:2px solid #c8c8c8;box-sizing:border-box;"></div><div class="b" style="left:1601.50px;top:434.00px;width:475.50px;height:47.50px;background:#484848;border-radius:7px;"></div><div class="b" style="left:1760.00px;top:435.00px;width:1.00px;height:45.50px;background:#3c3c3c;"></div><div class="b" style="left:1918.00px;top:435.00px;width:1.00px;height:45.50px;background:#3c3c3c;"></div><svg class="b" style="left:1670.00px;top:447.50px;" width="22" height="22" viewBox="0 0 22 22"><g fill="none" stroke="#a4a4a4" stroke-width="1.300"><rect x="1" y="1" width="19.500" height="19.500" rx="1"/><rect x="1" y="6.500" width="14" height="14"/><rect x="1" y="12" width="8.500" height="8.500"/></g></svg><svg class="b" style="left:1828.00px;top:447.00px;" width="24" height="22" viewBox="0 0 24 22"><g fill="none" stroke="#a4a4a4" stroke-width="1.300"><path d="M11.500 1v20"/><rect x="3" y="3.500" width="17" height="3.500" rx="1.700"/><rect x="1" y="9" width="13" height="3.500" rx="1.700"/><rect x="6" y="14.500" width="15" height="3.500" rx="1.700"/></g></svg><svg class="b" style="left:1986.50px;top:446.50px;" width="22" height="22" viewBox="0 0 22 22"><g fill="none" stroke="#a4a4a4" stroke-width="1.300" stroke-linecap="round"><path d="M11 1.500v18M7.500 6h7M1.500 11c0 5 4 8.500 9.500 8.500s9.500-3.500 9.500-8.500"/></g></svg><div class="b" style="left:1601.50px;top:489.00px;width:208.50px;height:35.50px;background:#484848;border-radius:7px;"></div><div class="b" style="left:1815.00px;top:489.00px;width:208.50px;height:35.50px;background:#484848;border-radius:7px;"></div><div class="b" style="left:1920.00px;top:489.00px;width:103.50px;height:35.50px;background:#2e2e2e;border-radius:0 7px 7px 0;"></div><div class="b" style="left:2029.00px;top:489.00px;width:209.50px;height:35.50px;background:#484848;border-radius:7px;"></div><svg class="b" style="left:1694.50px;top:497.00px;" width="22" height="18" viewBox="0 0 22 18"><g fill="none" stroke="#a4a4a4" stroke-width="1.200" stroke-linejoin="round"><path d="M1 8.500L9 2l11.500 5.500-8 8.500zM12.500 16L9 2M12.500 16l-6-12M12.500 16L3.500 6.500M12.500 16l3.500-10.500"/></g></svg><svg class="b" style="left:1857.00px;top:495.50px;" width="20" height="22" viewBox="0 0 20 22"><g fill="none" stroke="#a4a4a4" stroke-width="1.300" stroke-linecap="round" stroke-linejoin="round"><path d="M7 13V6.500a1.500 1.500 0 0 1 3 0V11l5.500 1c1.500.3 2 1.200 1.800 2.500l-.8 5H9.500L5.500 15c-.8-1.200.5-2.500 1.500-2z"/><path d="M4.500 4.500a4.500 4.500 0 0 1 1.500-3M12.500 4.500a4.500 4.500 0 0 0-1.500-3M2 9l1-1.500M1.800 6.500l1.200 1"/></g></svg><svg class="b" style="left:1961.00px;top:495.50px;" width="22" height="22" viewBox="0 0 22 22"><g fill="none" stroke="#5a5a5a" stroke-width="1.300" stroke-linejoin="round"><circle cx="11" cy="2.500" r="1.500"/><path d="M4 13C4 8 7 5 11 5s7 3 7 8zM2 13h18v2.500H2zM5 17.500h12l1.500 2.500h-15z"/></g></svg><svg class="b" style="left:2122.00px;top:495.00px;" width="24" height="22" viewBox="0 0 24 22"><g fill="none" stroke="#a4a4a4" stroke-width="1.300" stroke-linecap="round"><path d="M2.500 20c0-8 2.500-11.500 5.500-11.500s3.500 4.500 6.500 4.500 5-4 5-11"/><circle cx="14.500" cy="13" r="1.600"/></g></svg><div class="b" style="left:1602.00px;top:533.00px;width:35.00px;height:35.00px;background:#161616;border-radius:17.5px;border:1px solid #202020;box-sizing:border-box;"></div><svg class="b" style="left:1608.50px;top:540.50px;" width="22" height="20" viewBox="0 0 22 20"><g stroke="#bdbdbd" stroke-width="1.300" fill="#161616"><path d="M1 3.500h19M1 9.500h19M1 15.500h19"/><circle cx="2.500" cy="3.500" r="1.400"/><circle cx="18.500" cy="3.500" r="1.400"/><circle cx="10.500" cy="9.500" r="1.400"/><circle cx="2.500" cy="15.500" r="1.400"/><circle cx="18.500" cy="15.500" r="1.400"/></g></svg><div class="b" style="left:1633.00px;top:529.00px;width:8.00px;height:8.00px;background:#f04a3c;border-radius:4px;"></div><div class="b" style="left:1644.00px;top:533.00px;width:551.50px;height:35.50px;background:#171717;border-radius:8px;border:1px solid #212121;box-sizing:border-box;"></div><span class="t" style="top:544.04px;font-size:12.5px;line-height:12.5px;color:#bdbdbd;font-weight:700;letter-spacing:0.014px;left:1810.00px;"><span style="color:#7a7a7a">Tools: </span><span style="color:#2f86e6">ctrl+click</span><span style="color:#bdbdbd"> to skip tool overlays</span></span><div class="b" style="left:2202.50px;top:533.00px;width:35.00px;height:35.00px;background:#161616;border-radius:17.5px;border:1px solid #202020;box-sizing:border-box;"></div><svg class="b" style="left:2209.00px;top:540.00px;" width="22" height="20" viewBox="0 0 22 20"><path d="M11 2.500l9 14.500H2z" fill="none" stroke="#c8c8c8" stroke-width="1.500" stroke-linejoin="round"/></svg>
<!-- sec_limber --><div class="b" style="left:1593.00px;top:580.00px;width:653.00px;height:811.00px;background:#121212;"></div><span class="t" style="top:587.82px;font-size:11.0px;line-height:11.0px;color:#e0e0e0;letter-spacing:-0.037px;left:1605.50px;">Limber 2</span><svg class="b" style="left:1658.50px;top:588.50px;" width="10" height="10" viewBox="0 0 10 10"><path d="M1 1.500h8M1 5h8M1 8.500h8" stroke="#aaa" stroke-width="1.300"/></svg><div class="b" style="left:1594.50px;top:606.00px;width:650.00px;height:783.50px;background:#131313;border:1px solid #1c1c1c;box-sizing:border-box;"></div><svg class="b" style="left:1601.00px;top:618.00px;" width="8" height="9" viewBox="0 0 8 9"><g fill="#a2a2a2"><circle cx="2" cy="2" r="0.900"/><circle cx="5.500" cy="1.500" r="0.900"/><circle cx="1.500" cy="5.500" r="0.900"/><circle cx="5" cy="7" r="0.900"/></g></svg><span class="t" style="top:616.62px;font-size:11.0px;line-height:11.0px;color:#b4b4b4;letter-spacing:2.059px;left:1612.50px;">INDICATE</span><div class="b" style="left:1660.00px;top:629.50px;width:258.70px;height:59.50px;background:#020202;border-radius:3px;border:1px solid #1f1f1f;box-sizing:border-box;"></div><span class="t" style="top:653.87px;font-size:11.0px;line-height:11.0px;color:#d0d0d0;letter-spacing:-0.160px;left:1789.35px;transform:translateX(-50%);margin-left:-0.08px;">Path</span><div class="b" style="left:1982.00px;top:629.50px;width:259.50px;height:59.50px;background:#020202;border-radius:3px;border:1px solid #1f1f1f;box-sizing:border-box;"></div><span class="t" style="top:653.87px;font-size:11.0px;line-height:11.0px;color:#d0d0d0;letter-spacing:-0.232px;left:2111.75px;transform:translateX(-50%);margin-left:-0.12px;">Circles</span><svg class="b" style="left:1617.00px;top:638.00px;" width="30" height="42" viewBox="0 0 30 42"><path d="M6 5c12 2 17 9 17.500 16M23.500 22c-1 8-8 12-17 14.500" fill="none" stroke="#a2a2a2" stroke-width="1.800"/><rect x="1.500" y="1.500" width="10" height="10" fill="#a2a2a2"/><rect x="20" y="18.500" width="7" height="7" fill="#a2a2a2"/><rect x="3" y="33" width="7" height="7" fill="#a2a2a2"/></svg><svg class="b" style="left:1936.00px;top:637.00px;" width="34" height="44" viewBox="0 0 34 44"><circle cx="10" cy="9" r="7.500" fill="#a2a2a2"/><circle cx="26.500" cy="25" r="5" fill="#a2a2a2"/><circle cx="10" cy="39" r="3.700" fill="#a2a2a2"/></svg><span class="t" style="top:696.62px;font-size:11px;line-height:11px;color:#a2a2a2;left:1601.00px;">+</span><span class="t" style="top:696.62px;font-size:11.0px;line-height:11.0px;color:#b4b4b4;letter-spacing:1.698px;left:1613.00px;">CREATE</span><div class="b" style="left:1660.00px;top:710.50px;width:258.70px;height:59.50px;background:#020202;border-radius:3px;border:1px solid #1f1f1f;box-sizing:border-box;"></div><span class="t" style="top:734.87px;font-size:11.0px;line-height:11.0px;color:#d0d0d0;letter-spacing:0.161px;left:1789.35px;transform:translateX(-50%);margin-left:0.08px;">New</span><div class="b" style="left:1982.00px;top:710.50px;width:259.50px;height:59.50px;background:#020202;border-radius:3px;border:1px solid #1f1f1f;box-sizing:border-box;"></div><span class="t" style="top:734.87px;font-size:11.0px;line-height:11.0px;color:#d0d0d0;letter-spacing:0.081px;left:2111.75px;transform:translateX(-50%);margin-left:0.04px;">Limb Library</span><svg class="b" style="left:1617.00px;top:727.00px;" width="26" height="26" viewBox="0 0 26 26"><path d="M13 1v24M1 13h24" stroke="#a2a2a2" stroke-width="4.500"/></svg><svg class="b" style="left:1937.00px;top:719.00px;" width="30" height="46" viewBox="0 0 30 46"><path d="M3 9.500L8 2l19 9.500v28L17 43 3 36.500z" fill="none" stroke="#a2a2a2" stroke-width="2.400" stroke-linejoin="round"/><path d="M3 9.500L17 16v27M17 16l10-4.500" fill="none" stroke="#a2a2a2" stroke-width="2.400" stroke-linejoin="round"/><path d="M3 9.500L8 2l19 9.500L17 16z" fill="#a2a2a2"/></svg><svg class="b" style="left:1601.50px;top:779.50px;" width="10" height="9" viewBox="0 0 10 9"><path d="M0 1h9.500M0 4.500h9.500M0 8h9.500" stroke="#a2a2a2" stroke-width="1.300"/></svg><span class="t" style="top:778.32px;font-size:11.0px;line-height:11.0px;color:#b4b4b4;letter-spacing:2.219px;left:1617.50px;">MANAGE</span><div class="b" style="left:1660.00px;top:791.50px;width:258.70px;height:59.50px;background:#020202;border-radius:3px;border:1px solid #1f1f1f;box-sizing:border-box;"></div><span class="t" style="top:815.87px;font-size:11.0px;line-height:11.0px;color:#d0d0d0;letter-spacing:0.071px;left:1789.35px;transform:translateX(-50%);margin-left:0.04px;">Duplicate</span><div class="b" style="left:1982.00px;top:791.50px;width:259.50px;height:59.50px;background:#020202;border-radius:3px;border:1px solid #1f1f1f;box-sizing:border-box;"></div><span class="t" style="top:815.87px;font-size:11.0px;line-height:11.0px;color:#d0d0d0;letter-spacing:-0.180px;left:2111.75px;transform:translateX(-50%);margin-left:-0.09px;">Rename</span><span class="t" style="top:812.59px;font-size:25px;line-height:25px;color:#a2a2a2;font-weight:700;left:1613.50px;">x</span><span class="t" style="top:807.49px;font-size:31px;line-height:31px;color:#a2a2a2;font-weight:700;left:1628.50px;">2</span><span class="t" style="top:798.74px;font-size:16.0px;line-height:16.0px;color:#a2a2a2;font-weight:700;letter-spacing:-0.297px;left:1929.50px;">LEG</span><svg class="b" style="left:1948.00px;top:819.00px;" width="6" height="6" viewBox="0 0 6 6"><path d="M0.500 5.500h5v-5z" fill="#a2a2a2"/></svg><span class="t" style="top:828.74px;font-size:16.0px;line-height:16.0px;color:#a2a2a2;font-weight:700;letter-spacing:0.688px;left:1936.00px;">ARM</span><div class="b" style="left:1660.00px;top:855.00px;width:258.70px;height:59.50px;background:#020202;border-radius:3px;border:1px solid #1f1f1f;box-sizing:border-box;"></div><span class="t" style="top:879.37px;font-size:11.0px;line-height:11.0px;color:#d0d0d0;letter-spacing:-0.172px;left:1789.35px;transform:translateX(-50%);margin-left:-0.09px;">Copy</span><div class="b" style="left:1982.00px;top:855.00px;width:259.50px;height:59.50px;background:#020202;border-radius:3px;border:1px solid #1f1f1f;box-sizing:border-box;"></div><span class="t" style="top:879.37px;font-size:11.0px;line-height:11.0px;color:#d0d0d0;letter-spacing:-0.428px;left:2111.75px;transform:translateX(-50%);margin-left:-0.21px;">Paste</span><svg class="b" style="left:1612.00px;top:864.00px;" width="36" height="40" viewBox="0 0 36 40"><g fill="none" stroke="#a2a2a2" stroke-width="2"><rect x="11" y="2" width="22.500" height="26.500"/><path d="M11 9.500H2v29h22.500V28.500"/></g></svg><svg class="b" style="left:1934.00px;top:864.00px;" width="36" height="40" viewBox="0 0 36 40"><path d="M28 9V2H2v28.500h8" fill="none" stroke="#a2a2a2" stroke-width="2"/><rect x="11" y="10" width="24" height="28.500" fill="#a2a2a2"/></svg><div class="b" style="left:1660.00px;top:918.00px;width:258.70px;height:59.50px;background:#020202;border-radius:3px;border:1px solid #1f1f1f;box-sizing:border-box;"></div><span class="t" style="top:942.37px;font-size:11.0px;line-height:11.0px;color:#d0d0d0;letter-spacing:0.060px;left:1789.35px;transform:translateX(-50%);margin-left:0.03px;">Add Art</span><div class="b" style="left:1982.00px;top:918.00px;width:259.50px;height:59.50px;background:#020202;border-radius:3px;border:1px solid #1f1f1f;box-sizing:border-box;"></div><span class="t" style="top:942.37px;font-size:11.0px;line-height:11.0px;color:#d0d0d0;letter-spacing:-0.550px;left:2111.75px;transform:translateX(-50%);margin-left:-0.28px;">Reset</span><svg class="b" style="left:1607.00px;top:926.00px;" width="48" height="44" viewBox="0 0 48 44"><path d="M40 7L22.500 22 38 34.500" fill="none" stroke="#a2a2a2" stroke-width="9.500" stroke-linecap="round" stroke-linejoin="round"/><path d="M3.500 11.500l8-6.500M3.500 31.500l9 6.500" stroke="#a2a2a2" stroke-width="4"/><path d="M14 11.500h6M14 34h6" stroke="#a2a2a2" stroke-width="2.500" stroke-dasharray="2.500 1.500"/></svg><svg class="b" style="left:1933.00px;top:930.00px;" width="38" height="36" viewBox="0 0 38 36"><path d="M19 7.500a11.500 11.500 0 1 1-11 8" fill="none" stroke="#a2a2a2" stroke-width="5.500"/><path d="M1.500 8l13.500-3-2.500 13.500z" fill="#a2a2a2"/></svg><svg class="b" style="left:1601.50px;top:985.50px;" width="10" height="10" viewBox="0 0 10 10"><circle cx="5" cy="5" r="3.700" fill="none" stroke="#a2a2a2" stroke-width="1.500"/><path d="M5 5V1.300A3.700 3.700 0 0 1 8.700 5z" fill="#a2a2a2"/></svg><span class="t" style="top:984.82px;font-size:11.0px;line-height:11.0px;color:#b4b4b4;letter-spacing:1.960px;left:1616.50px;">CONTROL</span><div class="b" style="left:1660.00px;top:998.50px;width:258.70px;height:59.50px;background:#020202;border-radius:3px;border:1px solid #1f1f1f;box-sizing:border-box;"></div><span class="t" style="top:1022.87px;font-size:11.0px;line-height:11.0px;color:#d0d0d0;letter-spacing:0.089px;left:1789.35px;transform:translateX(-50%);margin-left:0.04px;">Hide/Show</span><div class="b" style="left:1982.00px;top:998.50px;width:259.50px;height:59.50px;background:#020202;border-radius:3px;border:1px solid #1f1f1f;box-sizing:border-box;"></div><span class="t" style="top:1022.87px;font-size:11.0px;line-height:11.0px;color:#d0d0d0;letter-spacing:-0.139px;left:2111.75px;transform:translateX(-50%);margin-left:-0.07px;">+/- Size</span><svg class="b" style="left:1608.00px;top:1016.00px;" width="46" height="26" viewBox="0 0 46 26"><path d="M1 11.500C9 4 15 2 23 2s14 2 22 9.500C37 19 31 23.500 23 23.500S9 19 1 11.500z" fill="#a2a2a2"/><path d="M10 5.500a13 13 0 0 0 26 0 40 40 0 0 0-26 0z" fill="#131313"/><circle cx="26.500" cy="6" r="3.300" fill="#a2a2a2"/></svg><svg class="b" style="left:1933.00px;top:1008.00px;" width="40" height="40" viewBox="0 0 40 40"><path d="M13 36C7 29 2 24.500 2 19a11 11 0 0 1 22 0c0 5.500-5 10-11 17z" fill="#a2a2a2"/><path d="M30 16.500c-3.500-4-6.500-6.500-6.500-9.500a6.500 6.500 0 0 1 13 0c0 3-3 5.500-6.500 9.500z" fill="#a2a2a2"/></svg><div class="b" style="left:1660.00px;top:1061.50px;width:258.70px;height:59.50px;background:#020202;border-radius:3px;border:1px solid #1f1f1f;box-sizing:border-box;"></div><span class="t" style="top:1085.87px;font-size:11.0px;line-height:11.0px;color:#d0d0d0;letter-spacing:0.101px;left:1789.35px;transform:translateX(-50%);margin-left:0.05px;">+/- Locator</span><div class="b" style="left:1982.00px;top:1061.50px;width:259.50px;height:59.50px;background:#020202;border-radius:3px;border:1px solid #1f1f1f;box-sizing:border-box;"></div><span class="t" style="top:1085.87px;font-size:11.0px;line-height:11.0px;color:#d0d0d0;letter-spacing:-0.017px;left:2111.75px;transform:translateX(-50%);margin-left:-0.01px;">+/- FreeK</span><svg class="b" style="left:1616.00px;top:1068.00px;" width="34" height="48" viewBox="0 0 34 48"><path d="M6 4l19 19-8 7" fill="none" stroke="#a2a2a2" stroke-width="5.500"/><path d="M5 44.500c-1-6 2-10.500 8-10.500 4 2 5 6 2 9-3 2-6 2-10 1.500z" fill="#a2a2a2"/></svg><svg class="b" style="left:1936.00px;top:1068.00px;" width="34" height="48" viewBox="0 0 34 48"><path d="M8 4l12 12M20 31L8 42" stroke="#a2a2a2" stroke-width="4.500"/><circle cx="26" cy="23.500" r="6" fill="#a2a2a2"/></svg><div class="b" style="left:1660.00px;top:1124.50px;width:258.70px;height:59.50px;background:#020202;border-radius:3px;border:1px solid #1f1f1f;box-sizing:border-box;"></div><span class="t" style="top:1148.87px;font-size:11.0px;line-height:11.0px;color:#d0d0d0;letter-spacing:0.260px;left:1789.35px;transform:translateX(-50%);margin-left:0.13px;">+/- Auto-flop</span><div class="b" style="left:1982.00px;top:1124.50px;width:259.50px;height:59.50px;background:#020202;border-radius:3px;border:1px solid #1f1f1f;box-sizing:border-box;"></div><span class="t" style="top:1148.87px;font-size:11.0px;line-height:11.0px;color:#d0d0d0;letter-spacing:-0.263px;left:2111.75px;transform:translateX(-50%);margin-left:-0.13px;">Select</span><svg class="b" style="left:1615.00px;top:1133.00px;" width="32" height="44" viewBox="0 0 32 44"><path d="M3.500 6.500C9 1.500 21 1.500 27.500 6.500L15.500 22zM3.500 37.500C9 42.500 21 42.500 27.500 37.500L15.500 22z" fill="#a2a2a2"/></svg><svg class="b" style="left:1933.00px;top:1133.00px;" width="38" height="42" viewBox="0 0 38 42"><g fill="#a2a2a2"><rect x="17" y="2" width="19" height="9"/><rect x="17" y="16.500" width="19" height="9"/><rect x="2" y="31" width="34" height="9"/></g><g fill="none" stroke="#a2a2a2" stroke-width="2.500"><rect x="3.300" y="3.300" width="7.400" height="7.400"/><rect x="3.300" y="17.800" width="7.400" height="7.400"/></g></svg><svg class="b" style="left:1601.50px;top:1194.00px;" width="9" height="8" viewBox="0 0 9 8"><path d="M1 7h7M1 7l6-5.500" fill="none" stroke="#a2a2a2" stroke-width="1.300"/></svg><span class="t" style="top:1192.82px;font-size:11.0px;line-height:11.0px;color:#b4b4b4;letter-spacing:2.141px;left:1615.00px;">MATCH</span><div class="b" style="left:1601.50px;top:1207.00px;width:155.50px;height:57.50px;background:#020202;border-radius:3px;border:1px solid #1d1d1d;box-sizing:border-box;"></div><span class="t" style="top:1230.32px;font-size:11.0px;line-height:11.0px;color:#d0d0d0;letter-spacing:-0.531px;left:1609.00px;">FK</span><svg class="b" style="left:1738.50px;top:1232.50px;" width="11" height="7" viewBox="0 0 11 7"><path d="M1 1l4.500 4L10 1" fill="none" stroke="#d0d0d0" stroke-width="1.700"/></svg><div class="b" style="left:1762.50px;top:1207.00px;width:156.00px;height:57.50px;background:#020202;border-radius:3px;border:1px solid #1d1d1d;box-sizing:border-box;"></div><span class="t" style="top:1230.32px;font-size:11.0px;line-height:11.0px;color:#d0d0d0;letter-spacing:0.075px;left:1770.00px;">to IK</span><svg class="b" style="left:1899.50px;top:1232.50px;" width="11" height="7" viewBox="0 0 11 7"><path d="M1 1l4.500 4L10 1" fill="none" stroke="#d0d0d0" stroke-width="1.700"/></svg><div class="b" style="left:1982.00px;top:1206.00px;width:259.50px;height:59.50px;background:#020202;border-radius:3px;border:1px solid #1f1f1f;box-sizing:border-box;"></div><span class="t" style="top:1230.37px;font-size:11.0px;line-height:11.0px;color:#d0d0d0;letter-spacing:0.106px;left:2111.75px;transform:translateX(-50%);margin-left:0.05px;">Match</span><span class="t" style="top:1211.15px;font-size:21.0px;line-height:21.0px;color:#a2a2a2;letter-spacing:-0.700px;left:1929.50px;">FK</span><svg class="b" style="left:1947.50px;top:1233.00px;" width="6" height="6" viewBox="0 0 6 6"><path d="M0.500 5.500h5v-5z" fill="#a2a2a2"/></svg><span class="t" style="top:1239.15px;font-size:21.0px;line-height:21.0px;color:#a2a2a2;letter-spacing:-0.172px;left:1953.50px;">IK</span><svg class="b" style="left:1601.50px;top:1273.00px;" width="11" height="11" viewBox="0 0 11 11"><circle cx="5.500" cy="5.500" r="3.300" fill="none" stroke="#a2a2a2" stroke-width="1.400"/><path d="M5.500 0v2M5.500 9v2M0 5.500h2M9 5.500h2M1.600 1.600l1.400 1.400M8 8l1.400 1.400M9.400 1.600L8 3M3 8L1.600 9.400" stroke="#a2a2a2" stroke-width="1.300"/></svg><span class="t" style="top:1272.82px;font-size:11.0px;line-height:11.0px;color:#b4b4b4;letter-spacing:1.544px;left:1615.50px;">SYSTEM</span><div class="b" style="left:1660.00px;top:1286.50px;width:258.70px;height:59.50px;background:#020202;border-radius:3px;border:1px solid #1f1f1f;box-sizing:border-box;"></div><span class="t" style="top:1310.87px;font-size:11.0px;line-height:11.0px;color:#d0d0d0;letter-spacing:-0.156px;left:1789.35px;transform:translateX(-50%);margin-left:-0.08px;">Settings</span><div class="b" style="left:1982.00px;top:1286.50px;width:259.50px;height:59.50px;background:#020202;border-radius:3px;border:1px solid #1f1f1f;box-sizing:border-box;"></div><span class="t" style="top:1310.87px;font-size:11.0px;line-height:11.0px;color:#d0d0d0;letter-spacing:0.094px;left:2111.75px;transform:translateX(-50%);margin-left:0.05px;">Help</span><svg class="b" style="left:1609.50px;top:1296.00px;" width="41" height="41" viewBox="0 0 41 41"><rect x="17" y="0.500" width="7" height="10" rx="0.800" fill="#a2a2a2" transform="rotate(0 20.500 20.500)"/><rect x="17" y="0.500" width="7" height="10" rx="0.800" fill="#a2a2a2" transform="rotate(45 20.500 20.500)"/><rect x="17" y="0.500" width="7" height="10" rx="0.800" fill="#a2a2a2" transform="rotate(90 20.500 20.500)"/><rect x="17" y="0.500" width="7" height="10" rx="0.800" fill="#a2a2a2" transform="rotate(135 20.500 20.500)"/><rect x="17" y="0.500" width="7" height="10" rx="0.800" fill="#a2a2a2" transform="rotate(180 20.500 20.500)"/><rect x="17" y="0.500" width="7" height="10" rx="0.800" fill="#a2a2a2" transform="rotate(225 20.500 20.500)"/><rect x="17" y="0.500" width="7" height="10" rx="0.800" fill="#a2a2a2" transform="rotate(270 20.500 20.500)"/><rect x="17" y="0.500" width="7" height="10" rx="0.800" fill="#a2a2a2" transform="rotate(315 20.500 20.500)"/><circle cx="20.500" cy="20.500" r="14" fill="#a2a2a2"/><circle cx="20.500" cy="20.500" r="7.800" fill="#131313"/></svg><span class="t" style="top:1295.84px;font-size:40px;line-height:40px;color:#a2a2a2;font-weight:700;left:1940.00px;">?</span>
<!-- sec_right --><div class="b" style="left:2250.00px;top:85.00px;width:310.00px;height:53.00px;background:#121212;"></div><span class="t" style="top:91.62px;font-size:11.0px;line-height:11.0px;color:#e4e4e4;letter-spacing:-0.089px;left:2261.50px;">Preview</span><svg class="b" style="left:2309.50px;top:92.50px;" width="10" height="10" viewBox="0 0 10 10"><path d="M1 1.500h8M1 5h8M1 8.500h8" stroke="#aaa" stroke-width="1.300"/></svg><svg class="b" style="left:2295.00px;top:116.70px;" width="14" height="11" viewBox="0 0 14 11"><rect x="1" y="0.500" width="2" height="10" fill="#d8d8d8"/><path d="M13 0.500v10L4.500 5.500z" fill="#d8d8d8"/></svg><svg class="b" style="left:2318.00px;top:116.70px;" width="14" height="11" viewBox="0 0 14 11"><path d="M9 0.500v10L0.500 5.500z" fill="#d8d8d8"/><rect x="10.500" y="0.500" width="2" height="10" fill="#d8d8d8"/></svg><svg class="b" style="left:2344.00px;top:116.70px;" width="12" height="11" viewBox="0 0 12 11"><path d="M1 0.500v10l9.500-5z" fill="#d8d8d8"/></svg><svg class="b" style="left:2366.50px;top:116.70px;" width="14" height="11" viewBox="0 0 14 11"><rect x="1" y="0.500" width="2" height="10" fill="#d8d8d8"/><path d="M4.500 0.500v10l8.500-5z" fill="#d8d8d8"/></svg><svg class="b" style="left:2391.00px;top:116.70px;" width="14" height="11" viewBox="0 0 14 11"><path d="M1 0.500v10l8.500-5z" fill="#d8d8d8"/><rect x="10.500" y="0.500" width="2" height="10" fill="#d8d8d8"/></svg><div class="b" style="left:2250.00px;top:143.00px;width:310.00px;height:1248.00px;background:#121212;"></div><div class="b" style="left:2250.00px;top:166.00px;width:300.00px;height:2.00px;background:#030303;"></div><div class="b" style="left:2250.00px;top:191.80px;width:300.00px;height:2.00px;background:#030303;"></div><div class="b" style="left:2250.00px;top:217.60px;width:300.00px;height:2.00px;background:#030303;"></div><div class="b" style="left:2250.00px;top:243.70px;width:300.00px;height:2.00px;background:#030303;"></div><div class="b" style="left:2250.00px;top:269.50px;width:300.00px;height:2.00px;background:#030303;"></div><span class="t" style="top:149.02px;font-size:11.0px;line-height:11.0px;color:#d0d0d0;letter-spacing:0.106px;left:2261.50px;">Align</span><span class="t" style="top:175.12px;font-size:11.0px;line-height:11.0px;color:#d0d0d0;letter-spacing:0.072px;left:2261.50px;">Audio</span><span class="t" style="top:201.02px;font-size:11.0px;line-height:11.0px;color:#d0d0d0;letter-spacing:-0.275px;left:2261.50px;">Effects &amp; Presets</span><span class="t" style="top:226.82px;font-size:11.0px;line-height:11.0px;color:#d0d0d0;letter-spacing:-0.132px;left:2261.50px;">Libraries</span><span class="t" style="top:252.92px;font-size:11.0px;line-height:11.0px;color:#d0d0d0;letter-spacing:-0.116px;left:2261.50px;">Paint</span><span class="t" style="top:279.32px;font-size:11.0px;line-height:11.0px;color:#e0e0e0;letter-spacing:-0.165px;left:2261.50px;">Properties: 2 layers selected</span><svg class="b" style="left:2531.00px;top:280.00px;" width="10" height="10" viewBox="0 0 10 10"><path d="M1 1.500h8M1 5h8M1 8.500h8" stroke="#aaa" stroke-width="1.300"/></svg><span class="t" style="top:301.82px;font-size:11.0px;line-height:11.0px;color:#e0e0e0;font-weight:700;letter-spacing:-0.247px;left:2260.00px;">Layer Transform</span><span class="t" style="top:302.02px;font-size:11.0px;line-height:11.0px;color:#3f8fe6;letter-spacing:-0.450px;left:2402.00px;">Reset</span><svg class="b" style="left:2271.30px;top:317.70px;" width="14" height="16" viewBox="0 0 14 16"><circle cx="7" cy="9.500" r="5.300" fill="none" stroke="#bdbdbd" stroke-width="1.400"/><path d="M5 1.200h4M7 1.200v2.800M10.800 4.200l1.200-1.200" stroke="#bdbdbd" stroke-width="1.300" fill="none"/></svg><span class="t" style="top:321.02px;font-size:11.0px;line-height:11.0px;color:#d0d0d0;letter-spacing:0.043px;left:2308.00px;">Anchor Point</span><svg class="b" style="left:2271.30px;top:337.70px;" width="14" height="16" viewBox="0 0 14 16"><circle cx="7" cy="9.500" r="5.300" fill="none" stroke="#bdbdbd" stroke-width="1.400"/><path d="M5 1.200h4M7 1.200v2.800M10.800 4.200l1.200-1.200" stroke="#bdbdbd" stroke-width="1.300" fill="none"/></svg><span class="t" style="top:341.02px;font-size:11.0px;line-height:11.0px;color:#d0d0d0;letter-spacing:-0.018px;left:2308.00px;">Position</span><svg class="b" style="left:2271.30px;top:357.70px;" width="14" height="16" viewBox="0 0 14 16"><circle cx="7" cy="9.500" r="5.300" fill="none" stroke="#bdbdbd" stroke-width="1.400"/><path d="M5 1.200h4M7 1.200v2.800M10.800 4.200l1.200-1.200" stroke="#bdbdbd" stroke-width="1.300" fill="none"/></svg><span class="t" style="top:361.02px;font-size:11.0px;line-height:11.0px;color:#d0d0d0;letter-spacing:-0.406px;left:2308.00px;">Scale</span><svg class="b" style="left:2271.30px;top:377.70px;" width="14" height="16" viewBox="0 0 14 16"><circle cx="7" cy="9.500" r="5.300" fill="none" stroke="#bdbdbd" stroke-width="1.400"/><path d="M5 1.200h4M7 1.200v2.800M10.800 4.200l1.200-1.200" stroke="#bdbdbd" stroke-width="1.300" fill="none"/></svg><span class="t" style="top:381.02px;font-size:11.0px;line-height:11.0px;color:#d0d0d0;letter-spacing:0.002px;left:2308.00px;">Rotation</span><svg class="b" style="left:2271.30px;top:397.70px;" width="14" height="16" viewBox="0 0 14 16"><circle cx="7" cy="9.500" r="5.300" fill="none" stroke="#bdbdbd" stroke-width="1.400"/><path d="M5 1.200h4M7 1.200v2.800M10.800 4.200l1.200-1.200" stroke="#bdbdbd" stroke-width="1.300" fill="none"/></svg><span class="t" style="top:401.02px;font-size:11.0px;line-height:11.0px;color:#d0d0d0;letter-spacing:-0.042px;left:2308.00px;">Opacity</span><span class="t" style="top:321.02px;font-size:11px;line-height:11px;color:#3f8fe6;left:2402.00px;">–</span><span class="t" style="top:321.02px;font-size:11px;line-height:11px;color:#3f8fe6;left:2452.50px;">–</span><div class="b" style="left:2400.00px;top:334.70px;width:39.50px;height:1.00px;background:#3c3c3c;"></div><div class="b" style="left:2451.00px;top:334.70px;width:39.50px;height:1.00px;background:#3c3c3c;"></div><span class="t" style="top:341.02px;font-size:11px;line-height:11px;color:#3f8fe6;left:2402.00px;">–</span><span class="t" style="top:341.02px;font-size:11px;line-height:11px;color:#3f8fe6;left:2452.50px;">–</span><div class="b" style="left:2400.00px;top:354.70px;width:39.50px;height:1.00px;background:#3c3c3c;"></div><div class="b" style="left:2451.00px;top:354.70px;width:39.50px;height:1.00px;background:#3c3c3c;"></div><svg class="b" style="left:2377.00px;top:362.70px;" width="16" height="8" viewBox="0 0 16 8"><rect x="0.750" y="1.250" width="8" height="5.500" rx="2.750" fill="none" stroke="#3f8fe6" stroke-width="1.400"/><rect x="7.250" y="1.250" width="8" height="5.500" rx="2.750" fill="none" stroke="#3f8fe6" stroke-width="1.400"/></svg><span class="t" style="top:361.02px;font-size:11.0px;line-height:11.0px;color:#3f8fe6;letter-spacing:0.214px;left:2402.00px;">100</span><span class="t" style="top:361.02px;font-size:11px;line-height:11px;color:#c8c8c8;left:2421.50px;">%</span><span class="t" style="top:361.02px;font-size:11.0px;line-height:11.0px;color:#3f8fe6;letter-spacing:0.214px;left:2452.50px;">100</span><span class="t" style="top:361.02px;font-size:11px;line-height:11px;color:#c8c8c8;left:2472.00px;">%</span><div class="b" style="left:2400.00px;top:374.70px;width:39.50px;height:1.00px;background:#3c3c3c;"></div><div class="b" style="left:2451.00px;top:374.70px;width:39.50px;height:1.00px;background:#3c3c3c;"></div><span class="t" style="top:381.02px;font-size:11.0px;line-height:11.0px;color:#3f8fe6;letter-spacing:0.287px;left:2402.00px;">0x+0°</span><div class="b" style="left:2400.00px;top:394.70px;width:51.50px;height:1.00px;background:#3c3c3c;"></div><span class="t" style="top:401.02px;font-size:11.0px;line-height:11.0px;color:#3f8fe6;letter-spacing:0.214px;left:2402.00px;">100</span><span class="t" style="top:401.02px;font-size:11px;line-height:11px;color:#c8c8c8;left:2421.50px;">%</span><div class="b" style="left:2400.00px;top:414.70px;width:39.50px;height:1.00px;background:#3c3c3c;"></div><div class="b" style="left:2522.00px;top:1363.00px;width:31.00px;height:31.00px;background:#000;"></div><svg class="b" style="left:2529.50px;top:1367.50px;" width="16" height="22" viewBox="0 0 16 22"><rect x="5" y="1" width="6" height="11" rx="3" fill="#fff"/><path d="M2 8.500a6 6 0 0 0 12 0M8 14.500v4" fill="none" stroke="#fff" stroke-width="1.500"/></svg>
<!-- sec_taskbar --><div class="b" style="left:0.00px;top:1392.00px;width:2560.00px;height:48.00px;background:linear-gradient(90deg,#1b0d1d 0%,#1e0d1c 20%,#27101a 32%,#251510 40%,#20170b 48%,#25160a 54%,#2b1409 60%,#2e0e06 100%);"></div><svg class="b" style="left:16.00px;top:1405.30px;" width="24" height="22" viewBox="0 0 24 22"><rect x="0" y="0" width="24" height="22" rx="1" fill="#0b4fa8"/><rect x="2.200" y="2.500" width="8.600" height="17" fill="#eaeaea"/><rect x="13" y="2.500" width="8.800" height="9" fill="#4fc0f0"/><rect x="13" y="11.500" width="8.800" height="8" fill="#1c8cf0"/></svg><svg class="b" style="left:826.00px;top:1405.00px;" width="24" height="24" viewBox="0 0 24 24"><defs><linearGradient id="wg" x1="0" y1="0" x2="1" y2="1"><stop offset="0" stop-color="#6fd8ff"/><stop offset="1" stop-color="#1e9be8"/></linearGradient></defs><g fill="url(#wg)"><rect x="0" y="0" width="11.200" height="11.200" rx="1"/><rect x="12.500" y="0" width="11.200" height="11.200" rx="1"/><rect x="0" y="12.500" width="11.200" height="11.200" rx="1"/><rect x="12.500" y="12.500" width="11.200" height="11.200" rx="1"/></g></svg><div class="b" style="left:863.00px;top:1401.00px;width:218.50px;height:31.00px;background:#3b3029;border-radius:15.5px;"></div><svg class="b" style="left:874.00px;top:1408.00px;" width="16" height="16" viewBox="0 0 16 16"><circle cx="9" cy="6.500" r="5" fill="none" stroke="#e8e8e8" stroke-width="1.700"/><path d="M5.500 10.500l-4 4" stroke="#e8e8e8" stroke-width="1.700" stroke-linecap="round"/></svg><span class="t" style="top:1409.77px;font-size:14.0px;line-height:14.0px;color:#d8d8d8;letter-spacing:-0.477px;left:900.30px;">Search</span><svg class="b" style="left:1036.00px;top:1403.00px;" width="36" height="28" viewBox="0 0 36 28"><path d="M14 8l6-5.500 5 2.500 5-2.500L36 8l-2 19H16z" fill="#2f9a3f"/><path d="M20 2.500l5 8 5-8-2.500 24h-5z" fill="#49c25c"/><path d="M25 10.500v16" stroke="#1c6a2a" stroke-width="1"/><path d="M4 27c-2-6 0-12 4-14l2 1c2 5 2 9 0 13z" fill="#b5622c"/><path d="M6 13V4.500M3.500 6h5" stroke="#8a8a8a" stroke-width="1.600"/></svg><svg class="b" style="left:1093.00px;top:1404.00px;" width="26" height="24" viewBox="0 0 26 24"><rect x="2" y="8" width="16" height="14" rx="1.500" fill="#6e6e6e"/><rect x="8" y="2.500" width="17" height="15" rx="1.500" fill="#e8e8e8"/><rect x="8" y="2.500" width="17" height="15" rx="1.500" fill="url(#tvg)"/><defs><linearGradient id="tvg" x1="0" y1="0" x2="1" y2="1"><stop offset="0" stop-color="#fff"/><stop offset="1" stop-color="#c8c8c8"/></linearGradient></defs></svg><svg class="b" style="left:1137.00px;top:1403.50px;" width="26" height="26" viewBox="0 0 26 26"><path d="M13 1.500a11 11 0 0 1 0 22c-2 0-4-.500-5.500-1.500L2 24l1.500-5A11 11 0 0 1 13 1.500z" fill="#7b6fe0"/><rect x="6.500" y="8.500" width="9" height="8" rx="1.500" fill="#fff"/><path d="M16.500 11l3.500-2v7l-3.500-2z" fill="#fff"/></svg><svg class="b" style="left:1181.00px;top:1404.00px;" width="26" height="24" viewBox="0 0 26 24"><path d="M1 3.500a1.500 1.500 0 0 1 1.500-1.500h7l2.500 2.500h11.500a1.500 1.500 0 0 1 1.500 1.500v15a1.500 1.500 0 0 1-1.500 1.500h-21A1.500 1.500 0 0 1 1 21z" fill="#e8a80f"/><path d="M1 7.500h24v13.500a1.500 1.500 0 0 1-1.500 1.500h-21A1.500 1.500 0 0 1 1 21z" fill="#ffd245"/><rect x="6" y="15.500" width="14" height="7" rx="1.500" fill="#1e7fd8"/><rect x="9.500" y="19" width="7" height="1.600" rx=".800" fill="#9fd0ff"/></svg><div class="b" style="left:1191.00px;top:1433.00px;width:6.00px;height:3.00px;background:#8c8c8c;border-radius:1.5px;"></div><svg class="b" style="left:1225.00px;top:1403.00px;" width="26" height="27" viewBox="0 0 26 27"><path d="M8 7V4.500a2 2 0 0 1 2-2h6a2 2 0 0 1 2 2V7" fill="none" stroke="#3aa0e8" stroke-width="1.800"/><path d="M1.500 7h23v16a2.500 2.500 0 0 1-2.500 2.500H4A2.500 2.500 0 0 1 1.500 23z" fill="#f2f2f2"/><rect x="7.500" y="10.500" width="5" height="5" fill="#f05022"/><rect x="13.500" y="10.500" width="5" height="5" fill="#7fba00"/><rect x="7.500" y="16.500" width="5" height="5" fill="#01a4ef"/><rect x="13.500" y="16.500" width="5" height="5" fill="#ffb902"/></svg><svg class="b" style="left:1269.00px;top:1404.00px;" width="27" height="25" viewBox="0 0 27 25"><rect x="7" y="1" width="19" height="23" rx="1.500" fill="#c45bd6"/><rect x="19" y="1" width="7" height="7.600" fill="#d98be6"/><rect x="19" y="8.600" width="7" height="7.600" fill="#b344c8"/><rect x="19" y="16.200" width="7" height="7.800" fill="#8a2da3"/><rect x="0.500" y="6" width="13" height="13" rx="1.500" fill="#7719aa"/><path d="M4.500 16V9l5 7V9" fill="none" stroke="#fff" stroke-width="1.600"/></svg><div class="b" style="left:1279.00px;top:1433.00px;width:6.00px;height:3.00px;background:#8c8c8c;border-radius:1.5px;"></div><svg class="b" style="left:1313.50px;top:1403.50px;" width="26" height="26" viewBox="0 0 26 26"><circle cx="13" cy="13" r="12" fill="#e33b2e"/><path d="M13 13L2.600 7A12 12 0 0 0 13 25l5.200-9z" fill="#2ba24c"/><path d="M13 13h12A12 12 0 0 1 13 25l5.200-9z" fill="#fbc116"/><path d="M2.600 7A12 12 0 0 1 23.400 7H13z" fill="#e33b2e"/><circle cx="13" cy="13" r="5.600" fill="#fff"/><circle cx="13" cy="13" r="4.400" fill="#3b7ded"/></svg><div class="b" style="left:1351.00px;top:1396.50px;width:40.00px;height:40.00px;background:#3a1a22;border-radius:5px;"></div><svg class="b" style="left:1359.00px;top:1405.50px;" width="24" height="22" viewBox="0 0 24 22"><path d="M1 1h22v13l-7 7H1z" fill="#ffd51e"/><path d="M23 14l-7 7v-7z" fill="#3a3a3a"/><path d="M16 21l7-7v-1l-8 8z" fill="#e8a40f"/></svg><div class="b" style="left:1368.00px;top:1433.00px;width:6.00px;height:3.00px;background:#e8607a;border-radius:1.5px;"></div><svg class="b" style="left:1402.00px;top:1403.50px;" width="26" height="26" viewBox="0 0 26 26"><circle cx="13" cy="13" r="12" fill="#1ed760"/><path d="M6.500 9.500c4.500-1.500 9.500-1 13.500 1.200M7.500 13.300c3.500-1.100 7.500-.700 10.800 1.100M8.500 16.800c2.800-.800 5.600-.500 8 .900" fill="none" stroke="#111" stroke-width="1.900" stroke-linecap="round"/></svg><div class="b" style="left:1412.00px;top:1433.00px;width:6.00px;height:3.00px;background:#8c8c8c;border-radius:1.5px;"></div><svg class="b" style="left:1446.00px;top:1403.50px;" width="26" height="26" viewBox="0 0 26 26"><circle cx="13" cy="13" r="12" fill="#e33b2e"/><path d="M13 13L2.600 7A12 12 0 0 0 13 25l5.200-9z" fill="#2ba24c"/><path d="M13 13h12A12 12 0 0 1 13 25l5.200-9z" fill="#fbc116"/><path d="M2.600 7A12 12 0 0 1 23.400 7H13z" fill="#e33b2e"/><circle cx="13" cy="13" r="5.600" fill="#fff"/><circle cx="13" cy="13" r="4.400" fill="#3b7ded"/></svg><svg class="b" style="left:1461.00px;top:1399.00px;" width="14" height="14" viewBox="0 0 14 14"><circle cx="7" cy="7" r="6.500" fill="#a08070"/><circle cx="7" cy="5.500" r="2.500" fill="#d8b8a0"/><path d="M2.500 12c.500-3 2.500-4 4.500-4s4 1 4.500 4z" fill="#c0a8a8"/></svg><div class="b" style="left:1456.00px;top:1433.00px;width:6.00px;height:3.00px;background:#8c8c8c;border-radius:1.5px;"></div><svg class="b" style="left:1490.00px;top:1404.00px;" width="27" height="25" viewBox="0 0 27 25"><rect x="7" y="1" width="19" height="23" rx="1.500" fill="#41a5ee"/><rect x="7" y="6.750" width="19" height="5.750" fill="#2b7cd3"/><rect x="7" y="12.500" width="19" height="5.750" fill="#185abd"/><rect x="7" y="18.250" width="19" height="5.750" rx="1" fill="#103f91"/><rect x="0.500" y="6" width="13" height="13" rx="1.500" fill="#185abd"/><path d="M3.300 9.500l1.700 6.500 2-6 2 6 1.700-6.500" fill="none" stroke="#fff" stroke-width="1.400"/></svg><div class="b" style="left:1500.00px;top:1433.00px;width:6.00px;height:3.00px;background:#8c8c8c;border-radius:1.5px;"></div><div class="b" style="left:1536.00px;top:1405.50px;width:21.50px;height:21.00px;background:#330000;border-radius:3.5px;"></div><span class="t" style="top:1409.79px;font-size:13px;line-height:13px;color:#ff9a00;font-weight:700;left:1546.80px;transform:translateX(-50%);">Ai</span><div class="b" style="left:1544.00px;top:1433.00px;width:6.00px;height:3.00px;background:#8c8c8c;border-radius:1.5px;"></div><div class="b" style="left:1570.50px;top:1396.50px;width:40.00px;height:40.00px;background:#2f1e15;border-radius:5px;border:1px solid #3a2a20;box-sizing:border-box;"></div><div class="b" style="left:1579.50px;top:1405.50px;width:21.50px;height:21.00px;background:#00005b;border-radius:3.5px;"></div><span class="t" style="top:1409.79px;font-size:13px;line-height:13px;color:#9999ff;font-weight:700;left:1590.30px;transform:translateX(-50%);">Ae</span><div class="b" style="left:1582.50px;top:1433.00px;width:16.00px;height:3.00px;background:#5ab0f0;border-radius:1.5px;"></div><div class="b" style="left:1623.50px;top:1405.50px;width:22.00px;height:21.00px;background:#141414;border-radius:2.5px;"></div><svg class="b" style="left:1625.50px;top:1408.50px;" width="18" height="15" viewBox="0 0 18 15"><rect x="5" y="1" width="12.500" height="13" fill="#76b900"/><path d="M1 7.500C3 4 6.500 3 9.500 4.500c2 1 3 2 4 3-1.500 2-3.500 3.500-6 3.500S3 9.500 1 7.500z" fill="#76b900" stroke="#141414" stroke-width="0.800"/><path d="M4 7.500c1.500-2 4-2.500 6-.800-1 1.800-3 2.800-4.500 2.300C4.800 8.800 4.300 8.200 4 7.500z" fill="none" stroke="#141414" stroke-width="0.900"/><circle cx="7.500" cy="7.300" r="1" fill="#141414"/></svg><div class="b" style="left:1631.50px;top:1433.00px;width:6.00px;height:3.00px;background:#8c8c8c;border-radius:1.5px;"></div><div class="b" style="left:1667.50px;top:1405.50px;width:21.50px;height:21.00px;background:conic-gradient(from 200deg at 50% 55%,#3a6cf0,#a03af0 15%,#f03a8a 30%,#ff4a1c 45%,#ffb01c 58%,#f5e61c 68%,#5ad45a 82%,#3ab0e0 92%,#3a6cf0);border-radius:4.5px;"></div><svg class="b" style="left:1669.50px;top:1409.50px;" width="18" height="13" viewBox="0 0 18 13"><path d="M5.500 11.500a4 4 0 0 1-.500-8A5 5 0 0 1 14.500 4.500a3.500 3.500 0 0 1-1 7zM7.500 9a2.800 2.800 0 0 1 4.500-3.300M10.500 4.500a3 3 0 0 1 2.800 4.500" fill="none" stroke="#fff" stroke-width="1.300"/></svg><div class="b" style="left:1675.50px;top:1433.00px;width:6.00px;height:3.00px;background:#8c8c8c;border-radius:1.5px;"></div><div class="b" style="left:1711.50px;top:1405.50px;width:21.50px;height:21.00px;background:#b30b00;border-radius:3.5px;"></div><svg class="b" style="left:1714.00px;top:1408.00px;" width="17" height="16" viewBox="0 0 17 16"><path d="M2.500 14c1.300-3.200 5.300-5 12-5.500-3.500-.500-7-3.500-6.200-6.500.700-1 1.600 0 1.300 2.200-.400 3.500-2.600 7.500-5.700 10.200-.900.500-1.600.300-1.400-.400z" fill="none" stroke="#fff" stroke-width="1.300" stroke-linejoin="round"/></svg><div class="b" style="left:1719.00px;top:1433.00px;width:6.00px;height:3.00px;background:#8c8c8c;border-radius:1.5px;"></div><svg class="b" style="left:2247.50px;top:1412.00px;" width="13" height="8" viewBox="0 0 13 8"><path d="M1 7l5.500-5.500L12 7" fill="none" stroke="#e4e4e4" stroke-width="1.300"/></svg><svg class="b" style="left:2269.50px;top:1410.00px;" width="17" height="11" viewBox="0 0 17 11"><path d="M4.500 10.500a3.500 3.500 0 0 1-.300-7 4.800 4.800 0 0 1 9 1 3 3 0 0 1 0 6z" fill="#e8e8e8"/></svg><svg class="b" style="left:2292.00px;top:1407.00px;" width="18" height="18" viewBox="0 0 18 18"><path d="M2.500 8a6.500 6.500 0 0 1 12-3M15.500 10a6.500 6.500 0 0 1-12 3" fill="none" stroke="#e4e4e4" stroke-width="1.200"/><path d="M15 1.500v4h-4M3 16.500v-4h4" fill="none" stroke="#e4e4e4" stroke-width="1.200"/><circle cx="13.500" cy="13.500" r="4" fill="#e81123"/></svg><svg class="b" style="left:2323.00px;top:1407.50px;" width="13" height="19" viewBox="0 0 13 19"><rect x="4" y="1" width="5" height="10" rx="2.500" fill="#2a4a78" stroke="#4a8ee0" stroke-width="1.300"/><path d="M1 8.500a5.500 5.500 0 0 0 11 0M6.500 14v4" fill="none" stroke="#4a8ee0" stroke-width="1.300"/></svg><span class="t" style="top:1403.10px;font-size:12.0px;line-height:12.0px;color:#e4e4e4;letter-spacing:-0.700px;left:2367.80px;transform:translateX(-50%);margin-left:-0.35px;">ENG</span><span class="t" style="top:1418.10px;font-size:12.0px;line-height:12.0px;color:#e4e4e4;letter-spacing:-0.700px;left:2367.80px;transform:translateX(-50%);margin-left:-0.35px;">UK</span><svg class="b" style="left:2396.00px;top:1408.00px;" width="19" height="17" viewBox="0 0 19 17"><rect x="1" y="3" width="13" height="9" rx="1" fill="none" stroke="#e4e4e4" stroke-width="1.200"/><path d="M7.500 12v3M4 15.500h7" stroke="#e4e4e4" stroke-width="1.200"/><rect x="12.500" y="0.500" width="4.500" height="6" rx="1" fill="#2a0f08" stroke="#e4e4e4" stroke-width="1.100"/><path d="M14.800 6.500v6.500" stroke="#e4e4e4" stroke-width="1.100"/></svg><svg class="b" style="left:2421.00px;top:1408.50px;" width="18" height="16" viewBox="0 0 18 16"><path d="M1.500 5.500h2.500l4-3.500v12l-4-3.500H1.500z" fill="none" stroke="#e4e4e4" stroke-width="1.200" stroke-linejoin="round"/><path d="M10.500 5.500a3.500 3.500 0 0 1 0 5M12.500 3.500a6.500 6.500 0 0 1 0 9M14.500 1.500a9.500 9.500 0 0 1 0 13" fill="none" stroke="#e4e4e4" stroke-width="1.100"/></svg><span class="t" style="top:1402.30px;font-size:12.0px;line-height:12.0px;color:#e4e4e4;letter-spacing:-0.506px;left:2513.00px;transform:translateX(-100%);margin-left:-0.51px;">13:03</span><span class="t" style="top:1417.80px;font-size:12.0px;line-height:12.0px;color:#e4e4e4;letter-spacing:-0.006px;left:2513.00px;transform:translateX(-100%);margin-left:-0.01px;">10/04/2025</span><div class="b" style="left:2521.00px;top:1402.00px;width:32.00px;height:31.50px;background:#000;"></div><svg class="b" style="left:2527.00px;top:1407.00px;" width="21" height="21" viewBox="0 0 21 21"><path d="M17.500 10.500a7 7 0 1 1-3-5.700" fill="none" stroke="#fff" stroke-width="2"/><path d="M13 1.500l4.500 3-3.500 4" fill="none" stroke="#fff" stroke-width="1.800"/><circle cx="10.500" cy="10.500" r="2.300" fill="#fff"/><path d="M10.500 13v6" stroke="#fff" stroke-width="1.600"/></svg>
<!-- sec_menu --><div class="b" style="left:188.30px;top:544.70px;width:221.70px;height:639.60px;background:#f9f9f9;border-radius:8px;box-shadow:0 4px 14px rgba(0,0,0,.45),0 0 0 0.500px rgba(0,0,0,.25);"></div><span class="t" style="top:553.36px;font-size:11.5px;line-height:11.5px;color:#1f1f1f;left:225.60px;">Mask</span><svg class="b" style="left:389.80px;top:554.80px;" width="6" height="9" viewBox="0 0 6 9"><path d="M1 1l3.200 3.200L1 7.400" fill="none" stroke="#555" stroke-width="1"/></svg><span class="t" style="top:576.69px;font-size:11.5px;line-height:11.5px;color:#1f1f1f;left:225.60px;">Mask and Shape Path</span><svg class="b" style="left:389.80px;top:578.13px;" width="6" height="9" viewBox="0 0 6 9"><path d="M1 1l3.200 3.200L1 7.400" fill="none" stroke="#555" stroke-width="1"/></svg><span class="t" style="top:600.02px;font-size:11.5px;line-height:11.5px;color:#1f1f1f;left:225.60px;">Quality</span><svg class="b" style="left:389.80px;top:601.46px;" width="6" height="9" viewBox="0 0 6 9"><path d="M1 1l3.200 3.200L1 7.400" fill="none" stroke="#555" stroke-width="1"/></svg><span class="t" style="top:623.35px;font-size:11.5px;line-height:11.5px;color:#1f1f1f;left:225.60px;">Switches</span><svg class="b" style="left:389.80px;top:624.79px;" width="6" height="9" viewBox="0 0 6 9"><path d="M1 1l3.200 3.200L1 7.400" fill="none" stroke="#555" stroke-width="1"/></svg><span class="t" style="top:646.68px;font-size:11.5px;line-height:11.5px;color:#1f1f1f;left:225.60px;">Transform</span><svg class="b" style="left:389.80px;top:648.12px;" width="6" height="9" viewBox="0 0 6 9"><path d="M1 1l3.200 3.200L1 7.400" fill="none" stroke="#555" stroke-width="1"/></svg><span class="t" style="top:670.01px;font-size:11.5px;line-height:11.5px;color:#1f1f1f;left:225.60px;">Time</span><svg class="b" style="left:389.80px;top:671.45px;" width="6" height="9" viewBox="0 0 6 9"><path d="M1 1l3.200 3.200L1 7.400" fill="none" stroke="#555" stroke-width="1"/></svg><span class="t" style="top:693.34px;font-size:11.5px;line-height:11.5px;color:#1f1f1f;left:225.60px;">Frame Blending</span><svg class="b" style="left:389.80px;top:694.78px;" width="6" height="9" viewBox="0 0 6 9"><path d="M1 1l3.200 3.200L1 7.400" fill="none" stroke="#555" stroke-width="1"/></svg><span class="t" style="top:716.67px;font-size:11.5px;line-height:11.5px;color:#1f1f1f;left:225.60px;">3D Layer</span><span class="t" style="top:740.00px;font-size:11.5px;line-height:11.5px;color:#1f1f1f;left:225.60px;">Guide Layer</span><div class="b" style="left:196.00px;top:760.27px;width:206.00px;height:17.50px;background:#efefef;border-radius:4px;"></div><span class="t" style="top:763.33px;font-size:11.5px;line-height:11.5px;color:#a0a0a0;left:225.60px;">Environment Layer</span><span class="t" style="top:786.66px;font-size:11.5px;line-height:11.5px;color:#1f1f1f;left:225.60px;">Markers</span><svg class="b" style="left:389.80px;top:788.10px;" width="6" height="9" viewBox="0 0 6 9"><path d="M1 1l3.200 3.200L1 7.400" fill="none" stroke="#555" stroke-width="1"/></svg><span class="t" style="top:809.99px;font-size:11.5px;line-height:11.5px;color:#1f1f1f;left:225.60px;">Blending Mode</span><svg class="b" style="left:389.80px;top:811.43px;" width="6" height="9" viewBox="0 0 6 9"><path d="M1 1l3.200 3.200L1 7.400" fill="none" stroke="#555" stroke-width="1"/></svg><span class="t" style="top:833.32px;font-size:11.5px;line-height:11.5px;color:#1f1f1f;left:225.60px;">Layer Styles</span><svg class="b" style="left:389.80px;top:834.76px;" width="6" height="9" viewBox="0 0 6 9"><path d="M1 1l3.200 3.200L1 7.400" fill="none" stroke="#555" stroke-width="1"/></svg><div class="b" style="left:230.00px;top:853.09px;width:172.00px;height:1.00px;background:#dcdcdc;"></div><span class="t" style="top:863.98px;font-size:11.5px;line-height:11.5px;color:#1f1f1f;left:225.60px;">Effect</span><svg class="b" style="left:389.80px;top:865.42px;" width="6" height="9" viewBox="0 0 6 9"><path d="M1 1l3.200 3.200L1 7.400" fill="none" stroke="#555" stroke-width="1"/></svg><span class="t" style="top:887.31px;font-size:11.5px;line-height:11.5px;color:#1f1f1f;left:225.60px;">Keyframe Assistant</span><svg class="b" style="left:389.80px;top:888.75px;" width="6" height="9" viewBox="0 0 6 9"><path d="M1 1l3.200 3.200L1 7.400" fill="none" stroke="#555" stroke-width="1"/></svg><span class="t" style="top:910.64px;font-size:11.5px;line-height:11.5px;color:#1f1f1f;left:225.60px;">Track &amp; Stabilize</span><svg class="b" style="left:389.80px;top:912.08px;" width="6" height="9" viewBox="0 0 6 9"><path d="M1 1l3.200 3.200L1 7.400" fill="none" stroke="#555" stroke-width="1"/></svg><div class="b" style="left:230.00px;top:930.41px;width:172.00px;height:1.00px;background:#dcdcdc;"></div><span class="t" style="top:941.30px;font-size:11.5px;line-height:11.5px;color:#1f1f1f;left:225.60px;">Open</span><svg class="b" style="left:389.80px;top:942.74px;" width="6" height="9" viewBox="0 0 6 9"><path d="M1 1l3.200 3.200L1 7.400" fill="none" stroke="#555" stroke-width="1"/></svg><span class="t" style="top:964.63px;font-size:11.5px;line-height:11.5px;color:#1f1f1f;left:225.60px;">Reveal</span><svg class="b" style="left:389.80px;top:966.07px;" width="6" height="9" viewBox="0 0 6 9"><path d="M1 1l3.200 3.200L1 7.400" fill="none" stroke="#555" stroke-width="1"/></svg><span class="t" style="top:987.96px;font-size:11.5px;line-height:11.5px;color:#1f1f1f;left:225.60px;">Create</span><svg class="b" style="left:389.80px;top:989.40px;" width="6" height="9" viewBox="0 0 6 9"><path d="M1 1l3.200 3.200L1 7.400" fill="none" stroke="#555" stroke-width="1"/></svg><div class="b" style="left:230.00px;top:1007.73px;width:172.00px;height:1.00px;background:#dcdcdc;"></div><span class="t" style="top:1018.62px;font-size:11.5px;line-height:11.5px;color:#1f1f1f;left:225.60px;">Camera</span><svg class="b" style="left:389.80px;top:1020.06px;" width="6" height="9" viewBox="0 0 6 9"><path d="M1 1l3.200 3.200L1 7.400" fill="none" stroke="#555" stroke-width="1"/></svg><span class="t" style="top:1041.95px;font-size:11.5px;line-height:11.5px;color:#1f1f1f;left:225.60px;">Pre-compose...</span><div class="b" style="left:230.00px;top:1061.72px;width:172.00px;height:1.00px;background:#dcdcdc;"></div><span class="t" style="top:1072.61px;font-size:11.5px;line-height:11.5px;color:#1f1f1f;left:225.60px;">Invert Selection</span><span class="t" style="top:1095.94px;font-size:11.5px;line-height:11.5px;color:#1f1f1f;left:225.60px;">Select Children</span><span class="t" style="top:1119.27px;font-size:11.5px;line-height:11.5px;color:#1f1f1f;left:225.60px;">Rename</span><span class="t" style="top:1142.60px;font-size:11.5px;line-height:11.5px;color:#1f1f1f;left:225.60px;">Add to Essential Graphics</span><span class="t" style="top:1165.93px;font-size:11.5px;line-height:11.5px;color:#1f1f1f;left:225.60px;">Scene Edit Detection...</span><svg class="b" style="left:290.50px;top:779.50px;" width="14" height="21" viewBox="0 0 14 21"><path d="M1 1v15.500l3.600-3.400 2.700 6 2.300-1-2.700-5.900h5z" fill="#fff" stroke="#000" stroke-width="1" stroke-linejoin="round"/></svg></div></body></html>
